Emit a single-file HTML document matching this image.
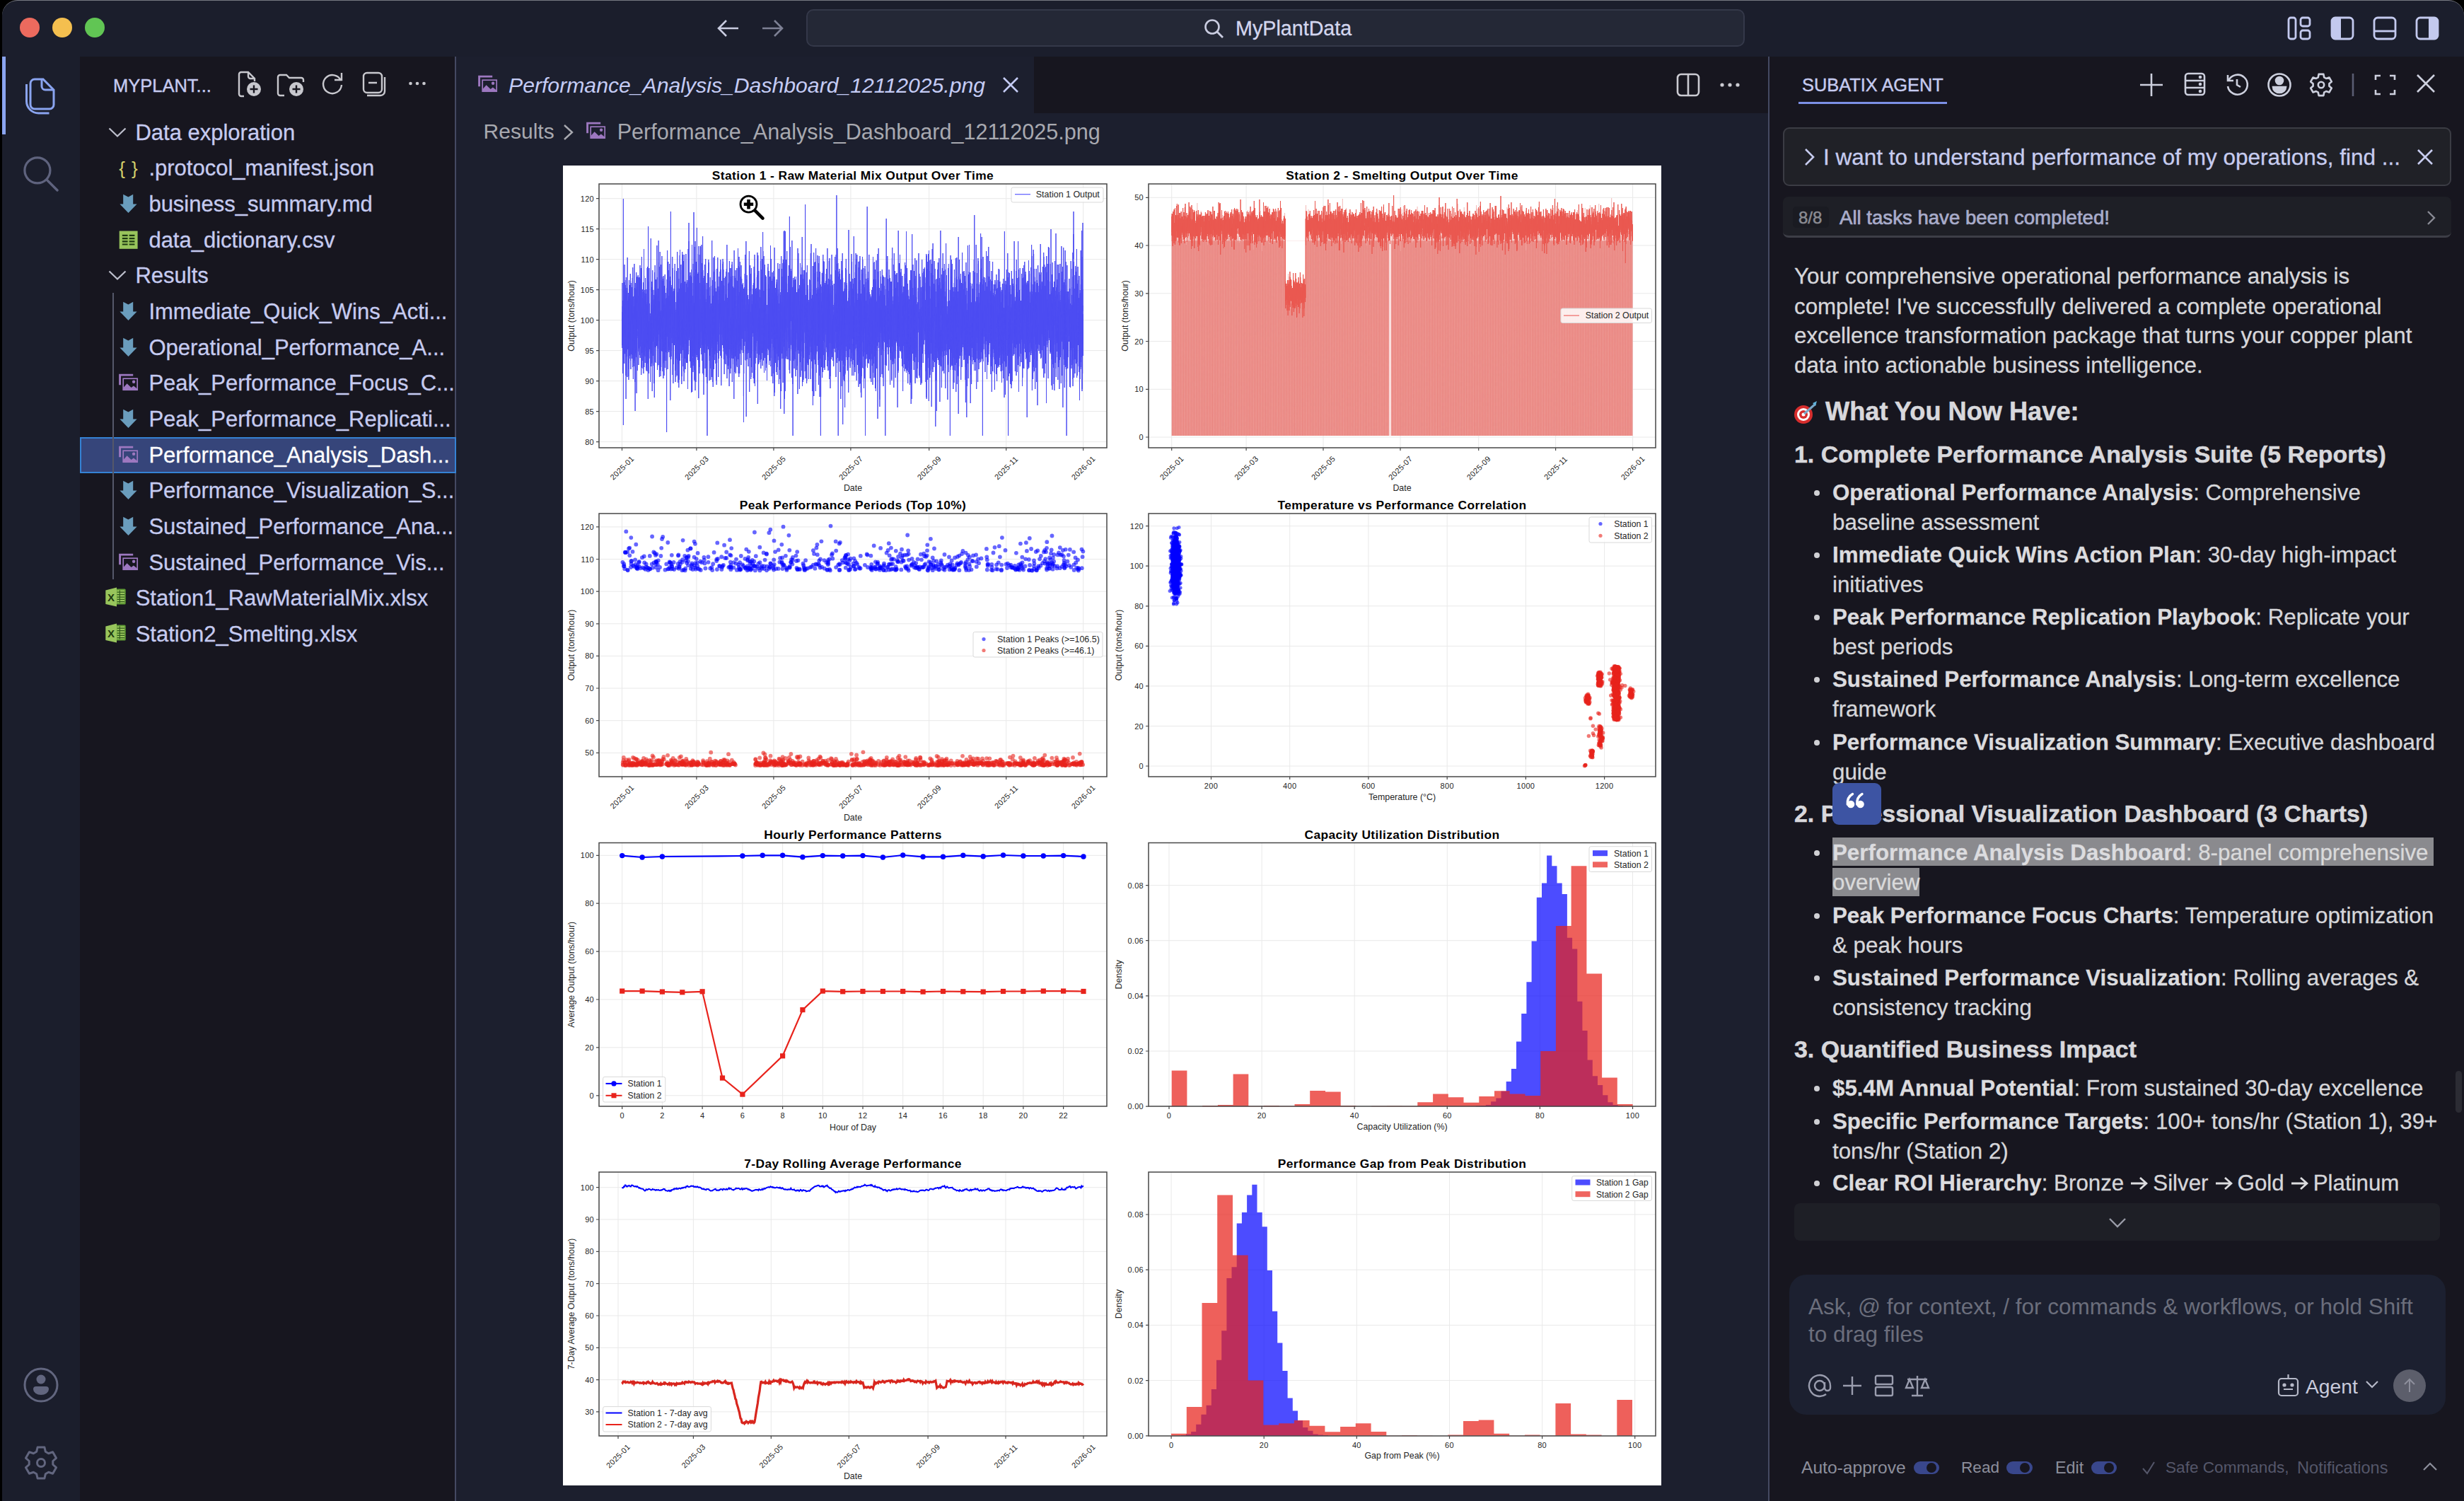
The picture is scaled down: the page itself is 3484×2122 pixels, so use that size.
<!DOCTYPE html>
<html><head><meta charset="utf-8"><style>
*{margin:0;padding:0;box-sizing:border-box}
html,body{width:3484px;height:2122px;overflow:hidden;background:#000;font-family:"Liberation Sans",sans-serif}
.abs{position:absolute}
.t31{position:absolute;font-size:31px;line-height:50px;white-space:nowrap;-webkit-text-stroke:0.3px currentColor}
.a31{position:absolute;font-size:31.3px;line-height:42px;white-space:nowrap;color:#d6d6da;-webkit-text-stroke:0.3px #d6d6da}
.a31 b{color:#dcdcdf}
.h34{position:absolute;font-size:33.9px;line-height:42px;white-space:nowrap;color:#d8d8dc;font-weight:bold;-webkit-text-stroke:0.5px #d8d8dc}
.h36{position:absolute;font-size:36.2px;line-height:42px;white-space:nowrap;color:#d8d8dc;font-weight:bold;-webkit-text-stroke:0.5px #d8d8dc}
.hl{color:#dadada}
</style></head><body>
<div class="abs" id="win" style="left:3px;top:0;width:3481px;height:2122px;background:#1b1e2c;border-radius:22px 22px 0 0;overflow:hidden;border-top:1.5px solid #777a82">
</div>
<!-- title bar -->
<div class="abs" style="left:28px;top:25px;width:28px;height:28px;border-radius:50%;background:#ec6a5e"></div>
<div class="abs" style="left:74px;top:25px;width:28px;height:28px;border-radius:50%;background:#f4bf4f"></div>
<div class="abs" style="left:120px;top:25px;width:28px;height:28px;border-radius:50%;background:#61c554"></div>
<svg class="abs" style="left:1012px;top:24px" width="36" height="32" viewBox="0 0 36 32"><path d="M32 16H5M15 5L4 16l11 11" fill="none" stroke="#c9cce0" stroke-width="2.6"/></svg>
<svg class="abs" style="left:1074px;top:24px" width="36" height="32" viewBox="0 0 36 32"><path d="M4 16h27M21 5l11 11-11 11" fill="none" stroke="#7d8094" stroke-width="2.6"/></svg>
<div class="abs" style="left:1140px;top:13px;width:1327px;height:53px;border-radius:10px;background:#242836;border:2px solid #343849"></div>
<svg class="abs" style="left:1701px;top:25px" width="32" height="32" viewBox="0 0 32 32"><circle cx="13" cy="13" r="9.5" fill="none" stroke="#c9cce0" stroke-width="2.6"/><path d="M20 20l8 8" stroke="#c9cce0" stroke-width="2.8"/></svg>
<div class="abs" style="left:1747px;top:20px;font-size:28.7px;line-height:40px;color:#d3d6ee;-webkit-text-stroke:0.3px #d3d6ee">MyPlantData</div>
<svg class="abs" style="left:3234px;top:22px" width="240" height="36" viewBox="0 0 240 36">
 <g fill="none" stroke="#c3c9ee" stroke-width="2.8">
  <rect x="2" y="3" width="10" height="30" rx="3"/><rect x="19" y="3" width="13" height="12" rx="3"/><rect x="19" y="21" width="13" height="12" rx="3"/>
  <rect x="63" y="3" width="30" height="30" rx="5"/>
  <rect x="123" y="3" width="30" height="30" rx="5"/><path d="M123 22h30"/>
  <rect x="183" y="3" width="30" height="30" rx="5"/>
 </g>
 <path d="M63 8a5 5 0 0 1 5-5h8v30h-8a5 5 0 0 1-5-5z" fill="#c3c9ee"/>
 <path d="M200 3h8a5 5 0 0 1 5 5v20a5 5 0 0 1-5 5h-8z" fill="#c3c9ee"/>
</svg>

<!-- activity bar -->
<div class="abs" style="left:3px;top:80px;width:5px;height:110px;background:#8aa4f0"></div>
<svg class="abs" style="left:0;top:80px" width="113" height="220" viewBox="0 0 113 220">
 <path d="M49 32h12l15 15v21a6 6 0 0 1-6 6H49a6 6 0 0 1-6-6V38a6 6 0 0 1 6-6z" fill="none" stroke="#8aa4f0" stroke-width="3"/>
 <path d="M59 32v10a5 5 0 0 0 5 5h12" fill="none" stroke="#8aa4f0" stroke-width="3"/>
 <path d="M37.5 39v24a17 17 0 0 0 17 17h15" fill="none" stroke="#8aa4f0" stroke-width="3"/>
 <circle cx="52.9" cy="160.8" r="18" fill="none" stroke="#5f637e" stroke-width="3.2"/>
 <path d="M66 174l15 15" stroke="#5f637e" stroke-width="3.4" stroke-linecap="round"/>
</svg>
<svg class="abs" style="left:32px;top:1932px" width="52" height="52" viewBox="0 0 52 52"><circle cx="26" cy="26" r="23" fill="none" stroke="#62667f" stroke-width="3"/><circle cx="26" cy="18" r="6.5" fill="#62667f"/><path d="M15 32a4 4 0 0 1 4-4h14a4 4 0 0 1 4 4a11 8 0 0 1-22 0z" fill="#62667f"/></svg>
<svg class="abs" style="left:32px;top:2042px" width="52" height="52" viewBox="0 0 52 52"><path d="M19.7 10.2L21.1 4.0L30.9 4.0L32.3 10.2L36.6 12.7L42.6 10.8L47.5 19.3L42.8 23.5L42.8 28.5L47.5 32.7L42.6 41.2L36.6 39.3L32.3 41.8L30.9 48.0L21.1 48.0L19.7 41.8L15.4 39.3L9.4 41.2L4.5 32.7L9.2 28.5L9.2 23.5L4.5 19.3L9.4 10.8L15.4 12.7Z" fill="none" stroke="#62667f" stroke-width="3" stroke-linejoin="round"/><circle cx="26" cy="26" r="5.5" fill="none" stroke="#62667f" stroke-width="3"/></svg>

<!-- sidebar -->
<div class="abs" style="left:113px;top:80px;width:530px;height:2042px;background:#17161f"></div>
<div class="abs" style="left:643px;top:80px;width:2px;height:2042px;background:#444962"></div>
<div class="abs" style="left:160px;top:101px;font-size:25.5px;line-height:40px;color:#c6cbf0;-webkit-text-stroke:0.4px #c6cbf0">MYPLANT...</div>
<svg class="abs" style="left:330px;top:97px" width="290" height="44" viewBox="0 0 290 44" fill="none" stroke="#c8c8ce" stroke-width="2.4">
 <path d="M15 39h-4a3 3 0 0 1-3-3V8a3 3 0 0 1 3-3h10l9 9v4M21 5v6a3 3 0 0 0 3 3h6"/>
 <circle cx="29" cy="29" r="10" fill="#c8c8ce" stroke="none"/><path d="M29 23.5v11M23.5 29h11" stroke="#17161f" stroke-width="2.4"/>
 <path d="M72 38h-6a3 3 0 0 1-3-3V12a3 3 0 0 1 3-3h9l4 4h17a3 3 0 0 1 3 3v3"/>
 <circle cx="89" cy="29" r="10" fill="#c8c8ce" stroke="none"/><path d="M89 23.5v11M83.5 29h11" stroke="#17161f" stroke-width="2.4"/>
 <path d="M152 17a13 13 0 1 0 1 6M153 6v10h-10"/>
 <rect x="184" y="6" width="26" height="28" rx="5"/><path d="M191 20h12M189 38h19a6 6 0 0 0 6-6V12"/>
 <circle cx="250.5" cy="21" r="2.3" fill="#c8c8ce" stroke="none"/><circle cx="260" cy="21" r="2.3" fill="#c8c8ce" stroke="none"/><circle cx="269.5" cy="21" r="2.3" fill="#c8c8ce" stroke="none"/>
</svg>
<div style="position:absolute;left:152px;top:174.5px;width:28px;height:24px"><svg width="28" height="24" viewBox="0 0 28 24"><path d="M2.5 6.5L14 17.5L25.5 6.5" fill="none" stroke="#bdbfcc" stroke-width="2.3"/></svg></div>
<div class="t31" style="left:191.4px;top:162.5px;color:#c6cbf0">Data exploration</div>
<div style="position:absolute;left:167px;top:224.2px;width:30px;height:28px;display:flex;align-items:center;justify-content:center"><svg width="30" height="30" viewBox="0 0 30 30"><text x="15" y="24" text-anchor="middle" font-family="Liberation Sans" font-size="26" fill="#d4cf6a" letter-spacing="1">{ }</text></svg></div>
<div class="t31" style="left:210.4px;top:213.2px;color:#c6cbf0">.protocol_manifest.json</div>
<div style="position:absolute;left:167px;top:274.9px;width:30px;height:28px;display:flex;align-items:center;justify-content:center"><svg width="30" height="30" viewBox="0 0 30 30"><path d="M7.2 0.8L14.4 4.6L21.2 0.8V14.6H26.6L14.5 27L2.4 14.6H7.2Z" fill="#6a9dbd"/></svg></div>
<div class="t31" style="left:210.4px;top:263.9px;color:#c6cbf0">business_summary.md</div>
<div style="position:absolute;left:167px;top:325.5px;width:30px;height:28px;display:flex;align-items:center;justify-content:center"><svg width="30" height="28" viewBox="0 0 30 28"><rect x="1.7" y="0.5" width="25.9" height="25.3" fill="#98c55c"/><path d="M5.9 6.9h7.7M15.7 6.9h7.7M5.9 11.1h7.7M15.7 11.1h7.7M5.9 15.3h7.7M15.7 15.3h7.7M5.9 19.5h7.7M15.7 19.5h7.7" stroke="#1e3a12" stroke-width="2.2"/></svg></div>
<div class="t31" style="left:210.4px;top:314.5px;color:#c6cbf0">data_dictionary.csv</div>
<div style="position:absolute;left:152px;top:377.2px;width:28px;height:24px"><svg width="28" height="24" viewBox="0 0 28 24"><path d="M2.5 6.5L14 17.5L25.5 6.5" fill="none" stroke="#bdbfcc" stroke-width="2.3"/></svg></div>
<div class="t31" style="left:191.4px;top:365.2px;color:#c6cbf0">Results</div>
<div style="position:absolute;left:167px;top:426.9px;width:30px;height:28px;display:flex;align-items:center;justify-content:center"><svg width="30" height="30" viewBox="0 0 30 30"><path d="M7.2 0.8L14.4 4.6L21.2 0.8V14.6H26.6L14.5 27L2.4 14.6H7.2Z" fill="#6a9dbd"/></svg></div>
<div class="t31" style="left:210.4px;top:415.9px;color:#c6cbf0">Immediate_Quick_Wins_Acti...</div>
<div style="position:absolute;left:167px;top:477.6px;width:30px;height:28px;display:flex;align-items:center;justify-content:center"><svg width="30" height="30" viewBox="0 0 30 30"><path d="M7.2 0.8L14.4 4.6L21.2 0.8V14.6H26.6L14.5 27L2.4 14.6H7.2Z" fill="#6a9dbd"/></svg></div>
<div class="t31" style="left:210.4px;top:466.6px;color:#c6cbf0">Operational_Performance_A...</div>
<div style="position:absolute;left:167px;top:528.3px;width:30px;height:28px;display:flex;align-items:center;justify-content:center"><svg width="30" height="28" viewBox="0 0 30 28"><path d="M2.6 16.3V2.1H21.2" fill="none" stroke="#9d78c0" stroke-width="2.9"/><rect x="7.2" y="7.2" width="20" height="16" fill="none" stroke="#9d78c0" stroke-width="1.7"/><path d="M7 20.5L12.6 14.3L18.6 20L21.9 17.4L27.5 22V23.9H7Z" fill="#9d78c0"/><circle cx="22.1" cy="11.8" r="2.2" fill="#9d78c0"/></svg></div>
<div class="t31" style="left:210.4px;top:517.3px;color:#c6cbf0">Peak_Performance_Focus_C...</div>
<div style="position:absolute;left:167px;top:578.9px;width:30px;height:28px;display:flex;align-items:center;justify-content:center"><svg width="30" height="30" viewBox="0 0 30 30"><path d="M7.2 0.8L14.4 4.6L21.2 0.8V14.6H26.6L14.5 27L2.4 14.6H7.2Z" fill="#6a9dbd"/></svg></div>
<div class="t31" style="left:210.4px;top:567.9px;color:#c6cbf0">Peak_Performance_Replicati...</div>
<div style="position:absolute;left:113px;top:617.5px;width:528px;height:47px;background:#36457a;border:2px solid #3582d4;box-sizing:content-box"></div>
<div style="position:absolute;left:167px;top:629.6px;width:30px;height:28px;display:flex;align-items:center;justify-content:center"><svg width="30" height="28" viewBox="0 0 30 28"><path d="M2.6 16.3V2.1H21.2" fill="none" stroke="#9d78c0" stroke-width="2.9"/><rect x="7.2" y="7.2" width="20" height="16" fill="none" stroke="#9d78c0" stroke-width="1.7"/><path d="M7 20.5L12.6 14.3L18.6 20L21.9 17.4L27.5 22V23.9H7Z" fill="#9d78c0"/><circle cx="22.1" cy="11.8" r="2.2" fill="#9d78c0"/></svg></div>
<div class="t31" style="left:210.4px;top:618.6px;color:#ffffff">Performance_Analysis_Dash...</div>
<div style="position:absolute;left:167px;top:680.3px;width:30px;height:28px;display:flex;align-items:center;justify-content:center"><svg width="30" height="30" viewBox="0 0 30 30"><path d="M7.2 0.8L14.4 4.6L21.2 0.8V14.6H26.6L14.5 27L2.4 14.6H7.2Z" fill="#6a9dbd"/></svg></div>
<div class="t31" style="left:210.4px;top:669.3px;color:#c6cbf0">Performance_Visualization_S...</div>
<div style="position:absolute;left:167px;top:731.0px;width:30px;height:28px;display:flex;align-items:center;justify-content:center"><svg width="30" height="30" viewBox="0 0 30 30"><path d="M7.2 0.8L14.4 4.6L21.2 0.8V14.6H26.6L14.5 27L2.4 14.6H7.2Z" fill="#6a9dbd"/></svg></div>
<div class="t31" style="left:210.4px;top:720.0px;color:#c6cbf0">Sustained_Performance_Ana...</div>
<div style="position:absolute;left:167px;top:781.7px;width:30px;height:28px;display:flex;align-items:center;justify-content:center"><svg width="30" height="28" viewBox="0 0 30 28"><path d="M2.6 16.3V2.1H21.2" fill="none" stroke="#9d78c0" stroke-width="2.9"/><rect x="7.2" y="7.2" width="20" height="16" fill="none" stroke="#9d78c0" stroke-width="1.7"/><path d="M7 20.5L12.6 14.3L18.6 20L21.9 17.4L27.5 22V23.9H7Z" fill="#9d78c0"/><circle cx="22.1" cy="11.8" r="2.2" fill="#9d78c0"/></svg></div>
<div class="t31" style="left:210.4px;top:770.7px;color:#c6cbf0">Sustained_Performance_Vis...</div>
<div style="position:absolute;left:147px;top:830.3px;width:32px;height:32px"><svg width="32" height="32" viewBox="0 0 32 32"><rect x="17" y="2.4" width="13.7" height="22" rx="1.5" fill="#5e9a34"/><rect x="18.5" y="4.5" width="10.5" height="18" fill="#98c55c"/><path d="M18.5 7.1h10.5M18.5 10.7h10.5M18.5 14.1h10.5M18.5 17.4h10.5M18.5 20.7h10.5M22.3 4.5v18" stroke="#2f5a1a" stroke-width="1.2"/><path d="M2.3 4.4L18 0.4V27.4L2.3 24.1Z" fill="#98c55c"/><text x="10" y="19.6" text-anchor="middle" font-family="Liberation Sans" font-size="15" font-weight="bold" fill="#1d3a10">X</text></svg></div>
<div class="t31" style="left:191.7px;top:821.3px;color:#c6cbf0">Station1_RawMaterialMix.xlsx</div>
<div style="position:absolute;left:147px;top:881.0px;width:32px;height:32px"><svg width="32" height="32" viewBox="0 0 32 32"><rect x="17" y="2.4" width="13.7" height="22" rx="1.5" fill="#5e9a34"/><rect x="18.5" y="4.5" width="10.5" height="18" fill="#98c55c"/><path d="M18.5 7.1h10.5M18.5 10.7h10.5M18.5 14.1h10.5M18.5 17.4h10.5M18.5 20.7h10.5M22.3 4.5v18" stroke="#2f5a1a" stroke-width="1.2"/><path d="M2.3 4.4L18 0.4V27.4L2.3 24.1Z" fill="#98c55c"/><text x="10" y="19.6" text-anchor="middle" font-family="Liberation Sans" font-size="15" font-weight="bold" fill="#1d3a10">X</text></svg></div>
<div class="t31" style="left:191.7px;top:872.0px;color:#c6cbf0">Station2_Smelting.xlsx</div>
<div style="position:absolute;left:159px;top:414px;width:2px;height:405px;background:#55586a"></div>

<!-- editor -->
<div class="abs" style="left:645px;top:80px;width:1855px;height:2042px;background:#1c1f2e"></div>
<div class="abs" style="left:1462px;top:80px;width:1038px;height:80px;background:#17161f"></div>
<div class="abs" style="left:675px;top:106px"><svg width="30" height="28" viewBox="0 0 30 28"><path d="M2.6 16.3V2.1H21.2" fill="none" stroke="#9d78c0" stroke-width="2.9"/><rect x="7.2" y="7.2" width="20" height="16" fill="none" stroke="#9d78c0" stroke-width="1.7"/><path d="M7 20.5L12.6 14.3L18.6 20L21.9 17.4L27.5 22V23.9H7Z" fill="#9d78c0"/><circle cx="22.1" cy="11.8" r="2.2" fill="#9d78c0"/></svg></div>
<div class="abs" style="left:719px;top:101px;font-size:30.2px;line-height:40px;font-style:italic;color:#c5ccf5;white-space:nowrap">Performance_Analysis_Dashboard_12112025.png</div>
<svg class="abs" style="left:1416px;top:107px" width="26" height="26" viewBox="0 0 26 26"><path d="M3 3l20 20M23 3L3 23" stroke="#c5ccf5" stroke-width="2.5"/></svg>
<svg class="abs" style="left:2370px;top:103px" width="34" height="34" viewBox="0 0 34 34" fill="none" stroke="#cbcbd2" stroke-width="2.6"><rect x="2" y="2" width="30" height="30" rx="5"/><path d="M17 2v30"/></svg>
<svg class="abs" style="left:2430px;top:113px" width="32" height="14" viewBox="0 0 32 14" fill="#cbcbd2"><circle cx="5" cy="7" r="2.6"/><circle cx="16" cy="7" r="2.6"/><circle cx="27" cy="7" r="2.6"/></svg>
<div class="abs" style="left:683.6px;top:166px;font-size:30px;line-height:40px;color:#a8a9b0">Results</div>
<svg class="abs" style="left:795px;top:175px" width="18" height="24" viewBox="0 0 18 24"><path d="M3 2l11 10L3 22" fill="none" stroke="#a8a9b0" stroke-width="2.4"/></svg>
<div class="abs" style="left:828px;top:172px"><svg width="30" height="28" viewBox="0 0 30 28"><path d="M2.6 16.3V2.1H21.2" fill="none" stroke="#9d78c0" stroke-width="2.9"/><rect x="7.2" y="7.2" width="20" height="16" fill="none" stroke="#9d78c0" stroke-width="1.7"/><path d="M7 20.5L12.6 14.3L18.6 20L21.9 17.4L27.5 22V23.9H7Z" fill="#9d78c0"/><circle cx="22.1" cy="11.8" r="2.2" fill="#9d78c0"/></svg></div>
<div class="abs" style="left:872.7px;top:166px;font-size:30.6px;line-height:40px;color:#a8a9b0;white-space:nowrap">Performance_Analysis_Dashboard_12112025.png</div>
<div class="abs" style="left:796px;top:234px;width:1553px;height:1866px"><svg width="1553" height="1866" viewBox="0 0 1553 1866" style="display:block"><style>text{font-family:'Liberation Sans',sans-serif} .tk{font-size:11px;letter-spacing:0.3px;fill:#262626} .ti{font-size:17.4px;letter-spacing:0.4px;font-weight:bold;fill:#000} .al{font-size:12.4px;fill:#262626} .lg{font-size:12.4px;fill:#262626}</style><rect width="1553" height="1866" fill="#fff"/><path d="M83.5 26V399M188.9 26V399M297.9 26V399M406.9 26V399M517.7 26V399M626.7 26V399M735.7 26V399M51 390.6H769M51 347.6H769M51 304.6H769M51 261.6H769M51 218.6H769M51 175.7H769M51 132.7H769M51 89.7H769M51 46.7H769" stroke="#e9e9e9" stroke-width="1" fill="none"/><polyline points="83.5,219 83.6,207 83.6,229 83.7,254 83.8,237 83.9,258 83.9,216 84.0,166 84.1,238 84.2,243 84.2,199 84.3,205 84.4,214 84.5,255 84.5,220 84.6,191 84.7,272 84.8,237 84.8,294 84.9,270 85.0,291 85.1,228 85.1,269 85.2,208 85.3,212 85.4,47 85.4,367 85.5,301 85.6,221 85.7,214 85.7,279 85.8,238 85.9,257 86.0,251 86.0,177 86.1,251 86.2,220 86.3,184 86.3,242 86.4,223 86.5,246 86.6,216 86.6,267 86.7,216 86.8,165 86.8,280 86.9,185 87.0,214 87.1,244 87.1,140 87.2,189 87.3,266 87.4,216 87.4,196 87.5,226 87.6,192 87.7,221 87.7,192 87.8,162 87.9,245 88.0,211 88.0,237 88.1,214 88.2,266 88.3,242 88.3,226 88.4,183 88.5,173 88.6,271 88.6,250 88.7,193 88.8,297 88.9,237 88.9,222 89.0,169 89.1,330 89.2,232 89.2,233 89.3,229 89.4,158 89.5,236 89.5,231 89.6,205 89.7,223 89.8,226 89.8,263 89.9,219 90.0,236 90.1,173 90.1,193 90.2,220 90.3,192 90.3,232 90.4,177 90.5,219 90.6,196 90.6,270 90.7,205 90.8,285 90.9,299 90.9,231 91.0,254 91.1,212 91.2,130 91.2,252 91.3,243 91.4,211 91.5,199 91.5,226 91.6,227 91.7,191 91.8,198 91.8,260 91.9,222 92.0,217 92.1,260 92.1,208 92.2,253 92.3,180 92.4,211 92.4,215 92.5,242 92.6,223 92.7,298 92.7,263 92.8,204 92.9,303 93.0,185 93.0,288 93.1,189 93.2,252 93.3,188 93.3,213 93.4,279 93.5,169 93.5,162 93.6,221 93.7,229 93.8,225 93.8,257 93.9,175 94.0,240 94.1,221 94.1,250 94.2,243 94.3,269 94.4,169 94.4,225 94.5,180 94.6,218 94.7,246 94.7,232 94.8,241 94.9,218 95.0,233 95.0,231 95.1,273 95.2,251 95.3,153 95.3,245 95.4,260 95.5,205 95.6,163 95.6,276 95.7,227 95.8,192 95.9,288 95.9,190 96.0,220 96.1,216 96.2,248 96.2,201 96.3,240 96.4,253 96.5,262 96.5,267 96.6,166 96.7,239 96.7,207 96.8,220 96.9,236 97.0,239 97.0,194 97.1,231 97.2,225 97.3,218 97.3,172 97.4,192 97.5,204 97.6,241 97.6,273 97.7,181 97.8,180 97.9,224 97.9,197 98.0,188 98.1,186 98.2,182 98.2,237 98.3,159 98.4,268 98.5,185 98.5,199 98.6,184 98.7,144 98.8,160 98.8,264 98.9,285 99.0,186 99.1,259 99.1,219 99.2,185 99.3,284 99.4,302 99.4,208 99.5,217 99.6,228 99.7,217 99.7,253 99.8,279 99.9,225 100.0,257 100.0,284 100.1,199 100.2,216 100.2,203 100.3,258 100.4,245 100.5,258 100.5,254 100.6,211 100.7,205 100.8,205 100.8,205 100.9,139 101.0,274 101.1,184 101.1,222 101.2,219 101.3,276 101.4,237 101.4,189 101.5,222 101.6,215 101.7,230 101.7,173 101.8,219 101.9,306 102.0,246 102.0,297 102.1,347 102.2,240 102.3,166 102.3,217 102.4,265 102.5,256 102.6,174 102.6,212 102.7,217 102.8,221 102.9,217 102.9,187 103.0,197 103.1,210 103.2,260 103.2,198 103.3,246 103.4,175 103.4,269 103.5,224 103.6,219 103.7,271 103.7,151 103.8,161 103.9,237 104.0,188 104.0,204 104.1,322 104.2,209 104.3,221 104.3,215 104.4,261 104.5,229 104.6,226 104.6,172 104.7,216 104.8,219 104.9,158 104.9,241 105.0,234 105.1,290 105.2,157 105.2,181 105.3,182 105.4,214 105.5,214 105.5,210 105.6,229 105.7,231 105.8,217 105.8,159 105.9,197 106.0,221 106.1,242 106.1,244 106.2,155 106.3,199 106.4,216 106.4,232 106.5,263 106.6,221 106.7,184 106.7,234 106.8,228 106.9,227 106.9,214 107.0,282 107.1,228 107.2,252 107.2,184 107.3,249 107.4,191 107.5,158 107.5,231 107.6,242 107.7,211 107.8,219 107.8,258 107.9,200 108.0,164 108.1,229 108.1,227 108.2,260 108.3,206 108.4,268 108.4,262 108.5,168 108.6,254 108.7,176 108.7,158 108.8,208 108.9,197 109.0,141 109.0,226 109.1,242 109.2,272 109.3,217 109.3,160 109.4,181 109.5,256 109.6,252 109.6,239 109.7,207 109.8,227 109.9,210 109.9,207 110.0,230 110.1,220 110.1,210 110.2,222 110.3,199 110.4,145 110.4,195 110.5,216 110.6,285 110.7,203 110.7,296 110.8,274 110.9,185 111.0,191 111.0,225 111.1,286 111.2,233 111.3,245 111.3,193 111.4,129 111.5,210 111.6,249 111.6,265 111.7,221 111.8,226 111.9,238 111.9,214 112.0,264 112.1,175 112.2,177 112.2,176 112.3,237 112.4,198 112.5,224 112.5,234 112.6,232 112.7,270 112.8,276 112.8,187 112.9,226 113.0,210 113.1,179 113.1,287 113.2,250 113.3,212 113.3,203 113.4,234 113.5,178 113.6,210 113.6,267 113.7,255 113.8,187 113.9,200 113.9,294 114.0,165 114.1,195 114.2,166 114.2,234 114.3,230 114.4,263 114.5,118 114.5,226 114.6,156 114.7,244 114.8,212 114.8,285 114.9,252 115.0,180 115.1,268 115.1,176 115.2,205 115.3,260 115.4,238 115.4,237 115.5,221 115.6,240 115.7,251 115.7,231 115.8,259 115.9,270 116.0,221 116.0,184 116.1,279 116.2,219 116.3,244 116.3,257 116.4,185 116.5,239 116.6,159 116.6,249 116.7,248 116.8,228 116.8,248 116.9,195 117.0,225 117.1,195 117.1,221 117.2,262 117.3,223 117.4,199 117.4,181 117.5,254 117.6,246 117.7,287 117.7,193 117.8,261 117.9,290 118.0,221 118.0,175 118.1,279 118.2,262 118.3,248 118.3,263 118.4,204 118.5,251 118.6,247 118.6,196 118.7,249 118.8,202 118.9,247 118.9,267 119.0,291 119.1,145 119.2,231 119.2,209 119.3,220 119.4,212 119.5,217 119.5,143 119.6,260 119.7,280 119.8,259 119.8,271 119.9,189 120.0,186 120.0,257 120.1,274 120.2,233 120.3,326 120.3,330 120.4,198 120.5,261 120.6,86 120.6,261 120.7,230 120.8,278 120.9,257 120.9,164 121.0,186 121.1,235 121.2,253 121.2,294 121.3,234 121.4,220 121.5,222 121.5,222 121.6,263 121.7,221 121.8,220 121.8,168 121.9,145 122.0,224 122.1,249 122.1,221 122.2,243 122.3,248 122.4,221 122.4,260 122.5,195 122.6,223 122.7,209 122.7,226 122.8,247 122.9,256 123.0,228 123.0,240 123.1,209 123.2,219 123.2,273 123.3,216 123.4,272 123.5,243 123.5,306 123.6,301 123.7,215 123.8,213 123.8,225 123.9,235 124.0,233 124.1,257 124.1,229 124.2,241 124.3,103 124.4,266 124.4,209 124.5,213 124.6,224 124.7,236 124.7,197 124.8,284 124.9,200 125.0,209 125.0,207 125.1,203 125.2,245 125.3,229 125.3,193 125.4,202 125.5,210 125.6,279 125.6,197 125.7,172 125.8,179 125.9,164 125.9,280 126.0,181 126.1,224 126.2,319 126.2,204 126.3,278 126.4,270 126.5,244 126.5,168 126.6,233 126.7,148 126.7,150 126.8,156 126.9,223 127.0,228 127.0,269 127.1,246 127.2,202 127.3,203 127.3,214 127.4,202 127.5,249 127.6,221 127.6,190 127.7,196 127.8,176 127.9,185 127.9,231 128.0,204 128.1,258 128.2,283 128.2,196 128.3,221 128.4,206 128.5,286 128.5,233 128.6,242 128.7,253 128.8,308 128.8,232 128.9,183 129.0,204 129.1,242 129.1,219 129.2,189 129.3,328 129.4,224 129.4,197 129.5,192 129.6,151 129.7,174 129.7,206 129.8,207 129.9,188 129.9,240 130.0,220 130.1,183 130.2,141 130.2,199 130.3,221 130.4,178 130.5,166 130.5,220 130.6,161 130.7,257 130.8,226 130.8,226 130.9,188 131.0,177 131.1,278 131.1,255 131.2,205 131.3,245 131.4,279 131.4,178 131.5,161 131.6,199 131.7,237 131.7,178 131.8,228 131.9,175 132.0,255 132.0,252 132.1,211 132.2,246 132.3,192 132.3,208 132.4,255 132.5,216 132.6,233 132.6,182 132.7,244 132.8,236 132.9,113 132.9,130 133.0,140 133.1,216 133.2,210 133.2,158 133.3,224 133.4,257 133.4,214 133.5,289 133.6,251 133.7,284 133.7,275 133.8,192 133.9,249 134.0,224 134.0,210 134.1,194 134.2,185 134.3,199 134.3,254 134.4,233 134.5,259 134.6,174 134.6,220 134.7,248 134.8,233 134.9,227 134.9,191 135.0,282 135.1,260 135.2,106 135.2,119 135.3,181 135.4,223 135.5,190 135.5,137 135.6,228 135.7,233 135.8,171 135.8,199 135.9,192 136.0,239 136.1,143 136.1,151 136.2,196 136.3,192 136.4,299 136.4,193 136.5,226 136.6,201 136.6,192 136.7,232 136.8,286 136.9,204 136.9,248 137.0,232 137.1,243 137.2,232 137.2,122 137.3,171 137.4,209 137.5,175 137.5,140 137.6,218 137.7,290 137.8,254 137.8,266 137.9,238 138.0,216 138.1,298 138.1,205 138.2,278 138.3,207 138.4,223 138.4,231 138.5,222 138.6,240 138.7,243 138.7,285 138.8,220 138.9,146 139.0,140 139.0,166 139.1,191 139.2,245 139.3,162 139.3,221 139.4,221 139.5,230 139.6,215 139.6,236 139.7,222 139.8,262 139.8,233 139.9,128 140.0,221 140.1,228 140.1,198 140.2,191 140.3,263 140.4,227 140.4,182 140.5,208 140.6,214 140.7,157 140.7,245 140.8,215 140.9,239 141.0,160 141.0,291 141.1,245 141.2,240 141.3,192 141.3,195 141.4,163 141.5,281 141.6,197 141.6,230 141.7,245 141.8,197 141.9,255 141.9,301 142.0,233 142.1,278 142.2,244 142.2,204 142.3,206 142.4,156 142.5,227 142.5,279 142.6,249 142.7,255 142.8,267 142.8,201 142.9,244 143.0,297 143.1,191 143.1,223 143.2,205 143.3,214 143.3,194 143.4,217 143.5,170 143.6,202 143.6,203 143.7,202 143.8,276 143.9,225 143.9,229 144.0,210 144.1,272 144.2,154 144.2,215 144.3,267 144.4,286 144.5,230 144.5,222 144.6,247 144.7,215 144.8,244 144.8,197 144.9,247 145.0,220 145.1,180 145.1,200 145.2,259 145.3,237 145.4,252 145.4,188 145.5,264 145.6,238 145.7,220 145.7,257 145.8,257 145.9,237 146.0,202 146.0,276 146.1,235 146.2,213 146.3,226 146.3,289 146.4,237 146.5,187 146.5,197 146.6,377 146.7,254 146.8,194 146.8,242 146.9,265 147.0,250 147.1,161 147.1,210 147.2,173 147.3,238 147.4,182 147.4,242 147.5,225 147.6,120 147.7,188 147.7,238 147.8,222 147.9,206 148.0,171 148.0,238 148.1,288 148.2,230 148.3,218 148.3,214 148.4,167 148.5,206 148.6,187 148.6,262 148.7,184 148.8,136 148.9,188 148.9,209 149.0,213 149.1,148 149.2,255 149.2,223 149.3,200 149.4,189 149.5,236 149.5,206 149.6,230 149.7,214 149.7,224 149.8,264 149.9,219 150.0,184 150.0,257 150.1,228 150.2,192 150.3,261 150.3,211 150.4,261 150.5,174 150.6,158 150.6,139 150.7,227 150.8,189 150.9,214 150.9,215 151.0,157 151.1,271 151.2,177 151.2,221 151.3,163 151.4,211 151.5,245 151.5,208 151.6,190 151.7,217 151.8,199 151.8,332 151.9,303 152.0,183 152.1,191 152.1,213 152.2,216 152.3,178 152.4,237 152.4,65 152.5,226 152.6,172 152.7,274 152.7,172 152.8,173 152.9,262 153.0,169 153.0,222 153.1,270 153.2,233 153.2,182 153.3,172 153.4,236 153.5,203 153.5,190 153.6,244 153.7,205 153.8,220 153.8,240 153.9,238 154.0,216 154.1,217 154.1,241 154.2,235 154.3,175 154.4,210 154.4,184 154.5,171 154.6,195 154.7,129 154.7,251 154.8,187 154.9,231 155.0,145 155.0,151 155.1,296 155.2,225 155.3,192 155.3,187 155.4,190 155.5,221 155.6,201 155.6,193 155.7,222 155.8,178 155.9,308 155.9,194 156.0,260 156.1,181 156.2,228 156.2,254 156.3,204 156.4,255 156.4,255 156.5,281 156.6,220 156.7,199 156.7,178 156.8,224 156.9,177 157.0,218 157.0,222 157.1,174 157.2,177 157.3,232 157.3,228 157.4,225 157.5,215 157.6,254 157.6,178 157.7,234 157.8,200 157.9,251 157.9,204 158.0,203 158.1,235 158.2,139 158.2,204 158.3,148 158.4,181 158.5,245 158.5,234 158.6,201 158.7,208 158.8,217 158.8,230 158.9,290 159.0,228 159.1,306 159.1,204 159.2,247 159.3,247 159.4,227 159.4,208 159.5,275 159.6,288 159.7,261 159.7,299 159.8,257 159.9,256 159.9,260 160.0,193 160.1,273 160.2,207 160.2,231 160.3,221 160.4,196 160.5,149 160.5,225 160.6,214 160.7,257 160.8,196 160.8,228 160.9,186 161.0,220 161.1,150 161.1,297 161.2,230 161.3,184 161.4,233 161.4,194 161.5,275 161.6,273 161.7,214 161.7,122 161.8,173 161.9,263 162.0,253 162.0,235 162.1,179 162.2,251 162.3,246 162.3,184 162.4,184 162.5,233 162.6,263 162.6,280 162.7,246 162.8,307 162.9,189 162.9,244 163.0,200 163.1,145 163.1,172 163.2,264 163.3,184 163.4,173 163.4,248 163.5,256 163.6,223 163.7,282 163.7,160 163.8,314 163.9,262 164.0,229 164.0,228 164.1,212 164.2,208 164.3,227 164.3,174 164.4,303 164.5,219 164.6,247 164.6,213 164.7,210 164.8,255 164.9,244 164.9,187 165.0,205 165.1,246 165.2,138 165.2,127 165.3,276 165.4,207 165.5,119 165.5,188 165.6,210 165.7,227 165.8,240 165.8,227 165.9,240 166.0,189 166.1,234 166.1,236 166.2,266 166.3,221 166.3,254 166.4,226 166.5,168 166.6,204 166.6,199 166.7,205 166.8,216 166.9,224 166.9,140 167.0,189 167.1,262 167.2,166 167.2,217 167.3,248 167.4,238 167.5,245 167.5,212 167.6,247 167.7,173 167.8,250 167.8,309 167.9,248 168.0,298 168.1,220 168.1,177 168.2,193 168.3,272 168.4,249 168.4,148 168.5,206 168.6,218 168.7,177 168.7,122 168.8,167 168.9,213 169.0,142 169.0,194 169.1,243 169.2,261 169.3,217 169.3,256 169.4,221 169.5,215 169.6,126 169.6,252 169.7,223 169.8,225 169.8,201 169.9,177 170.0,238 170.1,251 170.1,284 170.2,255 170.3,197 170.4,217 170.4,259 170.5,233 170.6,135 170.7,199 170.7,242 170.8,229 170.9,291 171.0,264 171.0,155 171.1,305 171.2,232 171.3,210 171.3,126 171.4,251 171.5,221 171.6,168 171.6,222 171.7,293 171.8,224 171.9,252 171.9,240 172.0,210 172.1,193 172.2,183 172.2,238 172.3,182 172.4,172 172.5,174 172.5,164 172.6,224 172.7,226 172.8,186 172.8,273 172.9,210 173.0,240 173.0,233 173.1,288 173.2,254 173.3,219 173.3,184 173.4,179 173.5,222 173.6,226 173.6,252 173.7,203 173.8,228 173.9,125 173.9,149 174.0,220 174.1,278 174.2,253 174.2,276 174.3,266 174.4,167 174.5,213 174.5,279 174.6,193 174.7,169 174.8,233 174.8,245 174.9,232 175.0,207 175.1,193 175.1,172 175.2,189 175.3,172 175.4,165 175.4,192 175.5,279 175.6,224 175.7,206 175.7,234 175.8,183 175.9,233 176.0,255 176.0,162 176.1,192 176.2,210 176.2,182 176.3,177 176.4,205 176.5,316 176.5,245 176.6,237 176.7,258 176.8,211 176.8,172 176.9,238 177.0,264 177.1,138 177.1,118 177.2,267 177.3,209 177.4,202 177.4,247 177.5,187 177.6,238 177.7,255 177.7,212 177.8,188 177.9,244 178.0,81 178.0,222 178.1,107 178.2,247 178.3,164 178.3,221 178.4,224 178.5,190 178.6,183 178.6,169 178.7,206 178.8,242 178.9,240 178.9,198 179.0,196 179.1,163 179.2,202 179.2,177 179.3,159 179.4,212 179.5,277 179.5,265 179.6,242 179.7,156 179.7,252 179.8,170 179.9,195 180.0,151 180.0,179 180.1,223 180.2,227 180.3,215 180.3,212 180.4,240 180.5,220 180.6,155 180.6,286 180.7,208 180.8,255 180.9,211 180.9,185 181.0,221 181.1,188 181.2,282 181.2,175 181.3,243 181.4,194 181.5,211 181.5,321 181.6,249 181.7,210 181.8,157 181.8,207 181.9,208 182.0,275 182.1,162 182.1,147 182.2,218 182.3,227 182.4,283 182.4,184 182.5,112 182.6,190 182.7,320 182.7,197 182.8,258 182.9,166 182.9,267 183.0,227 183.1,208 183.2,184 183.2,202 183.3,203 183.4,249 183.5,270 183.5,216 183.6,247 183.7,270 183.8,269 183.8,238 183.9,292 184.0,272 184.1,283 184.1,211 184.2,203 184.3,139 184.4,278 184.4,246 184.5,183 184.6,227 184.7,232 184.7,151 184.8,232 184.9,264 185.0,271 185.0,66 185.1,207 185.2,273 185.3,258 185.3,198 185.4,196 185.5,244 185.6,194 185.6,196 185.7,289 185.8,231 185.9,202 185.9,241 186.0,303 186.1,230 186.2,189 186.2,156 186.3,305 186.4,115 186.4,263 186.5,181 186.6,170 186.7,180 186.7,213 186.8,265 186.9,194 187.0,247 187.0,318 187.1,107 187.2,191 187.3,147 187.3,255 187.4,161 187.5,156 187.6,157 187.6,219 187.7,266 187.8,226 187.9,306 187.9,286 188.0,215 188.1,258 188.2,225 188.2,136 188.3,142 188.4,167 188.5,220 188.5,171 188.6,249 188.7,232 188.8,183 188.8,268 188.9,230 189.0,271 189.1,214 189.1,154 189.2,248 189.3,210 189.4,254 189.4,88 189.5,268 189.6,161 189.6,125 189.7,200 189.8,247 189.9,191 189.9,232 190.0,187 190.1,207 190.2,208 190.2,195 190.3,242 190.4,235 190.5,153 190.5,236 190.6,275 190.7,224 190.8,257 190.8,215 190.9,201 191.0,275 191.1,251 191.1,200 191.2,262 191.3,151 191.4,185 191.4,232 191.5,161 191.6,279 191.7,159 191.7,245 191.8,329 191.9,114 192.0,156 192.0,259 192.1,212 192.2,227 192.3,215 192.3,277 192.4,246 192.5,200 192.6,210 192.6,171 192.7,215 192.8,126 192.8,285 192.9,208 193.0,294 193.1,268 193.1,166 193.2,256 193.3,198 193.4,221 193.4,260 193.5,232 193.6,239 193.7,238 193.7,189 193.8,193 193.9,241 194.0,255 194.0,207 194.1,223 194.2,178 194.3,114 194.3,185 194.4,220 194.5,225 194.6,253 194.6,255 194.7,258 194.8,234 194.9,236 194.9,189 195.0,234 195.1,226 195.2,115 195.2,154 195.3,199 195.4,148 195.5,187 195.5,160 195.6,228 195.7,190 195.8,112 195.8,267 195.9,172 196.0,151 196.1,202 196.1,188 196.2,168 196.3,245 196.3,202 196.4,254 196.5,246 196.6,244 196.6,224 196.7,213 196.8,200 196.9,276 196.9,138 197.0,172 197.1,189 197.2,233 197.2,222 197.3,196 197.4,202 197.5,287 197.5,189 197.6,100 197.7,294 197.8,148 197.8,204 197.9,223 198.0,163 198.1,267 198.1,212 198.2,159 198.3,227 198.4,236 198.4,214 198.5,237 198.6,195 198.7,256 198.7,183 198.8,296 198.9,191 199.0,223 199.0,324 199.1,219 199.2,262 199.3,237 199.3,254 199.4,264 199.5,262 199.5,261 199.6,214 199.7,156 199.8,205 199.8,255 199.9,221 200.0,169 200.1,180 200.1,219 200.2,217 200.3,223 200.4,242 200.4,140 200.5,218 200.6,265 200.7,238 200.7,189 200.8,193 200.9,224 201.0,246 201.0,218 201.1,287 201.2,272 201.3,186 201.3,238 201.4,203 201.5,169 201.6,192 201.6,218 201.7,132 201.8,192 201.9,233 201.9,189 202.0,202 202.1,253 202.2,216 202.2,225 202.3,299 202.4,226 202.5,230 202.5,236 202.6,286 202.7,233 202.7,220 202.8,215 202.9,265 203.0,193 203.0,268 203.1,228 203.2,166 203.3,239 203.3,239 203.4,175 203.5,234 203.6,231 203.6,210 203.7,176 203.8,308 203.9,252 203.9,260 204.0,382 204.1,253 204.2,253 204.2,206 204.3,255 204.4,214 204.5,202 204.5,248 204.6,213 204.7,152 204.8,206 204.8,244 204.9,221 205.0,256 205.1,208 205.1,184 205.2,252 205.3,227 205.4,174 205.4,239 205.5,211 205.6,260 205.7,252 205.7,239 205.8,133 205.9,235 206.0,240 206.0,241 206.1,225 206.2,193 206.2,211 206.3,137 206.4,210 206.5,161 206.5,208 206.6,195 206.7,276 206.8,224 206.8,221 206.9,201 207.0,304 207.1,184 207.1,234 207.2,236 207.3,229 207.4,228 207.4,203 207.5,269 207.6,255 207.7,207 207.7,213 207.8,234 207.9,241 208.0,252 208.0,221 208.1,172 208.2,260 208.3,158 208.3,185 208.4,237 208.5,188 208.6,277 208.6,287 208.7,270 208.8,235 208.9,232 208.9,239 209.0,215 209.1,303 209.2,199 209.2,275 209.3,245 209.4,235 209.4,264 209.5,273 209.6,258 209.7,219 209.7,195 209.8,196 209.9,258 210.0,250 210.0,255 210.1,201 210.2,299 210.3,170 210.3,238 210.4,250 210.5,205 210.6,178 210.6,205 210.7,106 210.8,213 210.9,170 210.9,169 211.0,223 211.1,162 211.2,212 211.2,215 211.3,255 211.4,230 211.5,188 211.5,271 211.6,193 211.7,205 211.8,208 211.8,306 211.9,223 212.0,256 212.1,249 212.1,215 212.2,313 212.3,192 212.4,245 212.4,184 212.5,292 212.6,191 212.7,215 212.7,187 212.8,255 212.9,243 212.9,130 213.0,251 213.1,247 213.2,198 213.2,259 213.3,172 213.4,150 213.5,288 213.5,287 213.6,172 213.7,175 213.8,186 213.8,173 213.9,253 214.0,225 214.1,273 214.1,275 214.2,180 214.3,245 214.4,128 214.4,216 214.5,244 214.6,187 214.7,147 214.7,199 214.8,267 214.9,204 215.0,164 215.0,238 215.1,249 215.2,178 215.3,213 215.3,262 215.4,234 215.5,249 215.6,207 215.6,214 215.7,173 215.8,191 215.9,280 215.9,203 216.0,183 216.1,187 216.1,178 216.2,240 216.3,256 216.4,182 216.4,261 216.5,304 216.6,178 216.7,275 216.7,231 216.8,274 216.9,271 217.0,264 217.0,233 217.1,204 217.2,310 217.3,189 217.3,265 217.4,248 217.5,192 217.6,222 217.6,279 217.7,146 217.8,253 217.9,209 217.9,211 218.0,163 218.1,237 218.2,179 218.2,248 218.3,174 218.4,249 218.5,233 218.5,144 218.6,206 218.7,214 218.8,130 218.8,204 218.9,199 219.0,190 219.1,265 219.1,174 219.2,171 219.3,241 219.3,243 219.4,212 219.5,218 219.6,257 219.6,196 219.7,299 219.8,236 219.9,235 219.9,229 220.0,206 220.1,267 220.2,195 220.2,226 220.3,244 220.4,273 220.5,265 220.5,204 220.6,257 220.7,216 220.8,177 220.8,178 220.9,157 221.0,230 221.1,262 221.1,178 221.2,206 221.3,174 221.4,218 221.4,171 221.5,185 221.6,190 221.7,199 221.7,203 221.8,209 221.9,210 222.0,179 222.0,239 222.1,150 222.2,223 222.3,180 222.3,222 222.4,228 222.5,138 222.6,231 222.6,269 222.7,247 222.8,231 222.8,133 222.9,210 223.0,182 223.1,258 223.1,205 223.2,192 223.3,147 223.4,246 223.4,195 223.5,207 223.6,259 223.7,219 223.7,229 223.8,311 223.9,195 224.0,197 224.0,236 224.1,272 224.2,221 224.3,208 224.3,178 224.4,163 224.5,239 224.6,187 224.6,228 224.7,221 224.8,222 224.9,219 224.9,175 225.0,214 225.1,225 225.2,230 225.2,205 225.3,254 225.4,239 225.5,221 225.5,241 225.6,223 225.7,243 225.8,139 225.8,166 225.9,201 226.0,221 226.0,132 226.1,206 226.2,222 226.3,207 226.3,207 226.4,163 226.5,219 226.6,136 226.6,254 226.7,191 226.8,258 226.9,147 226.9,232 227.0,221 227.1,182 227.2,169 227.2,263 227.3,232 227.4,274 227.5,213 227.5,223 227.6,232 227.7,246 227.8,234 227.8,248 227.9,198 228.0,159 228.1,295 228.1,223 228.2,235 228.3,199 228.4,256 228.4,224 228.5,260 228.6,191 228.7,215 228.7,225 228.8,204 228.9,228 229.0,280 229.0,195 229.1,207 229.2,225 229.2,180 229.3,170 229.4,262 229.5,250 229.5,157 229.6,163 229.7,248 229.8,265 229.8,244 229.9,238 230.0,281 230.1,217 230.1,210 230.2,267 230.3,182 230.4,246 230.4,221 230.5,194 230.6,186 230.7,232 230.7,217 230.8,251 230.9,150 231.0,193 231.0,262 231.1,218 231.2,190 231.3,200 231.3,146 231.4,164 231.5,240 231.6,222 231.6,269 231.7,209 231.8,213 231.9,112 231.9,215 232.0,301 232.1,245 232.2,214 232.2,268 232.3,253 232.4,233 232.5,205 232.5,225 232.6,254 232.7,187 232.7,240 232.8,238 232.9,273 233.0,250 233.0,193 233.1,283 233.2,221 233.3,190 233.3,234 233.4,209 233.5,263 233.6,167 233.6,175 233.7,209 233.8,288 233.9,260 233.9,180 234.0,151 234.1,207 234.2,283 234.2,243 234.3,226 234.4,219 234.5,202 234.5,279 234.6,181 234.7,166 234.8,264 234.8,272 234.9,205 235.0,165 235.1,312 235.1,187 235.2,212 235.3,238 235.4,135 235.4,213 235.5,248 235.6,215 235.7,260 235.7,249 235.8,203 235.9,241 235.9,236 236.0,153 236.1,185 236.2,187 236.2,198 236.3,200 236.4,161 236.5,219 236.5,145 236.6,256 236.7,294 236.8,273 236.8,232 236.9,198 237.0,161 237.1,245 237.1,218 237.2,233 237.3,248 237.4,266 237.4,216 237.5,287 237.6,214 237.7,218 237.7,245 237.8,259 237.9,273 238.0,145 238.0,272 238.1,157 238.2,195 238.3,233 238.3,264 238.4,177 238.5,157 238.6,256 238.6,230 238.7,177 238.8,205 238.9,140 238.9,241 239.0,197 239.1,268 239.2,136 239.2,248 239.3,306 239.4,251 239.4,224 239.5,143 239.6,232 239.7,219 239.7,195 239.8,156 239.9,221 240.0,178 240.0,198 240.1,230 240.2,216 240.3,218 240.3,255 240.4,171 240.5,273 240.6,172 240.6,181 240.7,222 240.8,249 240.9,228 240.9,200 241.0,189 241.1,207 241.2,179 241.2,241 241.3,209 241.4,281 241.5,188 241.5,302 241.6,235 241.7,173 241.8,191 241.8,330 241.9,217 242.0,276 242.1,223 242.1,120 242.2,239 242.3,216 242.4,229 242.4,205 242.5,193 242.6,168 242.6,258 242.7,156 242.8,292 242.9,208 242.9,173 243.0,190 243.1,256 243.2,246 243.2,237 243.3,221 243.4,173 243.5,270 243.5,200 243.6,195 243.7,197 243.8,200 243.8,159 243.9,199 244.0,185 244.1,196 244.1,148 244.2,294 244.3,255 244.4,229 244.4,230 244.5,257 244.6,293 244.7,234 244.7,246 244.8,199 244.9,277 245.0,162 245.0,208 245.1,228 245.2,247 245.3,250 245.3,263 245.4,240 245.5,218 245.6,226 245.6,275 245.7,229 245.8,254 245.8,212 245.9,145 246.0,194 246.1,231 246.1,283 246.2,275 246.3,285 246.4,190 246.4,249 246.5,216 246.6,243 246.7,215 246.7,163 246.8,246 246.9,232 247.0,251 247.0,184 247.1,259 247.2,263 247.3,274 247.3,274 247.4,200 247.5,117 247.6,258 247.6,181 247.7,209 247.8,262 247.9,230 247.9,228 248.0,246 248.1,142 248.2,294 248.2,204 248.3,206 248.4,242 248.5,213 248.5,184 248.6,213 248.7,202 248.8,191 248.8,299 248.9,160 249.0,129 249.1,180 249.1,179 249.2,274 249.3,223 249.3,251 249.4,242 249.5,180 249.6,250 249.6,228 249.7,294 249.8,225 249.9,215 249.9,247 250.0,247 250.1,144 250.2,266 250.2,260 250.3,251 250.4,171 250.5,136 250.5,206 250.6,247 250.7,236 250.8,177 250.8,255 250.9,161 251.0,163 251.1,161 251.1,193 251.2,189 251.3,157 251.4,260 251.4,172 251.5,233 251.6,249 251.7,215 251.7,227 251.8,258 251.9,282 252.0,256 252.0,161 252.1,141 252.2,193 252.3,172 252.3,239 252.4,222 252.5,207 252.5,261 252.6,258 252.7,160 252.8,231 252.8,261 252.9,203 253.0,229 253.1,178 253.1,219 253.2,231 253.3,214 253.4,225 253.4,245 253.5,235 253.6,189 253.7,193 253.7,168 253.8,183 253.9,234 254.0,235 254.0,212 254.1,237 254.2,239 254.3,188 254.3,212 254.4,265 254.5,166 254.6,179 254.6,241 254.7,186 254.8,237 254.9,174 254.9,227 255.0,250 255.1,233 255.2,249 255.2,211 255.3,212 255.4,326 255.5,241 255.5,363 255.6,215 255.7,294 255.7,209 255.8,174 255.9,208 256.0,234 256.0,226 256.1,224 256.2,240 256.3,242 256.3,255 256.4,172 256.5,219 256.6,181 256.6,229 256.7,216 256.8,225 256.9,200 256.9,186 257.0,209 257.1,245 257.2,249 257.2,153 257.3,230 257.4,230 257.5,161 257.5,176 257.6,198 257.7,234 257.8,126 257.8,203 257.9,197 258.0,225 258.1,275 258.1,271 258.2,203 258.3,203 258.4,228 258.4,265 258.5,276 258.6,232 258.7,276 258.7,183 258.8,173 258.9,107 259.0,184 259.0,242 259.1,253 259.2,355 259.2,242 259.3,226 259.4,180 259.5,194 259.5,195 259.6,210 259.7,193 259.8,161 259.8,261 259.9,237 260.0,274 260.1,155 260.1,167 260.2,189 260.3,266 260.4,212 260.4,228 260.5,215 260.6,226 260.7,198 260.7,234 260.8,185 260.9,209 261.0,230 261.0,223 261.1,236 261.2,186 261.3,229 261.3,207 261.4,234 261.5,233 261.6,183 261.6,260 261.7,192 261.8,202 261.9,284 261.9,256 262.0,239 262.1,251 262.2,265 262.2,189 262.3,228 262.4,203 262.4,236 262.5,207 262.6,248 262.7,220 262.7,196 262.8,217 262.9,237 263.0,262 263.0,212 263.1,205 263.2,240 263.3,249 263.3,197 263.4,121 263.5,231 263.6,205 263.6,204 263.7,320 263.8,214 263.9,247 263.9,164 264.0,229 264.1,249 264.2,227 264.2,212 264.3,241 264.4,221 264.5,272 264.5,228 264.6,188 264.7,141 264.8,191 264.8,208 264.9,172 265.0,178 265.1,153 265.1,176 265.2,223 265.3,208 265.4,212 265.4,207 265.5,211 265.6,250 265.7,302 265.7,245 265.8,299 265.9,216 265.9,218 266.0,285 266.1,191 266.2,184 266.2,215 266.3,153 266.4,145 266.5,266 266.5,178 266.6,201 266.7,202 266.8,182 266.8,247 266.9,242 267.0,251 267.1,249 267.1,223 267.2,276 267.3,260 267.4,196 267.4,221 267.5,204 267.6,293 267.7,250 267.7,241 267.8,217 267.9,242 268.0,182 268.0,226 268.1,218 268.2,218 268.3,191 268.3,237 268.4,174 268.5,200 268.6,213 268.6,217 268.7,198 268.8,178 268.9,181 268.9,204 269.0,184 269.1,214 269.1,169 269.2,220 269.3,301 269.4,166 269.4,214 269.5,265 269.6,226 269.7,254 269.7,255 269.8,199 269.9,281 270.0,197 270.0,234 270.1,143 270.2,260 270.3,308 270.3,216 270.4,232 270.5,235 270.6,303 270.6,254 270.7,152 270.8,294 270.9,160 270.9,241 271.0,126 271.1,201 271.2,226 271.2,175 271.3,198 271.4,242 271.5,312 271.5,239 271.6,289 271.7,216 271.8,232 271.8,243 271.9,205 272.0,280 272.1,272 272.1,238 272.2,239 272.3,216 272.3,174 272.4,237 272.5,199 272.6,195 272.6,262 272.7,210 272.8,256 272.9,177 272.9,201 273.0,218 273.1,272 273.2,214 273.2,249 273.3,191 273.4,223 273.5,251 273.5,182 273.6,190 273.7,242 273.8,173 273.8,230 273.9,231 274.0,214 274.1,248 274.1,236 274.2,225 274.3,158 274.4,159 274.4,229 274.5,155 274.6,220 274.7,204 274.7,184 274.8,207 274.9,123 275.0,209 275.0,266 275.1,167 275.2,235 275.3,231 275.3,337 275.4,179 275.5,186 275.6,187 275.6,180 275.7,152 275.8,220 275.8,127 275.9,248 276.0,233 276.1,177 276.1,203 276.2,271 276.3,204 276.4,226 276.4,251 276.5,201 276.6,235 276.7,281 276.7,263 276.8,149 276.9,279 277.0,210 277.0,195 277.1,193 277.2,267 277.3,231 277.3,213 277.4,187 277.5,244 277.6,265 277.6,179 277.7,175 277.8,204 277.9,243 277.9,203 278.0,214 278.1,186 278.2,268 278.2,214 278.3,225 278.4,263 278.5,210 278.5,217 278.6,235 278.7,203 278.8,275 278.8,221 278.9,202 279.0,272 279.0,176 279.1,266 279.2,278 279.3,209 279.3,201 279.4,135 279.5,194 279.6,253 279.6,187 279.7,252 279.8,287 279.9,115 279.9,206 280.0,190 280.1,196 280.2,147 280.2,207 280.3,233 280.4,259 280.5,274 280.5,162 280.6,160 280.7,198 280.8,242 280.8,212 280.9,246 281.0,158 281.1,193 281.1,199 281.2,204 281.3,177 281.4,199 281.4,189 281.5,265 281.6,198 281.7,132 281.7,239 281.8,224 281.9,183 282.0,198 282.0,194 282.1,283 282.2,199 282.2,265 282.3,251 282.4,197 282.5,230 282.5,187 282.6,94 282.7,188 282.8,121 282.8,254 282.9,244 283.0,261 283.1,240 283.1,262 283.2,245 283.3,227 283.4,258 283.4,275 283.5,272 283.6,201 283.7,216 283.7,178 283.8,177 283.9,232 284.0,192 284.0,276 284.1,128 284.2,171 284.3,227 284.3,265 284.4,204 284.5,293 284.6,249 284.6,226 284.7,216 284.8,238 284.9,177 284.9,260 285.0,207 285.1,238 285.2,252 285.2,200 285.3,258 285.4,143 285.5,242 285.5,140 285.6,262 285.7,195 285.7,266 285.8,272 285.9,212 286.0,192 286.0,269 286.1,172 286.2,250 286.3,213 286.3,204 286.4,195 286.5,290 286.6,155 286.6,196 286.7,235 286.8,259 286.9,286 286.9,272 287.0,197 287.1,232 287.2,263 287.2,259 287.3,157 287.4,232 287.5,242 287.5,165 287.6,200 287.7,217 287.8,243 287.8,280 287.9,265 288.0,238 288.1,227 288.1,205 288.2,197 288.3,210 288.4,210 288.4,258 288.5,304 288.6,239 288.7,256 288.7,244 288.8,230 288.9,268 288.9,263 289.0,223 289.1,252 289.2,245 289.2,199 289.3,227 289.4,259 289.5,217 289.5,144 289.6,245 289.7,173 289.8,164 289.8,159 289.9,251 290.0,139 290.1,214 290.1,229 290.2,228 290.3,195 290.4,217 290.4,226 290.5,168 290.6,247 290.7,260 290.7,187 290.8,191 290.9,175 291.0,261 291.0,176 291.1,200 291.2,149 291.3,268 291.3,210 291.4,230 291.5,282 291.6,247 291.6,174 291.7,237 291.8,247 291.9,184 291.9,180 292.0,180 292.1,250 292.1,221 292.2,178 292.3,245 292.4,248 292.4,186 292.5,157 292.6,264 292.7,196 292.7,276 292.8,265 292.9,224 293.0,194 293.0,224 293.1,246 293.2,213 293.3,257 293.3,221 293.4,244 293.5,113 293.6,186 293.6,252 293.7,258 293.8,236 293.9,284 293.9,248 294.0,248 294.1,184 294.2,236 294.2,250 294.3,272 294.4,265 294.5,132 294.5,227 294.6,174 294.7,244 294.8,177 294.8,208 294.9,219 295.0,298 295.1,270 295.1,189 295.2,163 295.3,210 295.4,188 295.4,235 295.5,233 295.6,245 295.6,180 295.7,205 295.8,228 295.9,232 295.9,197 296.0,206 296.1,252 296.2,151 296.2,208 296.3,218 296.4,160 296.5,178 296.5,222 296.6,197 296.7,261 296.8,244 296.8,308 296.9,170 297.0,294 297.1,192 297.1,252 297.2,257 297.3,226 297.4,208 297.4,194 297.5,149 297.6,204 297.7,184 297.7,242 297.8,190 297.9,213 298.0,237 298.0,246 298.1,221 298.2,211 298.3,203 298.3,239 298.4,248 298.5,189 298.6,286 298.6,243 298.7,157 298.8,326 298.8,246 298.9,191 299.0,284 299.1,116 299.1,321 299.2,162 299.3,157 299.4,182 299.4,227 299.5,205 299.6,229 299.7,187 299.7,263 299.8,229 299.9,179 300.0,263 300.0,233 300.1,212 300.2,272 300.3,173 300.3,205 300.4,279 300.5,221 300.6,249 300.6,245 300.7,216 300.8,247 300.9,181 300.9,247 301.0,180 301.1,220 301.2,185 301.2,240 301.3,239 301.4,264 301.5,196 301.5,182 301.6,292 301.7,168 301.8,209 301.8,227 301.9,203 302.0,220 302.1,161 302.1,181 302.2,252 302.3,246 302.3,165 302.4,206 302.5,228 302.6,172 302.6,234 302.7,230 302.8,237 302.9,296 302.9,184 303.0,266 303.1,241 303.2,248 303.2,190 303.3,221 303.4,218 303.5,285 303.5,222 303.6,277 303.7,207 303.8,204 303.8,219 303.9,138 304.0,198 304.1,195 304.1,248 304.2,226 304.3,180 304.4,175 304.4,270 304.5,177 304.6,198 304.7,181 304.7,200 304.8,268 304.9,265 305.0,146 305.0,209 305.1,275 305.2,205 305.3,233 305.3,292 305.4,309 305.5,282 305.5,208 305.6,221 305.7,229 305.8,207 305.8,195 305.9,302 306.0,231 306.1,251 306.1,267 306.2,240 306.3,224 306.4,229 306.4,276 306.5,289 306.6,139 306.7,252 306.7,285 306.8,208 306.9,195 307.0,200 307.0,263 307.1,179 307.2,250 307.3,264 307.3,243 307.4,223 307.5,190 307.6,194 307.6,220 307.7,344 307.8,215 307.9,183 307.9,274 308.0,281 308.1,188 308.2,274 308.2,231 308.3,223 308.4,238 308.5,237 308.5,164 308.6,319 308.7,184 308.7,128 308.8,218 308.9,219 309.0,190 309.0,146 309.1,266 309.2,215 309.3,226 309.3,197 309.4,212 309.5,193 309.6,235 309.6,217 309.7,245 309.8,245 309.9,224 309.9,224 310.0,265 310.1,157 310.2,224 310.2,273 310.3,175 310.4,248 310.5,199 310.5,219 310.6,209 310.7,212 310.8,241 310.8,217 310.9,138 311.0,307 311.1,216 311.1,201 311.2,218 311.3,273 311.4,133 311.4,233 311.5,136 311.6,197 311.7,216 311.7,200 311.8,194 311.9,172 312.0,201 312.0,213 312.1,212 312.2,165 312.2,186 312.3,93 312.4,244 312.5,206 312.5,243 312.6,234 312.7,256 312.8,229 312.8,351 312.9,179 313.0,218 313.1,137 313.1,222 313.2,92 313.3,179 313.4,199 313.4,238 313.5,330 313.6,225 313.7,212 313.7,143 313.8,273 313.9,143 314.0,229 314.0,190 314.1,319 314.2,213 314.3,232 314.3,192 314.4,215 314.5,93 314.6,181 314.6,191 314.7,195 314.8,179 314.9,175 314.9,220 315.0,272 315.1,273 315.2,165 315.2,191 315.3,215 315.4,236 315.4,217 315.5,218 315.6,232 315.7,246 315.7,133 315.8,210 315.9,243 316.0,270 316.0,247 316.1,190 316.2,189 316.3,227 316.3,217 316.4,226 316.5,262 316.6,167 316.6,204 316.7,121 316.8,249 316.9,224 316.9,184 317.0,228 317.1,274 317.2,256 317.2,215 317.3,205 317.4,222 317.5,179 317.5,179 317.6,206 317.7,218 317.8,229 317.8,197 317.9,182 318.0,216 318.1,201 318.1,231 318.2,274 318.3,258 318.4,188 318.4,201 318.5,156 318.6,216 318.6,184 318.7,166 318.8,179 318.9,243 318.9,226 319.0,214 319.1,258 319.2,200 319.2,178 319.3,238 319.4,141 319.5,230 319.5,154 319.6,228 319.7,247 319.8,202 319.8,218 319.9,153 320.0,195 320.1,289 320.1,227 320.2,275 320.3,222 320.4,252 320.4,72 320.5,220 320.6,153 320.7,190 320.7,294 320.8,210 320.9,210 321.0,193 321.0,182 321.1,247 321.2,199 321.3,115 321.3,222 321.4,229 321.5,246 321.6,276 321.6,172 321.7,216 321.8,207 321.9,146 321.9,223 322.0,254 322.1,177 322.1,194 322.2,203 322.3,200 322.4,220 322.4,156 322.5,194 322.6,205 322.7,169 322.7,183 322.8,200 322.9,206 323.0,149 323.0,198 323.1,222 323.2,252 323.3,232 323.3,260 323.4,214 323.5,208 323.6,300 323.6,218 323.7,193 323.8,212 323.9,106 323.9,168 324.0,246 324.1,267 324.2,261 324.2,219 324.3,180 324.4,172 324.5,210 324.5,266 324.6,245 324.7,254 324.8,226 324.8,289 324.9,309 325.0,193 325.1,382 325.1,200 325.2,256 325.3,276 325.3,244 325.4,173 325.5,178 325.6,237 325.6,171 325.7,231 325.8,159 325.9,200 325.9,236 326.0,187 326.1,249 326.2,223 326.2,276 326.3,208 326.4,273 326.5,222 326.5,235 326.6,162 326.7,235 326.8,247 326.8,169 326.9,162 327.0,205 327.1,287 327.1,242 327.2,194 327.3,218 327.4,157 327.4,273 327.5,192 327.6,243 327.7,166 327.7,222 327.8,178 327.9,244 328.0,274 328.0,263 328.1,243 328.2,259 328.3,171 328.3,166 328.4,208 328.5,260 328.6,223 328.6,246 328.7,161 328.8,206 328.8,199 328.9,234 329.0,298 329.1,249 329.1,263 329.2,204 329.3,215 329.4,250 329.4,234 329.5,157 329.6,257 329.7,255 329.7,228 329.8,246 329.9,236 330.0,198 330.0,287 330.1,289 330.2,219 330.3,217 330.3,222 330.4,226 330.5,232 330.6,179 330.6,237 330.7,224 330.8,219 330.9,214 330.9,225 331.0,179 331.1,219 331.2,212 331.2,221 331.3,258 331.4,283 331.5,260 331.5,211 331.6,247 331.7,261 331.8,209 331.8,198 331.9,323 332.0,117 332.0,130 332.1,223 332.2,176 332.3,216 332.3,243 332.4,132 332.5,261 332.6,223 332.6,185 332.7,261 332.8,223 332.9,203 332.9,124 333.0,254 333.1,221 333.2,193 333.2,215 333.3,266 333.4,203 333.5,214 333.5,201 333.6,174 333.7,179 333.8,203 333.8,206 333.9,262 334.0,224 334.1,210 334.1,235 334.2,215 334.3,251 334.4,316 334.4,225 334.5,234 334.6,203 334.7,228 334.7,169 334.8,251 334.9,216 335.0,227 335.0,214 335.1,258 335.2,192 335.2,247 335.3,197 335.4,214 335.5,175 335.5,138 335.6,178 335.7,278 335.8,195 335.8,228 335.9,211 336.0,216 336.1,182 336.1,299 336.2,206 336.3,278 336.4,171 336.4,297 336.5,258 336.6,285 336.7,154 336.7,270 336.8,214 336.9,240 337.0,290 337.0,232 337.1,192 337.2,226 337.3,181 337.3,233 337.4,218 337.5,234 337.6,205 337.6,144 337.7,204 337.8,211 337.9,243 337.9,249 338.0,161 338.1,263 338.2,101 338.2,223 338.3,217 338.4,141 338.5,312 338.5,204 338.6,190 338.7,263 338.7,244 338.8,202 338.9,154 339.0,255 339.0,281 339.1,180 339.2,274 339.3,232 339.3,306 339.4,161 339.5,227 339.6,174 339.6,220 339.7,234 339.8,237 339.9,160 339.9,162 340.0,303 340.1,256 340.2,148 340.2,233 340.3,272 340.4,218 340.5,223 340.5,222 340.6,224 340.7,231 340.8,237 340.8,205 340.9,251 341.0,230 341.1,224 341.1,167 341.2,204 341.3,223 341.4,197 341.4,203 341.5,176 341.6,199 341.7,148 341.7,165 341.8,220 341.9,235 341.9,184 342.0,198 342.1,222 342.2,277 342.2,291 342.3,205 342.4,188 342.5,187 342.5,260 342.6,55 342.7,240 342.8,203 342.8,202 342.9,250 343.0,242 343.1,301 343.1,255 343.2,290 343.3,201 343.4,216 343.4,183 343.5,205 343.6,244 343.7,205 343.7,234 343.8,195 343.9,206 344.0,258 344.0,219 344.1,216 344.2,231 344.3,207 344.3,151 344.4,233 344.5,233 344.6,308 344.6,224 344.7,236 344.8,304 344.9,207 344.9,195 345.0,248 345.1,233 345.1,257 345.2,188 345.3,279 345.4,231 345.4,141 345.5,217 345.6,200 345.7,224 345.7,265 345.8,220 345.9,203 346.0,259 346.0,205 346.1,169 346.2,176 346.3,281 346.3,252 346.4,282 346.5,176 346.6,195 346.6,191 346.7,253 346.8,265 346.9,216 346.9,215 347.0,252 347.1,213 347.2,193 347.2,210 347.3,260 347.4,302 347.5,229 347.5,212 347.6,229 347.7,236 347.8,246 347.8,190 347.9,221 348.0,214 348.1,257 348.1,243 348.2,212 348.3,258 348.4,268 348.4,232 348.5,171 348.6,211 348.6,161 348.7,224 348.8,231 348.9,274 348.9,241 349.0,162 349.1,206 349.2,190 349.2,191 349.3,219 349.4,227 349.5,214 349.5,192 349.6,201 349.7,199 349.8,211 349.8,249 349.9,229 350.0,256 350.1,179 350.1,302 350.2,227 350.3,124 350.4,232 350.4,264 350.5,219 350.6,168 350.7,225 350.7,194 350.8,215 350.9,233 351.0,111 351.0,216 351.1,240 351.2,238 351.3,204 351.3,202 351.4,188 351.5,213 351.6,275 351.6,198 351.7,231 351.8,230 351.8,277 351.9,241 352.0,247 352.1,220 352.1,276 352.2,217 352.3,214 352.4,263 352.4,287 352.5,253 352.6,183 352.7,319 352.7,232 352.8,284 352.9,236 353.0,185 353.0,244 353.1,213 353.2,252 353.3,142 353.3,183 353.4,339 353.5,271 353.6,262 353.6,176 353.7,226 353.8,229 353.9,205 353.9,268 354.0,188 354.1,218 354.2,200 354.2,245 354.3,198 354.4,247 354.5,181 354.5,174 354.6,183 354.7,123 354.8,194 354.8,326 354.9,186 355.0,229 355.1,215 355.1,174 355.2,274 355.3,240 355.3,193 355.4,163 355.5,243 355.6,254 355.6,161 355.7,254 355.8,137 355.9,217 355.9,254 356.0,180 356.1,152 356.2,275 356.2,157 356.3,230 356.4,160 356.5,234 356.5,281 356.6,199 356.7,182 356.8,136 356.8,250 356.9,191 357.0,228 357.1,239 357.1,230 357.2,252 357.3,230 357.4,319 357.4,212 357.5,220 357.6,117 357.7,189 357.7,238 357.8,196 357.9,267 358.0,242 358.0,293 358.1,224 358.2,195 358.3,265 358.3,221 358.4,181 358.5,199 358.5,204 358.6,253 358.7,244 358.8,215 358.8,182 358.9,251 359.0,263 359.1,173 359.1,255 359.2,176 359.3,209 359.4,184 359.4,150 359.5,191 359.6,188 359.7,255 359.7,246 359.8,193 359.9,158 360.0,164 360.0,127 360.1,206 360.2,211 360.3,179 360.3,218 360.4,221 360.5,260 360.6,179 360.6,261 360.7,198 360.8,275 360.9,175 360.9,259 361.0,185 361.1,282 361.2,236 361.2,172 361.3,251 361.4,216 361.5,238 361.5,310 361.6,206 361.7,202 361.7,138 361.8,196 361.9,250 362.0,258 362.0,218 362.1,246 362.2,128 362.3,280 362.3,189 362.4,180 362.5,297 362.6,287 362.6,196 362.7,238 362.8,203 362.9,174 362.9,233 363.0,261 363.1,327 363.2,211 363.2,255 363.3,206 363.4,209 363.5,273 363.5,150 363.6,176 363.7,185 363.8,265 363.8,235 363.9,240 364.0,235 364.1,263 364.1,201 364.2,210 364.3,204 364.4,382 364.4,168 364.5,211 364.6,327 364.7,244 364.7,221 364.8,180 364.9,231 365.0,229 365.0,245 365.1,192 365.2,236 365.2,243 365.3,248 365.4,197 365.5,240 365.5,285 365.6,194 365.7,246 365.8,205 365.8,204 365.9,171 366.0,177 366.1,241 366.1,225 366.2,270 366.3,152 366.4,201 366.4,164 366.5,231 366.6,300 366.7,158 366.7,215 366.8,213 366.9,216 367.0,193 367.0,198 367.1,282 367.2,176 367.3,240 367.3,237 367.4,150 367.5,182 367.6,232 367.6,292 367.7,212 367.8,126 367.9,222 367.9,268 368.0,250 368.1,268 368.2,210 368.2,186 368.3,178 368.4,248 368.4,209 368.5,197 368.6,239 368.7,225 368.7,135 368.8,211 368.9,184 369.0,236 369.0,217 369.1,286 369.2,220 369.3,231 369.3,136 369.4,171 369.5,191 369.6,217 369.6,169 369.7,225 369.8,194 369.9,250 369.9,182 370.0,258 370.1,289 370.2,259 370.2,285 370.3,273 370.4,174 370.5,227 370.5,210 370.6,173 370.7,169 370.8,239 370.8,166 370.9,203 371.0,219 371.1,201 371.1,275 371.2,250 371.3,223 371.4,195 371.4,233 371.5,224 371.6,180 371.6,163 371.7,188 371.8,168 371.9,235 371.9,231 372.0,206 372.1,231 372.2,239 372.2,153 372.3,227 372.4,257 372.5,199 372.5,146 372.6,215 372.7,170 372.8,236 372.8,238 372.9,246 373.0,224 373.1,146 373.1,264 373.2,154 373.3,259 373.4,228 373.4,186 373.5,194 373.6,207 373.7,284 373.7,204 373.8,259 373.9,117 374.0,227 374.0,211 374.1,264 374.2,238 374.3,270 374.3,180 374.4,229 374.5,196 374.6,246 374.6,238 374.7,168 374.8,257 374.9,290 374.9,203 375.0,264 375.1,236 375.1,183 375.2,251 375.3,184 375.4,246 375.4,160 375.5,166 375.6,237 375.7,227 375.7,252 375.8,211 375.9,173 376.0,276 376.0,182 376.1,271 376.2,253 376.3,289 376.3,135 376.4,216 376.5,209 376.6,245 376.6,176 376.7,302 376.8,218 376.9,131 376.9,234 377.0,218 377.1,192 377.2,251 377.2,218 377.3,181 377.4,211 377.5,204 377.5,232 377.6,206 377.7,216 377.8,161 377.8,190 377.9,228 378.0,315 378.1,190 378.1,189 378.2,255 378.3,298 378.3,264 378.4,182 378.5,261 378.6,237 378.6,210 378.7,170 378.8,219 378.9,223 378.9,240 379.0,154 379.1,176 379.2,222 379.2,274 379.3,250 379.4,196 379.5,247 379.5,183 379.6,204 379.7,207 379.8,193 379.8,199 379.9,252 380.0,232 380.1,126 380.1,266 380.2,237 380.3,177 380.4,225 380.4,251 380.5,271 380.6,197 380.7,178 380.7,163 380.8,217 380.9,177 381.0,260 381.0,212 381.1,245 381.2,212 381.3,189 381.3,176 381.4,258 381.5,169 381.6,237 381.6,259 381.7,225 381.8,276 381.8,218 381.9,207 382.0,227 382.1,197 382.1,231 382.2,218 382.3,276 382.4,217 382.4,252 382.5,236 382.6,222 382.7,211 382.7,284 382.8,280 382.9,231 383.0,200 383.0,204 383.1,183 383.2,167 383.3,199 383.3,219 383.4,259 383.5,256 383.6,237 383.6,208 383.7,210 383.8,218 383.9,225 383.9,194 384.0,210 384.1,207 384.2,206 384.2,240 384.3,259 384.4,199 384.5,202 384.5,227 384.6,235 384.7,129 384.8,249 384.8,227 384.9,208 385.0,264 385.0,214 385.1,148 385.2,182 385.3,194 385.3,195 385.4,214 385.5,181 385.6,225 385.6,235 385.7,215 385.8,183 385.9,206 385.9,222 386.0,299 386.1,171 386.2,126 386.2,166 386.3,231 386.4,252 386.5,208 386.5,258 386.6,190 386.7,239 386.8,181 386.8,165 386.9,42 387.0,207 387.1,246 387.1,274 387.2,243 387.3,227 387.4,178 387.4,279 387.5,177 387.6,139 387.7,195 387.7,197 387.8,219 387.9,263 388.0,197 388.0,203 388.1,190 388.2,117 388.2,190 388.3,202 388.4,157 388.5,272 388.5,264 388.6,233 388.7,245 388.8,138 388.8,231 388.9,150 389.0,159 389.1,188 389.1,234 389.2,382 389.3,187 389.4,261 389.4,205 389.5,191 389.6,210 389.7,157 389.7,171 389.8,251 389.9,214 390.0,252 390.0,196 390.1,253 390.2,182 390.3,203 390.3,180 390.4,224 390.5,276 390.6,149 390.6,225 390.7,164 390.8,202 390.9,192 390.9,146 391.0,205 391.1,163 391.2,277 391.2,184 391.3,228 391.4,224 391.5,218 391.5,205 391.6,153 391.7,292 391.7,215 391.8,247 391.9,173 392.0,235 392.0,201 392.1,234 392.2,192 392.3,179 392.3,234 392.4,217 392.5,275 392.6,207 392.6,161 392.7,241 392.8,330 392.9,301 392.9,292 393.0,274 393.1,238 393.2,218 393.2,222 393.3,221 393.4,190 393.5,237 393.5,269 393.6,268 393.7,135 393.8,312 393.8,226 393.9,161 394.0,200 394.1,251 394.1,219 394.2,184 394.3,171 394.4,254 394.4,189 394.5,209 394.6,175 394.7,164 394.7,232 394.8,276 394.9,203 394.9,148 395.0,192 395.1,210 395.2,124 395.2,260 395.3,183 395.4,241 395.5,217 395.5,215 395.6,159 395.7,366 395.8,240 395.8,282 395.9,199 396.0,237 396.1,202 396.1,261 396.2,233 396.3,178 396.4,226 396.4,194 396.5,198 396.6,233 396.7,280 396.7,180 396.8,212 396.9,180 397.0,298 397.0,284 397.1,303 397.2,253 397.3,177 397.3,196 397.4,220 397.5,213 397.6,189 397.6,231 397.7,203 397.8,213 397.9,305 397.9,234 398.0,165 398.1,234 398.1,224 398.2,243 398.3,238 398.4,174 398.4,229 398.5,259 398.6,342 398.7,241 398.7,296 398.8,291 398.9,187 399.0,191 399.0,294 399.1,185 399.2,200 399.3,250 399.3,190 399.4,283 399.5,266 399.6,211 399.6,145 399.7,184 399.8,271 399.9,264 399.9,256 400.0,211 400.1,232 400.2,185 400.2,247 400.3,132 400.4,239 400.5,217 400.5,256 400.6,208 400.7,147 400.8,242 400.8,217 400.9,166 401.0,245 401.1,253 401.1,262 401.2,203 401.3,199 401.4,225 401.4,218 401.5,169 401.6,185 401.6,275 401.7,220 401.8,215 401.9,191 401.9,228 402.0,245 402.1,238 402.2,290 402.2,221 402.3,268 402.4,201 402.5,260 402.5,237 402.6,259 402.7,262 402.8,192 402.8,238 402.9,202 403.0,264 403.1,216 403.1,287 403.2,239 403.3,240 403.4,197 403.4,193 403.5,227 403.6,187 403.7,213 403.7,321 403.8,190 403.9,223 404.0,232 404.0,91 404.1,237 404.2,205 404.3,177 404.3,187 404.4,235 404.5,271 404.6,223 404.6,225 404.7,177 404.8,236 404.8,229 404.9,191 405.0,239 405.1,227 405.1,153 405.2,162 405.3,196 405.4,210 405.4,259 405.5,198 405.6,218 405.7,212 405.7,241 405.8,221 405.9,260 406.0,208 406.0,164 406.1,206 406.2,286 406.3,259 406.3,283 406.4,252 406.5,198 406.6,205 406.6,244 406.7,210 406.8,250 406.9,277 406.9,276 407.0,254 407.1,164 407.2,273 407.2,171 407.3,168 407.4,228 407.5,223 407.5,245 407.6,222 407.7,195 407.8,220 407.8,181 407.9,174 408.0,125 408.1,208 408.1,223 408.2,207 408.3,265 408.3,205 408.4,213 408.5,255 408.6,136 408.6,259 408.7,255 408.8,210 408.9,297 408.9,252 409.0,281 409.1,259 409.2,238 409.2,208 409.3,177 409.4,189 409.5,174 409.5,242 409.6,239 409.7,177 409.8,240 409.8,245 409.9,160 410.0,190 410.1,212 410.1,191 410.2,186 410.3,275 410.4,225 410.4,267 410.5,216 410.6,247 410.7,167 410.7,200 410.8,253 410.9,222 411.0,269 411.0,219 411.1,199 411.2,210 411.3,297 411.3,100 411.4,282 411.5,209 411.5,175 411.6,272 411.7,200 411.8,247 411.8,213 411.9,205 412.0,194 412.1,244 412.1,214 412.2,267 412.3,277 412.4,199 412.4,223 412.5,285 412.6,255 412.7,220 412.7,159 412.8,180 412.9,189 413.0,292 413.0,225 413.1,202 413.2,205 413.3,205 413.3,230 413.4,151 413.5,163 413.6,225 413.6,260 413.7,140 413.8,243 413.9,174 413.9,145 414.0,258 414.1,124 414.2,235 414.2,201 414.3,208 414.4,144 414.5,198 414.5,221 414.6,176 414.7,232 414.7,235 414.8,132 414.9,253 415.0,240 415.0,219 415.1,263 415.2,304 415.3,179 415.3,252 415.4,242 415.5,236 415.6,244 415.6,263 415.7,215 415.8,126 415.9,192 415.9,191 416.0,281 416.1,222 416.2,268 416.2,190 416.3,230 416.4,219 416.5,224 416.5,244 416.6,281 416.7,282 416.8,276 416.8,268 416.9,233 417.0,249 417.1,211 417.1,181 417.2,211 417.3,213 417.4,220 417.4,187 417.5,294 417.6,279 417.7,258 417.7,270 417.8,221 417.9,236 418.0,136 418.0,177 418.1,313 418.2,224 418.2,144 418.3,224 418.4,164 418.5,217 418.5,278 418.6,265 418.7,193 418.8,183 418.8,250 418.9,232 419.0,211 419.1,290 419.1,235 419.2,157 419.3,135 419.4,225 419.4,149 419.5,242 419.6,253 419.7,309 419.7,183 419.8,236 419.9,128 420.0,208 420.0,214 420.1,292 420.2,162 420.3,235 420.3,227 420.4,308 420.5,184 420.6,182 420.6,245 420.7,217 420.8,205 420.9,183 420.9,217 421.0,244 421.1,230 421.2,245 421.2,239 421.3,321 421.4,253 421.4,181 421.5,210 421.6,253 421.7,207 421.7,301 421.8,232 421.9,328 422.0,193 422.0,251 422.1,185 422.2,147 422.3,238 422.3,191 422.4,282 422.5,298 422.6,197 422.6,219 422.7,213 422.8,244 422.9,232 422.9,189 423.0,153 423.1,229 423.2,286 423.2,170 423.3,197 423.4,194 423.5,213 423.5,129 423.6,218 423.7,200 423.8,133 423.8,244 423.9,248 424.0,222 424.1,207 424.1,250 424.2,152 424.3,263 424.4,239 424.4,211 424.5,270 424.6,198 424.6,196 424.7,232 424.8,145 424.9,217 424.9,210 425.0,259 425.1,287 425.2,246 425.2,233 425.3,239 425.4,190 425.5,315 425.5,266 425.6,293 425.7,168 425.8,243 425.8,241 425.9,264 426.0,185 426.1,237 426.1,212 426.2,301 426.3,174 426.4,205 426.4,199 426.5,172 426.6,228 426.7,227 426.7,192 426.8,204 426.9,230 427.0,219 427.0,142 427.1,195 427.2,184 427.3,220 427.3,146 427.4,162 427.5,382 427.6,153 427.6,237 427.7,284 427.8,165 427.9,199 427.9,268 428.0,257 428.1,261 428.1,274 428.2,227 428.3,240 428.4,264 428.4,235 428.5,260 428.6,218 428.7,221 428.7,191 428.8,239 428.9,273 429.0,273 429.0,230 429.1,160 429.2,187 429.3,246 429.3,207 429.4,267 429.5,180 429.6,236 429.6,190 429.7,196 429.8,232 429.9,208 429.9,263 430.0,223 430.1,178 430.2,58 430.2,193 430.3,217 430.4,261 430.5,178 430.5,286 430.6,252 430.7,206 430.8,268 430.8,159 430.9,177 431.0,243 431.1,243 431.1,273 431.2,276 431.3,203 431.3,196 431.4,207 431.5,210 431.6,243 431.6,206 431.7,279 431.8,220 431.9,162 431.9,168 432.0,239 432.1,234 432.2,166 432.2,150 432.3,280 432.4,237 432.5,211 432.5,211 432.6,254 432.7,195 432.8,232 432.8,126 432.9,203 433.0,226 433.1,234 433.1,179 433.2,193 433.3,260 433.4,212 433.4,274 433.5,250 433.6,272 433.7,273 433.7,248 433.8,259 433.9,201 434.0,189 434.0,230 434.1,265 434.2,188 434.3,301 434.3,297 434.4,192 434.5,194 434.6,182 434.6,229 434.7,272 434.8,241 434.8,198 434.9,251 435.0,248 435.1,276 435.1,267 435.2,187 435.3,202 435.4,267 435.4,263 435.5,243 435.6,199 435.7,267 435.7,227 435.8,306 435.9,270 436.0,204 436.0,185 436.1,266 436.2,251 436.3,189 436.3,236 436.4,242 436.5,200 436.6,213 436.6,176 436.7,189 436.8,243 436.9,225 436.9,223 437.0,274 437.1,259 437.2,182 437.2,283 437.3,181 437.4,209 437.5,226 437.5,266 437.6,201 437.7,172 437.8,236 437.8,229 437.9,230 438.0,310 438.0,183 438.1,257 438.2,234 438.3,248 438.3,220 438.4,212 438.5,129 438.6,293 438.6,179 438.7,203 438.8,248 438.9,209 438.9,240 439.0,218 439.1,180 439.2,280 439.2,168 439.3,235 439.4,161 439.5,204 439.5,171 439.6,198 439.7,177 439.8,218 439.8,253 439.9,193 440.0,192 440.1,137 440.1,300 440.2,271 440.3,178 440.4,270 440.4,229 440.5,136 440.6,164 440.7,255 440.7,163 440.8,173 440.9,189 441.0,205 441.0,210 441.1,254 441.2,240 441.2,191 441.3,214 441.4,147 441.5,233 441.5,315 441.6,233 441.7,209 441.8,205 441.8,217 441.9,252 442.0,161 442.1,246 442.1,192 442.2,231 442.3,267 442.4,164 442.4,319 442.5,253 442.6,203 442.7,234 442.7,190 442.8,224 442.9,238 443.0,134 443.0,228 443.1,226 443.2,262 443.3,249 443.3,194 443.4,197 443.5,219 443.6,247 443.6,192 443.7,287 443.8,233 443.9,229 443.9,253 444.0,213 444.1,246 444.2,251 444.2,255 444.3,190 444.4,172 444.5,217 444.5,181 444.6,188 444.7,171 444.7,125 444.8,228 444.9,209 445.0,221 445.0,358 445.1,274 445.2,218 445.3,194 445.3,242 445.4,174 445.5,168 445.6,235 445.6,163 445.7,150 445.8,200 445.9,258 445.9,161 446.0,225 446.1,234 446.2,117 446.2,240 446.3,176 446.4,188 446.5,170 446.5,196 446.6,250 446.7,225 446.8,184 446.8,235 446.9,222 447.0,228 447.1,242 447.1,173 447.2,189 447.3,220 447.4,228 447.4,202 447.5,221 447.6,188 447.7,331 447.7,202 447.8,185 447.9,188 447.9,341 448.0,254 448.1,249 448.2,228 448.2,212 448.3,182 448.4,194 448.5,257 448.5,218 448.6,149 448.7,243 448.8,207 448.8,157 448.9,205 449.0,299 449.1,204 449.1,234 449.2,223 449.3,177 449.4,200 449.4,229 449.5,183 449.6,201 449.7,214 449.7,207 449.8,209 449.9,232 450.0,237 450.0,218 450.1,256 450.2,268 450.3,167 450.3,228 450.4,220 450.5,224 450.6,218 450.6,218 450.7,216 450.8,250 450.9,182 450.9,246 451.0,178 451.1,295 451.1,261 451.2,179 451.3,147 451.4,245 451.4,204 451.5,260 451.6,216 451.7,178 451.7,237 451.8,244 451.9,197 452.0,184 452.0,252 452.1,155 452.2,242 452.3,300 452.3,215 452.4,158 452.5,222 452.6,244 452.6,248 452.7,262 452.8,165 452.9,222 452.9,232 453.0,214 453.1,312 453.2,185 453.2,233 453.3,228 453.4,157 453.5,229 453.5,173 453.6,219 453.7,248 453.8,199 453.8,242 453.9,170 454.0,190 454.1,216 454.1,195 454.2,196 454.3,230 454.4,183 454.4,228 454.5,194 454.6,242 454.6,215 454.7,202 454.8,250 454.9,235 454.9,240 455.0,190 455.1,247 455.2,201 455.2,158 455.3,204 455.4,282 455.5,213 455.5,177 455.6,230 455.7,175 455.8,382 455.8,202 455.9,229 456.0,239 456.1,228 456.1,216 456.2,198 456.3,202 456.4,230 456.4,216 456.5,203 456.6,282 456.7,249 456.7,250 456.8,226 456.9,229 457.0,228 457.0,253 457.1,192 457.2,75 457.3,283 457.3,218 457.4,263 457.5,151 457.6,236 457.6,234 457.7,215 457.8,226 457.8,220 457.9,157 458.0,209 458.1,185 458.1,173 458.2,257 458.3,151 458.4,191 458.4,136 458.5,252 458.6,186 458.7,202 458.7,239 458.8,128 458.9,196 459.0,227 459.0,210 459.1,182 459.2,173 459.3,195 459.3,170 459.4,160 459.5,267 459.6,237 459.6,255 459.7,214 459.8,161 459.9,192 459.9,259 460.0,229 460.1,177 460.2,239 460.2,222 460.3,206 460.4,290 460.5,187 460.5,204 460.6,195 460.7,257 460.8,248 460.8,241 460.9,208 461.0,215 461.1,213 461.1,147 461.2,166 461.3,246 461.3,244 461.4,230 461.5,230 461.6,163 461.6,155 461.7,239 461.8,229 461.9,215 461.9,252 462.0,257 462.1,234 462.2,184 462.2,236 462.3,226 462.4,236 462.5,272 462.5,159 462.6,310 462.7,244 462.8,196 462.8,273 462.9,194 463.0,168 463.1,252 463.1,210 463.2,262 463.3,198 463.4,214 463.4,209 463.5,164 463.6,199 463.7,165 463.7,193 463.8,265 463.9,208 464.0,199 464.0,275 464.1,165 464.2,215 464.3,203 464.3,253 464.4,215 464.5,206 464.5,231 464.6,215 464.7,302 464.8,164 464.8,262 464.9,304 465.0,256 465.1,251 465.1,196 465.2,254 465.3,207 465.4,256 465.4,131 465.5,196 465.6,141 465.7,116 465.7,192 465.8,256 465.9,195 466.0,191 466.0,281 466.1,263 466.2,264 466.3,277 466.3,247 466.4,256 466.5,275 466.6,214 466.6,196 466.7,270 466.8,240 466.9,218 466.9,227 467.0,246 467.1,186 467.2,185 467.2,191 467.3,226 467.4,140 467.5,149 467.5,234 467.6,223 467.7,171 467.7,250 467.8,314 467.9,216 468.0,246 468.0,227 468.1,280 468.2,240 468.3,124 468.3,128 468.4,159 468.5,170 468.6,206 468.6,179 468.7,168 468.8,178 468.9,182 468.9,254 469.0,201 469.1,240 469.2,205 469.2,264 469.3,201 469.4,177 469.5,273 469.5,149 469.6,160 469.7,234 469.8,237 469.8,221 469.9,154 470.0,234 470.1,262 470.1,205 470.2,300 470.3,213 470.4,173 470.4,207 470.5,188 470.6,199 470.7,190 470.7,213 470.8,251 470.9,228 471.0,222 471.0,169 471.1,154 471.2,202 471.2,248 471.3,248 471.4,226 471.5,164 471.5,205 471.6,221 471.7,249 471.8,184 471.8,207 471.9,221 472.0,215 472.1,152 472.1,225 472.2,152 472.3,170 472.4,244 472.4,184 472.5,224 472.6,251 472.7,229 472.7,255 472.8,198 472.9,218 473.0,196 473.0,186 473.1,342 473.2,206 473.3,290 473.3,212 473.4,253 473.5,215 473.6,165 473.6,286 473.7,211 473.8,222 473.9,293 473.9,193 474.0,217 474.1,239 474.2,247 474.2,92 474.3,234 474.4,290 474.4,208 474.5,233 474.6,234 474.7,222 474.7,260 474.8,197 474.9,238 475.0,272 475.0,251 475.1,234 475.2,185 475.3,199 475.3,232 475.4,218 475.5,210 475.6,138 475.6,243 475.7,176 475.8,190 475.9,256 475.9,211 476.0,212 476.1,142 476.2,196 476.2,178 476.3,174 476.4,226 476.5,211 476.5,126 476.6,262 476.7,210 476.8,183 476.8,213 476.9,193 477.0,212 477.1,189 477.1,168 477.2,227 477.3,211 477.4,221 477.4,235 477.5,219 477.6,263 477.6,189 477.7,151 477.8,151 477.9,168 477.9,257 478.0,159 478.1,247 478.2,221 478.2,146 478.3,261 478.4,185 478.5,208 478.5,225 478.6,253 478.7,202 478.8,237 478.8,177 478.9,170 479.0,273 479.1,239 479.1,231 479.2,265 479.3,263 479.4,215 479.4,227 479.5,284 479.6,181 479.7,198 479.7,266 479.8,255 479.9,156 480.0,167 480.0,283 480.1,272 480.2,204 480.3,266 480.3,229 480.4,236 480.5,196 480.6,319 480.6,306 480.7,267 480.8,179 480.9,225 480.9,286 481.0,199 481.1,191 481.1,228 481.2,232 481.3,201 481.4,171 481.4,213 481.5,198 481.6,221 481.7,234 481.7,255 481.8,209 481.9,231 482.0,228 482.0,182 482.1,199 482.2,184 482.3,281 482.3,197 482.4,242 482.5,251 482.6,252 482.6,171 482.7,186 482.8,247 482.9,264 482.9,218 483.0,237 483.1,153 483.2,276 483.2,291 483.3,229 483.4,218 483.5,213 483.5,189 483.6,137 483.7,232 483.8,240 483.8,288 483.9,209 484.0,185 484.1,229 484.1,172 484.2,217 484.3,159 484.3,205 484.4,260 484.5,244 484.6,279 484.6,287 484.7,208 484.8,184 484.9,141 484.9,221 485.0,228 485.1,263 485.2,180 485.2,262 485.3,242 485.4,191 485.5,93 485.5,293 485.6,189 485.7,213 485.8,234 485.8,235 485.9,150 486.0,158 486.1,203 486.1,264 486.2,245 486.3,183 486.4,266 486.4,247 486.5,290 486.6,145 486.7,177 486.7,201 486.8,210 486.9,235 487.0,234 487.0,194 487.1,247 487.2,170 487.3,238 487.3,253 487.4,167 487.5,224 487.6,197 487.6,235 487.7,308 487.8,197 487.8,272 487.9,176 488.0,280 488.1,292 488.1,206 488.2,202 488.3,214 488.4,267 488.4,184 488.5,277 488.6,235 488.7,250 488.7,234 488.8,185 488.9,244 489.0,196 489.0,191 489.1,286 489.2,265 489.3,234 489.3,242 489.4,206 489.5,295 489.6,190 489.6,189 489.7,225 489.8,273 489.9,218 489.9,240 490.0,196 490.1,222 490.2,190 490.2,236 490.3,162 490.4,310 490.5,259 490.5,199 490.6,278 490.7,190 490.8,267 490.8,215 490.9,255 491.0,236 491.0,212 491.1,223 491.2,234 491.3,242 491.3,307 491.4,257 491.5,182 491.6,186 491.6,170 491.7,148 491.8,256 491.9,177 491.9,174 492.0,219 492.1,209 492.2,337 492.2,241 492.3,148 492.4,289 492.5,240 492.5,207 492.6,196 492.7,154 492.8,288 492.8,217 492.9,273 493.0,271 493.1,220 493.1,330 493.2,167 493.3,197 493.4,204 493.4,224 493.5,203 493.6,231 493.7,221 493.7,97 493.8,227 493.9,257 494.0,209 494.0,231 494.1,231 494.2,222 494.2,188 494.3,209 494.4,266 494.5,224 494.5,200 494.6,237 494.7,173 494.8,188 494.8,258 494.9,206 495.0,140 495.1,157 495.1,221 495.2,183 495.3,245 495.4,276 495.4,197 495.5,209 495.6,198 495.7,220 495.7,206 495.8,239 495.9,200 496.0,186 496.0,221 496.1,186 496.2,289 496.3,250 496.3,162 496.4,149 496.5,209 496.6,223 496.6,269 496.7,204 496.8,188 496.9,277 496.9,197 497.0,199 497.1,201 497.2,263 497.2,197 497.3,278 497.4,160 497.5,213 497.5,265 497.6,165 497.7,173 497.7,244 497.8,131 497.9,258 498.0,206 498.0,172 498.1,308 498.2,179 498.3,221 498.3,219 498.4,261 498.5,206 498.6,263 498.6,257 498.7,236 498.8,267 498.9,156 498.9,271 499.0,249 499.1,231 499.2,219 499.2,187 499.3,186 499.4,231 499.5,234 499.5,217 499.6,186 499.7,191 499.8,239 499.8,300 499.9,134 500.0,181 500.1,208 500.1,205 500.2,239 500.3,258 500.4,232 500.4,227 500.5,243 500.6,276 500.7,231 500.7,196 500.8,238 500.9,218 500.9,301 501.0,227 501.1,223 501.2,267 501.2,287 501.3,202 501.4,225 501.5,199 501.5,235 501.6,194 501.7,232 501.8,278 501.8,222 501.9,232 502.0,193 502.1,236 502.1,234 502.2,185 502.3,173 502.4,189 502.4,178 502.5,201 502.6,188 502.7,184 502.7,203 502.8,216 502.9,213 503.0,124 503.0,218 503.1,228 503.2,233 503.3,220 503.3,209 503.4,263 503.5,297 503.6,207 503.6,282 503.7,208 503.8,213 503.9,173 503.9,153 504.0,204 504.1,241 504.1,265 504.2,250 504.3,217 504.4,300 504.4,216 504.5,219 504.6,203 504.7,232 504.7,215 504.8,248 504.9,237 505.0,289 505.0,214 505.1,157 505.2,212 505.3,204 505.3,257 505.4,162 505.5,249 505.6,187 505.6,214 505.7,257 505.8,178 505.9,218 505.9,310 506.0,201 506.1,220 506.2,234 506.2,200 506.3,235 506.4,216 506.5,245 506.5,278 506.6,245 506.7,238 506.8,218 506.8,172 506.9,285 507.0,214 507.1,306 507.1,260 507.2,250 507.3,308 507.4,292 507.4,213 507.5,216 507.6,223 507.6,250 507.7,133 507.8,225 507.9,253 507.9,152 508.0,194 508.1,233 508.2,171 508.2,212 508.3,193 508.4,266 508.5,259 508.5,180 508.6,212 508.7,259 508.8,249 508.8,181 508.9,233 509.0,217 509.1,193 509.1,214 509.2,279 509.3,193 509.4,182 509.4,184 509.5,155 509.6,204 509.7,188 509.7,156 509.8,230 509.9,150 510.0,150 510.0,188 510.1,146 510.2,185 510.3,253 510.3,174 510.4,206 510.5,202 510.6,213 510.6,165 510.7,197 510.8,246 510.8,199 510.9,190 511.0,247 511.1,236 511.1,234 511.2,146 511.3,205 511.4,178 511.4,144 511.5,171 511.6,178 511.7,173 511.7,166 511.8,234 511.9,191 512.0,206 512.0,224 512.1,237 512.2,239 512.3,229 512.3,267 512.4,198 512.5,220 512.6,214 512.6,205 512.7,190 512.8,242 512.9,223 512.9,282 513.0,306 513.1,295 513.2,158 513.2,291 513.3,200 513.4,160 513.5,237 513.5,154 513.6,146 513.7,181 513.8,125 513.8,194 513.9,247 514.0,328 514.0,236 514.1,270 514.2,330 514.3,127 514.3,240 514.4,219 514.5,245 514.6,213 514.6,228 514.7,235 514.8,266 514.9,274 514.9,248 515.0,207 515.1,136 515.2,176 515.2,146 515.3,199 515.4,222 515.5,270 515.5,218 515.6,303 515.7,230 515.8,154 515.8,205 515.9,173 516.0,233 516.1,272 516.1,237 516.2,234 516.3,170 516.4,140 516.4,247 516.5,125 516.6,224 516.7,232 516.7,267 516.8,214 516.9,192 517.0,202 517.0,265 517.1,222 517.2,286 517.3,182 517.3,333 517.4,228 517.5,120 517.5,241 517.6,259 517.7,287 517.8,149 517.8,207 517.9,207 518.0,134 518.1,221 518.1,196 518.2,217 518.3,170 518.4,198 518.4,205 518.5,228 518.6,206 518.7,171 518.7,300 518.8,223 518.9,234 519.0,229 519.0,296 519.1,188 519.2,251 519.3,226 519.3,237 519.4,283 519.5,235 519.6,290 519.6,255 519.7,230 519.8,218 519.9,215 519.9,223 520.0,133 520.1,200 520.2,266 520.2,242 520.3,243 520.4,224 520.5,241 520.5,251 520.6,152 520.7,216 520.7,231 520.8,227 520.9,226 521.0,162 521.0,198 521.1,173 521.2,341 521.3,204 521.3,175 521.4,139 521.5,216 521.6,285 521.6,194 521.7,241 521.8,288 521.9,242 521.9,175 522.0,170 522.1,189 522.2,259 522.2,118 522.3,263 522.4,220 522.5,274 522.5,165 522.6,200 522.7,182 522.8,214 522.8,220 522.9,210 523.0,292 523.1,178 523.1,110 523.2,233 523.3,218 523.4,205 523.4,155 523.5,200 523.6,215 523.7,237 523.7,276 523.8,241 523.9,214 524.0,227 524.0,214 524.1,187 524.2,200 524.2,206 524.3,191 524.4,210 524.5,218 524.5,198 524.6,285 524.7,167 524.8,268 524.8,184 524.9,216 525.0,173 525.1,215 525.1,135 525.2,174 525.3,209 525.4,212 525.4,213 525.5,177 525.6,184 525.7,208 525.7,278 525.8,233 525.9,212 526.0,146 526.0,201 526.1,220 526.2,169 526.3,221 526.3,218 526.4,210 526.5,276 526.6,179 526.6,200 526.7,228 526.8,369 526.9,208 526.9,161 527.0,242 527.1,258 527.2,200 527.2,280 527.3,304 527.4,234 527.4,244 527.5,227 527.6,238 527.7,203 527.7,225 527.8,240 527.9,234 528.0,191 528.0,178 528.1,181 528.2,189 528.3,347 528.3,256 528.4,229 528.5,208 528.6,280 528.6,160 528.7,204 528.8,241 528.9,210 528.9,230 529.0,246 529.1,196 529.2,234 529.2,272 529.3,241 529.4,221 529.5,259 529.5,166 529.6,259 529.7,147 529.8,181 529.8,253 529.9,211 530.0,169 530.1,224 530.1,263 530.2,212 530.3,137 530.4,275 530.4,194 530.5,216 530.6,221 530.6,231 530.7,229 530.8,175 530.9,192 530.9,255 531.0,210 531.1,267 531.2,190 531.2,209 531.3,169 531.4,202 531.5,174 531.5,217 531.6,177 531.7,282 531.8,131 531.8,243 531.9,169 532.0,197 532.1,209 532.1,238 532.2,198 532.3,274 532.4,270 532.4,188 532.5,277 532.6,159 532.7,227 532.7,238 532.8,213 532.9,334 533.0,227 533.0,230 533.1,221 533.2,174 533.3,171 533.3,165 533.4,201 533.5,224 533.6,282 533.6,190 533.7,182 533.8,232 533.9,184 533.9,92 534.0,212 534.1,174 534.1,203 534.2,284 534.3,234 534.4,232 534.4,269 534.5,250 534.6,233 534.7,254 534.7,217 534.8,213 534.9,177 535.0,184 535.0,209 535.1,199 535.2,211 535.3,211 535.3,154 535.4,314 535.5,223 535.6,160 535.6,171 535.7,259 535.8,202 535.9,182 535.9,233 536.0,291 536.1,230 536.2,263 536.2,190 536.3,249 536.4,145 536.5,210 536.5,247 536.6,174 536.7,259 536.8,200 536.8,157 536.9,224 537.0,179 537.1,253 537.1,203 537.2,124 537.3,271 537.3,167 537.4,169 537.5,290 537.6,272 537.6,254 537.7,177 537.8,233 537.9,222 537.9,188 538.0,211 538.1,207 538.2,228 538.2,171 538.3,246 538.4,149 538.5,229 538.5,247 538.6,190 538.7,198 538.8,294 538.8,207 538.9,269 539.0,248 539.1,185 539.1,250 539.2,202 539.3,231 539.4,139 539.4,189 539.5,262 539.6,259 539.7,252 539.7,211 539.8,216 539.9,178 540.0,209 540.0,211 540.1,203 540.2,221 540.3,204 540.3,185 540.4,185 540.5,238 540.5,286 540.6,248 540.7,205 540.8,315 540.8,235 540.9,198 541.0,238 541.1,260 541.1,147 541.2,161 541.3,226 541.4,164 541.4,165 541.5,261 541.6,110 541.7,253 541.7,247 541.8,260 541.9,213 542.0,268 542.0,217 542.1,174 542.2,208 542.3,227 542.3,155 542.4,252 542.5,178 542.6,228 542.6,208 542.7,215 542.8,212 542.9,219 542.9,248 543.0,239 543.1,199 543.2,221 543.2,263 543.3,245 543.4,244 543.5,219 543.5,210 543.6,213 543.7,243 543.8,216 543.8,271 543.9,331 544.0,219 544.0,282 544.1,255 544.2,265 544.3,192 544.3,265 544.4,206 544.5,237 544.6,266 544.6,280 544.7,199 544.8,202 544.9,187 544.9,145 545.0,207 545.1,207 545.2,223 545.2,214 545.3,232 545.4,253 545.5,139 545.5,292 545.6,208 545.7,200 545.8,212 545.8,256 545.9,226 546.0,236 546.1,203 546.1,220 546.2,234 546.3,240 546.4,191 546.4,260 546.5,201 546.6,243 546.7,202 546.7,216 546.8,209 546.9,257 547.0,249 547.0,253 547.1,212 547.2,235 547.2,176 547.3,239 547.4,382 547.5,283 547.5,306 547.6,253 547.7,245 547.8,280 547.8,289 547.9,198 548.0,251 548.1,285 548.1,127 548.2,212 548.3,232 548.4,192 548.4,249 548.5,157 548.6,280 548.7,271 548.7,225 548.8,250 548.9,164 549.0,283 549.0,248 549.1,146 549.2,197 549.3,180 549.3,206 549.4,133 549.5,238 549.6,213 549.6,186 549.7,232 549.8,231 549.9,265 549.9,245 550.0,265 550.1,242 550.2,281 550.2,205 550.3,283 550.4,139 550.5,153 550.5,177 550.6,229 550.7,243 550.7,172 550.8,213 550.9,198 551.0,249 551.0,178 551.1,252 551.2,216 551.3,289 551.3,257 551.4,201 551.5,238 551.6,238 551.6,189 551.7,223 551.8,172 551.9,316 551.9,198 552.0,201 552.1,249 552.2,272 552.2,186 552.3,263 552.4,246 552.5,197 552.5,234 552.6,202 552.7,255 552.8,209 552.8,178 552.9,208 553.0,307 553.1,195 553.1,218 553.2,256 553.3,166 553.4,289 553.4,147 553.5,246 553.6,159 553.7,223 553.7,273 553.8,217 553.9,208 553.9,199 554.0,179 554.1,256 554.2,201 554.2,192 554.3,231 554.4,258 554.5,258 554.5,191 554.6,189 554.7,253 554.8,274 554.8,172 554.9,282 555.0,215 555.1,253 555.1,290 555.2,216 555.3,228 555.4,164 555.4,131 555.5,228 555.6,180 555.7,180 555.7,241 555.8,320 555.9,157 556.0,235 556.0,222 556.1,232 556.2,226 556.3,245 556.3,191 556.4,171 556.5,236 556.6,275 556.6,219 556.7,279 556.8,246 556.9,172 556.9,130 557.0,206 557.1,263 557.1,190 557.2,309 557.3,307 557.4,161 557.4,192 557.5,275 557.6,286 557.7,187 557.7,223 557.8,244 557.9,205 558.0,243 558.0,296 558.1,189 558.2,246 558.3,260 558.3,273 558.4,211 558.5,253 558.6,196 558.6,231 558.7,178 558.8,236 558.9,247 558.9,298 559.0,264 559.1,193 559.2,101 559.2,351 559.3,262 559.4,208 559.5,202 559.5,247 559.6,218 559.7,284 559.8,233 559.8,185 559.9,157 560.0,227 560.1,231 560.1,203 560.2,177 560.3,202 560.4,250 560.4,207 560.5,183 560.6,133 560.6,273 560.7,201 560.8,206 560.9,183 560.9,217 561.0,246 561.1,238 561.2,261 561.2,258 561.3,243 561.4,240 561.5,177 561.5,269 561.6,223 561.7,244 561.8,162 561.8,210 561.9,235 562.0,189 562.1,213 562.1,239 562.2,160 562.3,193 562.4,153 562.4,175 562.5,190 562.6,215 562.7,263 562.7,303 562.8,218 562.9,194 563.0,221 563.0,248 563.1,260 563.2,193 563.3,170 563.3,232 563.4,203 563.5,166 563.6,253 563.6,234 563.7,264 563.8,174 563.8,210 563.9,238 564.0,285 564.1,227 564.1,181 564.2,232 564.3,237 564.4,195 564.4,269 564.5,218 564.6,123 564.7,251 564.7,253 564.8,210 564.9,224 565.0,229 565.0,212 565.1,211 565.2,257 565.3,246 565.3,203 565.4,176 565.5,167 565.6,253 565.6,177 565.7,190 565.8,221 565.9,201 565.9,188 566.0,150 566.1,242 566.2,196 566.2,225 566.3,228 566.4,175 566.5,188 566.5,260 566.6,231 566.7,211 566.8,275 566.8,186 566.9,223 567.0,214 567.0,207 567.1,149 567.2,218 567.3,234 567.3,152 567.4,240 567.5,240 567.6,274 567.6,178 567.7,209 567.8,201 567.9,213 567.9,225 568.0,251 568.1,250 568.2,203 568.2,215 568.3,156 568.4,250 568.5,239 568.5,260 568.6,166 568.7,268 568.8,190 568.8,164 568.9,225 569.0,191 569.1,303 569.1,235 569.2,285 569.3,213 569.4,335 569.4,250 569.5,183 569.6,206 569.7,240 569.7,240 569.8,277 569.9,227 570.0,137 570.0,247 570.1,203 570.2,241 570.3,188 570.3,202 570.4,229 570.5,289 570.5,240 570.6,173 570.7,229 570.8,195 570.8,356 570.9,293 571.0,206 571.1,207 571.1,242 571.2,234 571.3,208 571.4,243 571.4,206 571.5,228 571.6,312 571.7,225 571.7,243 571.8,252 571.9,204 572.0,239 572.0,198 572.1,177 572.2,214 572.3,280 572.3,248 572.4,113 572.5,230 572.6,251 572.6,223 572.7,200 572.8,209 572.9,194 572.9,252 573.0,230 573.1,229 573.2,220 573.2,301 573.3,229 573.4,272 573.5,165 573.5,159 573.6,154 573.7,188 573.7,238 573.8,182 573.9,227 574.0,196 574.0,255 574.1,242 574.2,247 574.3,150 574.3,220 574.4,131 574.5,112 574.6,269 574.6,220 574.7,257 574.8,225 574.9,240 574.9,222 575.0,182 575.1,183 575.2,209 575.2,219 575.3,265 575.4,214 575.5,197 575.5,219 575.6,200 575.7,270 575.8,188 575.8,151 575.9,212 576.0,275 576.1,166 576.1,232 576.2,336 576.3,228 576.4,196 576.4,204 576.5,171 576.6,195 576.7,214 576.7,296 576.8,263 576.9,212 577.0,193 577.0,259 577.1,243 577.2,201 577.2,294 577.3,295 577.4,228 577.5,209 577.5,238 577.6,309 577.7,218 577.8,271 577.8,194 577.9,223 578.0,209 578.1,194 578.1,240 578.2,187 578.3,170 578.4,204 578.4,167 578.5,244 578.6,183 578.7,209 578.7,258 578.8,222 578.9,240 579.0,241 579.0,239 579.1,178 579.2,232 579.3,214 579.3,277 579.4,215 579.5,174 579.6,187 579.6,281 579.7,240 579.8,257 579.9,223 579.9,271 580.0,267 580.1,182 580.2,255 580.2,149 580.3,275 580.4,259 580.4,265 580.5,212 580.6,260 580.7,218 580.7,225 580.8,237 580.9,199 581.0,160 581.0,242 581.1,184 581.2,216 581.3,220 581.3,133 581.4,201 581.5,246 581.6,290 581.6,231 581.7,228 581.8,70 581.9,206 581.9,272 582.0,168 582.1,236 582.2,200 582.2,154 582.3,212 582.4,151 582.5,199 582.5,278 582.6,251 582.7,206 582.8,198 582.8,255 582.9,232 583.0,224 583.1,225 583.1,192 583.2,215 583.3,213 583.4,275 583.4,260 583.5,290 583.6,282 583.6,209 583.7,245 583.8,251 583.9,194 583.9,246 584.0,253 584.1,246 584.2,217 584.2,112 584.3,167 584.4,220 584.5,229 584.5,182 584.6,234 584.7,316 584.8,167 584.8,262 584.9,222 585.0,273 585.1,262 585.1,239 585.2,186 585.3,186 585.4,243 585.4,200 585.5,234 585.6,215 585.7,214 585.7,195 585.8,244 585.9,225 586.0,211 586.0,216 586.1,251 586.2,152 586.3,238 586.3,190 586.4,212 586.5,172 586.6,306 586.6,139 586.7,228 586.8,268 586.9,215 586.9,131 587.0,200 587.1,268 587.1,238 587.2,167 587.3,275 587.4,227 587.4,231 587.5,135 587.6,231 587.7,168 587.7,246 587.8,251 587.9,180 588.0,195 588.0,288 588.1,194 588.2,195 588.3,244 588.3,211 588.4,209 588.5,239 588.6,243 588.6,246 588.7,231 588.8,247 588.9,222 588.9,279 589.0,217 589.1,223 589.2,261 589.2,186 589.3,241 589.4,168 589.5,274 589.5,170 589.6,211 589.7,222 589.8,243 589.8,220 589.9,165 590.0,199 590.1,236 590.1,243 590.2,236 590.3,197 590.3,147 590.4,262 590.5,220 590.6,96 590.6,250 590.7,278 590.8,198 590.9,276 590.9,132 591.0,173 591.1,208 591.2,145 591.2,240 591.3,235 591.4,202 591.5,239 591.5,264 591.6,220 591.7,185 591.8,260 591.8,179 591.9,192 592.0,244 592.1,220 592.1,222 592.2,101 592.3,194 592.4,271 592.4,273 592.5,180 592.6,216 592.7,204 592.7,207 592.8,160 592.9,267 593.0,177 593.0,252 593.1,192 593.2,168 593.3,274 593.3,204 593.4,382 593.5,231 593.5,218 593.6,261 593.7,258 593.8,194 593.8,187 593.9,242 594.0,277 594.1,129 594.1,177 594.2,201 594.3,260 594.4,243 594.4,211 594.5,258 594.6,157 594.7,215 594.7,205 594.8,260 594.9,255 595.0,251 595.0,209 595.1,230 595.2,210 595.3,208 595.3,211 595.4,162 595.5,228 595.6,218 595.6,220 595.7,163 595.8,242 595.9,218 595.9,234 596.0,158 596.1,210 596.2,252 596.2,229 596.3,183 596.4,177 596.5,184 596.5,186 596.6,233 596.7,234 596.8,184 596.8,266 596.9,222 597.0,292 597.0,235 597.1,247 597.2,267 597.3,197 597.3,249 597.4,234 597.5,230 597.6,249 597.6,165 597.7,239 597.8,212 597.9,271 597.9,238 598.0,233 598.1,232 598.2,243 598.2,214 598.3,159 598.4,248 598.5,225 598.5,235 598.6,121 598.7,157 598.8,198 598.8,193 598.9,247 599.0,226 599.1,212 599.1,215 599.2,253 599.3,250 599.4,200 599.4,233 599.5,302 599.6,216 599.7,171 599.7,245 599.8,211 599.9,276 600.0,188 600.0,263 600.1,268 600.2,232 600.2,128 600.3,244 600.4,269 600.5,202 600.5,211 600.6,156 600.7,269 600.8,282 600.8,232 600.9,205 601.0,206 601.1,178 601.1,278 601.2,252 601.3,225 601.4,187 601.4,201 601.5,236 601.6,259 601.7,186 601.7,183 601.8,115 601.9,227 602.0,157 602.0,267 602.1,241 602.2,246 602.3,238 602.3,254 602.4,241 602.5,222 602.6,237 602.6,194 602.7,223 602.8,220 602.9,163 602.9,208 603.0,214 603.1,221 603.2,217 603.2,198 603.3,251 603.4,175 603.5,159 603.5,135 603.6,239 603.7,228 603.7,237 603.8,214 603.9,188 604.0,227 604.0,232 604.1,161 604.2,246 604.3,179 604.3,185 604.4,271 604.5,209 604.6,241 604.6,257 604.7,291 604.8,295 604.9,177 604.9,235 605.0,209 605.1,261 605.2,225 605.2,230 605.3,280 605.4,284 605.5,203 605.5,214 605.6,260 605.7,224 605.8,194 605.8,149 605.9,254 606.0,196 606.1,179 606.1,217 606.2,163 606.3,320 606.4,164 606.4,220 606.5,293 606.6,190 606.7,179 606.7,173 606.8,173 606.9,221 606.9,249 607.0,238 607.1,221 607.2,204 607.2,238 607.3,218 607.4,186 607.5,207 607.5,276 607.6,136 607.7,291 607.8,242 607.8,271 607.9,265 608.0,199 608.1,258 608.1,260 608.2,230 608.3,189 608.4,234 608.4,234 608.5,184 608.6,201 608.7,238 608.7,183 608.8,259 608.9,211 609.0,244 609.0,180 609.1,188 609.2,260 609.3,168 609.3,265 609.4,174 609.5,212 609.6,254 609.6,263 609.7,232 609.8,221 609.9,247 609.9,198 610.0,274 610.1,220 610.1,220 610.2,293 610.3,208 610.4,269 610.4,317 610.5,244 610.6,229 610.7,185 610.7,239 610.8,162 610.9,164 611.0,177 611.0,168 611.1,206 611.2,242 611.3,195 611.3,182 611.4,211 611.5,229 611.6,281 611.6,193 611.7,206 611.8,271 611.9,216 611.9,192 612.0,224 612.1,189 612.2,190 612.2,277 612.3,232 612.4,201 612.5,184 612.5,165 612.6,295 612.7,222 612.8,192 612.8,233 612.9,154 613.0,256 613.1,234 613.1,261 613.2,188 613.3,272 613.4,174 613.4,183 613.5,201 613.6,305 613.6,246 613.7,191 613.8,275 613.9,229 613.9,224 614.0,185 614.1,209 614.2,209 614.2,237 614.3,220 614.4,225 614.5,191 614.5,227 614.6,179 614.7,286 614.8,173 614.8,227 614.9,176 615.0,217 615.1,186 615.1,162 615.2,242 615.3,217 615.4,227 615.4,212 615.5,283 615.6,227 615.7,230 615.7,251 615.8,228 615.9,280 616.0,165 616.0,202 616.1,146 616.2,254 616.3,266 616.3,209 616.4,285 616.5,211 616.6,247 616.6,233 616.7,210 616.8,218 616.8,147 616.9,195 617.0,270 617.1,182 617.1,272 617.2,217 617.3,269 617.4,252 617.4,169 617.5,242 617.6,245 617.7,242 617.7,232 617.8,164 617.9,266 618.0,268 618.0,197 618.1,282 618.2,234 618.3,176 618.3,220 618.4,239 618.5,248 618.6,256 618.6,243 618.7,215 618.8,172 618.9,183 618.9,242 619.0,215 619.1,193 619.2,291 619.2,238 619.3,233 619.4,264 619.5,259 619.5,207 619.6,285 619.7,256 619.8,246 619.8,217 619.9,274 620.0,178 620.0,233 620.1,231 620.2,235 620.3,247 620.3,259 620.4,176 620.5,307 620.6,225 620.6,182 620.7,249 620.8,197 620.9,220 620.9,256 621.0,192 621.1,280 621.2,196 621.2,256 621.3,205 621.4,167 621.5,199 621.5,245 621.6,223 621.7,236 621.8,267 621.8,265 621.9,220 622.0,201 622.1,290 622.1,224 622.2,202 622.3,217 622.4,261 622.4,181 622.5,269 622.6,197 622.7,160 622.7,301 622.8,212 622.9,210 623.0,213 623.0,252 623.1,234 623.2,276 623.3,217 623.3,201 623.4,248 623.5,258 623.5,241 623.6,223 623.7,220 623.8,226 623.8,220 623.9,273 624.0,328 624.1,198 624.1,167 624.2,277 624.3,248 624.4,93 624.4,185 624.5,197 624.6,173 624.7,225 624.7,206 624.8,206 624.9,239 625.0,176 625.0,198 625.1,185 625.2,238 625.3,183 625.3,263 625.4,207 625.5,324 625.6,262 625.6,194 625.7,240 625.8,216 625.9,285 625.9,163 626.0,199 626.1,224 626.2,206 626.2,210 626.3,168 626.4,214 626.5,280 626.5,170 626.6,173 626.7,201 626.7,239 626.8,199 626.9,218 627.0,199 627.0,284 627.1,257 627.2,197 627.3,231 627.3,209 627.4,147 627.5,209 627.6,213 627.6,244 627.7,247 627.8,225 627.9,279 627.9,304 628.0,170 628.1,227 628.2,179 628.2,218 628.3,202 628.4,197 628.5,195 628.5,269 628.6,176 628.7,260 628.8,215 628.8,124 628.9,219 629.0,158 629.1,236 629.1,199 629.2,221 629.3,206 629.4,256 629.4,258 629.5,210 629.6,382 629.7,255 629.7,198 629.8,246 629.9,257 630.0,265 630.0,217 630.1,237 630.2,217 630.2,230 630.3,151 630.4,239 630.5,298 630.5,218 630.6,222 630.7,216 630.8,284 630.8,179 630.9,224 631.0,224 631.1,284 631.1,204 631.2,225 631.3,152 631.4,239 631.4,294 631.5,218 631.6,258 631.7,207 631.7,264 631.8,227 631.9,231 632.0,224 632.0,182 632.1,254 632.2,225 632.3,245 632.3,217 632.4,233 632.5,309 632.6,225 632.6,169 632.7,211 632.8,200 632.9,205 632.9,241 633.0,274 633.1,191 633.2,182 633.2,201 633.3,206 633.4,207 633.4,224 633.5,212 633.6,222 633.7,306 633.7,259 633.8,247 633.9,201 634.0,235 634.0,315 634.1,218 634.2,310 634.3,149 634.3,195 634.4,197 634.5,248 634.6,265 634.6,231 634.7,222 634.8,252 634.9,216 634.9,196 635.0,200 635.1,262 635.2,305 635.2,222 635.3,247 635.4,205 635.5,160 635.5,160 635.6,211 635.7,180 635.8,160 635.8,220 635.9,212 636.0,190 636.1,224 636.1,241 636.2,251 636.3,222 636.4,246 636.4,192 636.5,235 636.6,167 636.6,176 636.7,269 636.8,181 636.9,237 636.9,170 637.0,202 637.1,224 637.2,196 637.2,243 637.3,209 637.4,207 637.5,227 637.5,207 637.6,259 637.7,201 637.8,267 637.8,198 637.9,204 638.0,195 638.1,242 638.1,107 638.2,230 638.3,216 638.4,147 638.4,167 638.5,239 638.6,184 638.7,257 638.7,209 638.8,235 638.9,186 639.0,232 639.0,253 639.1,204 639.2,266 639.3,257 639.3,192 639.4,291 639.5,192 639.6,236 639.6,255 639.7,212 639.8,197 639.9,243 639.9,227 640.0,191 640.1,192 640.1,222 640.2,249 640.3,256 640.4,243 640.4,195 640.5,258 640.6,209 640.7,168 640.7,231 640.8,234 640.9,235 641.0,149 641.0,297 641.1,209 641.2,203 641.3,218 641.3,133 641.4,176 641.5,191 641.6,253 641.6,201 641.7,234 641.8,218 641.9,212 641.9,238 642.0,196 642.1,159 642.2,181 642.2,212 642.3,292 642.4,179 642.5,235 642.5,227 642.6,237 642.7,195 642.8,250 642.8,190 642.9,260 643.0,254 643.1,219 643.1,273 643.2,219 643.3,199 643.3,268 643.4,185 643.5,240 643.6,199 643.6,107 643.7,236 643.8,239 643.9,282 643.9,147 644.0,248 644.1,158 644.2,181 644.2,270 644.3,189 644.4,211 644.5,320 644.5,202 644.6,190 644.7,240 644.8,229 644.8,213 644.9,270 645.0,212 645.1,222 645.1,244 645.2,250 645.3,208 645.4,186 645.4,207 645.5,251 645.6,191 645.7,213 645.7,197 645.8,176 645.9,252 646.0,224 646.0,241 646.1,251 646.2,145 646.3,184 646.3,284 646.4,203 646.5,239 646.5,176 646.6,216 646.7,225 646.8,213 646.8,205 646.9,218 647.0,227 647.1,224 647.1,200 647.2,260 647.3,219 647.4,223 647.4,205 647.5,191 647.6,266 647.7,232 647.7,250 647.8,199 647.9,236 648.0,217 648.0,204 648.1,278 648.2,202 648.3,246 648.3,228 648.4,236 648.5,189 648.6,191 648.6,153 648.7,212 648.8,236 648.9,237 648.9,195 649.0,159 649.1,206 649.2,160 649.2,209 649.3,209 649.4,217 649.5,246 649.5,312 649.6,238 649.7,180 649.8,211 649.8,300 649.9,218 650.0,287 650.0,145 650.1,212 650.2,263 650.3,189 650.3,248 650.4,198 650.5,218 650.6,262 650.6,194 650.7,268 650.8,169 650.9,216 650.9,257 651.0,286 651.1,159 651.2,165 651.2,265 651.3,158 651.4,212 651.5,227 651.5,222 651.6,229 651.7,166 651.8,213 651.8,287 651.9,141 652.0,186 652.1,259 652.1,232 652.2,252 652.3,217 652.4,204 652.4,210 652.5,241 652.6,248 652.7,187 652.7,222 652.8,136 652.9,248 653.0,190 653.0,217 653.1,247 653.2,168 653.2,214 653.3,252 653.4,230 653.5,181 653.5,264 653.6,168 653.7,193 653.8,229 653.8,169 653.9,154 654.0,197 654.1,212 654.1,150 654.2,163 654.3,253 654.4,226 654.4,227 654.5,234 654.6,274 654.7,185 654.7,216 654.8,215 654.9,166 655.0,269 655.0,221 655.1,208 655.2,235 655.3,223 655.3,190 655.4,219 655.5,169 655.6,247 655.6,211 655.7,272 655.8,223 655.9,245 655.9,168 656.0,191 656.1,200 656.2,356 656.2,165 656.3,192 656.4,244 656.5,272 656.5,220 656.6,232 656.7,243 656.7,229 656.8,280 656.9,163 657.0,261 657.0,244 657.1,197 657.2,279 657.3,184 657.3,184 657.4,230 657.5,259 657.6,236 657.6,288 657.7,167 657.8,217 657.9,246 657.9,253 658.0,197 658.1,163 658.2,266 658.2,240 658.3,284 658.4,193 658.5,213 658.5,134 658.6,223 658.7,235 658.8,245 658.8,286 658.9,280 659.0,191 659.1,209 659.1,238 659.2,252 659.3,179 659.4,149 659.4,235 659.5,199 659.6,153 659.7,242 659.7,228 659.8,264 659.9,224 659.9,222 660.0,234 660.1,246 660.2,278 660.2,269 660.3,233 660.4,195 660.5,238 660.5,251 660.6,194 660.7,198 660.8,247 660.8,242 660.9,194 661.0,179 661.1,250 661.1,210 661.2,220 661.3,177 661.4,251 661.4,185 661.5,202 661.6,257 661.7,179 661.7,184 661.8,268 661.9,144 662.0,262 662.0,253 662.1,165 662.2,190 662.3,197 662.3,222 662.4,167 662.5,203 662.6,166 662.6,112 662.7,211 662.8,128 662.9,236 662.9,259 663.0,215 663.1,215 663.1,265 663.2,262 663.3,229 663.4,226 663.4,318 663.5,182 663.6,202 663.7,219 663.7,207 663.8,258 663.9,221 664.0,179 664.0,178 664.1,201 664.2,229 664.3,250 664.3,168 664.4,199 664.5,235 664.6,302 664.6,252 664.7,293 664.8,171 664.9,211 664.9,247 665.0,229 665.1,119 665.2,172 665.2,234 665.3,224 665.4,266 665.5,285 665.5,212 665.6,125 665.7,158 665.8,217 665.8,233 665.9,211 666.0,179 666.1,275 666.1,291 666.2,146 666.3,208 666.4,156 666.4,209 666.5,161 666.6,242 666.6,199 666.7,158 666.8,179 666.9,237 666.9,184 667.0,245 667.1,274 667.2,198 667.2,164 667.3,185 667.4,268 667.5,185 667.5,192 667.6,237 667.7,316 667.8,179 667.8,184 667.9,199 668.0,286 668.1,277 668.1,179 668.2,187 668.3,199 668.4,228 668.4,203 668.5,240 668.6,231 668.7,253 668.7,209 668.8,235 668.9,181 669.0,190 669.0,251 669.1,146 669.2,263 669.3,201 669.3,176 669.4,168 669.5,306 669.6,179 669.6,171 669.7,162 669.8,306 669.8,245 669.9,223 670.0,236 670.1,166 670.1,245 670.2,170 670.3,166 670.4,276 670.4,258 670.5,237 670.6,215 670.7,179 670.7,226 670.8,183 670.9,281 671.0,339 671.0,232 671.1,201 671.2,233 671.3,259 671.3,202 671.4,142 671.5,223 671.6,247 671.6,226 671.7,141 671.8,220 671.9,194 671.9,170 672.0,176 672.1,253 672.2,181 672.2,185 672.3,199 672.4,179 672.5,241 672.5,222 672.6,239 672.7,189 672.8,244 672.8,203 672.9,262 673.0,223 673.0,233 673.1,223 673.2,213 673.3,226 673.3,227 673.4,253 673.5,175 673.6,243 673.6,151 673.7,251 673.8,179 673.9,254 673.9,199 674.0,172 674.1,154 674.2,172 674.2,194 674.3,266 674.4,168 674.5,172 674.5,185 674.6,187 674.7,216 674.8,239 674.8,176 674.9,168 675.0,259 675.1,182 675.1,209 675.2,111 675.3,208 675.4,174 675.4,178 675.5,183 675.6,273 675.7,186 675.7,216 675.8,263 675.9,190 676.0,272 676.0,183 676.1,151 676.2,238 676.3,182 676.3,200 676.4,192 676.5,271 676.5,194 676.6,213 676.7,189 676.8,217 676.8,175 676.9,207 677.0,191 677.1,164 677.1,211 677.2,179 677.3,209 677.4,197 677.4,238 677.5,187 677.6,170 677.7,221 677.7,186 677.8,201 677.9,261 678.0,204 678.0,166 678.1,236 678.2,287 678.3,209 678.3,242 678.4,143 678.5,219 678.6,218 678.6,242 678.7,208 678.8,239 678.9,252 678.9,220 679.0,249 679.1,166 679.2,263 679.2,220 679.3,244 679.4,271 679.5,153 679.5,299 679.6,161 679.7,123 679.7,214 679.8,129 679.9,300 680.0,271 680.0,166 680.1,211 680.2,238 680.3,218 680.3,255 680.4,213 680.5,159 680.6,232 680.6,212 680.7,171 680.8,140 680.9,240 680.9,206 681.0,239 681.1,242 681.2,233 681.2,242 681.3,284 681.4,294 681.5,246 681.5,212 681.6,170 681.7,238 681.8,224 681.8,192 681.9,189 682.0,222 682.1,219 682.1,145 682.2,230 682.3,236 682.4,280 682.4,200 682.5,227 682.6,143 682.7,230 682.7,186 682.8,181 682.9,153 683.0,268 683.0,157 683.1,217 683.2,221 683.2,229 683.3,233 683.4,231 683.5,336 683.5,198 683.6,215 683.7,254 683.8,220 683.8,128 683.9,203 684.0,232 684.1,151 684.1,248 684.2,223 684.3,239 684.4,226 684.4,189 684.5,195 684.6,246 684.7,222 684.7,214 684.8,233 684.9,219 685.0,245 685.0,246 685.1,139 685.2,257 685.3,201 685.3,225 685.4,253 685.5,241 685.6,236 685.6,224 685.7,213 685.8,225 685.9,251 685.9,162 686.0,301 686.1,213 686.2,181 686.2,205 686.3,227 686.4,214 686.4,115 686.5,179 686.6,177 686.7,233 686.7,194 686.8,131 686.9,201 687.0,176 687.0,169 687.1,193 687.2,157 687.3,209 687.3,244 687.4,242 687.5,116 687.6,206 687.6,213 687.7,164 687.8,236 687.9,218 687.9,247 688.0,217 688.1,232 688.2,197 688.2,222 688.3,240 688.4,229 688.5,222 688.5,237 688.6,182 688.7,192 688.8,212 688.8,263 688.9,198 689.0,266 689.1,210 689.1,216 689.2,240 689.3,249 689.4,244 689.4,139 689.5,228 689.6,225 689.6,181 689.7,202 689.8,177 689.9,264 689.9,259 690.0,90 690.1,219 690.2,229 690.2,211 690.3,180 690.4,263 690.5,207 690.5,219 690.6,192 690.7,211 690.8,238 690.8,251 690.9,311 691.0,180 691.1,274 691.1,233 691.2,154 691.3,234 691.4,194 691.4,226 691.5,191 691.6,216 691.7,237 691.7,166 691.8,176 691.9,269 692.0,317 692.0,197 692.1,260 692.2,188 692.3,188 692.3,137 692.4,242 692.5,192 692.6,281 692.6,234 692.7,214 692.8,202 692.9,220 692.9,221 693.0,241 693.1,235 693.1,206 693.2,196 693.3,193 693.4,180 693.4,172 693.5,286 693.6,237 693.7,224 693.7,242 693.8,178 693.9,189 694.0,222 694.0,213 694.1,309 694.2,231 694.3,230 694.3,183 694.4,200 694.5,164 694.6,204 694.6,189 694.7,238 694.8,253 694.9,218 694.9,318 695.0,202 695.1,181 695.2,215 695.2,226 695.3,176 695.4,219 695.5,180 695.5,135 695.6,190 695.7,182 695.8,199 695.8,208 695.9,207 696.0,215 696.1,177 696.1,279 696.2,228 696.3,193 696.3,250 696.4,222 696.5,244 696.6,201 696.6,185 696.7,274 696.8,199 696.9,245 696.9,208 697.0,96 697.1,164 697.2,299 697.2,204 697.3,287 697.4,191 697.5,201 697.5,199 697.6,184 697.7,203 697.8,242 697.8,204 697.9,172 698.0,222 698.1,217 698.1,263 698.2,174 698.3,237 698.4,246 698.4,234 698.5,250 698.6,227 698.7,169 698.7,188 698.8,164 698.9,161 699.0,251 699.0,199 699.1,161 699.2,140 699.3,271 699.3,271 699.4,200 699.5,230 699.5,255 699.6,203 699.7,247 699.8,303 699.8,219 699.9,213 700.0,285 700.1,182 700.1,211 700.2,227 700.3,243 700.4,280 700.4,234 700.5,180 700.6,193 700.7,140 700.7,223 700.8,285 700.9,187 701.0,179 701.0,262 701.1,279 701.2,212 701.3,191 701.3,260 701.4,231 701.5,247 701.6,262 701.6,268 701.7,213 701.8,232 701.9,243 701.9,316 702.0,152 702.1,254 702.2,209 702.2,261 702.3,204 702.4,275 702.5,214 702.5,225 702.6,183 702.7,259 702.8,243 702.8,227 702.9,139 703.0,209 703.0,207 703.1,243 703.2,196 703.3,193 703.3,213 703.4,208 703.5,208 703.6,240 703.6,226 703.7,271 703.8,232 703.9,247 703.9,228 704.0,190 704.1,204 704.2,200 704.2,177 704.3,308 704.4,202 704.5,219 704.5,222 704.6,268 704.7,198 704.8,175 704.8,180 704.9,114 705.0,194 705.1,184 705.1,150 705.2,172 705.3,213 705.4,215 705.4,212 705.5,210 705.6,237 705.7,247 705.7,159 705.8,249 705.9,205 706.0,240 706.0,228 706.1,297 706.2,188 706.2,219 706.3,223 706.4,201 706.5,211 706.5,245 706.6,143 706.7,236 706.8,182 706.8,149 706.9,342 707.0,215 707.1,249 707.1,190 707.2,231 707.3,260 707.4,169 707.4,184 707.5,252 707.6,174 707.7,211 707.7,116 707.8,209 707.9,239 708.0,229 708.0,252 708.1,214 708.2,217 708.3,191 708.3,215 708.4,274 708.5,249 708.6,165 708.6,175 708.7,225 708.8,224 708.9,225 708.9,218 709.0,282 709.1,185 709.2,243 709.2,213 709.3,314 709.4,210 709.4,168 709.5,303 709.6,161 709.7,201 709.7,246 709.8,279 709.9,175 710.0,209 710.0,196 710.1,120 710.2,249 710.3,186 710.3,255 710.4,185 710.5,282 710.6,254 710.6,273 710.7,169 710.8,285 710.9,262 710.9,194 711.0,210 711.1,136 711.2,149 711.2,195 711.3,193 711.4,288 711.5,252 711.5,231 711.6,225 711.7,271 711.8,254 711.8,251 711.9,178 712.0,203 712.1,231 712.1,382 712.2,208 712.3,245 712.4,229 712.4,284 712.5,193 712.6,182 712.7,205 712.7,201 712.8,205 712.9,141 712.9,211 713.0,269 713.1,258 713.2,192 713.2,178 713.3,190 713.4,187 713.5,212 713.5,275 713.6,246 713.7,287 713.8,233 713.8,270 713.9,215 714.0,225 714.1,179 714.1,191 714.2,190 714.3,271 714.4,213 714.4,192 714.5,230 714.6,186 714.7,212 714.7,178 714.8,212 714.9,225 715.0,200 715.0,189 715.1,209 715.2,236 715.3,249 715.3,233 715.4,241 715.5,211 715.6,213 715.6,222 715.7,219 715.8,213 715.9,160 715.9,173 716.0,241 716.1,203 716.1,232 716.2,223 716.3,228 716.4,243 716.4,271 716.5,313 716.6,212 716.7,174 716.7,254 716.8,200 716.9,234 717.0,209 717.0,250 717.1,228 717.2,224 717.3,310 717.3,211 717.4,225 717.5,314 717.6,195 717.6,221 717.7,212 717.8,206 717.9,235 717.9,261 718.0,236 718.1,160 718.2,135 718.2,149 718.3,238 718.4,235 718.5,207 718.5,198 718.6,246 718.7,258 718.8,146 718.8,179 718.9,279 719.0,287 719.1,251 719.1,211 719.2,199 719.3,233 719.4,282 719.4,238 719.5,197 719.6,220 719.6,239 719.7,198 719.8,222 719.9,263 719.9,216 720.0,269 720.1,183 720.2,202 720.2,258 720.3,212 720.4,172 720.5,302 720.5,225 720.6,157 720.7,280 720.8,226 720.8,275 720.9,123 721.0,312 721.1,282 721.1,241 721.2,215 721.3,205 721.4,203 721.4,176 721.5,193 721.6,191 721.7,258 721.7,226 721.8,97 721.9,132 722.0,65 722.0,191 722.1,182 722.2,235 722.3,144 722.3,234 722.4,223 722.5,136 722.6,300 722.6,206 722.7,287 722.8,245 722.8,223 722.9,234 723.0,213 723.1,250 723.1,224 723.2,266 723.3,235 723.4,274 723.4,194 723.5,270 723.6,193 723.7,236 723.7,232 723.8,174 723.9,216 724.0,294 724.0,200 724.1,155 724.2,209 724.3,235 724.3,274 724.4,217 724.5,232 724.6,142 724.6,237 724.7,144 724.8,166 724.9,244 724.9,252 725.0,168 725.1,225 725.2,214 725.2,230 725.3,267 725.4,234 725.5,160 725.5,280 725.6,231 725.7,150 725.8,156 725.8,222 725.9,215 726.0,200 726.0,166 726.1,207 726.2,239 726.3,235 726.3,175 726.4,118 726.5,244 726.6,300 726.6,188 726.7,223 726.8,214 726.9,171 726.9,217 727.0,272 727.1,297 727.2,222 727.2,265 727.3,208 727.4,270 727.5,234 727.5,278 727.6,234 727.7,237 727.8,196 727.8,167 727.9,227 728.0,254 728.1,143 728.1,205 728.2,196 728.3,196 728.4,162 728.4,180 728.5,193 728.6,189 728.7,254 728.7,244 728.8,224 728.9,216 729.0,219 729.0,208 729.1,219 729.2,237 729.3,284 729.3,187 729.4,196 729.5,254 729.5,200 729.6,204 729.7,217 729.8,292 729.8,267 729.9,243 730.0,156 730.1,254 730.1,233 730.2,263 730.3,239 730.4,206 730.4,302 730.5,332 730.6,194 730.7,218 730.7,244 730.8,181 730.9,181 731.0,302 731.0,226 731.1,176 731.2,246 731.3,232 731.3,182 731.4,230 731.5,267 731.6,247 731.6,272 731.7,198 731.8,288 731.9,180 731.9,285 732.0,218 732.1,278 732.2,232 732.2,120 732.3,175 732.4,168 732.5,223 732.5,215 732.6,211 732.7,195 732.7,235 732.8,176 732.9,207 733.0,174 733.0,201 733.1,193 733.2,249 733.3,236 733.3,271 733.4,231 733.5,187 733.6,187 733.6,269 733.7,92 733.8,225 733.9,129 733.9,179 734.0,319 734.1,230 734.2,161 734.2,316 734.3,189 734.4,256 734.5,238 734.5,211 734.6,294 734.7,212 734.8,175 734.8,249 734.9,192 735.0,81 735.1,206 735.1,198 735.2,222 735.3,248 735.4,210 735.4,269 735.5,212" fill="none" stroke="#4d4df2" stroke-width="1"/><rect x="51" y="26" width="718" height="373" fill="none" stroke="#474747" stroke-width="1.5"/><path d="M83.5 399v4M188.9 399v4M297.9 399v4M406.9 399v4M517.7 399v4M626.7 399v4M735.7 399v4M51 390.6h-4M51 347.6h-4M51 304.6h-4M51 261.6h-4M51 218.6h-4M51 175.7h-4M51 132.7h-4M51 89.7h-4M51 46.7h-4" stroke="#474747" stroke-width="1.2" fill="none"/><text x="44" y="394.6" text-anchor="end" class="tk">80</text><text x="44" y="351.6" text-anchor="end" class="tk">85</text><text x="44" y="308.6" text-anchor="end" class="tk">90</text><text x="44" y="265.6" text-anchor="end" class="tk">95</text><text x="44" y="222.6" text-anchor="end" class="tk">100</text><text x="44" y="179.7" text-anchor="end" class="tk">105</text><text x="44" y="136.7" text-anchor="end" class="tk">110</text><text x="44" y="93.7" text-anchor="end" class="tk">115</text><text x="44" y="50.7" text-anchor="end" class="tk">120</text><text transform="translate(83.5,427.5) rotate(-45)" text-anchor="middle" dominant-baseline="central" class="tk">2025-01</text><text transform="translate(188.9,427.5) rotate(-45)" text-anchor="middle" dominant-baseline="central" class="tk">2025-03</text><text transform="translate(297.9,427.5) rotate(-45)" text-anchor="middle" dominant-baseline="central" class="tk">2025-05</text><text transform="translate(406.9,427.5) rotate(-45)" text-anchor="middle" dominant-baseline="central" class="tk">2025-07</text><text transform="translate(517.7,427.5) rotate(-45)" text-anchor="middle" dominant-baseline="central" class="tk">2025-09</text><text transform="translate(626.7,427.5) rotate(-45)" text-anchor="middle" dominant-baseline="central" class="tk">2025-11</text><text transform="translate(735.7,427.5) rotate(-45)" text-anchor="middle" dominant-baseline="central" class="tk">2026-01</text><text x="410" y="20.3" text-anchor="middle" class="ti">Station 1 - Raw Material Mix Output Over Time</text><text transform="translate(12,212.5) rotate(-90)" text-anchor="middle" dominant-baseline="central" class="al">Output (tons/hour)</text><text x="410" y="460" text-anchor="middle" class="al">Date</text><rect x="634" y="31" width="130" height="21" rx="2.5" fill="#ffffff" fill-opacity="0.85" stroke="#d9d9d9" stroke-width="1"/><path d="M639 40.7h22" stroke="#0000ff" stroke-width="1.3" stroke-opacity="0.6"/><text x="668.8" y="45" class="lg" textLength="90" lengthAdjust="spacingAndGlyphs">Station 1 Output</text><path d="M860.7 26V399M966.1 26V399M1075 26V399M1184 26V399M1294.7 26V399M1403.6 26V399M1512.6 26V399M828 384H1545M828 316.3H1545M828 248.5H1545M828 180.8H1545M828 113H1545M828 45.3H1545" stroke="#e9e9e9" stroke-width="1" fill="none"/><rect x="860.7" y="106.3" width="651.9" height="275.7" fill="#f2aaa6"/><rect x="1021.4" y="106.3" width="28.6" height="67.7" fill="#ffffff"/><rect x="1168.4" y="106.3" width="2.3" height="275.7" fill="#fbeaea"/><path d="M861.1 70L861.4 382L861.6 82M862.9 78L863.2 382L863.4 68M864.7 109L865.0 382L865.2 88M866.5 101L866.8 382L867.0 90M868.3 93L868.5 382L868.8 74M870.1 89L870.3 382L870.6 88M871.9 81L872.1 382L872.4 104M873.6 77L873.9 382L874.1 94M875.4 82L875.7 382L875.9 104M877.2 86L877.5 382L877.7 106M879.0 99L879.3 382L879.5 85M880.8 107L881.0 382L881.3 112M882.6 101L882.8 382L883.1 101M884.4 68L884.6 382L884.9 80M886.2 74L886.4 382L886.7 87M887.9 66L888.2 382L888.4 99M889.7 82L890.0 382L890.2 87M891.5 100L891.8 382L892.0 82M893.3 77L893.5 382L893.8 86M895.1 91L895.3 382L895.6 88M896.9 53L897.1 382L897.4 90M898.7 115L898.9 382L899.2 99M900.4 74L900.7 382L900.9 83M902.2 64L902.5 382L902.7 74M904.0 83L904.3 382L904.5 76M905.8 81L906.0 382L906.3 74M907.6 104L907.8 382L908.1 83M909.4 90L909.6 382L909.9 76M911.2 93L911.4 382L911.7 112M912.9 79L913.2 382L913.4 110M914.7 96L915.0 382L915.2 96M916.5 104L916.8 382L917.0 81M918.3 65L918.5 382L918.8 68M920.1 92L920.3 382L920.6 99M921.9 103L922.1 382L922.4 93M923.7 95L923.9 382L924.2 94M925.4 82L925.7 382L925.9 93M927.2 86L927.5 382L927.7 66M929.0 66L929.3 382L929.5 75M930.8 74L931.1 382L931.3 93M932.6 70L932.8 382L933.1 91M934.4 84L934.6 382L934.9 86M936.2 65L936.4 382L936.7 80M937.9 76L938.2 382L938.4 76M939.7 84L940.0 382L940.2 84M941.5 99L941.8 382L942.0 100M943.3 76L943.6 382L943.8 76M945.1 87L945.3 382L945.6 111M946.9 82L947.1 382L947.4 81M948.7 82L948.9 382L949.2 69M950.4 85L950.7 382L950.9 79M952.2 65L952.5 382L952.7 84M954.0 99L954.3 382L954.5 90M955.8 97L956.1 382L956.3 109M957.6 88L957.8 382L958.1 71M959.4 84L959.6 382L959.9 82M961.2 65L961.4 382L961.7 96M962.9 87L963.2 382L963.4 106M964.7 101L965.0 382L965.2 104M966.5 78L966.8 382L967.0 87M968.3 63L968.6 382L968.8 91M970.1 82L970.3 382L970.6 64M971.9 95L972.1 382L972.4 80M973.7 96L973.9 382L974.2 83M975.5 77L975.7 382L976.0 119M977.2 101L977.5 382L977.7 104M979.0 87L979.3 382L979.5 71M980.8 90L981.1 382L981.3 100M982.6 75L982.8 382L983.1 91M984.4 105L984.6 382L984.9 75M986.2 64L986.4 382L986.7 83M988.0 88L988.2 382L988.5 121M989.7 87L990.0 382L990.2 102M991.5 91L991.8 382L992.0 85M993.3 93L993.6 382L993.8 97M995.1 84L995.3 382L995.6 72M996.9 91L997.1 382L997.4 83M998.7 111L998.9 382L999.2 92M1000.5 81L1000.7 382L1001.0 87M1002.2 82L1002.5 382L1002.7 71M1004.0 85L1004.3 382L1004.5 65M1005.8 109L1006.1 382L1006.3 95M1007.6 91L1007.8 382L1008.1 86M1009.4 63L1009.6 382L1009.9 87M1011.2 97L1011.4 382L1011.7 94M1013.0 80L1013.2 382L1013.5 93M1014.7 103L1015.0 382L1015.2 93M1016.5 76L1016.8 382L1017.0 80M1018.3 90L1018.6 382L1018.8 90M1020.1 91L1020.4 382L1020.6 67M1021.9 164L1022.1 382L1022.4 174M1023.7 175L1023.9 382L1024.2 199M1025.5 153L1025.7 382L1026.0 165M1027.2 200L1027.5 382L1027.7 172M1029.0 203L1029.3 382L1029.5 195M1030.8 185L1031.1 382L1031.3 190M1032.6 183L1032.9 382L1033.1 176M1034.4 163L1034.6 382L1034.9 181M1036.2 187L1036.4 382L1036.7 169M1038.0 198L1038.2 382L1038.5 175M1039.7 163L1040.0 382L1040.2 169M1041.5 173L1041.8 382L1042.0 174M1043.3 163L1043.6 382L1043.8 188M1045.1 192L1045.4 382L1045.6 190M1046.9 186L1047.1 382L1047.4 184M1048.7 181L1048.9 382L1049.2 174M1050.5 56L1050.7 382L1051.0 97M1052.2 88L1052.5 382L1052.7 79M1054.0 62L1054.3 382L1054.5 106M1055.8 83L1056.1 382L1056.3 100M1057.6 78L1057.9 382L1058.1 78M1059.4 97L1059.6 382L1059.9 90M1061.2 93L1061.4 382L1061.7 95M1063.0 103L1063.2 382L1063.5 85M1064.8 80L1065.0 382L1065.3 81M1066.5 79L1066.8 382L1067.0 72M1068.3 91L1068.6 382L1068.8 96M1070.1 81L1070.4 382L1070.6 75M1071.9 95L1072.1 382L1072.4 91M1073.7 84L1073.9 382L1074.2 67M1075.5 89L1075.7 382L1076.0 99M1077.3 89L1077.5 382L1077.8 75M1079.0 118L1079.3 382L1079.5 104M1080.8 77L1081.1 382L1081.3 82M1082.6 68L1082.9 382L1083.1 96M1084.4 78L1084.6 382L1084.9 94M1086.2 82L1086.4 382L1086.7 80M1088.0 107L1088.2 382L1088.5 103M1089.8 77L1090.0 382L1090.3 72M1091.5 78L1091.8 382L1092.0 84M1093.3 90L1093.6 382L1093.8 108M1095.1 68L1095.4 382L1095.6 61M1096.9 72L1097.1 382L1097.4 103M1098.7 103L1098.9 382L1099.2 78M1100.5 111L1100.7 382L1101.0 84M1102.3 47L1102.5 382L1102.8 89M1104.0 98L1104.3 382L1104.5 85M1105.8 102L1106.1 382L1106.3 94M1107.6 60L1107.9 382L1108.1 88M1109.4 98L1109.7 382L1109.9 74M1111.2 74L1111.4 382L1111.7 87M1113.0 99L1113.2 382L1113.5 84M1114.8 65L1115.0 382L1115.3 77M1116.5 77L1116.8 382L1117.0 91M1118.3 81L1118.6 382L1118.8 89M1120.1 68L1120.4 382L1120.6 98M1121.9 88L1122.2 382L1122.4 75M1123.7 112L1123.9 382L1124.2 87M1125.5 72L1125.7 382L1126.0 95M1127.3 81L1127.5 382L1127.8 71M1129.0 82L1129.3 382L1129.5 98M1130.8 73L1131.1 382L1131.3 90M1132.6 72L1132.9 382L1133.1 93M1134.4 99L1134.7 382L1134.9 80M1136.2 107L1136.4 382L1136.7 113M1138.0 86L1138.2 382L1138.5 90M1139.8 85L1140.0 382L1140.3 69M1141.5 77L1141.8 382L1142.0 73M1143.3 69L1143.6 382L1143.8 76M1145.1 89L1145.4 382L1145.6 97M1146.9 101L1147.2 382L1147.4 71M1148.7 88L1148.9 382L1149.2 98M1150.5 94L1150.7 382L1151.0 79M1152.3 76L1152.5 382L1152.8 63M1154.1 82L1154.3 382L1154.6 76M1155.8 87L1156.1 382L1156.3 103M1157.6 90L1157.9 382L1158.1 85M1159.4 82L1159.7 382L1159.9 71M1161.2 88L1161.4 382L1161.7 94M1163.0 89L1163.2 382L1163.5 97M1164.8 79L1165.0 382L1165.3 78M1166.6 104L1166.8 382L1167.1 100M1171.9 89L1172.2 382L1172.4 76M1173.7 93L1173.9 382L1174.2 60M1175.5 78L1175.7 382L1176.0 92M1177.3 92L1177.5 382L1177.8 70M1179.1 92L1179.3 382L1179.6 89M1180.8 78L1181.1 382L1181.3 82M1182.6 104L1182.9 382L1183.1 98M1184.4 121L1184.7 382L1184.9 103M1186.2 62L1186.4 382L1186.7 67M1188.0 90L1188.2 382L1188.5 57M1189.8 98L1190.0 382L1190.3 72M1191.6 95L1191.8 382L1192.1 81M1193.3 93L1193.6 382L1193.8 97M1195.1 75L1195.4 382L1195.6 108M1196.9 86L1197.2 382L1197.4 74M1198.7 85L1199.0 382L1199.2 96M1200.5 89L1200.7 382L1201.0 109M1202.3 95L1202.5 382L1202.8 73M1204.1 83L1204.3 382L1204.6 87M1205.8 94L1206.1 382L1206.3 95M1207.6 69L1207.9 382L1208.1 58M1209.4 83L1209.7 382L1209.9 103M1211.2 102L1211.5 382L1211.7 72M1213.0 76L1213.2 382L1213.5 71M1214.8 89L1215.0 382L1215.3 79M1216.6 97L1216.8 382L1217.1 86M1218.3 83L1218.6 382L1218.8 69M1220.1 76L1220.4 382L1220.6 86M1221.9 109L1222.2 382L1222.4 93M1223.7 90L1224.0 382L1224.2 83M1225.5 94L1225.7 382L1226.0 67M1227.3 103L1227.5 382L1227.8 87M1229.1 97L1229.3 382L1229.6 96M1230.8 74L1231.1 382L1231.3 84M1232.6 87L1232.9 382L1233.1 71M1234.4 80L1234.7 382L1234.9 98M1236.2 71L1236.5 382L1236.7 82M1238.0 95L1238.2 382L1238.5 90M1239.8 110L1240.0 382L1240.3 90M1241.6 99L1241.8 382L1242.1 101M1243.4 99L1243.6 382L1243.9 74M1245.1 79L1245.4 382L1245.6 77M1246.9 84L1247.2 382L1247.4 72M1248.7 69L1249.0 382L1249.2 89M1250.5 79L1250.7 382L1251.0 72M1252.3 81L1252.5 382L1252.8 92M1254.1 90L1254.3 382L1254.6 93M1255.9 76L1256.1 382L1256.4 75M1257.6 84L1257.9 382L1258.1 79M1259.4 91L1259.7 382L1259.9 113M1261.2 80L1261.5 382L1261.7 106M1263.0 105L1263.2 382L1263.5 83M1264.8 82L1265.0 382L1265.3 54M1266.6 72L1266.8 382L1267.1 91M1268.4 73L1268.6 382L1268.9 95M1270.1 89L1270.4 382L1270.6 85M1271.9 84L1272.2 382L1272.4 80M1273.7 94L1274.0 382L1274.2 59M1275.5 103L1275.7 382L1276.0 93M1277.3 87L1277.5 382L1277.8 77M1279.1 68L1279.3 382L1279.6 76M1280.9 85L1281.1 382L1281.4 84M1282.6 114L1282.9 382L1283.1 96M1284.4 104L1284.7 382L1284.9 90M1286.2 83L1286.5 382L1286.7 94M1288.0 87L1288.3 382L1288.5 94M1289.8 91L1290.0 382L1290.3 82M1291.6 56L1291.8 382L1292.1 61M1293.4 122L1293.6 382L1293.9 61M1295.1 89L1295.4 382L1295.6 61M1296.9 97L1297.2 382L1297.4 73M1298.7 84L1299.0 382L1299.2 92M1300.5 83L1300.8 382L1301.0 72M1302.3 89L1302.5 382L1302.8 84M1304.1 76L1304.3 382L1304.6 84M1305.9 84L1306.1 382L1306.4 101M1307.6 90L1307.9 382L1308.1 67M1309.4 92L1309.7 382L1309.9 76M1311.2 75L1311.5 382L1311.7 70M1313.0 92L1313.3 382L1313.5 78M1314.8 95L1315.0 382L1315.3 70M1316.6 77L1316.8 382L1317.1 103M1318.4 73L1318.6 382L1318.9 74M1320.1 97L1320.4 382L1320.6 102M1321.9 105L1322.2 382L1322.4 101M1323.7 86L1324.0 382L1324.2 105M1325.5 99L1325.8 382L1326.0 89M1327.3 83L1327.5 382L1327.8 90M1329.1 80L1329.3 382L1329.6 88M1330.9 97L1331.1 382L1331.4 111M1332.7 95L1332.9 382L1333.2 79M1334.4 89L1334.7 382L1334.9 59M1336.2 103L1336.5 382L1336.7 89M1338.0 83L1338.3 382L1338.5 78M1339.8 84L1340.0 382L1340.3 90M1341.6 82L1341.8 382L1342.1 88M1343.4 106L1343.6 382L1343.9 63M1345.2 87L1345.4 382L1345.7 102M1346.9 103L1347.2 382L1347.4 70M1348.7 59L1349.0 382L1349.2 88M1350.5 102L1350.8 382L1351.0 88M1352.3 78L1352.5 382L1352.8 85M1354.1 94L1354.3 382L1354.6 71M1355.9 85L1356.1 382L1356.4 90M1357.7 74L1357.9 382L1358.2 94M1359.4 81L1359.7 382L1359.9 83M1361.2 64L1361.5 382L1361.7 120M1363.0 99L1363.3 382L1363.5 100M1364.8 90L1365.0 382L1365.3 82M1366.6 74L1366.8 382L1367.1 77M1368.4 94L1368.6 382L1368.9 107M1370.2 81L1370.4 382L1370.7 100M1371.9 100L1372.2 382L1372.4 77M1373.7 86L1374.0 382L1374.2 87M1375.5 106L1375.8 382L1376.0 100M1377.3 73L1377.6 382L1377.8 76M1379.1 98L1379.3 382L1379.6 89M1380.9 90L1381.1 382L1381.4 87M1382.7 79L1382.9 382L1383.2 72M1384.4 75L1384.7 382L1384.9 92M1386.2 92L1386.5 382L1386.7 94M1388.0 72L1388.3 382L1388.5 97M1389.8 82L1390.1 382L1390.3 94M1391.6 89L1391.8 382L1392.1 82M1393.4 88L1393.6 382L1393.9 80M1395.2 83L1395.4 382L1395.7 81M1396.9 102L1397.2 382L1397.4 89M1398.7 99L1399.0 382L1399.2 89M1400.5 76L1400.8 382L1401.0 106M1402.3 105L1402.6 382L1402.8 96M1404.1 91L1404.3 382L1404.6 57M1405.9 79L1406.1 382L1406.4 84M1407.7 85L1407.9 382L1408.2 93M1409.4 62L1409.7 382L1409.9 77M1411.2 87L1411.5 382L1411.7 96M1413.0 85L1413.3 382L1413.5 85M1414.8 77L1415.1 382L1415.3 97M1416.6 71L1416.8 382L1417.1 82M1418.4 109L1418.6 382L1418.9 92M1420.2 85L1420.4 382L1420.7 81M1422.0 70L1422.2 382L1422.5 92M1423.7 104L1424.0 382L1424.2 96M1425.5 72L1425.8 382L1426.0 90M1427.3 110L1427.6 382L1427.8 88M1429.1 78L1429.3 382L1429.6 101M1430.9 68L1431.1 382L1431.4 107M1432.7 74L1432.9 382L1433.2 96M1434.5 63L1434.7 382L1435.0 85M1436.2 70L1436.5 382L1436.7 92M1438.0 72L1438.3 382L1438.5 100M1439.8 85L1440.1 382L1440.3 84M1441.6 75L1441.8 382L1442.1 93M1443.4 75L1443.6 382L1443.9 74M1445.2 60L1445.4 382L1445.7 86M1447.0 108L1447.2 382L1447.5 96M1448.7 108L1449.0 382L1449.2 94M1450.5 94L1450.8 382L1451.0 100M1452.3 56L1452.6 382L1452.8 100M1454.1 59L1454.3 382L1454.6 89M1455.9 81L1456.1 382L1456.4 94M1457.7 102L1457.9 382L1458.2 83M1459.5 69L1459.7 382L1460.0 94M1461.2 91L1461.5 382L1461.7 94M1463.0 66L1463.3 382L1463.5 98M1464.8 54L1465.1 382L1465.3 75M1466.6 87L1466.9 382L1467.1 86M1468.4 74L1468.6 382L1468.9 86M1470.2 107L1470.4 382L1470.7 69M1472.0 65L1472.2 382L1472.5 64M1473.7 62L1474.0 382L1474.2 81M1475.5 92L1475.8 382L1476.0 95M1477.3 82L1477.6 382L1477.8 100M1479.1 95L1479.4 382L1479.6 86M1480.9 93L1481.1 382L1481.4 69M1482.7 46L1482.9 382L1483.2 112M1484.5 101L1484.7 382L1485.0 76M1486.2 73L1486.5 382L1486.7 100M1488.0 91L1488.3 382L1488.5 82M1489.8 80L1490.1 382L1490.3 73M1491.6 97L1491.9 382L1492.1 95M1493.4 85L1493.6 382L1493.9 86M1495.2 99L1495.4 382L1495.7 91M1497.0 62L1497.2 382L1497.5 92M1498.7 106L1499.0 382L1499.2 79M1500.5 93L1500.8 382L1501.0 107M1502.3 94L1502.6 382L1502.8 91M1504.1 88L1504.4 382L1504.6 79M1505.9 96L1506.1 382L1506.4 92M1507.7 86L1507.9 382L1508.2 71M1509.5 92L1509.7 382L1510.0 87M1511.3 87L1511.5 382L1511.8 78" fill="none" stroke="#e4716a" stroke-width="0.5"/><polyline points="860.7,99 860.8,72 860.9,79 861.0,94 861.1,86 861.2,68 861.3,107 861.3,97 861.4,77 861.5,76 861.6,100 861.7,98 861.8,84 861.9,69 862.0,86 862.1,114 862.2,73 862.3,86 862.4,92 862.4,100 862.5,81 862.6,82 862.7,81 862.8,76 862.9,65 862.9,99 863.0,87 863.1,92 863.2,65 863.3,90 863.4,106 863.5,86 863.6,95 863.7,95 863.8,91 863.9,102 864.0,110 864.1,62 864.1,88 864.2,97 864.3,107 864.4,91 864.5,83 864.5,96 864.6,81 864.7,101 864.8,94 864.9,87 865.0,81 865.1,86 865.2,94 865.3,91 865.4,112 865.5,60 865.6,91 865.7,90 865.7,83 865.8,79 865.9,82 866.0,94 866.1,96 866.2,93 866.2,86 866.3,83 866.4,70 866.5,88 866.6,107 866.7,79 866.8,75 866.9,106 867.0,79 867.1,84 867.2,93 867.3,84 867.3,81 867.4,79 867.5,72 867.6,86 867.7,86 867.8,57 867.8,90 867.9,77 868.0,73 868.1,102 868.2,71 868.3,101 868.4,54 868.5,94 868.6,73 868.7,89 868.8,77 868.9,95 868.9,84 869.0,86 869.1,85 869.2,76 869.3,91 869.4,90 869.5,102 869.6,88 869.6,78 869.7,95 869.8,81 869.9,70 870.0,89 870.1,100 870.2,56 870.3,79 870.4,77 870.5,55 870.6,96 870.6,82 870.7,109 870.8,80 870.9,81 871.0,96 871.1,96 871.2,88 871.3,89 871.4,67 871.4,88 871.5,106 871.6,92 871.7,103 871.8,84 871.9,113 872.0,100 872.1,83 872.2,112 872.2,105 872.3,74 872.4,102 872.5,86 872.6,82 872.7,99 872.8,107 872.9,67 873.0,93 873.1,80 873.2,95 873.2,103 873.3,99 873.4,94 873.5,94 873.6,90 873.7,81 873.8,93 873.8,75 873.9,94 874.0,78 874.1,70 874.2,65 874.3,110 874.4,65 874.5,108 874.6,69 874.7,86 874.8,82 874.9,98 875.0,75 875.0,94 875.1,76 875.2,73 875.3,77 875.4,91 875.4,86 875.5,75 875.6,76 875.7,72 875.8,84 875.9,95 876.0,82 876.1,80 876.2,93 876.3,81 876.4,96 876.5,83 876.6,93 876.6,60 876.7,71 876.8,101 876.9,77 877.0,88 877.1,82 877.1,105 877.2,104 877.3,85 877.4,89 877.5,102 877.6,96 877.7,76 877.8,91 877.9,79 878.0,66 878.1,82 878.2,84 878.2,93 878.3,71 878.4,104 878.5,99 878.6,74 878.7,94 878.7,80 878.8,90 878.9,89 879.0,86 879.1,110 879.2,99 879.3,92 879.4,59 879.5,76 879.6,77 879.7,99 879.8,75 879.8,71 879.9,77 880.0,54 880.1,102 880.2,99 880.3,89 880.3,80 880.4,86 880.5,85 880.6,81 880.7,77 880.8,94 880.9,94 881.0,72 881.1,90 881.2,96 881.3,83 881.4,90 881.5,85 881.5,87 881.6,78 881.7,75 881.8,96 881.9,101 882.0,67 882.1,94 882.1,87 882.2,94 882.3,108 882.4,98 882.5,99 882.6,74 882.7,83 882.8,86 882.9,102 883.0,88 883.1,78 883.1,84 883.2,73 883.3,85 883.4,78 883.5,81 883.6,93 883.7,70 883.8,82 883.9,76 883.9,88 884.0,96 884.1,79 884.2,81 884.3,71 884.4,79 884.5,100 884.6,75 884.7,94 884.7,95 884.8,85 884.9,86 885.0,73 885.1,52 885.2,81 885.3,68 885.4,89 885.5,82 885.6,92 885.7,91 885.7,81 885.8,96 885.9,65 886.0,88 886.1,94 886.2,86 886.3,78 886.3,77 886.4,68 886.5,99 886.6,91 886.7,67 886.8,58 886.9,94 887.0,87 887.1,105 887.2,96 887.3,97 887.4,87 887.5,101 887.5,89 887.6,75 887.7,89 887.8,101 887.9,86 888.0,60 888.0,85 888.1,80 888.2,88 888.3,89 888.4,80 888.5,118 888.6,101 888.7,93 888.8,89 888.9,68 889.0,56 889.1,78 889.1,81 889.2,78 889.3,92 889.4,84 889.5,82 889.6,109 889.6,81 889.7,105 889.8,77 889.9,76 890.0,114 890.1,80 890.2,84 890.3,94 890.4,75 890.5,62 890.6,80 890.7,99 890.7,104 890.8,100 890.9,98 891.0,72 891.1,76 891.2,86 891.2,86 891.3,96 891.4,94 891.5,86 891.6,100 891.7,66 891.8,85 891.9,93 892.0,74 892.1,99 892.2,73 892.3,85 892.4,63 892.4,93 892.5,91 892.6,96 892.7,101 892.8,83 892.8,94 892.9,73 893.0,117 893.1,81 893.2,86 893.3,86 893.4,94 893.5,65 893.6,91 893.7,81 893.8,89 893.9,91 894.0,85 894.0,78 894.1,100 894.2,92 894.3,103 894.4,81 894.5,97 894.6,95 894.6,81 894.7,88 894.8,81 894.9,85 895.0,100 895.1,84 895.2,90 895.3,89 895.4,83 895.5,93 895.6,99 895.6,72 895.7,64 895.8,90 895.9,72 896.0,82 896.1,94 896.2,96 896.3,90 896.4,91 896.4,100 896.5,76 896.6,100 896.7,99 896.8,75 896.9,77 897.0,69 897.1,85 897.2,94 897.2,72 897.3,87 897.4,88 897.5,97 897.6,81 897.7,115 897.8,80 897.9,111 898.0,76 898.1,105 898.2,78 898.2,100 898.3,63 898.4,92 898.5,100 898.6,71 898.7,121 898.8,104 898.9,102 898.9,95 899.0,111 899.1,76 899.2,74 899.3,87 899.4,91 899.5,105 899.6,80 899.7,95 899.8,79 899.9,74 900.0,86 900.0,70 900.1,83 900.2,69 900.3,113 900.4,88 900.5,88 900.5,106 900.6,94 900.7,74 900.8,80 900.9,93 901.0,82 901.1,72 901.2,99 901.3,83 901.4,73 901.5,95 901.6,70 901.6,87 901.7,73 901.8,90 901.9,94 902.0,84 902.1,84 902.1,69 902.2,87 902.3,82 902.4,66 902.5,82 902.6,81 902.7,67 902.8,85 902.9,81 903.0,77 903.1,88 903.2,100 903.3,104 903.3,89 903.4,72 903.5,74 903.6,94 903.7,104 903.7,92 903.8,89 903.9,95 904.0,75 904.1,96 904.2,79 904.3,77 904.4,107 904.5,91 904.6,71 904.7,76 904.8,85 904.9,100 904.9,95 905.0,85 905.1,71 905.2,80 905.3,87 905.4,108 905.4,98 905.5,86 905.6,71 905.7,73 905.8,96 905.9,86 906.0,95 906.1,91 906.2,84 906.3,91 906.4,93 906.5,100 906.5,105 906.6,89 906.7,84 906.8,79 906.9,96 907.0,95 907.1,71 907.1,93 907.2,95 907.3,100 907.4,74 907.5,100 907.6,107 907.7,95 907.8,71 907.9,86 908.0,83 908.1,85 908.1,87 908.2,88 908.3,103 908.4,66 908.5,88 908.6,71 908.7,105 908.8,80 908.9,101 908.9,74 909.0,70 909.1,70 909.2,89 909.3,77 909.4,93 909.5,93 909.6,83 909.7,88 909.8,76 909.8,108 909.9,72 910.0,93 910.1,68 910.2,72 910.3,100 910.4,87 910.5,78 910.6,96 910.7,95 910.7,75 910.8,91 910.9,76 911.0,68 911.1,75 911.2,95 911.3,96 911.4,83 911.4,76 911.5,81 911.6,91 911.7,97 911.8,71 911.9,88 912.0,63 912.1,100 912.2,90 912.3,94 912.4,64 912.5,71 912.5,72 912.6,84 912.7,100 912.8,104 912.9,81 913.0,89 913.0,84 913.1,81 913.2,91 913.3,89 913.4,78 913.5,87 913.6,89 913.7,78 913.8,110 913.9,71 914.0,81 914.1,95 914.2,88 914.2,71 914.3,98 914.4,84 914.5,64 914.6,77 914.6,88 914.7,79 914.8,86 914.9,90 915.0,81 915.1,112 915.2,74 915.3,79 915.4,91 915.5,96 915.6,101 915.7,83 915.8,84 915.8,84 915.9,65 916.0,113 916.1,74 916.2,89 916.3,97 916.3,83 916.4,81 916.5,66 916.6,83 916.7,91 916.8,92 916.9,96 917.0,80 917.1,76 917.2,89 917.3,88 917.4,69 917.4,85 917.5,80 917.6,99 917.7,93 917.8,112 917.9,71 917.9,89 918.0,100 918.1,85 918.2,72 918.3,88 918.4,75 918.5,87 918.6,101 918.7,97 918.8,89 918.9,58 919.0,79 919.0,89 919.1,82 919.2,83 919.3,91 919.4,87 919.5,89 919.6,77 919.6,90 919.7,79 919.8,95 919.9,99 920.0,85 920.1,79 920.2,87 920.3,76 920.4,76 920.5,77 920.6,88 920.7,102 920.7,64 920.8,92 920.9,77 921.0,80 921.1,90 921.2,64 921.3,78 921.4,86 921.4,101 921.5,79 921.6,91 921.7,91 921.8,80 921.9,90 922.0,78 922.1,94 922.2,92 922.3,75 922.3,94 922.4,79 922.5,80 922.6,86 922.7,106 922.8,102 922.9,99 923.0,101 923.1,76 923.2,96 923.2,87 923.3,106 923.4,79 923.5,77 923.6,93 923.7,76 923.8,105 923.9,93 923.9,88 924.0,85 924.1,72 924.2,90 924.3,98 924.4,83 924.5,84 924.6,81 924.7,90 924.8,84 924.9,93 925.0,79 925.0,72 925.1,95 925.2,86 925.3,79 925.4,90 925.5,75 925.5,93 925.6,74 925.7,105 925.8,102 925.9,85 926.0,69 926.1,67 926.2,96 926.3,86 926.4,92 926.5,112 926.6,77 926.7,90 926.7,70 926.8,94 926.9,88 927.0,81 927.1,92 927.2,52 927.2,83 927.3,100 927.4,85 927.5,72 927.6,81 927.7,90 927.8,94 927.9,95 928.0,100 928.1,92 928.2,83 928.3,93 928.3,66 928.4,81 928.5,91 928.6,106 928.7,83 928.8,54 928.8,74 928.9,97 929.0,84 929.1,89 929.2,53 929.3,94 929.4,89 929.5,90 929.6,103 929.7,126 929.8,89 929.9,80 929.9,91 930.0,80 930.1,77 930.2,78 930.3,106 930.4,76 930.4,86 930.5,86 930.6,92 930.7,81 930.8,75 930.9,93 931.0,76 931.1,92 931.2,79 931.3,88 931.4,76 931.5,63 931.6,83 931.6,92 931.7,91 931.8,78 931.9,92 932.0,74 932.1,82 932.1,97 932.2,95 932.3,81 932.4,95 932.5,78 932.6,111 932.7,94 932.8,88 932.9,108 933.0,93 933.1,104 933.2,87 933.2,89 933.3,77 933.4,96 933.5,105 933.6,92 933.7,84 933.8,85 933.9,84 933.9,88 934.0,96 934.1,93 934.2,73 934.3,82 934.4,117 934.5,71 934.6,110 934.7,91 934.8,74 934.8,84 934.9,79 935.0,75 935.1,82 935.2,101 935.3,81 935.4,94 935.5,115 935.6,89 935.7,79 935.7,65 935.8,83 935.9,75 936.0,82 936.1,66 936.2,90 936.3,72 936.4,64 936.4,90 936.5,73 936.6,102 936.7,82 936.8,77 936.9,96 937.0,107 937.1,85 937.2,90 937.3,84 937.4,82 937.5,76 937.5,104 937.6,78 937.7,81 937.8,84 937.9,67 938.0,83 938.1,90 938.1,80 938.2,105 938.3,74 938.4,85 938.5,65 938.6,77 938.7,81 938.8,83 938.9,100 939.0,87 939.1,82 939.2,74 939.2,80 939.3,92 939.4,82 939.5,88 939.6,101 939.7,104 939.7,76 939.8,68 939.9,68 940.0,96 940.1,68 940.2,67 940.3,95 940.4,80 940.5,65 940.6,84 940.7,71 940.8,93 940.8,90 940.9,75 941.0,87 941.1,98 941.2,68 941.3,87 941.3,89 941.4,91 941.5,85 941.6,97 941.7,75 941.8,90 941.9,76 942.0,96 942.1,98 942.2,97 942.3,83 942.4,101 942.5,75 942.5,89 942.6,75 942.7,90 942.8,76 942.9,78 942.9,92 943.0,73 943.1,94 943.2,79 943.3,95 943.4,106 943.5,68 943.6,88 943.7,74 943.8,83 943.9,106 944.0,81 944.1,73 944.1,70 944.2,66 944.3,81 944.4,87 944.5,85 944.6,100 944.6,81 944.7,95 944.8,78 944.9,92 945.0,71 945.1,93 945.2,92 945.3,89 945.4,98 945.5,96 945.6,89 945.7,115 945.7,62 945.8,81 945.9,82 946.0,96 946.1,83 946.2,86 946.3,85 946.4,104 946.4,88 946.5,96 946.6,93 946.7,90 946.8,76 946.9,71 947.0,85 947.1,99 947.2,68 947.3,103 947.3,92 947.4,88 947.5,95 947.6,70 947.7,81 947.8,73 947.9,89 948.0,75 948.1,88 948.2,88 948.2,79 948.3,88 948.4,104 948.5,90 948.6,118 948.7,89 948.8,96 948.9,76 949.0,119 949.0,62 949.1,90 949.2,105 949.3,81 949.4,80 949.5,81 949.6,60 949.7,96 949.8,82 949.9,84 950.0,94 950.0,96 950.1,80 950.2,74 950.3,78 950.4,105 950.5,83 950.6,91 950.6,71 950.7,87 950.8,62 950.9,101 951.0,80 951.1,97 951.2,64 951.3,67 951.4,97 951.5,77 951.6,86 951.7,106 951.7,99 951.8,90 951.9,82 952.0,82 952.1,82 952.2,100 952.2,84 952.3,79 952.4,104 952.5,67 952.6,68 952.7,84 952.8,61 952.9,96 953.0,97 953.1,93 953.2,95 953.3,64 953.4,85 953.4,87 953.5,82 953.6,90 953.7,83 953.8,71 953.8,88 953.9,69 954.0,82 954.1,88 954.2,80 954.3,62 954.4,89 954.5,69 954.6,79 954.7,84 954.8,85 954.9,76 955.0,78 955.0,81 955.1,78 955.2,96 955.3,94 955.4,88 955.5,90 955.5,79 955.6,97 955.7,89 955.8,75 955.9,66 956.0,85 956.1,71 956.2,69 956.3,98 956.4,83 956.5,98 956.6,91 956.6,81 956.7,101 956.8,79 956.9,88 957.0,89 957.1,79 957.1,86 957.2,95 957.3,88 957.4,99 957.5,97 957.6,98 957.7,101 957.8,96 957.9,95 958.0,86 958.1,48 958.2,93 958.2,105 958.3,79 958.4,101 958.5,97 958.6,90 958.7,86 958.8,85 958.9,83 958.9,76 959.0,93 959.1,89 959.2,102 959.3,78 959.4,89 959.5,63 959.6,94 959.7,68 959.8,97 959.9,106 959.9,96 960.0,82 960.1,74 960.2,97 960.3,75 960.4,92 960.5,92 960.6,90 960.7,66 960.7,104 960.8,84 960.9,83 961.0,67 961.1,97 961.2,95 961.3,97 961.4,94 961.5,78 961.5,96 961.6,71 961.7,86 961.8,97 961.9,94 962.0,103 962.1,104 962.2,72 962.3,76 962.4,98 962.5,92 962.5,84 962.6,80 962.7,89 962.8,89 962.9,90 963.0,85 963.1,105 963.1,86 963.2,84 963.3,102 963.4,81 963.5,97 963.6,118 963.7,109 963.8,85 963.9,80 964.0,91 964.1,104 964.2,88 964.3,75 964.3,81 964.4,89 964.5,88 964.6,86 964.7,80 964.7,88 964.8,98 964.9,88 965.0,85 965.1,72 965.2,101 965.3,88 965.4,97 965.5,83 965.6,93 965.7,123 965.8,75 965.9,94 965.9,99 966.0,104 966.1,88 966.2,85 966.3,87 966.4,82 966.4,96 966.5,79 966.6,88 966.7,81 966.8,79 966.9,91 967.0,72 967.1,77 967.2,91 967.3,65 967.4,67 967.5,105 967.5,113 967.6,94 967.7,81 967.8,75 967.9,75 968.0,78 968.0,92 968.1,84 968.2,74 968.3,94 968.4,94 968.5,96 968.6,69 968.7,78 968.8,76 968.9,91 969.0,87 969.1,72 969.1,90 969.2,72 969.3,87 969.4,87 969.5,80 969.6,76 969.6,66 969.7,95 969.8,96 969.9,113 970.0,76 970.1,69 970.2,100 970.3,90 970.4,89 970.5,105 970.6,85 970.7,83 970.8,92 970.8,98 970.9,85 971.0,79 971.1,103 971.2,87 971.3,80 971.4,120 971.4,101 971.5,71 971.6,90 971.7,79 971.8,88 971.9,100 972.0,107 972.1,58 972.2,102 972.3,89 972.4,69 972.4,83 972.5,84 972.6,110 972.7,94 972.8,102 972.9,107 973.0,82 973.1,76 973.2,95 973.2,76 973.3,99 973.4,72 973.5,75 973.6,86 973.7,99 973.8,79 973.9,78 974.0,65 974.0,93 974.1,67 974.2,90 974.3,80 974.4,87 974.5,85 974.6,69 974.7,94 974.8,76 974.9,89 975.0,87 975.0,110 975.1,89 975.2,74 975.3,76 975.4,105 975.5,99 975.6,91 975.6,64 975.7,91 975.8,86 975.9,89 976.0,82 976.1,97 976.2,83 976.3,80 976.4,74 976.5,97 976.6,75 976.7,63 976.8,77 976.8,70 976.9,63 977.0,71 977.1,80 977.2,76 977.3,50 977.3,95 977.4,91 977.5,73 977.6,83 977.7,112 977.8,83 977.9,82 978.0,97 978.1,81 978.2,83 978.3,108 978.4,80 978.4,60 978.5,65 978.6,85 978.7,83 978.8,102 978.9,95 978.9,70 979.0,83 979.1,73 979.2,86 979.3,74 979.4,92 979.5,92 979.6,97 979.7,109 979.8,91 979.9,102 980.0,92 980.0,84 980.1,84 980.2,81 980.3,91 980.4,88 980.5,86 980.5,116 980.6,99 980.7,73 980.8,97 980.9,99 981.0,74 981.1,101 981.2,74 981.3,87 981.4,94 981.5,111 981.6,70 981.7,108 981.7,101 981.8,77 981.9,101 982.0,80 982.1,87 982.1,94 982.2,83 982.3,98 982.4,79 982.5,83 982.6,80 982.7,83 982.8,79 982.9,82 983.0,76 983.1,82 983.2,82 983.3,97 983.3,107 983.4,86 983.5,75 983.6,97 983.7,105 983.8,93 983.9,82 983.9,100 984.0,87 984.1,78 984.2,87 984.3,74 984.4,92 984.5,76 984.6,66 984.7,98 984.8,97 984.9,78 984.9,48 985.0,80 985.1,87 985.2,70 985.3,88 985.4,106 985.5,98 985.6,70 985.7,107 985.7,84 985.8,72 985.9,99 986.0,95 986.1,90 986.2,101 986.3,89 986.4,88 986.5,76 986.5,87 986.6,91 986.7,80 986.8,73 986.9,74 987.0,83 987.1,91 987.2,92 987.3,102 987.4,85 987.5,87 987.5,77 987.6,70 987.7,109 987.8,94 987.9,89 988.0,85 988.1,100 988.2,76 988.2,75 988.3,80 988.4,78 988.5,100 988.6,72 988.7,94 988.8,109 988.9,85 989.0,81 989.1,95 989.2,106 989.3,100 989.3,74 989.4,74 989.5,88 989.6,73 989.7,88 989.8,100 989.8,79 989.9,79 990.0,97 990.1,103 990.2,98 990.3,72 990.4,90 990.5,52 990.6,94 990.7,79 990.8,82 990.9,89 990.9,76 991.0,97 991.1,113 991.2,85 991.3,100 991.4,102 991.4,79 991.5,88 991.6,82 991.7,65 991.8,84 991.9,81 992.0,101 992.1,76 992.2,76 992.3,99 992.4,78 992.5,82 992.6,89 992.6,85 992.7,57 992.8,94 992.9,88 993.0,108 993.0,78 993.1,75 993.2,65 993.3,93 993.4,102 993.5,78 993.6,99 993.7,86 993.8,91 993.9,84 994.0,92 994.1,78 994.2,97 994.2,57 994.3,77 994.4,94 994.5,98 994.6,88 994.7,69 994.7,74 994.8,99 994.9,79 995.0,86 995.1,77 995.2,94 995.3,60 995.4,85 995.5,62 995.6,92 995.7,70 995.8,87 995.8,66 995.9,88 996.0,99 996.1,99 996.2,94 996.3,79 996.4,82 996.4,66 996.5,98 996.6,74 996.7,58 996.8,94 996.9,93 997.0,81 997.1,83 997.2,93 997.3,87 997.4,66 997.4,75 997.5,96 997.6,107 997.7,100 997.8,84 997.9,96 998.0,96 998.1,77 998.2,89 998.2,68 998.3,82 998.4,78 998.5,85 998.6,67 998.7,101 998.8,100 998.9,92 999.0,61 999.1,67 999.1,99 999.2,92 999.3,79 999.4,85 999.5,75 999.6,92 999.7,106 999.8,78 999.9,71 1000.0,105 1000.0,109 1000.1,81 1000.2,100 1000.3,77 1000.4,90 1000.5,84 1000.6,78 1000.7,88 1000.7,98 1000.8,75 1000.9,104 1001.0,69 1001.1,93 1001.2,92 1001.3,81 1001.4,81 1001.5,80 1001.6,104 1001.7,97 1001.8,82 1001.8,70 1001.9,88 1002.0,74 1002.1,73 1002.2,82 1002.3,88 1002.3,77 1002.4,80 1002.5,78 1002.6,96 1002.7,80 1002.8,66 1002.9,89 1003.0,84 1003.1,89 1003.2,75 1003.3,111 1003.4,66 1003.5,80 1003.5,89 1003.6,81 1003.7,78 1003.8,71 1003.9,84 1003.9,77 1004.0,68 1004.1,79 1004.2,93 1004.3,76 1004.4,61 1004.5,90 1004.6,80 1004.7,81 1004.8,75 1004.9,91 1005.0,86 1005.1,62 1005.1,77 1005.2,93 1005.3,76 1005.4,105 1005.5,85 1005.6,74 1005.6,101 1005.7,95 1005.8,80 1005.9,85 1006.0,89 1006.1,82 1006.2,103 1006.3,96 1006.4,65 1006.5,94 1006.6,80 1006.7,86 1006.7,75 1006.8,82 1006.9,81 1007.0,72 1007.1,82 1007.2,68 1007.2,73 1007.3,89 1007.4,105 1007.5,94 1007.6,61 1007.7,71 1007.8,71 1007.9,105 1008.0,102 1008.1,93 1008.2,102 1008.3,84 1008.3,99 1008.4,80 1008.5,88 1008.6,92 1008.7,78 1008.8,80 1008.9,84 1008.9,109 1009.0,109 1009.1,94 1009.2,84 1009.3,65 1009.4,81 1009.5,98 1009.6,92 1009.7,101 1009.8,86 1009.9,87 1010.0,86 1010.0,83 1010.1,73 1010.2,78 1010.3,100 1010.4,76 1010.5,98 1010.6,81 1010.7,85 1010.7,87 1010.8,89 1010.9,75 1011.0,82 1011.1,89 1011.2,76 1011.3,60 1011.4,66 1011.5,68 1011.6,92 1011.6,87 1011.7,84 1011.8,106 1011.9,65 1012.0,103 1012.1,81 1012.2,101 1012.3,84 1012.4,76 1012.5,79 1012.5,75 1012.6,86 1012.7,84 1012.8,74 1012.9,116 1013.0,83 1013.1,71 1013.2,64 1013.2,77 1013.3,94 1013.4,74 1013.5,63 1013.6,93 1013.7,94 1013.8,87 1013.9,91 1014.0,110 1014.1,114 1014.2,101 1014.3,93 1014.3,84 1014.4,69 1014.5,50 1014.6,75 1014.7,97 1014.8,74 1014.8,86 1014.9,82 1015.0,74 1015.1,76 1015.2,101 1015.3,99 1015.4,82 1015.5,77 1015.6,60 1015.7,78 1015.8,90 1015.9,92 1016.0,94 1016.0,101 1016.1,85 1016.2,95 1016.3,86 1016.4,89 1016.5,88 1016.5,91 1016.6,82 1016.7,86 1016.8,117 1016.9,83 1017.0,84 1017.1,93 1017.2,84 1017.3,94 1017.4,84 1017.5,96 1017.6,78 1017.6,82 1017.7,103 1017.8,94 1017.9,84 1018.0,99 1018.1,94 1018.1,84 1018.2,82 1018.3,86 1018.4,96 1018.5,89 1018.6,92 1018.7,100 1018.8,99 1018.9,95 1019.0,104 1019.1,80 1019.2,77 1019.2,75 1019.3,95 1019.4,95 1019.5,83 1019.6,91 1019.7,105 1019.7,71 1019.8,103 1019.9,105 1020.0,76 1020.1,99 1020.2,73 1020.3,82 1020.4,82 1020.5,90 1020.6,103 1020.7,100 1020.8,85 1020.9,87 1020.9,100 1021.0,99 1021.1,96 1021.2,87 1021.3,81 1021.4,75 1021.4,172 1021.5,163 1021.6,191 1021.7,174 1021.8,168 1021.9,202 1022.0,170 1022.1,176 1022.2,170 1022.3,179 1022.4,167 1022.5,186 1022.5,187 1022.6,172 1022.7,172 1022.8,197 1022.9,167 1023.0,167 1023.1,169 1023.2,189 1023.2,170 1023.3,181 1023.4,186 1023.5,189 1023.6,188 1023.7,170 1023.8,190 1023.9,188 1024.0,177 1024.1,184 1024.1,205 1024.2,189 1024.3,185 1024.4,162 1024.5,173 1024.6,193 1024.7,194 1024.8,186 1024.9,178 1025.0,190 1025.0,177 1025.1,167 1025.2,212 1025.3,181 1025.4,178 1025.5,175 1025.6,180 1025.7,182 1025.7,177 1025.8,179 1025.9,180 1026.0,162 1026.1,169 1026.2,170 1026.3,188 1026.4,187 1026.5,168 1026.6,193 1026.7,169 1026.8,197 1026.8,187 1026.9,186 1027.0,205 1027.1,181 1027.2,167 1027.3,174 1027.4,184 1027.4,157 1027.5,174 1027.6,176 1027.7,184 1027.8,174 1027.9,150 1028.0,175 1028.1,200 1028.2,178 1028.3,158 1028.4,167 1028.5,187 1028.5,177 1028.6,191 1028.7,187 1028.8,187 1028.9,189 1029.0,161 1029.0,163 1029.1,184 1029.2,180 1029.3,161 1029.4,184 1029.5,186 1029.6,191 1029.7,162 1029.8,179 1029.9,181 1030.0,186 1030.1,192 1030.1,170 1030.2,190 1030.3,187 1030.4,187 1030.5,187 1030.6,199 1030.6,188 1030.7,182 1030.8,212 1030.9,174 1031.0,184 1031.1,197 1031.2,184 1031.3,176 1031.4,181 1031.5,180 1031.6,181 1031.7,173 1031.8,197 1031.8,188 1031.9,176 1032.0,181 1032.1,193 1032.2,181 1032.2,201 1032.3,200 1032.4,198 1032.5,183 1032.6,152 1032.7,169 1032.8,167 1032.9,181 1033.0,162 1033.1,177 1033.2,180 1033.3,168 1033.4,195 1033.4,207 1033.5,195 1033.6,164 1033.7,170 1033.8,179 1033.9,184 1033.9,191 1034.0,172 1034.1,193 1034.2,165 1034.3,185 1034.4,192 1034.5,184 1034.6,192 1034.7,183 1034.8,202 1034.9,187 1035.0,180 1035.0,177 1035.1,186 1035.2,167 1035.3,201 1035.4,184 1035.5,187 1035.6,181 1035.7,184 1035.7,192 1035.8,152 1035.9,181 1036.0,183 1036.1,171 1036.2,188 1036.3,184 1036.4,171 1036.5,195 1036.6,186 1036.6,170 1036.7,160 1036.8,182 1036.9,182 1037.0,168 1037.1,199 1037.2,189 1037.3,191 1037.4,205 1037.5,215 1037.5,173 1037.6,166 1037.7,214 1037.8,183 1037.9,165 1038.0,191 1038.1,197 1038.2,177 1038.3,181 1038.3,174 1038.4,181 1038.5,166 1038.6,173 1038.7,178 1038.8,186 1038.9,173 1039.0,189 1039.1,170 1039.2,167 1039.3,170 1039.3,177 1039.4,171 1039.5,200 1039.6,188 1039.7,182 1039.8,164 1039.9,188 1039.9,170 1040.0,179 1040.1,158 1040.2,177 1040.3,200 1040.4,184 1040.5,178 1040.6,166 1040.7,173 1040.8,184 1040.9,196 1041.0,181 1041.0,182 1041.1,198 1041.2,209 1041.3,186 1041.4,178 1041.5,193 1041.5,187 1041.6,167 1041.7,172 1041.8,202 1041.9,177 1042.0,179 1042.1,183 1042.2,174 1042.3,174 1042.4,151 1042.5,178 1042.6,190 1042.7,187 1042.7,172 1042.8,158 1042.9,178 1043.0,186 1043.1,180 1043.1,195 1043.2,172 1043.3,175 1043.4,179 1043.5,191 1043.6,184 1043.7,188 1043.8,177 1043.9,184 1044.0,177 1044.1,170 1044.2,166 1044.3,193 1044.3,185 1044.4,194 1044.5,166 1044.6,191 1044.7,169 1044.8,187 1044.8,184 1044.9,179 1045.0,180 1045.1,183 1045.2,173 1045.3,167 1045.4,171 1045.5,187 1045.6,203 1045.7,179 1045.8,215 1045.9,173 1045.9,173 1046.0,195 1046.1,174 1046.2,189 1046.3,166 1046.4,190 1046.4,178 1046.5,193 1046.6,154 1046.7,185 1046.8,160 1046.9,184 1047.0,185 1047.1,189 1047.2,190 1047.3,176 1047.4,167 1047.5,180 1047.5,191 1047.6,178 1047.7,190 1047.8,213 1047.9,179 1048.0,202 1048.1,188 1048.2,180 1048.2,162 1048.3,169 1048.4,163 1048.5,178 1048.6,178 1048.7,160 1048.8,188 1048.9,177 1049.0,179 1049.1,177 1049.2,174 1049.2,179 1049.3,171 1049.4,191 1049.5,175 1049.6,193 1049.7,168 1049.8,169 1049.9,183 1050.0,187 1050.0,104 1050.1,98 1050.2,75 1050.3,89 1050.4,101 1050.5,113 1050.6,91 1050.7,107 1050.8,85 1050.8,87 1050.9,64 1051.0,101 1051.1,79 1051.2,100 1051.3,98 1051.4,89 1051.5,96 1051.6,65 1051.7,87 1051.8,95 1051.8,91 1051.9,89 1052.0,96 1052.1,79 1052.2,72 1052.3,102 1052.4,92 1052.4,91 1052.5,103 1052.6,102 1052.7,91 1052.8,97 1052.9,83 1053.0,77 1053.1,84 1053.2,83 1053.3,97 1053.4,94 1053.5,82 1053.6,80 1053.6,90 1053.7,100 1053.8,83 1053.9,92 1054.0,107 1054.0,77 1054.1,82 1054.2,78 1054.3,92 1054.4,69 1054.5,81 1054.6,75 1054.7,94 1054.8,90 1054.9,71 1055.0,87 1055.1,86 1055.2,69 1055.2,73 1055.3,84 1055.4,87 1055.5,93 1055.6,69 1055.7,68 1055.7,92 1055.8,85 1055.9,75 1056.0,80 1056.1,83 1056.2,75 1056.3,64 1056.4,85 1056.5,99 1056.6,88 1056.7,87 1056.8,91 1056.8,78 1056.9,78 1057.0,76 1057.1,81 1057.2,90 1057.3,96 1057.3,83 1057.4,88 1057.5,87 1057.6,80 1057.7,90 1057.8,74 1057.9,74 1058.0,97 1058.1,71 1058.2,90 1058.3,95 1058.4,90 1058.4,101 1058.5,82 1058.6,72 1058.7,104 1058.8,81 1058.9,80 1058.9,81 1059.0,92 1059.1,76 1059.2,83 1059.3,77 1059.4,83 1059.5,89 1059.6,87 1059.7,79 1059.8,74 1059.9,109 1060.0,101 1060.1,105 1060.1,93 1060.2,94 1060.3,84 1060.4,90 1060.5,71 1060.6,94 1060.7,95 1060.7,85 1060.8,92 1060.9,97 1061.0,102 1061.1,84 1061.2,93 1061.3,98 1061.4,90 1061.5,83 1061.6,63 1061.7,68 1061.7,97 1061.8,92 1061.9,109 1062.0,109 1062.1,108 1062.2,76 1062.3,88 1062.4,104 1062.5,94 1062.5,70 1062.6,109 1062.7,92 1062.8,84 1062.9,81 1063.0,112 1063.1,84 1063.2,101 1063.3,93 1063.3,105 1063.4,78 1063.5,50 1063.6,75 1063.7,90 1063.8,107 1063.9,76 1064.0,73 1064.1,99 1064.2,76 1064.3,107 1064.3,103 1064.4,78 1064.5,70 1064.6,86 1064.7,81 1064.8,68 1064.9,80 1064.9,71 1065.0,70 1065.1,99 1065.2,61 1065.3,73 1065.4,84 1065.5,77 1065.6,83 1065.7,84 1065.8,98 1065.9,91 1066.0,90 1066.1,74 1066.1,87 1066.2,71 1066.3,115 1066.4,97 1066.5,75 1066.6,91 1066.6,79 1066.7,68 1066.8,77 1066.9,103 1067.0,89 1067.1,99 1067.2,81 1067.3,74 1067.4,89 1067.5,80 1067.6,88 1067.7,64 1067.7,85 1067.8,83 1067.9,78 1068.0,86 1068.1,85 1068.2,80 1068.2,79 1068.3,90 1068.4,93 1068.5,89 1068.6,81 1068.7,91 1068.8,98 1068.9,90 1069.0,92 1069.1,79 1069.2,92 1069.3,91 1069.3,64 1069.4,81 1069.5,97 1069.6,72 1069.7,78 1069.8,102 1069.8,87 1069.9,79 1070.0,77 1070.1,92 1070.2,92 1070.3,87 1070.4,72 1070.5,107 1070.6,76 1070.7,82 1070.8,70 1070.9,99 1071.0,73 1071.0,96 1071.1,82 1071.2,90 1071.3,114 1071.4,87 1071.4,93 1071.5,99 1071.6,78 1071.7,90 1071.8,74 1071.9,69 1072.0,89 1072.1,88 1072.2,94 1072.3,109 1072.4,86 1072.5,77 1072.6,74 1072.6,86 1072.7,64 1072.8,92 1072.9,86 1073.0,92 1073.1,91 1073.2,89 1073.2,83 1073.3,85 1073.4,98 1073.5,80 1073.6,95 1073.7,81 1073.8,85 1073.9,108 1074.0,98 1074.1,75 1074.2,93 1074.2,93 1074.3,91 1074.4,84 1074.5,79 1074.6,89 1074.7,66 1074.8,92 1074.9,91 1075.0,88 1075.0,59 1075.1,90 1075.2,88 1075.3,78 1075.4,87 1075.5,76 1075.6,98 1075.7,76 1075.8,111 1075.8,80 1075.9,78 1076.0,57 1076.1,96 1076.2,78 1076.3,78 1076.4,97 1076.5,83 1076.6,96 1076.7,99 1076.8,103 1076.8,110 1076.9,82 1077.0,106 1077.1,78 1077.2,83 1077.3,95 1077.4,104 1077.5,96 1077.5,102 1077.6,90 1077.7,90 1077.8,57 1077.9,110 1078.0,93 1078.1,79 1078.2,74 1078.3,70 1078.4,97 1078.5,76 1078.6,120 1078.6,78 1078.7,103 1078.8,96 1078.9,111 1079.0,95 1079.1,102 1079.1,83 1079.2,95 1079.3,79 1079.4,87 1079.5,90 1079.6,65 1079.7,72 1079.8,102 1079.9,70 1080.0,77 1080.1,70 1080.2,81 1080.2,107 1080.3,90 1080.4,94 1080.5,71 1080.6,86 1080.7,83 1080.7,77 1080.8,97 1080.9,73 1081.0,83 1081.1,97 1081.2,93 1081.3,89 1081.4,79 1081.5,69 1081.6,90 1081.7,89 1081.8,65 1081.9,48 1081.9,65 1082.0,84 1082.1,90 1082.2,95 1082.3,70 1082.3,56 1082.4,96 1082.5,95 1082.6,92 1082.7,101 1082.8,76 1082.9,103 1083.0,78 1083.1,81 1083.2,77 1083.3,104 1083.4,84 1083.5,83 1083.5,75 1083.6,82 1083.7,93 1083.8,72 1083.9,69 1084.0,80 1084.0,97 1084.1,88 1084.2,77 1084.3,103 1084.4,53 1084.5,71 1084.6,95 1084.7,93 1084.8,87 1084.9,88 1085.0,101 1085.1,88 1085.1,105 1085.2,93 1085.3,65 1085.4,87 1085.5,91 1085.6,67 1085.7,82 1085.7,73 1085.8,90 1085.9,75 1086.0,78 1086.1,65 1086.2,74 1086.3,86 1086.4,99 1086.5,90 1086.6,94 1086.7,68 1086.7,91 1086.8,114 1086.9,81 1087.0,76 1087.1,97 1087.2,77 1087.3,102 1087.4,83 1087.5,88 1087.5,94 1087.6,76 1087.7,92 1087.8,85 1087.9,69 1088.0,97 1088.1,85 1088.2,67 1088.3,71 1088.4,94 1088.4,93 1088.5,79 1088.6,94 1088.7,85 1088.8,103 1088.9,78 1089.0,105 1089.1,84 1089.2,78 1089.3,94 1089.3,109 1089.4,64 1089.5,109 1089.6,102 1089.7,82 1089.8,85 1089.9,74 1090.0,70 1090.0,81 1090.1,87 1090.2,93 1090.3,88 1090.4,75 1090.5,79 1090.6,78 1090.7,106 1090.8,95 1090.9,94 1091.0,93 1091.1,99 1091.1,64 1091.2,92 1091.3,87 1091.4,85 1091.5,86 1091.6,96 1091.6,76 1091.7,111 1091.8,92 1091.9,109 1092.0,78 1092.1,103 1092.2,100 1092.3,86 1092.4,99 1092.5,83 1092.6,91 1092.7,62 1092.8,101 1092.8,96 1092.9,81 1093.0,90 1093.1,74 1093.2,82 1093.2,70 1093.3,103 1093.4,83 1093.5,89 1093.6,81 1093.7,97 1093.8,76 1093.9,102 1094.0,75 1094.1,79 1094.2,108 1094.3,81 1094.4,110 1094.4,79 1094.5,106 1094.6,87 1094.7,109 1094.8,80 1094.9,92 1094.9,73 1095.0,87 1095.1,52 1095.2,84 1095.3,64 1095.4,82 1095.5,85 1095.6,79 1095.7,95 1095.8,94 1095.9,66 1096.0,88 1096.0,100 1096.1,80 1096.2,96 1096.3,85 1096.4,72 1096.5,71 1096.5,78 1096.6,79 1096.7,82 1096.8,86 1096.9,58 1097.0,87 1097.1,65 1097.2,87 1097.3,71 1097.4,120 1097.5,84 1097.6,93 1097.6,66 1097.7,67 1097.8,93 1097.9,86 1098.0,74 1098.1,82 1098.2,84 1098.2,66 1098.3,80 1098.4,120 1098.5,96 1098.6,86 1098.7,57 1098.8,85 1098.9,103 1099.0,68 1099.1,80 1099.2,85 1099.3,72 1099.3,90 1099.4,86 1099.5,73 1099.6,79 1099.7,73 1099.8,89 1099.9,64 1100.0,102 1100.0,88 1100.1,82 1100.2,84 1100.3,86 1100.4,98 1100.5,81 1100.6,68 1100.7,95 1100.8,61 1100.9,65 1100.9,95 1101.0,75 1101.1,98 1101.2,86 1101.3,98 1101.4,91 1101.5,107 1101.6,86 1101.7,97 1101.8,95 1101.8,61 1101.9,89 1102.0,86 1102.1,98 1102.2,90 1102.3,95 1102.4,103 1102.5,95 1102.5,91 1102.6,81 1102.7,89 1102.8,81 1102.9,69 1103.0,73 1103.1,90 1103.2,106 1103.3,87 1103.4,84 1103.5,72 1103.6,83 1103.6,77 1103.7,96 1103.8,97 1103.9,88 1104.0,82 1104.1,76 1104.1,123 1104.2,71 1104.3,66 1104.4,68 1104.5,74 1104.6,86 1104.7,78 1104.8,69 1104.9,97 1105.0,77 1105.1,79 1105.2,87 1105.3,63 1105.3,93 1105.4,93 1105.5,69 1105.6,105 1105.7,101 1105.8,81 1105.8,76 1105.9,99 1106.0,69 1106.1,108 1106.2,72 1106.3,96 1106.4,91 1106.5,63 1106.6,86 1106.7,93 1106.8,82 1106.9,62 1106.9,84 1107.0,95 1107.1,83 1107.2,92 1107.3,77 1107.4,91 1107.4,79 1107.5,71 1107.6,66 1107.7,106 1107.8,86 1107.9,99 1108.0,77 1108.1,82 1108.2,85 1108.3,92 1108.4,97 1108.5,106 1108.5,74 1108.6,88 1108.7,85 1108.8,81 1108.9,76 1109.0,77 1109.0,105 1109.1,90 1109.2,94 1109.3,93 1109.4,71 1109.5,84 1109.6,85 1109.7,84 1109.8,88 1109.9,88 1110.0,93 1110.1,92 1110.2,91 1110.2,88 1110.3,108 1110.4,85 1110.5,86 1110.6,80 1110.7,99 1110.7,94 1110.8,80 1110.9,94 1111.0,100 1111.1,103 1111.2,93 1111.3,91 1111.4,100 1111.5,68 1111.6,85 1111.7,96 1111.8,67 1111.8,75 1111.9,95 1112.0,98 1112.1,88 1112.2,77 1112.3,102 1112.4,71 1112.5,90 1112.5,79 1112.6,78 1112.7,70 1112.8,94 1112.9,62 1113.0,101 1113.1,82 1113.2,77 1113.3,85 1113.4,75 1113.4,105 1113.5,86 1113.6,73 1113.7,85 1113.8,99 1113.9,83 1114.0,83 1114.1,97 1114.2,69 1114.3,92 1114.3,93 1114.4,87 1114.5,82 1114.6,90 1114.7,78 1114.8,82 1114.9,71 1115.0,97 1115.0,84 1115.1,82 1115.2,82 1115.3,110 1115.4,98 1115.5,81 1115.6,78 1115.7,85 1115.8,83 1115.9,70 1116.0,89 1116.1,94 1116.1,87 1116.2,94 1116.3,66 1116.4,88 1116.5,95 1116.6,70 1116.7,103 1116.7,87 1116.8,78 1116.9,89 1117.0,91 1117.1,80 1117.2,100 1117.3,88 1117.4,76 1117.5,98 1117.6,68 1117.7,88 1117.8,86 1117.8,91 1117.9,82 1118.0,70 1118.1,70 1118.2,103 1118.3,69 1118.3,91 1118.4,81 1118.5,84 1118.6,82 1118.7,92 1118.8,78 1118.9,73 1119.0,92 1119.1,85 1119.2,75 1119.3,72 1119.4,81 1119.4,82 1119.5,79 1119.6,89 1119.7,89 1119.8,113 1119.9,107 1119.9,81 1120.0,76 1120.1,80 1120.2,84 1120.3,89 1120.4,78 1120.5,90 1120.6,85 1120.7,67 1120.8,102 1120.9,92 1121.0,88 1121.1,108 1121.1,99 1121.2,73 1121.3,79 1121.4,87 1121.5,62 1121.5,86 1121.6,93 1121.7,72 1121.8,79 1121.9,83 1122.0,87 1122.1,107 1122.2,110 1122.3,85 1122.4,74 1122.5,95 1122.6,84 1122.7,104 1122.7,103 1122.8,86 1122.9,77 1123.0,77 1123.1,71 1123.2,95 1123.2,98 1123.3,89 1123.4,86 1123.5,86 1123.6,75 1123.7,80 1123.8,91 1123.9,113 1124.0,76 1124.1,74 1124.2,79 1124.3,81 1124.3,80 1124.4,71 1124.5,92 1124.6,86 1124.7,98 1124.8,88 1124.9,95 1125.0,95 1125.0,73 1125.1,122 1125.2,70 1125.3,86 1125.4,94 1125.5,82 1125.6,89 1125.7,87 1125.8,69 1125.9,84 1125.9,81 1126.0,89 1126.1,88 1126.2,97 1126.3,87 1126.4,95 1126.5,72 1126.6,89 1126.7,77 1126.8,70 1126.8,66 1126.9,109 1127.0,69 1127.1,116 1127.2,97 1127.3,87 1127.4,94 1127.5,111 1127.6,104 1127.6,83 1127.7,106 1127.8,78 1127.9,72 1128.0,70 1128.1,83 1128.2,86 1128.3,91 1128.4,53 1128.5,71 1128.6,78 1128.6,109 1128.7,76 1128.8,93 1128.9,114 1129.0,73 1129.1,95 1129.2,81 1129.2,95 1129.3,91 1129.4,67 1129.5,82 1129.6,81 1129.7,105 1129.8,75 1129.9,94 1130.0,80 1130.1,98 1130.2,81 1130.3,79 1130.3,103 1130.4,71 1130.5,81 1130.6,85 1130.7,49 1130.8,76 1130.8,90 1130.9,75 1131.0,82 1131.1,70 1131.2,98 1131.3,62 1131.4,92 1131.5,90 1131.6,95 1131.7,89 1131.8,63 1131.9,84 1132.0,99 1132.0,88 1132.1,83 1132.2,83 1132.3,50 1132.4,87 1132.4,84 1132.5,100 1132.6,74 1132.7,91 1132.8,64 1132.9,71 1133.0,76 1133.1,92 1133.2,90 1133.3,90 1133.4,85 1133.5,90 1133.6,92 1133.6,85 1133.7,86 1133.8,90 1133.9,75 1134.0,60 1134.1,81 1134.1,71 1134.2,63 1134.3,103 1134.4,80 1134.5,75 1134.6,71 1134.7,76 1134.8,74 1134.9,104 1135.0,97 1135.1,79 1135.2,110 1135.2,92 1135.3,88 1135.4,81 1135.5,75 1135.6,83 1135.7,96 1135.7,79 1135.8,81 1135.9,84 1136.0,84 1136.1,103 1136.2,86 1136.3,77 1136.4,99 1136.5,81 1136.6,77 1136.7,58 1136.8,86 1136.8,89 1136.9,100 1137.0,99 1137.1,105 1137.2,107 1137.3,77 1137.4,86 1137.5,82 1137.5,107 1137.6,66 1137.7,72 1137.8,102 1137.9,84 1138.0,84 1138.1,98 1138.2,93 1138.3,74 1138.4,77 1138.5,75 1138.5,82 1138.6,84 1138.7,80 1138.8,87 1138.9,65 1139.0,83 1139.1,79 1139.2,87 1139.3,94 1139.3,95 1139.4,76 1139.5,61 1139.6,82 1139.7,87 1139.8,94 1139.9,103 1140.0,78 1140.1,79 1140.1,95 1140.2,84 1140.3,96 1140.4,68 1140.5,84 1140.6,80 1140.7,65 1140.8,112 1140.9,80 1141.0,82 1141.1,89 1141.1,93 1141.2,93 1141.3,64 1141.4,73 1141.5,79 1141.6,76 1141.7,84 1141.7,89 1141.8,87 1141.9,81 1142.0,91 1142.1,104 1142.2,87 1142.3,82 1142.4,87 1142.5,77 1142.6,82 1142.7,74 1142.8,84 1142.9,87 1142.9,90 1143.0,95 1143.1,69 1143.2,91 1143.3,81 1143.3,91 1143.4,82 1143.5,68 1143.6,65 1143.7,101 1143.8,102 1143.9,125 1144.0,78 1144.1,66 1144.2,82 1144.3,89 1144.4,75 1144.5,96 1144.5,77 1144.6,69 1144.7,91 1144.8,89 1144.9,96 1145.0,63 1145.0,70 1145.1,86 1145.2,86 1145.3,82 1145.4,93 1145.5,79 1145.6,79 1145.7,80 1145.8,85 1145.9,115 1146.0,87 1146.1,102 1146.1,105 1146.2,58 1146.3,91 1146.4,88 1146.5,66 1146.6,107 1146.6,80 1146.7,92 1146.8,70 1146.9,75 1147.0,84 1147.1,103 1147.2,76 1147.3,74 1147.4,77 1147.5,89 1147.6,78 1147.7,95 1147.7,82 1147.8,81 1147.9,88 1148.0,97 1148.1,88 1148.2,96 1148.2,87 1148.3,92 1148.4,92 1148.5,80 1148.6,89 1148.7,94 1148.8,82 1148.9,84 1149.0,96 1149.1,98 1149.2,70 1149.3,89 1149.4,71 1149.4,78 1149.5,86 1149.6,88 1149.7,66 1149.8,93 1149.9,90 1150.0,95 1150.0,84 1150.1,101 1150.2,79 1150.3,81 1150.4,83 1150.5,93 1150.6,70 1150.7,61 1150.8,87 1150.9,95 1151.0,78 1151.0,88 1151.1,84 1151.2,78 1151.3,102 1151.4,77 1151.5,98 1151.6,101 1151.7,90 1151.8,68 1151.8,97 1151.9,78 1152.0,82 1152.1,72 1152.2,83 1152.3,86 1152.4,108 1152.5,82 1152.6,76 1152.6,83 1152.7,83 1152.8,79 1152.9,75 1153.0,96 1153.1,87 1153.2,80 1153.3,83 1153.4,97 1153.5,109 1153.6,82 1153.6,81 1153.7,96 1153.8,80 1153.9,87 1154.0,94 1154.1,103 1154.2,108 1154.2,94 1154.3,91 1154.4,85 1154.5,85 1154.6,83 1154.7,63 1154.8,86 1154.9,69 1155.0,95 1155.1,94 1155.2,92 1155.3,107 1155.4,66 1155.4,65 1155.5,80 1155.6,66 1155.7,114 1155.8,70 1155.9,82 1155.9,92 1156.0,73 1156.1,85 1156.2,94 1156.3,109 1156.4,64 1156.5,117 1156.6,85 1156.7,66 1156.8,78 1156.9,93 1157.0,89 1157.0,93 1157.1,83 1157.2,104 1157.3,72 1157.4,101 1157.5,99 1157.5,58 1157.6,96 1157.7,102 1157.8,98 1157.9,77 1158.0,95 1158.1,88 1158.2,114 1158.3,93 1158.4,86 1158.5,85 1158.6,68 1158.6,80 1158.7,121 1158.8,106 1158.9,97 1159.0,78 1159.1,107 1159.1,113 1159.2,77 1159.3,98 1159.4,115 1159.5,98 1159.6,92 1159.7,101 1159.8,101 1159.9,74 1160.0,100 1160.1,83 1160.2,84 1160.3,91 1160.3,58 1160.4,103 1160.5,55 1160.6,98 1160.7,90 1160.7,78 1160.8,91 1160.9,91 1161.0,72 1161.1,68 1161.2,93 1161.3,71 1161.4,79 1161.5,83 1161.6,100 1161.7,102 1161.8,81 1161.9,120 1161.9,92 1162.0,81 1162.1,106 1162.2,66 1162.3,66 1162.4,99 1162.5,87 1162.5,92 1162.6,80 1162.7,66 1162.8,85 1162.9,85 1163.0,84 1163.1,94 1163.2,78 1163.3,92 1163.4,98 1163.5,78 1163.5,109 1163.6,92 1163.7,91 1163.8,88 1163.9,105 1164.0,98 1164.1,88 1164.2,79 1164.3,87 1164.3,86 1164.4,120 1164.5,78 1164.6,74 1164.7,86 1164.8,98 1164.9,70 1165.0,94 1165.1,70 1165.1,89 1165.2,95 1165.3,89 1165.4,94 1165.5,88 1165.6,80 1165.7,89 1165.8,92 1165.9,86 1166.0,81 1166.1,86 1166.1,82 1166.2,77 1166.3,86 1166.4,72 1166.5,81 1166.6,76 1166.7,88 1166.8,103 1166.8,91 1166.9,85 1167.0,81 1167.1,86 1167.2,68 1167.3,102 1167.4,107 1167.5,88 1167.6,94 1167.7,86 1167.8,78 1167.9,53 1167.9,87 1168.0,104 1168.1,95 1168.2,70 1168.3,87 1168.4,86 1168.4,73 1168.5,106 1168.6,84 1168.7,87 1168.8,83 1168.9,98 1169.0,91 1169.1,87 1169.2,77 1169.3,95 1169.4,79 1169.5,111 1169.5,81 1169.6,77 1169.7,97 1169.8,89 1169.9,86 1170.0,82 1170.0,72 1170.1,84 1170.2,89 1170.3,88 1170.4,83 1170.5,77 1170.6,83 1170.7,92 1170.8,90 1170.9,95 1171.0,96 1171.1,92 1171.2,93 1171.2,77 1171.3,100 1171.4,85 1171.5,100 1171.6,77 1171.6,82 1171.7,71 1171.8,79 1171.9,98 1172.0,85 1172.1,93 1172.2,92 1172.3,98 1172.4,90 1172.5,85 1172.6,83 1172.7,57 1172.8,88 1172.8,85 1172.9,87 1173.0,89 1173.1,89 1173.2,85 1173.2,81 1173.3,96 1173.4,86 1173.5,82 1173.6,89 1173.7,89 1173.8,87 1173.9,79 1174.0,84 1174.1,92 1174.2,86 1174.3,71 1174.4,97 1174.4,78 1174.5,89 1174.6,42 1174.7,79 1174.8,85 1174.9,87 1175.0,104 1175.0,82 1175.1,89 1175.2,86 1175.3,85 1175.4,97 1175.5,85 1175.6,80 1175.7,103 1175.8,89 1175.9,118 1176.0,106 1176.0,76 1176.1,72 1176.2,64 1176.3,101 1176.4,87 1176.5,90 1176.6,73 1176.7,82 1176.8,85 1176.8,75 1176.9,90 1177.0,73 1177.1,84 1177.2,83 1177.3,99 1177.4,104 1177.5,104 1177.6,80 1177.7,111 1177.7,70 1177.8,90 1177.9,101 1178.0,82 1178.1,100 1178.2,85 1178.3,89 1178.4,72 1178.5,75 1178.6,75 1178.6,87 1178.7,85 1178.8,81 1178.9,83 1179.0,101 1179.1,78 1179.2,104 1179.3,80 1179.3,87 1179.4,85 1179.5,99 1179.6,74 1179.7,88 1179.8,76 1179.9,94 1180.0,94 1180.1,85 1180.2,74 1180.3,101 1180.4,93 1180.4,91 1180.5,73 1180.6,78 1180.7,86 1180.8,76 1180.9,74 1180.9,93 1181.0,94 1181.1,78 1181.2,61 1181.3,113 1181.4,93 1181.5,77 1181.6,95 1181.7,76 1181.8,83 1181.9,100 1182.0,91 1182.1,82 1182.1,96 1182.2,89 1182.3,81 1182.4,90 1182.5,83 1182.5,97 1182.6,69 1182.7,89 1182.8,72 1182.9,61 1183.0,68 1183.1,86 1183.2,84 1183.3,86 1183.4,82 1183.5,95 1183.6,107 1183.7,82 1183.7,85 1183.8,68 1183.9,65 1184.0,77 1184.1,72 1184.2,84 1184.2,85 1184.3,107 1184.4,59 1184.5,94 1184.6,79 1184.7,82 1184.8,96 1184.9,76 1185.0,69 1185.1,86 1185.2,84 1185.3,78 1185.3,74 1185.4,76 1185.5,96 1185.6,97 1185.7,92 1185.8,88 1185.8,94 1185.9,96 1186.0,76 1186.1,82 1186.2,76 1186.3,88 1186.4,91 1186.5,96 1186.6,83 1186.7,107 1186.8,96 1186.9,79 1186.9,76 1187.0,87 1187.1,99 1187.2,79 1187.3,94 1187.4,87 1187.5,97 1187.5,96 1187.6,99 1187.7,87 1187.8,79 1187.9,71 1188.0,87 1188.1,100 1188.2,82 1188.3,83 1188.4,104 1188.5,89 1188.6,89 1188.6,97 1188.7,83 1188.8,74 1188.9,74 1189.0,96 1189.1,93 1189.2,78 1189.3,90 1189.3,116 1189.4,94 1189.5,96 1189.6,87 1189.7,66 1189.8,88 1189.9,89 1190.0,84 1190.1,89 1190.2,82 1190.2,56 1190.3,94 1190.4,88 1190.5,87 1190.6,110 1190.7,79 1190.8,87 1190.9,109 1191.0,89 1191.1,84 1191.1,93 1191.2,103 1191.3,77 1191.4,88 1191.5,84 1191.6,105 1191.7,102 1191.8,98 1191.8,88 1191.9,88 1192.0,70 1192.1,68 1192.2,84 1192.3,87 1192.4,64 1192.5,85 1192.6,74 1192.7,92 1192.8,87 1192.9,89 1192.9,96 1193.0,87 1193.1,81 1193.2,61 1193.3,108 1193.4,85 1193.4,78 1193.5,90 1193.6,76 1193.7,80 1193.8,80 1193.9,91 1194.0,88 1194.1,89 1194.2,97 1194.3,84 1194.4,98 1194.5,97 1194.6,102 1194.6,73 1194.7,77 1194.8,91 1194.9,82 1195.0,88 1195.1,82 1195.1,84 1195.2,111 1195.3,69 1195.4,74 1195.5,103 1195.6,76 1195.7,89 1195.8,85 1195.9,71 1196.0,74 1196.1,75 1196.2,63 1196.2,73 1196.3,93 1196.4,101 1196.5,90 1196.6,90 1196.7,94 1196.7,70 1196.8,82 1196.9,89 1197.0,76 1197.1,91 1197.2,72 1197.3,62 1197.4,87 1197.5,88 1197.6,73 1197.7,109 1197.8,101 1197.8,98 1197.9,105 1198.0,86 1198.1,83 1198.2,86 1198.3,74 1198.3,72 1198.4,88 1198.5,86 1198.6,69 1198.7,81 1198.8,71 1198.9,91 1199.0,86 1199.1,93 1199.2,86 1199.3,81 1199.4,91 1199.5,63 1199.5,103 1199.6,76 1199.7,99 1199.8,83 1199.9,95 1200.0,85 1200.0,100 1200.1,94 1200.2,86 1200.3,77 1200.4,67 1200.5,106 1200.6,81 1200.7,91 1200.8,86 1200.9,82 1201.0,77 1201.1,81 1201.1,86 1201.2,68 1201.3,83 1201.4,86 1201.5,73 1201.6,99 1201.7,97 1201.8,69 1201.8,77 1201.9,72 1202.0,95 1202.1,101 1202.2,87 1202.3,82 1202.4,93 1202.5,97 1202.6,80 1202.7,80 1202.7,104 1202.8,99 1202.9,90 1203.0,93 1203.1,84 1203.2,80 1203.3,65 1203.4,82 1203.5,75 1203.6,104 1203.6,103 1203.7,71 1203.8,80 1203.9,85 1204.0,88 1204.1,100 1204.2,99 1204.3,92 1204.3,91 1204.4,72 1204.5,98 1204.6,93 1204.7,106 1204.8,84 1204.9,86 1205.0,74 1205.1,64 1205.2,80 1205.3,96 1205.4,84 1205.4,99 1205.5,82 1205.6,100 1205.7,87 1205.8,90 1205.9,116 1206.0,79 1206.0,62 1206.1,90 1206.2,93 1206.3,75 1206.4,101 1206.5,86 1206.6,83 1206.7,93 1206.8,87 1206.9,96 1207.0,93 1207.1,79 1207.1,96 1207.2,80 1207.3,91 1207.4,96 1207.5,82 1207.6,109 1207.6,108 1207.7,83 1207.8,65 1207.9,92 1208.0,82 1208.1,102 1208.2,85 1208.3,84 1208.4,80 1208.5,95 1208.6,64 1208.7,97 1208.7,69 1208.8,99 1208.9,77 1209.0,88 1209.1,105 1209.2,76 1209.2,94 1209.3,99 1209.4,93 1209.5,97 1209.6,77 1209.7,84 1209.8,78 1209.9,76 1210.0,91 1210.1,78 1210.2,72 1210.3,65 1210.4,84 1210.4,89 1210.5,97 1210.6,91 1210.7,86 1210.8,91 1210.8,88 1210.9,93 1211.0,93 1211.1,82 1211.2,97 1211.3,81 1211.4,98 1211.5,84 1211.6,99 1211.7,72 1211.8,78 1211.9,71 1212.0,96 1212.0,101 1212.1,101 1212.2,89 1212.3,74 1212.4,78 1212.5,78 1212.5,78 1212.6,92 1212.7,116 1212.8,95 1212.9,88 1213.0,68 1213.1,84 1213.2,87 1213.3,68 1213.4,68 1213.5,82 1213.6,79 1213.6,72 1213.7,94 1213.8,81 1213.9,91 1214.0,97 1214.1,80 1214.2,73 1214.3,64 1214.3,88 1214.4,103 1214.5,93 1214.6,81 1214.7,93 1214.8,64 1214.9,72 1215.0,88 1215.1,66 1215.2,78 1215.2,67 1215.3,88 1215.4,77 1215.5,89 1215.6,86 1215.7,73 1215.8,64 1215.9,84 1216.0,82 1216.1,96 1216.1,100 1216.2,91 1216.3,99 1216.4,84 1216.5,76 1216.6,82 1216.7,89 1216.8,98 1216.9,105 1216.9,86 1217.0,68 1217.1,89 1217.2,87 1217.3,91 1217.4,99 1217.5,73 1217.6,78 1217.7,103 1217.8,100 1217.9,70 1217.9,98 1218.0,82 1218.1,95 1218.2,93 1218.3,99 1218.4,64 1218.5,56 1218.5,83 1218.6,78 1218.7,79 1218.8,86 1218.9,87 1219.0,90 1219.1,77 1219.2,100 1219.3,96 1219.4,78 1219.5,102 1219.6,67 1219.6,89 1219.7,86 1219.8,84 1219.9,93 1220.0,80 1220.1,78 1220.1,96 1220.2,78 1220.3,74 1220.4,80 1220.5,95 1220.6,75 1220.7,70 1220.8,92 1220.9,107 1221.0,94 1221.1,86 1221.2,71 1221.3,72 1221.3,78 1221.4,93 1221.5,98 1221.6,107 1221.7,74 1221.7,105 1221.8,71 1221.9,59 1222.0,85 1222.1,96 1222.2,93 1222.3,94 1222.4,81 1222.5,74 1222.6,95 1222.7,90 1222.8,93 1222.9,72 1222.9,74 1223.0,96 1223.1,89 1223.2,84 1223.3,84 1223.4,102 1223.4,83 1223.5,85 1223.6,92 1223.7,74 1223.8,97 1223.9,81 1224.0,89 1224.1,73 1224.2,95 1224.3,79 1224.4,79 1224.5,73 1224.5,67 1224.6,104 1224.7,87 1224.8,99 1224.9,74 1225.0,70 1225.0,70 1225.1,83 1225.2,87 1225.3,105 1225.4,94 1225.5,74 1225.6,103 1225.7,82 1225.8,83 1225.9,86 1226.0,77 1226.1,95 1226.1,70 1226.2,91 1226.3,74 1226.4,93 1226.5,83 1226.6,90 1226.7,66 1226.8,98 1226.8,76 1226.9,86 1227.0,89 1227.1,101 1227.2,89 1227.3,82 1227.4,72 1227.5,75 1227.6,69 1227.7,81 1227.8,94 1227.8,90 1227.9,68 1228.0,85 1228.1,69 1228.2,104 1228.3,92 1228.4,95 1228.5,83 1228.6,95 1228.6,113 1228.7,93 1228.8,81 1228.9,99 1229.0,86 1229.1,96 1229.2,90 1229.3,83 1229.4,80 1229.4,81 1229.5,95 1229.6,68 1229.7,82 1229.8,93 1229.9,70 1230.0,91 1230.1,63 1230.2,76 1230.3,87 1230.4,91 1230.4,89 1230.5,70 1230.6,84 1230.7,87 1230.8,81 1230.9,89 1231.0,101 1231.0,103 1231.1,69 1231.2,89 1231.3,67 1231.4,63 1231.5,82 1231.6,76 1231.7,90 1231.8,87 1231.9,85 1232.0,86 1232.1,68 1232.2,87 1232.2,78 1232.3,64 1232.4,104 1232.5,72 1232.6,93 1232.6,83 1232.7,90 1232.8,91 1232.9,102 1233.0,118 1233.1,60 1233.2,75 1233.3,88 1233.4,108 1233.5,77 1233.6,67 1233.7,80 1233.8,106 1233.8,92 1233.9,82 1234.0,97 1234.1,93 1234.2,116 1234.3,72 1234.3,78 1234.4,91 1234.5,107 1234.6,75 1234.7,103 1234.8,101 1234.9,109 1235.0,103 1235.1,97 1235.2,99 1235.3,72 1235.4,77 1235.4,85 1235.5,93 1235.6,86 1235.7,102 1235.8,92 1235.9,82 1235.9,97 1236.0,103 1236.1,73 1236.2,107 1236.3,102 1236.4,100 1236.5,95 1236.6,88 1236.7,125 1236.8,92 1236.9,69 1237.0,71 1237.0,75 1237.1,87 1237.2,83 1237.3,93 1237.4,106 1237.5,82 1237.5,86 1237.6,75 1237.7,82 1237.8,72 1237.9,91 1238.0,108 1238.1,80 1238.2,75 1238.3,96 1238.4,83 1238.5,77 1238.6,120 1238.7,56 1238.7,76 1238.8,88 1238.9,100 1239.0,105 1239.1,45 1239.2,90 1239.3,77 1239.3,78 1239.4,98 1239.5,87 1239.6,88 1239.7,80 1239.8,75 1239.9,88 1240.0,69 1240.1,92 1240.2,91 1240.3,85 1240.3,89 1240.4,76 1240.5,121 1240.6,108 1240.7,113 1240.8,69 1240.9,76 1241.0,95 1241.1,81 1241.1,68 1241.2,78 1241.3,59 1241.4,92 1241.5,72 1241.6,85 1241.7,82 1241.8,83 1241.9,76 1241.9,69 1242.0,85 1242.1,81 1242.2,87 1242.3,82 1242.4,96 1242.5,73 1242.6,77 1242.7,82 1242.8,86 1242.9,94 1242.9,96 1243.0,74 1243.1,80 1243.2,103 1243.3,98 1243.4,69 1243.5,65 1243.5,75 1243.6,59 1243.7,94 1243.8,80 1243.9,94 1244.0,58 1244.1,80 1244.2,80 1244.3,81 1244.4,94 1244.5,86 1244.6,114 1244.7,91 1244.7,69 1244.8,82 1244.9,98 1245.0,99 1245.1,76 1245.2,89 1245.2,88 1245.3,99 1245.4,82 1245.5,83 1245.6,75 1245.7,97 1245.8,85 1245.9,103 1246.0,82 1246.1,85 1246.2,90 1246.3,74 1246.3,101 1246.4,66 1246.5,82 1246.6,94 1246.7,92 1246.8,73 1246.8,85 1246.9,81 1247.0,89 1247.1,74 1247.2,77 1247.3,101 1247.4,61 1247.5,72 1247.6,75 1247.7,81 1247.8,86 1247.9,74 1247.9,53 1248.0,86 1248.1,98 1248.2,85 1248.3,100 1248.4,90 1248.4,89 1248.5,73 1248.6,71 1248.7,82 1248.8,72 1248.9,84 1249.0,84 1249.1,113 1249.2,96 1249.3,99 1249.4,79 1249.5,84 1249.6,98 1249.6,85 1249.7,87 1249.8,80 1249.9,92 1250.0,94 1250.0,73 1250.1,96 1250.2,88 1250.3,89 1250.4,97 1250.5,77 1250.6,102 1250.7,83 1250.8,112 1250.9,77 1251.0,85 1251.1,72 1251.2,61 1251.2,94 1251.3,85 1251.4,101 1251.5,91 1251.6,85 1251.7,85 1251.8,76 1251.8,94 1251.9,84 1252.0,98 1252.1,88 1252.2,119 1252.3,87 1252.4,85 1252.5,91 1252.6,91 1252.7,107 1252.8,94 1252.8,93 1252.9,83 1253.0,80 1253.1,91 1253.2,87 1253.3,81 1253.4,97 1253.5,73 1253.6,61 1253.6,83 1253.7,71 1253.8,70 1253.9,102 1254.0,82 1254.1,95 1254.2,91 1254.3,82 1254.4,79 1254.4,89 1254.5,96 1254.6,88 1254.7,98 1254.8,64 1254.9,105 1255.0,78 1255.1,84 1255.2,86 1255.3,98 1255.4,92 1255.4,89 1255.5,84 1255.6,91 1255.7,80 1255.8,77 1255.9,92 1256.0,77 1256.1,85 1256.1,93 1256.2,80 1256.3,72 1256.4,90 1256.5,108 1256.6,76 1256.7,74 1256.8,99 1256.9,88 1257.0,80 1257.1,115 1257.2,76 1257.2,68 1257.3,99 1257.4,75 1257.5,58 1257.6,113 1257.7,91 1257.7,78 1257.8,95 1257.9,108 1258.0,82 1258.1,84 1258.2,95 1258.3,83 1258.4,75 1258.5,74 1258.6,81 1258.7,101 1258.8,90 1258.8,114 1258.9,99 1259.0,87 1259.1,86 1259.2,110 1259.3,102 1259.3,100 1259.4,94 1259.5,94 1259.6,60 1259.7,74 1259.8,99 1259.9,95 1260.0,93 1260.1,94 1260.2,93 1260.3,111 1260.4,72 1260.5,78 1260.5,79 1260.6,85 1260.7,81 1260.8,85 1260.9,86 1260.9,103 1261.0,114 1261.1,73 1261.2,99 1261.3,89 1261.4,95 1261.5,66 1261.6,105 1261.7,74 1261.8,118 1261.9,75 1262.0,93 1262.1,114 1262.1,86 1262.2,87 1262.3,106 1262.4,82 1262.5,87 1262.6,96 1262.6,98 1262.7,85 1262.8,93 1262.9,99 1263.0,70 1263.1,93 1263.2,73 1263.3,76 1263.4,95 1263.5,109 1263.6,84 1263.7,78 1263.7,72 1263.8,82 1263.9,81 1264.0,94 1264.1,95 1264.2,47 1264.3,73 1264.3,81 1264.4,109 1264.5,90 1264.6,80 1264.7,66 1264.8,67 1264.9,91 1265.0,90 1265.1,92 1265.2,84 1265.3,76 1265.3,99 1265.4,89 1265.5,94 1265.6,96 1265.7,93 1265.8,64 1265.9,65 1266.0,68 1266.1,107 1266.1,81 1266.2,95 1266.3,79 1266.4,90 1266.5,91 1266.6,83 1266.7,81 1266.8,89 1266.9,87 1267.0,99 1267.0,87 1267.1,78 1267.2,85 1267.3,89 1267.4,104 1267.5,73 1267.6,101 1267.7,78 1267.8,91 1267.9,77 1267.9,124 1268.0,112 1268.1,98 1268.2,98 1268.3,83 1268.4,62 1268.5,78 1268.6,88 1268.6,70 1268.7,89 1268.8,76 1268.9,82 1269.0,110 1269.1,74 1269.2,65 1269.3,91 1269.4,77 1269.5,80 1269.6,90 1269.7,91 1269.7,93 1269.8,76 1269.9,75 1270.0,67 1270.1,93 1270.2,103 1270.2,73 1270.3,105 1270.4,91 1270.5,89 1270.6,65 1270.7,86 1270.8,101 1270.9,87 1271.0,70 1271.1,108 1271.2,102 1271.3,74 1271.4,85 1271.4,99 1271.5,100 1271.6,93 1271.7,68 1271.8,82 1271.8,72 1271.9,87 1272.0,93 1272.1,82 1272.2,97 1272.3,82 1272.4,90 1272.5,90 1272.6,90 1272.7,98 1272.8,69 1272.9,105 1273.0,84 1273.0,102 1273.1,75 1273.2,89 1273.3,82 1273.4,84 1273.5,82 1273.5,82 1273.6,92 1273.7,90 1273.8,89 1273.9,95 1274.0,93 1274.1,70 1274.2,104 1274.3,66 1274.4,93 1274.5,79 1274.6,86 1274.6,88 1274.7,79 1274.8,65 1274.9,88 1275.0,87 1275.1,72 1275.1,72 1275.2,86 1275.3,109 1275.4,80 1275.5,108 1275.6,94 1275.7,74 1275.8,93 1275.9,95 1276.0,112 1276.1,77 1276.2,81 1276.2,92 1276.3,82 1276.4,106 1276.5,98 1276.6,84 1276.7,75 1276.8,87 1276.8,73 1276.9,94 1277.0,83 1277.1,81 1277.2,93 1277.3,86 1277.4,108 1277.5,93 1277.6,86 1277.7,79 1277.8,70 1277.9,92 1277.9,81 1278.0,88 1278.1,96 1278.2,96 1278.3,87 1278.4,86 1278.5,95 1278.6,53 1278.6,90 1278.7,52 1278.8,114 1278.9,91 1279.0,84 1279.1,72 1279.2,87 1279.3,98 1279.4,67 1279.5,78 1279.5,89 1279.6,89 1279.7,89 1279.8,84 1279.9,107 1280.0,85 1280.1,94 1280.2,80 1280.3,82 1280.4,99 1280.4,97 1280.5,99 1280.6,95 1280.7,82 1280.8,71 1280.9,97 1281.0,96 1281.1,80 1281.1,87 1281.2,87 1281.3,88 1281.4,90 1281.5,65 1281.6,75 1281.7,90 1281.8,71 1281.9,64 1282.0,81 1282.1,83 1282.2,92 1282.2,71 1282.3,98 1282.4,106 1282.5,93 1282.6,82 1282.7,111 1282.7,89 1282.8,96 1282.9,100 1283.0,85 1283.1,72 1283.2,103 1283.3,84 1283.4,89 1283.5,79 1283.6,86 1283.7,94 1283.8,76 1283.9,81 1283.9,99 1284.0,84 1284.1,77 1284.2,93 1284.3,91 1284.4,109 1284.4,92 1284.5,85 1284.6,94 1284.7,88 1284.8,98 1284.9,98 1285.0,83 1285.1,105 1285.2,86 1285.3,72 1285.4,94 1285.5,93 1285.5,97 1285.6,102 1285.7,94 1285.8,93 1285.9,101 1286.0,86 1286.0,75 1286.1,77 1286.2,90 1286.3,87 1286.4,100 1286.5,90 1286.6,79 1286.7,78 1286.8,71 1286.9,105 1287.0,68 1287.1,82 1287.1,68 1287.2,87 1287.3,72 1287.4,87 1287.5,100 1287.6,88 1287.6,81 1287.7,78 1287.8,79 1287.9,75 1288.0,106 1288.1,73 1288.2,97 1288.3,86 1288.4,92 1288.5,101 1288.6,76 1288.7,99 1288.8,94 1288.8,70 1288.9,114 1289.0,107 1289.1,76 1289.2,92 1289.3,78 1289.3,79 1289.4,96 1289.5,94 1289.6,84 1289.7,100 1289.8,104 1289.9,107 1290.0,76 1290.1,64 1290.2,73 1290.3,95 1290.4,93 1290.4,99 1290.5,87 1290.6,75 1290.7,88 1290.8,87 1290.9,126 1291.0,83 1291.1,102 1291.1,86 1291.2,78 1291.3,68 1291.4,115 1291.5,106 1291.6,67 1291.7,81 1291.8,96 1291.9,90 1292.0,87 1292.0,74 1292.1,91 1292.2,87 1292.3,103 1292.4,69 1292.5,81 1292.6,93 1292.7,103 1292.8,87 1292.9,76 1292.9,91 1293.0,92 1293.1,99 1293.2,81 1293.3,96 1293.4,80 1293.5,83 1293.6,81 1293.6,98 1293.7,73 1293.8,89 1293.9,101 1294.0,87 1294.1,84 1294.2,86 1294.3,75 1294.4,72 1294.5,59 1294.6,88 1294.7,72 1294.7,87 1294.8,71 1294.9,89 1295.0,80 1295.1,79 1295.2,94 1295.3,93 1295.3,122 1295.4,80 1295.5,88 1295.6,89 1295.7,71 1295.8,82 1295.9,83 1296.0,109 1296.1,84 1296.2,90 1296.3,74 1296.4,92 1296.4,101 1296.5,97 1296.6,71 1296.7,88 1296.8,111 1296.9,79 1296.9,57 1297.0,81 1297.1,99 1297.2,89 1297.3,97 1297.4,51 1297.5,79 1297.6,115 1297.7,76 1297.8,81 1297.9,99 1298.0,94 1298.0,87 1298.1,65 1298.2,93 1298.3,94 1298.4,99 1298.5,88 1298.5,76 1298.6,84 1298.7,91 1298.8,69 1298.9,69 1299.0,106 1299.1,100 1299.2,98 1299.3,89 1299.4,84 1299.5,87 1299.6,85 1299.7,81 1299.7,102 1299.8,113 1299.9,83 1300.0,71 1300.1,79 1300.1,90 1300.2,102 1300.3,91 1300.4,77 1300.5,82 1300.6,78 1300.7,92 1300.8,79 1300.9,69 1301.0,90 1301.1,92 1301.2,71 1301.3,85 1301.3,100 1301.4,91 1301.5,70 1301.6,82 1301.7,63 1301.8,78 1301.8,94 1301.9,73 1302.0,87 1302.1,89 1302.2,81 1302.3,92 1302.4,100 1302.5,97 1302.6,80 1302.7,82 1302.8,85 1302.9,77 1302.9,97 1303.0,91 1303.1,66 1303.2,98 1303.3,70 1303.4,89 1303.5,80 1303.6,83 1303.6,74 1303.7,94 1303.8,98 1303.9,75 1304.0,91 1304.1,88 1304.2,88 1304.3,91 1304.4,108 1304.5,87 1304.5,92 1304.6,102 1304.7,93 1304.8,83 1304.9,65 1305.0,93 1305.1,70 1305.2,91 1305.3,80 1305.4,89 1305.4,91 1305.5,105 1305.6,74 1305.7,104 1305.8,93 1305.9,64 1306.0,83 1306.1,85 1306.2,84 1306.2,83 1306.3,90 1306.4,82 1306.5,88 1306.6,90 1306.7,80 1306.8,78 1306.9,82 1307.0,74 1307.1,63 1307.2,65 1307.2,72 1307.3,84 1307.4,76 1307.5,90 1307.6,75 1307.7,99 1307.8,84 1307.8,102 1307.9,61 1308.0,89 1308.1,111 1308.2,70 1308.3,74 1308.4,69 1308.5,99 1308.6,81 1308.7,70 1308.8,88 1308.9,81 1308.9,88 1309.0,95 1309.1,85 1309.2,79 1309.3,85 1309.4,75 1309.4,109 1309.5,72 1309.6,100 1309.7,88 1309.8,90 1309.9,80 1310.0,88 1310.1,91 1310.2,77 1310.3,61 1310.4,93 1310.5,93 1310.6,92 1310.6,100 1310.7,100 1310.8,92 1310.9,95 1311.0,87 1311.0,95 1311.1,53 1311.2,67 1311.3,85 1311.4,106 1311.5,92 1311.6,96 1311.7,96 1311.8,112 1311.9,92 1312.0,93 1312.1,94 1312.2,101 1312.2,81 1312.3,96 1312.4,113 1312.5,98 1312.6,99 1312.7,88 1312.7,79 1312.8,75 1312.9,91 1313.0,82 1313.1,91 1313.2,107 1313.3,75 1313.4,87 1313.5,81 1313.6,88 1313.7,96 1313.8,92 1313.8,82 1313.9,101 1314.0,67 1314.1,59 1314.2,113 1314.3,75 1314.3,84 1314.4,88 1314.5,75 1314.6,85 1314.7,68 1314.8,82 1314.9,103 1315.0,88 1315.1,86 1315.2,93 1315.3,100 1315.4,62 1315.4,87 1315.5,86 1315.6,105 1315.7,79 1315.8,87 1315.9,73 1316.0,65 1316.1,93 1316.1,73 1316.2,82 1316.3,77 1316.4,89 1316.5,86 1316.6,86 1316.7,111 1316.8,77 1316.9,76 1317.0,97 1317.1,92 1317.1,82 1317.2,77 1317.3,85 1317.4,91 1317.5,81 1317.6,84 1317.7,98 1317.8,89 1317.9,90 1317.9,95 1318.0,90 1318.1,85 1318.2,57 1318.3,88 1318.4,73 1318.5,76 1318.6,70 1318.7,65 1318.7,79 1318.8,97 1318.9,90 1319.0,68 1319.1,60 1319.2,70 1319.3,57 1319.4,77 1319.5,96 1319.6,84 1319.7,82 1319.7,96 1319.8,72 1319.9,92 1320.0,82 1320.1,78 1320.2,77 1320.3,79 1320.3,92 1320.4,87 1320.5,74 1320.6,91 1320.7,100 1320.8,116 1320.9,85 1321.0,96 1321.1,86 1321.2,98 1321.3,91 1321.4,90 1321.5,74 1321.5,84 1321.6,76 1321.7,97 1321.8,80 1321.9,86 1321.9,80 1322.0,108 1322.1,85 1322.2,89 1322.3,83 1322.4,94 1322.5,87 1322.6,112 1322.7,86 1322.8,70 1322.9,84 1323.0,85 1323.1,82 1323.1,69 1323.2,94 1323.3,94 1323.4,85 1323.5,76 1323.6,95 1323.6,98 1323.7,75 1323.8,73 1323.9,95 1324.0,77 1324.1,88 1324.2,92 1324.3,87 1324.4,96 1324.5,106 1324.6,103 1324.7,95 1324.7,82 1324.8,81 1324.9,76 1325.0,96 1325.1,98 1325.2,74 1325.2,88 1325.3,63 1325.4,78 1325.5,92 1325.6,94 1325.7,111 1325.8,70 1325.9,74 1326.0,43 1326.1,61 1326.2,82 1326.3,99 1326.3,107 1326.4,91 1326.5,86 1326.6,104 1326.7,78 1326.8,74 1326.8,103 1326.9,74 1327.0,97 1327.1,100 1327.2,110 1327.3,99 1327.4,107 1327.5,73 1327.6,78 1327.7,101 1327.8,97 1327.9,87 1328.0,85 1328.0,99 1328.1,70 1328.2,78 1328.3,62 1328.4,120 1328.5,105 1328.6,77 1328.6,100 1328.7,80 1328.8,92 1328.9,70 1329.0,73 1329.1,75 1329.2,109 1329.3,82 1329.4,65 1329.5,64 1329.6,71 1329.6,72 1329.7,95 1329.8,68 1329.9,63 1330.0,81 1330.1,80 1330.2,88 1330.3,84 1330.4,90 1330.4,105 1330.5,94 1330.6,81 1330.7,83 1330.8,68 1330.9,74 1331.0,70 1331.1,87 1331.2,73 1331.2,95 1331.3,94 1331.4,75 1331.5,83 1331.6,96 1331.7,74 1331.8,68 1331.9,77 1332.0,70 1332.1,75 1332.2,75 1332.2,90 1332.3,126 1332.4,93 1332.5,100 1332.6,85 1332.7,95 1332.8,86 1332.8,97 1332.9,89 1333.0,68 1333.1,99 1333.2,107 1333.3,69 1333.4,77 1333.5,87 1333.6,91 1333.7,82 1333.8,91 1333.9,74 1334.0,90 1334.0,96 1334.1,79 1334.2,101 1334.3,93 1334.4,84 1334.5,95 1334.5,74 1334.6,87 1334.7,84 1334.8,110 1334.9,79 1335.0,85 1335.1,110 1335.2,83 1335.3,82 1335.4,95 1335.5,100 1335.6,103 1335.6,86 1335.7,86 1335.8,86 1335.9,84 1336.0,106 1336.1,82 1336.1,75 1336.2,97 1336.3,61 1336.4,93 1336.5,84 1336.6,91 1336.7,91 1336.8,121 1336.9,76 1337.0,113 1337.1,71 1337.2,100 1337.2,93 1337.3,55 1337.4,98 1337.5,89 1337.6,81 1337.7,67 1337.7,118 1337.8,87 1337.9,79 1338.0,75 1338.1,96 1338.2,85 1338.3,63 1338.4,82 1338.5,60 1338.6,101 1338.7,95 1338.8,86 1338.9,99 1338.9,78 1339.0,100 1339.1,82 1339.2,105 1339.3,97 1339.3,98 1339.4,105 1339.5,79 1339.6,98 1339.7,81 1339.8,70 1339.9,78 1340.0,105 1340.1,71 1340.2,72 1340.3,93 1340.4,91 1340.5,69 1340.5,82 1340.6,81 1340.7,73 1340.8,79 1340.9,52 1341.0,69 1341.1,84 1341.1,71 1341.2,101 1341.3,75 1341.4,93 1341.5,109 1341.6,74 1341.7,81 1341.8,82 1341.9,90 1342.0,86 1342.1,94 1342.1,69 1342.2,69 1342.3,86 1342.4,86 1342.5,82 1342.6,75 1342.7,83 1342.8,91 1342.9,89 1342.9,90 1343.0,71 1343.1,81 1343.2,74 1343.3,97 1343.4,75 1343.5,85 1343.6,89 1343.7,94 1343.7,93 1343.8,91 1343.9,84 1344.0,87 1344.1,61 1344.2,80 1344.3,83 1344.4,87 1344.5,95 1344.6,95 1344.7,81 1344.7,66 1344.8,104 1344.9,71 1345.0,72 1345.1,72 1345.2,77 1345.3,65 1345.4,95 1345.4,91 1345.5,78 1345.6,85 1345.7,103 1345.8,75 1345.9,73 1346.0,88 1346.1,81 1346.2,74 1346.3,111 1346.4,92 1346.5,96 1346.5,101 1346.6,83 1346.7,63 1346.8,101 1346.9,66 1347.0,74 1347.0,73 1347.1,69 1347.2,91 1347.3,72 1347.4,104 1347.5,95 1347.6,81 1347.7,76 1347.8,102 1347.9,109 1348.0,80 1348.1,82 1348.1,77 1348.2,86 1348.3,76 1348.4,83 1348.5,59 1348.6,82 1348.6,67 1348.7,87 1348.8,121 1348.9,100 1349.0,119 1349.1,88 1349.2,71 1349.3,106 1349.4,77 1349.5,89 1349.6,74 1349.7,81 1349.8,98 1349.8,78 1349.9,86 1350.0,74 1350.1,65 1350.2,87 1350.2,78 1350.3,83 1350.4,94 1350.5,84 1350.6,91 1350.7,78 1350.8,98 1350.9,97 1351.0,75 1351.1,79 1351.2,78 1351.3,78 1351.4,72 1351.4,79 1351.5,74 1351.6,95 1351.7,79 1351.8,94 1351.9,77 1351.9,85 1352.0,63 1352.1,77 1352.2,80 1352.3,84 1352.4,102 1352.5,85 1352.6,85 1352.7,64 1352.8,95 1352.9,87 1353.0,94 1353.0,83 1353.1,106 1353.2,82 1353.3,85 1353.4,83 1353.5,53 1353.6,86 1353.6,72 1353.7,58 1353.8,64 1353.9,81 1354.0,101 1354.1,80 1354.2,105 1354.3,96 1354.4,92 1354.5,99 1354.6,85 1354.6,90 1354.7,94 1354.8,81 1354.9,94 1355.0,69 1355.1,77 1355.2,91 1355.3,80 1355.4,94 1355.4,105 1355.5,80 1355.6,62 1355.7,113 1355.8,56 1355.9,109 1356.0,113 1356.1,111 1356.2,100 1356.3,93 1356.3,109 1356.4,88 1356.5,75 1356.6,95 1356.7,84 1356.8,78 1356.9,64 1357.0,87 1357.1,77 1357.2,79 1357.2,81 1357.3,77 1357.4,102 1357.5,90 1357.6,81 1357.7,82 1357.8,81 1357.9,65 1357.9,72 1358.0,101 1358.1,66 1358.2,94 1358.3,96 1358.4,72 1358.5,90 1358.6,107 1358.7,78 1358.8,80 1358.9,79 1359.0,103 1359.0,74 1359.1,101 1359.2,98 1359.3,110 1359.4,95 1359.5,72 1359.5,83 1359.6,93 1359.7,69 1359.8,83 1359.9,76 1360.0,81 1360.1,87 1360.2,84 1360.3,80 1360.4,72 1360.5,78 1360.6,75 1360.7,99 1360.7,109 1360.8,80 1360.9,98 1361.0,84 1361.1,99 1361.1,85 1361.2,87 1361.3,88 1361.4,82 1361.5,92 1361.6,86 1361.7,77 1361.8,67 1361.9,81 1362.0,76 1362.1,78 1362.2,65 1362.3,60 1362.3,94 1362.4,77 1362.5,82 1362.6,94 1362.7,107 1362.8,69 1362.8,82 1362.9,77 1363.0,81 1363.1,82 1363.2,81 1363.3,91 1363.4,111 1363.5,82 1363.6,86 1363.7,93 1363.8,93 1363.9,69 1363.9,95 1364.0,99 1364.1,77 1364.2,67 1364.3,102 1364.4,81 1364.4,79 1364.5,68 1364.6,86 1364.7,89 1364.8,93 1364.9,72 1365.0,93 1365.1,96 1365.2,89 1365.3,86 1365.4,81 1365.5,94 1365.5,64 1365.6,62 1365.7,100 1365.8,84 1365.9,98 1366.0,89 1366.1,101 1366.1,84 1366.2,103 1366.3,111 1366.4,109 1366.5,71 1366.6,88 1366.7,85 1366.8,68 1366.9,98 1367.0,81 1367.1,94 1367.2,83 1367.2,109 1367.3,91 1367.4,87 1367.5,84 1367.6,104 1367.7,89 1367.8,75 1367.9,87 1367.9,83 1368.0,90 1368.1,85 1368.2,97 1368.3,78 1368.4,82 1368.5,71 1368.6,58 1368.7,75 1368.8,79 1368.8,83 1368.9,75 1369.0,69 1369.1,89 1369.2,102 1369.3,103 1369.4,73 1369.5,80 1369.6,79 1369.7,107 1369.7,100 1369.8,93 1369.9,94 1370.0,66 1370.1,102 1370.2,94 1370.3,95 1370.4,85 1370.4,77 1370.5,96 1370.6,107 1370.7,91 1370.8,81 1370.9,99 1371.0,74 1371.1,99 1371.2,94 1371.3,92 1371.4,62 1371.5,76 1371.5,100 1371.6,95 1371.7,66 1371.8,70 1371.9,84 1372.0,95 1372.0,108 1372.1,92 1372.2,79 1372.3,79 1372.4,81 1372.5,95 1372.6,80 1372.7,88 1372.8,75 1372.9,83 1373.0,76 1373.1,82 1373.2,92 1373.2,71 1373.3,91 1373.4,90 1373.5,82 1373.6,92 1373.7,99 1373.7,97 1373.8,100 1373.9,86 1374.0,82 1374.1,87 1374.2,105 1374.3,84 1374.4,74 1374.5,100 1374.6,97 1374.7,74 1374.8,88 1374.8,72 1374.9,90 1375.0,104 1375.1,82 1375.2,96 1375.3,92 1375.3,61 1375.4,93 1375.5,66 1375.6,100 1375.7,83 1375.8,81 1375.9,75 1376.0,86 1376.1,94 1376.2,85 1376.3,104 1376.4,117 1376.4,105 1376.5,66 1376.6,75 1376.7,63 1376.8,80 1376.9,82 1376.9,96 1377.0,98 1377.1,99 1377.2,95 1377.3,109 1377.4,81 1377.5,95 1377.6,70 1377.7,65 1377.8,87 1377.9,73 1378.0,72 1378.1,83 1378.1,88 1378.2,70 1378.3,78 1378.4,88 1378.5,92 1378.6,86 1378.6,93 1378.7,88 1378.8,84 1378.9,91 1379.0,87 1379.1,98 1379.2,96 1379.3,82 1379.4,83 1379.5,90 1379.6,59 1379.7,88 1379.7,77 1379.8,82 1379.9,92 1380.0,77 1380.1,72 1380.2,86 1380.3,80 1380.4,51 1380.4,79 1380.5,86 1380.6,96 1380.7,92 1380.8,89 1380.9,89 1381.0,85 1381.1,66 1381.2,83 1381.3,90 1381.3,77 1381.4,78 1381.5,99 1381.6,93 1381.7,99 1381.8,82 1381.9,75 1382.0,88 1382.1,71 1382.2,93 1382.2,83 1382.3,65 1382.4,99 1382.5,79 1382.6,85 1382.7,71 1382.8,102 1382.9,100 1382.9,65 1383.0,70 1383.1,73 1383.2,87 1383.3,73 1383.4,86 1383.5,99 1383.6,87 1383.7,89 1383.8,98 1383.9,93 1384.0,94 1384.0,72 1384.1,72 1384.2,99 1384.3,79 1384.4,76 1384.5,81 1384.6,97 1384.6,121 1384.7,84 1384.8,96 1384.9,75 1385.0,104 1385.1,79 1385.2,91 1385.3,102 1385.4,91 1385.5,88 1385.6,76 1385.7,76 1385.7,71 1385.8,91 1385.9,84 1386.0,90 1386.1,106 1386.2,111 1386.2,76 1386.3,84 1386.4,62 1386.5,92 1386.6,73 1386.7,84 1386.8,80 1386.9,85 1387.0,72 1387.1,80 1387.2,92 1387.3,87 1387.3,89 1387.4,85 1387.5,83 1387.6,86 1387.7,107 1387.8,81 1387.8,81 1387.9,124 1388.0,99 1388.1,86 1388.2,113 1388.3,80 1388.4,74 1388.5,80 1388.6,74 1388.7,87 1388.8,75 1388.9,77 1389.0,87 1389.0,85 1389.1,106 1389.2,102 1389.3,74 1389.4,105 1389.4,110 1389.5,72 1389.6,82 1389.7,63 1389.8,70 1389.9,61 1390.0,76 1390.1,93 1390.2,90 1390.3,72 1390.4,103 1390.5,79 1390.6,91 1390.6,70 1390.7,93 1390.8,95 1390.9,74 1391.0,125 1391.1,73 1391.1,78 1391.2,92 1391.3,78 1391.4,85 1391.5,77 1391.6,98 1391.7,94 1391.8,63 1391.9,82 1392.0,88 1392.1,97 1392.2,92 1392.2,83 1392.3,101 1392.4,87 1392.5,89 1392.6,110 1392.7,86 1392.8,71 1392.9,91 1392.9,93 1393.0,107 1393.1,86 1393.2,91 1393.3,94 1393.4,69 1393.5,85 1393.6,95 1393.7,94 1393.8,67 1393.8,76 1393.9,108 1394.0,79 1394.1,92 1394.2,93 1394.3,72 1394.4,77 1394.5,96 1394.6,86 1394.7,78 1394.7,95 1394.8,70 1394.9,68 1395.0,94 1395.1,103 1395.2,92 1395.3,75 1395.4,83 1395.5,87 1395.5,84 1395.6,104 1395.7,87 1395.8,87 1395.9,94 1396.0,76 1396.1,94 1396.2,94 1396.3,77 1396.4,78 1396.5,85 1396.5,82 1396.6,98 1396.7,76 1396.8,61 1396.9,81 1397.0,89 1397.1,72 1397.1,78 1397.2,95 1397.3,87 1397.4,93 1397.5,73 1397.6,102 1397.7,71 1397.8,94 1397.9,82 1398.0,91 1398.1,81 1398.2,72 1398.2,78 1398.3,84 1398.4,63 1398.5,92 1398.6,91 1398.7,95 1398.7,87 1398.8,78 1398.9,98 1399.0,69 1399.1,70 1399.2,76 1399.3,78 1399.4,56 1399.5,99 1399.6,93 1399.7,60 1399.8,101 1399.9,82 1399.9,88 1400.0,97 1400.1,83 1400.2,80 1400.3,79 1400.3,85 1400.4,86 1400.5,78 1400.6,94 1400.7,102 1400.8,76 1400.9,111 1401.0,79 1401.1,70 1401.2,101 1401.3,113 1401.4,96 1401.5,82 1401.5,98 1401.6,73 1401.7,78 1401.8,98 1401.9,92 1402.0,83 1402.0,70 1402.1,76 1402.2,68 1402.3,104 1402.4,47 1402.5,97 1402.6,83 1402.7,67 1402.8,80 1402.9,71 1403.0,101 1403.1,100 1403.1,91 1403.2,93 1403.3,85 1403.4,90 1403.5,100 1403.6,83 1403.6,82 1403.7,97 1403.8,86 1403.9,78 1404.0,68 1404.1,71 1404.2,75 1404.3,80 1404.4,102 1404.5,97 1404.6,97 1404.7,93 1404.7,88 1404.8,98 1404.9,91 1405.0,72 1405.1,91 1405.2,110 1405.3,90 1405.4,88 1405.4,75 1405.5,65 1405.6,94 1405.7,77 1405.8,83 1405.9,87 1406.0,96 1406.1,83 1406.2,110 1406.3,74 1406.4,52 1406.4,68 1406.5,112 1406.6,84 1406.7,95 1406.8,94 1406.9,89 1407.0,72 1407.1,77 1407.2,97 1407.2,61 1407.3,104 1407.4,88 1407.5,98 1407.6,87 1407.7,111 1407.8,98 1407.9,88 1408.0,94 1408.0,97 1408.1,88 1408.2,93 1408.3,98 1408.4,89 1408.5,86 1408.6,82 1408.7,108 1408.8,91 1408.9,72 1409.0,104 1409.0,73 1409.1,71 1409.2,83 1409.3,92 1409.4,106 1409.5,93 1409.6,97 1409.6,86 1409.7,67 1409.8,63 1409.9,83 1410.0,85 1410.1,88 1410.2,83 1410.3,89 1410.4,65 1410.5,95 1410.6,85 1410.7,94 1410.8,75 1410.8,84 1410.9,86 1411.0,79 1411.1,92 1411.2,66 1411.2,65 1411.3,74 1411.4,76 1411.5,91 1411.6,64 1411.7,103 1411.8,95 1411.9,60 1412.0,91 1412.1,96 1412.2,106 1412.3,73 1412.4,71 1412.4,83 1412.5,106 1412.6,75 1412.7,68 1412.8,80 1412.9,81 1412.9,67 1413.0,65 1413.1,100 1413.2,80 1413.3,100 1413.4,95 1413.5,72 1413.6,99 1413.7,88 1413.8,71 1413.9,80 1414.0,105 1414.0,87 1414.1,88 1414.2,96 1414.3,61 1414.4,73 1414.5,83 1414.5,101 1414.6,85 1414.7,80 1414.8,83 1414.9,73 1415.0,75 1415.1,79 1415.2,87 1415.3,85 1415.4,62 1415.5,105 1415.6,72 1415.6,80 1415.7,94 1415.8,85 1415.9,78 1416.0,102 1416.1,83 1416.1,83 1416.2,68 1416.3,83 1416.4,95 1416.5,104 1416.6,106 1416.7,73 1416.8,87 1416.9,86 1417.0,88 1417.1,94 1417.2,64 1417.3,77 1417.3,67 1417.4,99 1417.5,78 1417.6,77 1417.7,99 1417.8,96 1417.9,95 1417.9,94 1418.0,77 1418.1,93 1418.2,84 1418.3,86 1418.4,95 1418.5,74 1418.6,84 1418.7,112 1418.8,87 1418.9,67 1418.9,112 1419.0,74 1419.1,82 1419.2,100 1419.3,85 1419.4,99 1419.5,103 1419.6,80 1419.7,82 1419.7,85 1419.8,104 1419.9,72 1420.0,94 1420.1,80 1420.2,77 1420.3,96 1420.4,81 1420.5,84 1420.5,80 1420.6,90 1420.7,73 1420.8,77 1420.9,67 1421.0,72 1421.1,101 1421.2,92 1421.3,80 1421.4,73 1421.5,93 1421.5,86 1421.6,73 1421.7,97 1421.8,79 1421.9,95 1422.0,80 1422.1,96 1422.1,88 1422.2,74 1422.3,97 1422.4,84 1422.5,77 1422.6,86 1422.7,88 1422.8,85 1422.9,96 1423.0,76 1423.1,76 1423.2,64 1423.3,82 1423.3,79 1423.4,96 1423.5,82 1423.6,89 1423.7,74 1423.8,109 1423.8,87 1423.9,89 1424.0,77 1424.1,94 1424.2,90 1424.3,70 1424.4,93 1424.5,90 1424.6,71 1424.7,110 1424.8,80 1424.9,81 1424.9,82 1425.0,106 1425.1,95 1425.2,77 1425.3,90 1425.4,68 1425.4,85 1425.5,78 1425.6,93 1425.7,92 1425.8,80 1425.9,75 1426.0,93 1426.1,70 1426.2,88 1426.3,66 1426.4,100 1426.5,89 1426.5,77 1426.6,86 1426.7,92 1426.8,77 1426.9,76 1427.0,90 1427.0,94 1427.1,70 1427.2,92 1427.3,91 1427.4,76 1427.5,97 1427.6,96 1427.7,88 1427.8,84 1427.9,74 1428.0,87 1428.1,93 1428.2,100 1428.2,89 1428.3,91 1428.4,72 1428.5,104 1428.6,106 1428.6,80 1428.7,66 1428.8,104 1428.9,83 1429.0,93 1429.1,66 1429.2,81 1429.3,67 1429.4,85 1429.5,72 1429.6,81 1429.7,93 1429.8,74 1429.8,89 1429.9,112 1430.0,86 1430.1,100 1430.2,79 1430.3,67 1430.4,82 1430.4,95 1430.5,92 1430.6,62 1430.7,90 1430.8,82 1430.9,107 1431.0,91 1431.1,84 1431.2,87 1431.3,89 1431.4,80 1431.4,79 1431.5,100 1431.6,101 1431.7,79 1431.8,76 1431.9,102 1432.0,77 1432.1,102 1432.2,87 1432.2,85 1432.3,88 1432.4,99 1432.5,76 1432.6,97 1432.7,93 1432.8,99 1432.9,80 1433.0,79 1433.0,69 1433.1,88 1433.2,95 1433.3,68 1433.4,93 1433.5,77 1433.6,66 1433.7,76 1433.8,107 1433.9,98 1434.0,95 1434.0,76 1434.1,83 1434.2,84 1434.3,86 1434.4,95 1434.5,69 1434.6,84 1434.7,68 1434.7,97 1434.8,106 1434.9,69 1435.0,100 1435.1,84 1435.2,90 1435.3,88 1435.4,90 1435.5,99 1435.6,100 1435.7,83 1435.8,94 1435.8,69 1435.9,92 1436.0,76 1436.1,93 1436.2,97 1436.3,89 1436.3,88 1436.4,55 1436.5,102 1436.6,94 1436.7,77 1436.8,88 1436.9,84 1437.0,77 1437.1,88 1437.2,95 1437.3,102 1437.4,87 1437.4,79 1437.5,84 1437.6,83 1437.7,96 1437.8,109 1437.9,79 1437.9,92 1438.0,78 1438.1,94 1438.2,105 1438.3,97 1438.4,90 1438.5,94 1438.6,90 1438.7,80 1438.8,86 1438.9,81 1439.0,88 1439.1,94 1439.1,98 1439.2,113 1439.3,79 1439.4,98 1439.5,97 1439.5,82 1439.6,85 1439.7,89 1439.8,87 1439.9,106 1440.0,88 1440.1,89 1440.2,80 1440.3,95 1440.4,93 1440.5,84 1440.6,54 1440.7,94 1440.7,62 1440.8,97 1440.9,86 1441.0,98 1441.1,70 1441.2,74 1441.2,70 1441.3,94 1441.4,83 1441.5,92 1441.6,72 1441.7,112 1441.8,60 1441.9,89 1442.0,111 1442.1,83 1442.2,96 1442.3,86 1442.3,85 1442.4,73 1442.5,108 1442.6,81 1442.7,72 1442.8,102 1442.9,77 1442.9,109 1443.0,84 1443.1,92 1443.2,67 1443.3,89 1443.4,78 1443.5,82 1443.6,84 1443.7,101 1443.8,95 1443.9,85 1443.9,87 1444.0,87 1444.1,77 1444.2,86 1444.3,77 1444.4,85 1444.5,82 1444.6,92 1444.7,104 1444.7,78 1444.8,96 1444.9,73 1445.0,85 1445.1,84 1445.2,94 1445.3,92 1445.4,94 1445.5,82 1445.6,94 1445.6,86 1445.7,93 1445.8,102 1445.9,85 1446.0,85 1446.1,85 1446.2,122 1446.3,74 1446.4,86 1446.5,98 1446.5,77 1446.6,85 1446.7,114 1446.8,72 1446.9,100 1447.0,73 1447.1,88 1447.2,96 1447.2,116 1447.3,92 1447.4,98 1447.5,86 1447.6,99 1447.7,77 1447.8,93 1447.9,92 1448.0,62 1448.1,77 1448.2,94 1448.3,82 1448.3,88 1448.4,95 1448.5,98 1448.6,78 1448.7,93 1448.8,96 1448.8,93 1448.9,94 1449.0,77 1449.1,83 1449.2,104 1449.3,70 1449.4,73 1449.5,90 1449.6,98 1449.7,86 1449.8,93 1449.9,80 1450.0,87 1450.0,71 1450.1,83 1450.2,92 1450.3,91 1450.4,100 1450.4,63 1450.5,88 1450.6,78 1450.7,96 1450.8,92 1450.9,87 1451.0,67 1451.1,70 1451.2,61 1451.3,68 1451.4,68 1451.5,89 1451.6,95 1451.6,71 1451.7,95 1451.8,80 1451.9,85 1452.0,97 1452.1,90 1452.1,76 1452.2,89 1452.3,74 1452.4,92 1452.5,82 1452.6,98 1452.7,70 1452.8,111 1452.9,83 1453.0,80 1453.1,117 1453.2,106 1453.2,104 1453.3,87 1453.4,89 1453.5,90 1453.6,79 1453.7,82 1453.7,86 1453.8,73 1453.9,112 1454.0,106 1454.1,99 1454.2,99 1454.3,83 1454.4,92 1454.5,110 1454.6,95 1454.7,106 1454.8,95 1454.8,89 1454.9,96 1455.0,72 1455.1,59 1455.2,80 1455.3,105 1455.4,69 1455.4,82 1455.5,73 1455.6,84 1455.7,71 1455.8,80 1455.9,94 1456.0,92 1456.1,89 1456.2,95 1456.3,71 1456.4,83 1456.5,89 1456.5,77 1456.6,85 1456.7,74 1456.8,67 1456.9,84 1457.0,93 1457.1,100 1457.2,65 1457.2,88 1457.3,100 1457.4,70 1457.5,83 1457.6,91 1457.7,104 1457.8,61 1457.9,85 1458.0,113 1458.1,93 1458.1,87 1458.2,85 1458.3,99 1458.4,73 1458.5,79 1458.6,86 1458.7,94 1458.8,108 1458.9,92 1459.0,89 1459.0,77 1459.1,92 1459.2,91 1459.3,87 1459.4,67 1459.5,69 1459.6,106 1459.7,92 1459.7,56 1459.8,90 1459.9,65 1460.0,80 1460.1,71 1460.2,91 1460.3,85 1460.4,80 1460.5,87 1460.6,87 1460.7,69 1460.8,88 1460.8,90 1460.9,78 1461.0,80 1461.1,75 1461.2,86 1461.3,87 1461.3,92 1461.4,105 1461.5,91 1461.6,74 1461.7,87 1461.8,84 1461.9,71 1462.0,97 1462.1,82 1462.2,93 1462.3,73 1462.4,104 1462.5,90 1462.5,92 1462.6,64 1462.7,89 1462.8,88 1462.9,103 1463.0,102 1463.0,95 1463.1,101 1463.2,80 1463.3,93 1463.4,92 1463.5,88 1463.6,97 1463.7,101 1463.8,94 1463.9,84 1464.0,88 1464.1,96 1464.1,67 1464.2,82 1464.3,78 1464.4,75 1464.5,83 1464.6,83 1464.6,104 1464.7,96 1464.8,86 1464.9,87 1465.0,68 1465.1,91 1465.2,83 1465.3,90 1465.4,102 1465.5,90 1465.6,85 1465.7,66 1465.7,72 1465.8,93 1465.9,97 1466.0,87 1466.1,93 1466.2,87 1466.2,93 1466.3,99 1466.4,87 1466.5,117 1466.6,91 1466.7,92 1466.8,68 1466.9,107 1467.0,75 1467.1,90 1467.2,77 1467.3,95 1467.4,81 1467.4,76 1467.5,56 1467.6,96 1467.7,88 1467.8,87 1467.9,93 1467.9,90 1468.0,106 1468.1,83 1468.2,103 1468.3,87 1468.4,74 1468.5,101 1468.6,88 1468.7,84 1468.8,87 1468.9,92 1469.0,86 1469.0,78 1469.1,98 1469.2,88 1469.3,78 1469.4,93 1469.5,100 1469.6,77 1469.7,78 1469.7,94 1469.8,68 1469.9,71 1470.0,77 1470.1,92 1470.2,85 1470.3,96 1470.4,98 1470.5,85 1470.6,82 1470.6,79 1470.7,85 1470.8,62 1470.9,97 1471.0,71 1471.1,91 1471.2,75 1471.3,97 1471.4,60 1471.5,69 1471.5,84 1471.6,75 1471.7,86 1471.8,87 1471.9,102 1472.0,91 1472.1,86 1472.2,105 1472.2,97 1472.3,86 1472.4,80 1472.5,91 1472.6,69 1472.7,92 1472.8,78 1472.9,70 1473.0,95 1473.1,72 1473.2,87 1473.3,96 1473.3,89 1473.4,73 1473.5,74 1473.6,86 1473.7,60 1473.8,87 1473.9,93 1473.9,85 1474.0,87 1474.1,91 1474.2,89 1474.3,101 1474.4,78 1474.5,101 1474.6,72 1474.7,77 1474.8,90 1474.9,90 1475.0,93 1475.0,85 1475.1,90 1475.2,65 1475.3,90 1475.4,89 1475.5,60 1475.5,77 1475.6,71 1475.7,78 1475.8,79 1475.9,77 1476.0,76 1476.1,59 1476.2,99 1476.3,113 1476.4,89 1476.5,103 1476.6,83 1476.6,99 1476.7,85 1476.8,72 1476.9,76 1477.0,94 1477.1,86 1477.1,87 1477.2,100 1477.3,74 1477.4,98 1477.5,75 1477.6,81 1477.7,98 1477.8,89 1477.9,75 1478.0,89 1478.1,59 1478.2,97 1478.3,71 1478.3,105 1478.4,88 1478.5,73 1478.6,108 1478.7,101 1478.7,94 1478.8,92 1478.9,91 1479.0,93 1479.1,96 1479.2,116 1479.3,69 1479.4,60 1479.5,80 1479.6,89 1479.7,97 1479.8,82 1479.9,82 1479.9,96 1480.0,88 1480.1,77 1480.2,82 1480.3,86 1480.4,84 1480.4,85 1480.5,94 1480.6,87 1480.7,75 1480.8,73 1480.9,112 1481.0,103 1481.1,74 1481.2,80 1481.3,80 1481.4,102 1481.5,85 1481.5,79 1481.6,80 1481.7,94 1481.8,92 1481.9,82 1482.0,83 1482.1,70 1482.2,112 1482.2,99 1482.3,84 1482.4,68 1482.5,98 1482.6,82 1482.7,63 1482.8,101 1482.9,109 1483.0,73 1483.1,91 1483.1,86 1483.2,85 1483.3,71 1483.4,89 1483.5,74 1483.6,76 1483.7,86 1483.8,73 1483.9,82 1484.0,87 1484.0,99 1484.1,98 1484.2,91 1484.3,84 1484.4,88 1484.5,59 1484.6,92 1484.7,99 1484.8,85 1484.8,91 1484.9,91 1485.0,75 1485.1,82 1485.2,72 1485.3,98 1485.4,78 1485.5,86 1485.6,93 1485.7,105 1485.8,87 1485.8,80 1485.9,80 1486.0,52 1486.1,71 1486.2,110 1486.3,79 1486.4,83 1486.4,83 1486.5,92 1486.6,75 1486.7,120 1486.8,102 1486.9,78 1487.0,84 1487.1,75 1487.2,90 1487.3,92 1487.4,76 1487.5,84 1487.5,107 1487.6,75 1487.7,84 1487.8,79 1487.9,74 1488.0,98 1488.0,78 1488.1,87 1488.2,89 1488.3,86 1488.4,92 1488.5,85 1488.6,83 1488.7,93 1488.8,73 1488.9,85 1489.0,99 1489.1,80 1489.2,80 1489.2,103 1489.3,82 1489.4,88 1489.5,81 1489.6,84 1489.6,113 1489.7,85 1489.8,79 1489.9,77 1490.0,71 1490.1,82 1490.2,70 1490.3,76 1490.4,91 1490.5,94 1490.6,70 1490.7,77 1490.8,107 1490.8,98 1490.9,72 1491.0,84 1491.1,107 1491.2,78 1491.3,86 1491.3,88 1491.4,92 1491.5,92 1491.6,83 1491.7,56 1491.8,55 1491.9,88 1492.0,104 1492.1,87 1492.2,89 1492.3,89 1492.4,106 1492.4,87 1492.5,94 1492.6,85 1492.7,104 1492.8,85 1492.9,100 1492.9,92 1493.0,92 1493.1,93 1493.2,93 1493.3,94 1493.4,93 1493.5,90 1493.6,63 1493.7,75 1493.8,93 1493.9,102 1494.0,72 1494.0,86 1494.1,82 1494.2,72 1494.3,109 1494.4,93 1494.5,84 1494.6,69 1494.7,87 1494.7,86 1494.8,84 1494.9,93 1495.0,94 1495.1,90 1495.2,78 1495.3,72 1495.4,84 1495.5,89 1495.6,71 1495.7,79 1495.7,77 1495.8,87 1495.9,91 1496.0,80 1496.1,88 1496.2,72 1496.3,96 1496.4,82 1496.5,86 1496.5,98 1496.6,90 1496.7,89 1496.8,54 1496.9,98 1497.0,78 1497.1,91 1497.2,81 1497.3,90 1497.3,95 1497.4,69 1497.5,72 1497.6,107 1497.7,88 1497.8,90 1497.9,105 1498.0,84 1498.1,80 1498.2,85 1498.3,80 1498.3,71 1498.4,60 1498.5,121 1498.6,89 1498.7,69 1498.8,82 1498.9,93 1498.9,69 1499.0,75 1499.1,105 1499.2,76 1499.3,88 1499.4,83 1499.5,100 1499.6,79 1499.7,84 1499.8,97 1499.9,90 1500.0,69 1500.1,67 1500.1,89 1500.2,92 1500.3,83 1500.4,67 1500.5,79 1500.5,97 1500.6,85 1500.7,80 1500.8,72 1500.9,86 1501.0,84 1501.1,83 1501.2,78 1501.3,108 1501.4,69 1501.5,82 1501.6,85 1501.7,99 1501.7,82 1501.8,62 1501.9,80 1502.0,85 1502.1,86 1502.2,104 1502.2,80 1502.3,78 1502.4,138 1502.5,84 1502.6,76 1502.7,96 1502.8,111 1502.9,84 1503.0,60 1503.1,81 1503.2,58 1503.3,81 1503.3,88 1503.4,95 1503.5,68 1503.6,102 1503.7,82 1503.8,85 1503.8,103 1503.9,100 1504.0,65 1504.1,84 1504.2,86 1504.3,90 1504.4,82 1504.5,95 1504.6,72 1504.7,75 1504.8,86 1504.9,74 1504.9,87 1505.0,91 1505.1,74 1505.2,87 1505.3,95 1505.4,66 1505.4,67 1505.5,101 1505.6,89 1505.7,74 1505.8,89 1505.9,91 1506.0,87 1506.1,89 1506.2,89 1506.3,81 1506.4,84 1506.5,65 1506.6,82 1506.6,65 1506.7,84 1506.8,64 1506.9,87 1507.0,71 1507.1,83 1507.2,66 1507.2,81 1507.3,97 1507.4,68 1507.5,87 1507.6,79 1507.7,73 1507.8,78 1507.9,94 1508.0,101 1508.1,106 1508.2,96 1508.2,94 1508.3,95 1508.4,80 1508.5,102 1508.6,105 1508.7,83 1508.8,64 1508.9,97 1509.0,87 1509.0,75 1509.1,91 1509.2,74 1509.3,85 1509.4,76 1509.5,64 1509.6,112 1509.7,103 1509.8,102 1509.8,100 1509.9,84 1510.0,84 1510.1,65 1510.2,68 1510.3,82 1510.4,87 1510.5,77 1510.6,80 1510.7,91 1510.8,77 1510.8,87 1510.9,93 1511.0,93 1511.1,85 1511.2,87 1511.3,100 1511.4,66 1511.4,65 1511.5,66 1511.6,72 1511.7,87 1511.8,97 1511.9,98 1512.0,107 1512.1,90 1512.2,106 1512.3,84 1512.4,83 1512.5,92 1512.6,92" fill="none" stroke="#ea5850" stroke-width="1"/><rect x="828" y="26" width="717" height="373" fill="none" stroke="#474747" stroke-width="1.5"/><path d="M860.7 399v4M966.1 399v4M1075 399v4M1184 399v4M1294.7 399v4M1403.6 399v4M1512.6 399v4M828 384h-4M828 316.3h-4M828 248.5h-4M828 180.8h-4M828 113h-4M828 45.3h-4" stroke="#474747" stroke-width="1.2" fill="none"/><text x="821" y="388" text-anchor="end" class="tk">0</text><text x="821" y="320.3" text-anchor="end" class="tk">10</text><text x="821" y="252.5" text-anchor="end" class="tk">20</text><text x="821" y="184.8" text-anchor="end" class="tk">30</text><text x="821" y="117" text-anchor="end" class="tk">40</text><text x="821" y="49.3" text-anchor="end" class="tk">50</text><text transform="translate(860.7,427.5) rotate(-45)" text-anchor="middle" dominant-baseline="central" class="tk">2025-01</text><text transform="translate(966.1,427.5) rotate(-45)" text-anchor="middle" dominant-baseline="central" class="tk">2025-03</text><text transform="translate(1075,427.5) rotate(-45)" text-anchor="middle" dominant-baseline="central" class="tk">2025-05</text><text transform="translate(1184,427.5) rotate(-45)" text-anchor="middle" dominant-baseline="central" class="tk">2025-07</text><text transform="translate(1294.7,427.5) rotate(-45)" text-anchor="middle" dominant-baseline="central" class="tk">2025-09</text><text transform="translate(1403.6,427.5) rotate(-45)" text-anchor="middle" dominant-baseline="central" class="tk">2025-11</text><text transform="translate(1512.6,427.5) rotate(-45)" text-anchor="middle" dominant-baseline="central" class="tk">2026-01</text><text x="1186.5" y="20.3" text-anchor="middle" class="ti">Station 2 - Smelting Output Over Time</text><text transform="translate(795,212.5) rotate(-90)" text-anchor="middle" dominant-baseline="central" class="al">Output (tons/hour)</text><text x="1186.5" y="460" text-anchor="middle" class="al">Date</text><rect x="1411" y="202" width="128.5" height="20.5" rx="2.5" fill="#ffffff" fill-opacity="0.85" stroke="#d9d9d9" stroke-width="1"/><path d="M1415 212.1h22" stroke="#e8231c" stroke-width="1.3" stroke-opacity="0.6"/><text x="1445.7" y="216.4" class="lg" textLength="89.6" lengthAdjust="spacingAndGlyphs">Station 2 Output</text><path d="M83.5 492V864M188.9 492V864M297.9 492V864M406.9 492V864M517.7 492V864M626.7 492V864M735.7 492V864M51 830.3H769M51 784.7H769M51 739H769M51 693.4H769M51 647.8H769M51 602.2H769M51 556.5H769M51 510.9H769" stroke="#e9e9e9" stroke-width="1" fill="none"/><g fill="#0000ff" fill-opacity="0.6"><circle cx="262.2" cy="553.8" r="2.9"/><circle cx="131.0" cy="550.9" r="2.9"/><circle cx="672.7" cy="568.7" r="2.9"/><circle cx="513.2" cy="552.9" r="2.9"/><circle cx="600.7" cy="565.8" r="2.9"/><circle cx="134.7" cy="558.5" r="2.9"/><circle cx="249.8" cy="571.7" r="2.9"/><circle cx="156.6" cy="560.9" r="2.9"/><circle cx="552.6" cy="571.7" r="2.9"/><circle cx="251.2" cy="571.3" r="2.9"/><circle cx="541.7" cy="567.3" r="2.9"/><circle cx="212.2" cy="563.2" r="2.9"/><circle cx="390.8" cy="563.1" r="2.9"/><circle cx="646.9" cy="534.6" r="2.9"/><circle cx="556.8" cy="564.7" r="2.9"/><circle cx="123.2" cy="570.3" r="2.9"/><circle cx="564.1" cy="549.0" r="2.9"/><circle cx="169.6" cy="529.8" r="2.9"/><circle cx="274.6" cy="567.2" r="2.9"/><circle cx="95.9" cy="568.0" r="2.9"/><circle cx="628.0" cy="569.0" r="2.9"/><circle cx="104.1" cy="567.7" r="2.9"/><circle cx="400.8" cy="562.0" r="2.9"/><circle cx="503.3" cy="570.6" r="2.9"/><circle cx="534.8" cy="558.4" r="2.9"/><circle cx="132.4" cy="549.3" r="2.9"/><circle cx="510.3" cy="548.7" r="2.9"/><circle cx="488.2" cy="544.3" r="2.9"/><circle cx="309.5" cy="560.5" r="2.9"/><circle cx="96.3" cy="526.1" r="2.9"/><circle cx="86.0" cy="566.2" r="2.9"/><circle cx="435.4" cy="570.4" r="2.9"/><circle cx="356.4" cy="569.7" r="2.9"/><circle cx="591.4" cy="555.5" r="2.9"/><circle cx="419.3" cy="569.5" r="2.9"/><circle cx="507.5" cy="568.2" r="2.9"/><circle cx="644.2" cy="564.5" r="2.9"/><circle cx="131.5" cy="568.3" r="2.9"/><circle cx="153.8" cy="550.8" r="2.9"/><circle cx="522.8" cy="572.2" r="2.9"/><circle cx="471.8" cy="570.4" r="2.9"/><circle cx="97.2" cy="558.9" r="2.9"/><circle cx="221.1" cy="566.0" r="2.9"/><circle cx="150.6" cy="560.4" r="2.9"/><circle cx="174.7" cy="554.0" r="2.9"/><circle cx="377.0" cy="570.8" r="2.9"/><circle cx="400.2" cy="551.1" r="2.9"/><circle cx="668.8" cy="546.0" r="2.9"/><circle cx="459.5" cy="567.6" r="2.9"/><circle cx="188.7" cy="556.1" r="2.9"/><circle cx="454.0" cy="562.7" r="2.9"/><circle cx="659.8" cy="527.0" r="2.9"/><circle cx="631.2" cy="565.2" r="2.9"/><circle cx="684.7" cy="561.1" r="2.9"/><circle cx="472.8" cy="558.1" r="2.9"/><circle cx="606.3" cy="563.9" r="2.9"/><circle cx="187.2" cy="568.4" r="2.9"/><circle cx="663.7" cy="572.5" r="2.9"/><circle cx="492.9" cy="564.6" r="2.9"/><circle cx="310.4" cy="570.1" r="2.9"/><circle cx="470.8" cy="544.8" r="2.9"/><circle cx="416.2" cy="563.8" r="2.9"/><circle cx="361.3" cy="563.2" r="2.9"/><circle cx="492.3" cy="565.7" r="2.9"/><circle cx="435.2" cy="567.8" r="2.9"/><circle cx="728.7" cy="569.0" r="2.9"/><circle cx="261.1" cy="558.4" r="2.9"/><circle cx="448.8" cy="569.1" r="2.9"/><circle cx="324.4" cy="563.6" r="2.9"/><circle cx="709.3" cy="568.2" r="2.9"/><circle cx="662.1" cy="542.0" r="2.9"/><circle cx="304.7" cy="543.4" r="2.9"/><circle cx="459.6" cy="544.0" r="2.9"/><circle cx="257.5" cy="555.9" r="2.9"/><circle cx="378.5" cy="509.6" r="2.9"/><circle cx="707.8" cy="564.3" r="2.9"/><circle cx="479.0" cy="554.2" r="2.9"/><circle cx="174.8" cy="554.9" r="2.9"/><circle cx="186.0" cy="565.3" r="2.9"/><circle cx="373.4" cy="571.8" r="2.9"/><circle cx="262.3" cy="571.0" r="2.9"/><circle cx="103.3" cy="535.7" r="2.9"/><circle cx="711.4" cy="566.4" r="2.9"/><circle cx="584.8" cy="567.2" r="2.9"/><circle cx="404.4" cy="572.2" r="2.9"/><circle cx="237.3" cy="571.2" r="2.9"/><circle cx="608.5" cy="547.5" r="2.9"/><circle cx="187.6" cy="570.8" r="2.9"/><circle cx="164.5" cy="566.9" r="2.9"/><circle cx="258.3" cy="569.7" r="2.9"/><circle cx="659.1" cy="572.3" r="2.9"/><circle cx="467.9" cy="556.7" r="2.9"/><circle cx="194.4" cy="559.7" r="2.9"/><circle cx="642.8" cy="569.0" r="2.9"/><circle cx="182.4" cy="562.4" r="2.9"/><circle cx="557.6" cy="562.3" r="2.9"/><circle cx="715.8" cy="565.3" r="2.9"/><circle cx="418.5" cy="568.0" r="2.9"/><circle cx="444.8" cy="562.9" r="2.9"/><circle cx="614.6" cy="570.8" r="2.9"/><circle cx="570.2" cy="572.0" r="2.9"/><circle cx="261.5" cy="568.8" r="2.9"/><circle cx="684.0" cy="540.8" r="2.9"/><circle cx="616.8" cy="538.2" r="2.9"/><circle cx="523.6" cy="564.7" r="2.9"/><circle cx="496.0" cy="561.0" r="2.9"/><circle cx="404.2" cy="571.4" r="2.9"/><circle cx="365.4" cy="531.3" r="2.9"/><circle cx="453.9" cy="565.2" r="2.9"/><circle cx="340.2" cy="565.2" r="2.9"/><circle cx="568.9" cy="562.6" r="2.9"/><circle cx="480.6" cy="558.3" r="2.9"/><circle cx="599.3" cy="553.4" r="2.9"/><circle cx="99.2" cy="565.6" r="2.9"/><circle cx="96.6" cy="563.3" r="2.9"/><circle cx="520.3" cy="564.3" r="2.9"/><circle cx="628.9" cy="562.7" r="2.9"/><circle cx="297.5" cy="566.1" r="2.9"/><circle cx="420.8" cy="551.9" r="2.9"/><circle cx="120.6" cy="572.0" r="2.9"/><circle cx="517.8" cy="569.7" r="2.9"/><circle cx="517.2" cy="567.0" r="2.9"/><circle cx="645.6" cy="571.8" r="2.9"/><circle cx="102.8" cy="563.7" r="2.9"/><circle cx="404.1" cy="564.0" r="2.9"/><circle cx="270.9" cy="518.5" r="2.9"/><circle cx="517.5" cy="560.1" r="2.9"/><circle cx="341.4" cy="571.2" r="2.9"/><circle cx="228.1" cy="536.7" r="2.9"/><circle cx="403.1" cy="549.7" r="2.9"/><circle cx="293.3" cy="562.4" r="2.9"/><circle cx="117.7" cy="567.4" r="2.9"/><circle cx="537.7" cy="570.5" r="2.9"/><circle cx="267.1" cy="569.5" r="2.9"/><circle cx="445.1" cy="560.6" r="2.9"/><circle cx="516.1" cy="572.5" r="2.9"/><circle cx="194.8" cy="572.0" r="2.9"/><circle cx="553.5" cy="571.2" r="2.9"/><circle cx="705.7" cy="566.9" r="2.9"/><circle cx="488.7" cy="549.1" r="2.9"/><circle cx="224.4" cy="571.0" r="2.9"/><circle cx="530.6" cy="563.9" r="2.9"/><circle cx="436.8" cy="572.0" r="2.9"/><circle cx="332.5" cy="558.3" r="2.9"/><circle cx="572.4" cy="557.1" r="2.9"/><circle cx="635.7" cy="568.7" r="2.9"/><circle cx="391.3" cy="571.7" r="2.9"/><circle cx="372.6" cy="561.2" r="2.9"/><circle cx="648.0" cy="565.2" r="2.9"/><circle cx="134.6" cy="572.2" r="2.9"/><circle cx="265.4" cy="571.8" r="2.9"/><circle cx="570.3" cy="569.7" r="2.9"/><circle cx="259.3" cy="542.6" r="2.9"/><circle cx="649.5" cy="561.3" r="2.9"/><circle cx="499.2" cy="562.1" r="2.9"/><circle cx="293.3" cy="514.7" r="2.9"/><circle cx="359.8" cy="550.2" r="2.9"/><circle cx="413.2" cy="559.2" r="2.9"/><circle cx="221.8" cy="566.6" r="2.9"/><circle cx="506.9" cy="557.3" r="2.9"/><circle cx="448.3" cy="566.5" r="2.9"/><circle cx="439.7" cy="537.5" r="2.9"/><circle cx="316.4" cy="571.9" r="2.9"/><circle cx="649.3" cy="553.6" r="2.9"/><circle cx="694.1" cy="559.7" r="2.9"/><circle cx="684.1" cy="571.6" r="2.9"/><circle cx="464.1" cy="556.9" r="2.9"/><circle cx="165.8" cy="563.6" r="2.9"/><circle cx="647.0" cy="563.2" r="2.9"/><circle cx="733.5" cy="542.6" r="2.9"/><circle cx="185.6" cy="531.6" r="2.9"/><circle cx="358.9" cy="563.9" r="2.9"/><circle cx="579.5" cy="559.3" r="2.9"/><circle cx="734.6" cy="553.2" r="2.9"/><circle cx="640.9" cy="547.8" r="2.9"/><circle cx="516.4" cy="568.8" r="2.9"/><circle cx="557.9" cy="553.0" r="2.9"/><circle cx="272.8" cy="552.2" r="2.9"/><circle cx="465.6" cy="570.1" r="2.9"/><circle cx="320.7" cy="566.6" r="2.9"/><circle cx="180.7" cy="569.8" r="2.9"/><circle cx="511.1" cy="552.2" r="2.9"/><circle cx="237.4" cy="565.0" r="2.9"/><circle cx="546.6" cy="571.3" r="2.9"/><circle cx="588.0" cy="562.2" r="2.9"/><circle cx="574.5" cy="563.2" r="2.9"/><circle cx="528.2" cy="559.3" r="2.9"/><circle cx="362.4" cy="565.2" r="2.9"/><circle cx="610.5" cy="539.8" r="2.9"/><circle cx="453.5" cy="566.9" r="2.9"/><circle cx="510.1" cy="567.5" r="2.9"/><circle cx="651.1" cy="571.6" r="2.9"/><circle cx="662.5" cy="572.4" r="2.9"/><circle cx="649.6" cy="569.6" r="2.9"/><circle cx="148.3" cy="570.6" r="2.9"/><circle cx="584.1" cy="550.5" r="2.9"/><circle cx="153.5" cy="563.3" r="2.9"/><circle cx="236.0" cy="529.2" r="2.9"/><circle cx="487.2" cy="522.5" r="2.9"/><circle cx="535.2" cy="563.6" r="2.9"/><circle cx="702.7" cy="569.2" r="2.9"/><circle cx="144.5" cy="571.7" r="2.9"/><circle cx="522.4" cy="569.0" r="2.9"/><circle cx="635.1" cy="568.2" r="2.9"/><circle cx="168.6" cy="560.7" r="2.9"/><circle cx="225.6" cy="566.1" r="2.9"/><circle cx="554.1" cy="554.5" r="2.9"/><circle cx="426.9" cy="564.8" r="2.9"/><circle cx="722.7" cy="571.9" r="2.9"/><circle cx="496.8" cy="568.2" r="2.9"/><circle cx="355.1" cy="548.9" r="2.9"/><circle cx="315.5" cy="568.5" r="2.9"/><circle cx="560.4" cy="551.6" r="2.9"/><circle cx="655.9" cy="544.9" r="2.9"/><circle cx="381.3" cy="555.7" r="2.9"/><circle cx="620.0" cy="571.4" r="2.9"/><circle cx="86.3" cy="563.5" r="2.9"/><circle cx="386.2" cy="544.6" r="2.9"/><circle cx="436.7" cy="568.4" r="2.9"/><circle cx="681.2" cy="544.0" r="2.9"/><circle cx="244.6" cy="562.7" r="2.9"/><circle cx="687.4" cy="569.6" r="2.9"/><circle cx="463.9" cy="540.6" r="2.9"/><circle cx="208.3" cy="569.5" r="2.9"/><circle cx="515.5" cy="571.8" r="2.9"/><circle cx="245.9" cy="571.9" r="2.9"/><circle cx="224.2" cy="553.2" r="2.9"/><circle cx="343.9" cy="570.1" r="2.9"/><circle cx="280.1" cy="567.8" r="2.9"/><circle cx="691.5" cy="561.3" r="2.9"/><circle cx="320.5" cy="568.6" r="2.9"/><circle cx="87.8" cy="546.6" r="2.9"/><circle cx="292.3" cy="567.5" r="2.9"/><circle cx="334.9" cy="570.9" r="2.9"/><circle cx="217.2" cy="559.0" r="2.9"/><circle cx="688.1" cy="554.4" r="2.9"/><circle cx="399.3" cy="560.9" r="2.9"/><circle cx="231.2" cy="546.5" r="2.9"/><circle cx="463.9" cy="563.5" r="2.9"/><circle cx="559.4" cy="564.7" r="2.9"/><circle cx="364.0" cy="556.5" r="2.9"/><circle cx="733.8" cy="569.2" r="2.9"/><circle cx="236.1" cy="550.3" r="2.9"/><circle cx="487.8" cy="570.2" r="2.9"/><circle cx="309.3" cy="535.8" r="2.9"/><circle cx="271.8" cy="572.4" r="2.9"/><circle cx="104.2" cy="569.2" r="2.9"/><circle cx="685.1" cy="563.4" r="2.9"/><circle cx="678.1" cy="562.2" r="2.9"/><circle cx="461.1" cy="571.7" r="2.9"/><circle cx="563.1" cy="561.0" r="2.9"/><circle cx="128.3" cy="546.5" r="2.9"/><circle cx="430.5" cy="550.6" r="2.9"/><circle cx="114.9" cy="569.6" r="2.9"/><circle cx="550.6" cy="564.4" r="2.9"/><circle cx="600.5" cy="563.7" r="2.9"/><circle cx="531.5" cy="571.6" r="2.9"/><circle cx="587.1" cy="556.5" r="2.9"/><circle cx="726.2" cy="568.6" r="2.9"/><circle cx="442.0" cy="570.3" r="2.9"/><circle cx="666.0" cy="566.4" r="2.9"/><circle cx="353.9" cy="544.2" r="2.9"/><circle cx="154.3" cy="566.7" r="2.9"/><circle cx="532.0" cy="571.0" r="2.9"/><circle cx="520.3" cy="563.9" r="2.9"/><circle cx="705.5" cy="550.2" r="2.9"/><circle cx="177.2" cy="553.7" r="2.9"/><circle cx="176.4" cy="543.7" r="2.9"/><circle cx="362.2" cy="558.7" r="2.9"/><circle cx="377.8" cy="572.4" r="2.9"/><circle cx="675.4" cy="565.7" r="2.9"/><circle cx="546.0" cy="553.4" r="2.9"/><circle cx="311.9" cy="564.2" r="2.9"/><circle cx="309.4" cy="561.8" r="2.9"/><circle cx="615.7" cy="561.3" r="2.9"/><circle cx="331.6" cy="571.0" r="2.9"/><circle cx="466.2" cy="563.2" r="2.9"/><circle cx="278.4" cy="572.4" r="2.9"/><circle cx="468.7" cy="571.0" r="2.9"/><circle cx="331.2" cy="546.1" r="2.9"/><circle cx="172.2" cy="552.0" r="2.9"/><circle cx="217.3" cy="556.6" r="2.9"/><circle cx="369.4" cy="558.1" r="2.9"/><circle cx="253.8" cy="564.1" r="2.9"/><circle cx="163.3" cy="550.5" r="2.9"/><circle cx="107.9" cy="566.9" r="2.9"/><circle cx="638.8" cy="565.9" r="2.9"/><circle cx="395.7" cy="561.3" r="2.9"/><circle cx="569.9" cy="560.7" r="2.9"/><circle cx="660.1" cy="565.0" r="2.9"/><circle cx="324.7" cy="557.9" r="2.9"/><circle cx="666.0" cy="558.4" r="2.9"/><circle cx="205.5" cy="560.8" r="2.9"/><circle cx="640.1" cy="571.6" r="2.9"/><circle cx="547.5" cy="563.1" r="2.9"/><circle cx="619.9" cy="572.4" r="2.9"/><circle cx="512.5" cy="563.1" r="2.9"/><circle cx="511.3" cy="564.7" r="2.9"/><circle cx="728.0" cy="557.4" r="2.9"/><circle cx="331.5" cy="571.0" r="2.9"/><circle cx="692.8" cy="563.4" r="2.9"/><circle cx="406.2" cy="570.8" r="2.9"/><circle cx="262.8" cy="545.8" r="2.9"/><circle cx="653.4" cy="566.5" r="2.9"/><circle cx="508.9" cy="567.9" r="2.9"/><circle cx="640.2" cy="570.7" r="2.9"/><circle cx="107.3" cy="560.9" r="2.9"/><circle cx="153.7" cy="566.4" r="2.9"/><circle cx="690.0" cy="548.4" r="2.9"/><circle cx="688.1" cy="569.7" r="2.9"/><circle cx="691.5" cy="523.5" r="2.9"/><circle cx="122.8" cy="570.3" r="2.9"/><circle cx="107.8" cy="560.2" r="2.9"/><circle cx="727.9" cy="570.8" r="2.9"/><circle cx="725.3" cy="561.4" r="2.9"/><circle cx="164.7" cy="568.1" r="2.9"/><circle cx="151.6" cy="561.7" r="2.9"/><circle cx="659.3" cy="571.9" r="2.9"/><circle cx="690.7" cy="543.4" r="2.9"/><circle cx="569.1" cy="567.9" r="2.9"/><circle cx="283.7" cy="547.4" r="2.9"/><circle cx="276.3" cy="563.0" r="2.9"/><circle cx="298.7" cy="564.0" r="2.9"/><circle cx="173.8" cy="558.6" r="2.9"/><circle cx="448.6" cy="567.9" r="2.9"/><circle cx="625.5" cy="543.9" r="2.9"/><circle cx="190.6" cy="547.9" r="2.9"/><circle cx="129.8" cy="547.9" r="2.9"/><circle cx="219.0" cy="556.0" r="2.9"/><circle cx="248.7" cy="567.7" r="2.9"/><circle cx="642.9" cy="570.1" r="2.9"/><circle cx="241.4" cy="568.4" r="2.9"/><circle cx="405.3" cy="558.3" r="2.9"/><circle cx="531.6" cy="567.3" r="2.9"/><circle cx="554.2" cy="569.8" r="2.9"/><circle cx="515.0" cy="544.3" r="2.9"/><circle cx="493.9" cy="563.3" r="2.9"/><circle cx="584.5" cy="560.1" r="2.9"/><circle cx="300.1" cy="546.1" r="2.9"/><circle cx="549.7" cy="558.5" r="2.9"/><circle cx="654.9" cy="533.2" r="2.9"/><circle cx="380.0" cy="550.5" r="2.9"/><circle cx="351.4" cy="567.2" r="2.9"/><circle cx="114.8" cy="552.4" r="2.9"/><circle cx="205.4" cy="553.2" r="2.9"/><circle cx="122.8" cy="551.9" r="2.9"/><circle cx="86.6" cy="566.6" r="2.9"/><circle cx="374.9" cy="560.6" r="2.9"/><circle cx="682.3" cy="556.1" r="2.9"/><circle cx="465.4" cy="556.0" r="2.9"/><circle cx="441.3" cy="568.4" r="2.9"/><circle cx="125.7" cy="563.5" r="2.9"/><circle cx="389.2" cy="564.7" r="2.9"/><circle cx="182.0" cy="566.7" r="2.9"/><circle cx="462.0" cy="563.6" r="2.9"/><circle cx="359.4" cy="536.0" r="2.9"/><circle cx="87.3" cy="570.2" r="2.9"/><circle cx="168.4" cy="572.3" r="2.9"/><circle cx="672.2" cy="566.4" r="2.9"/><circle cx="420.6" cy="569.5" r="2.9"/><circle cx="278.3" cy="539.7" r="2.9"/><circle cx="284.6" cy="566.5" r="2.9"/><circle cx="225.1" cy="567.8" r="2.9"/><circle cx="484.0" cy="566.8" r="2.9"/><circle cx="199.8" cy="557.6" r="2.9"/><circle cx="218.3" cy="533.4" r="2.9"/><circle cx="94.3" cy="551.3" r="2.9"/><circle cx="105.0" cy="569.0" r="2.9"/><circle cx="323.0" cy="557.1" r="2.9"/><circle cx="599.8" cy="557.6" r="2.9"/><circle cx="483.1" cy="550.7" r="2.9"/><circle cx="411.2" cy="566.2" r="2.9"/><circle cx="569.0" cy="566.0" r="2.9"/><circle cx="128.7" cy="561.5" r="2.9"/><circle cx="501.3" cy="568.9" r="2.9"/><circle cx="100.5" cy="566.8" r="2.9"/><circle cx="474.1" cy="552.9" r="2.9"/><circle cx="236.8" cy="560.6" r="2.9"/><circle cx="285.6" cy="557.6" r="2.9"/><circle cx="238.2" cy="541.1" r="2.9"/><circle cx="266.2" cy="566.1" r="2.9"/><circle cx="400.1" cy="551.0" r="2.9"/><circle cx="297.2" cy="569.2" r="2.9"/><circle cx="126.6" cy="568.7" r="2.9"/><circle cx="217.9" cy="571.0" r="2.9"/><circle cx="524.1" cy="567.0" r="2.9"/><circle cx="293.8" cy="563.0" r="2.9"/><circle cx="237.4" cy="567.4" r="2.9"/><circle cx="552.0" cy="570.5" r="2.9"/><circle cx="288.0" cy="549.5" r="2.9"/><circle cx="601.3" cy="563.7" r="2.9"/><circle cx="562.2" cy="562.2" r="2.9"/><circle cx="519.9" cy="527.9" r="2.9"/><circle cx="151.0" cy="567.8" r="2.9"/><circle cx="722.4" cy="564.3" r="2.9"/><circle cx="132.2" cy="560.4" r="2.9"/><circle cx="109.5" cy="569.3" r="2.9"/><circle cx="476.9" cy="548.7" r="2.9"/><circle cx="131.5" cy="559.7" r="2.9"/><circle cx="213.6" cy="546.9" r="2.9"/><circle cx="98.5" cy="545.9" r="2.9"/><circle cx="698.4" cy="569.4" r="2.9"/><circle cx="119.2" cy="568.4" r="2.9"/><circle cx="500.7" cy="567.6" r="2.9"/><circle cx="115.2" cy="561.4" r="2.9"/><circle cx="441.6" cy="567.1" r="2.9"/><circle cx="157.2" cy="571.1" r="2.9"/><circle cx="547.1" cy="566.0" r="2.9"/><circle cx="210.4" cy="568.1" r="2.9"/><circle cx="183.5" cy="571.1" r="2.9"/><circle cx="480.3" cy="551.5" r="2.9"/><circle cx="412.8" cy="571.0" r="2.9"/><circle cx="565.4" cy="544.9" r="2.9"/><circle cx="190.8" cy="569.8" r="2.9"/><circle cx="89.3" cy="517.4" r="2.9"/><circle cx="735.4" cy="545.6" r="2.9"/><circle cx="169.1" cy="557.2" r="2.9"/><circle cx="322.3" cy="561.2" r="2.9"/><circle cx="341.5" cy="569.9" r="2.9"/><circle cx="524.3" cy="558.9" r="2.9"/><circle cx="699.6" cy="550.4" r="2.9"/><circle cx="343.1" cy="558.2" r="2.9"/><circle cx="654.1" cy="556.3" r="2.9"/><circle cx="453.4" cy="572.1" r="2.9"/><circle cx="710.1" cy="564.0" r="2.9"/><circle cx="617.9" cy="553.3" r="2.9"/><circle cx="105.3" cy="565.4" r="2.9"/><circle cx="105.3" cy="570.3" r="2.9"/><circle cx="264.5" cy="562.6" r="2.9"/><circle cx="329.5" cy="551.6" r="2.9"/><circle cx="506.0" cy="549.7" r="2.9"/><circle cx="489.1" cy="557.6" r="2.9"/><circle cx="411.2" cy="566.3" r="2.9"/><circle cx="113.1" cy="568.5" r="2.9"/><circle cx="320.3" cy="543.8" r="2.9"/><circle cx="281.4" cy="566.0" r="2.9"/><circle cx="683.0" cy="546.2" r="2.9"/><circle cx="177.1" cy="565.2" r="2.9"/><circle cx="718.3" cy="567.9" r="2.9"/><circle cx="182.1" cy="564.6" r="2.9"/><circle cx="448.1" cy="568.9" r="2.9"/><circle cx="258.2" cy="568.3" r="2.9"/><circle cx="160.9" cy="568.4" r="2.9"/><circle cx="522.7" cy="554.4" r="2.9"/><circle cx="702.8" cy="540.1" r="2.9"/><circle cx="172.6" cy="572.4" r="2.9"/><circle cx="493.5" cy="555.9" r="2.9"/><circle cx="190.2" cy="566.3" r="2.9"/><circle cx="163.0" cy="551.6" r="2.9"/><circle cx="578.4" cy="558.8" r="2.9"/><circle cx="607.5" cy="572.3" r="2.9"/><circle cx="263.4" cy="569.0" r="2.9"/><circle cx="369.8" cy="569.7" r="2.9"/><circle cx="366.1" cy="567.7" r="2.9"/><circle cx="116.8" cy="570.9" r="2.9"/><circle cx="515.3" cy="536.3" r="2.9"/><circle cx="406.6" cy="555.7" r="2.9"/><circle cx="713.4" cy="559.7" r="2.9"/><circle cx="560.0" cy="563.4" r="2.9"/><circle cx="133.9" cy="564.1" r="2.9"/><circle cx="701.0" cy="547.5" r="2.9"/><circle cx="251.2" cy="570.3" r="2.9"/><circle cx="442.7" cy="570.7" r="2.9"/><circle cx="575.2" cy="566.6" r="2.9"/><circle cx="574.9" cy="553.7" r="2.9"/><circle cx="403.1" cy="556.8" r="2.9"/><circle cx="298.5" cy="530.4" r="2.9"/><circle cx="170.5" cy="571.6" r="2.9"/><circle cx="569.6" cy="547.6" r="2.9"/><circle cx="126.1" cy="524.5" r="2.9"/><circle cx="148.3" cy="533.0" r="2.9"/><circle cx="437.6" cy="569.4" r="2.9"/><circle cx="385.7" cy="531.4" r="2.9"/><circle cx="138.4" cy="552.0" r="2.9"/><circle cx="342.0" cy="572.2" r="2.9"/><circle cx="448.0" cy="571.7" r="2.9"/><circle cx="266.2" cy="560.1" r="2.9"/><circle cx="261.4" cy="557.0" r="2.9"/><circle cx="599.8" cy="571.5" r="2.9"/><circle cx="237.5" cy="551.3" r="2.9"/><circle cx="334.0" cy="570.5" r="2.9"/><circle cx="410.5" cy="562.6" r="2.9"/><circle cx="497.8" cy="565.7" r="2.9"/><circle cx="231.2" cy="555.0" r="2.9"/><circle cx="357.5" cy="563.5" r="2.9"/><circle cx="478.6" cy="560.7" r="2.9"/><circle cx="606.0" cy="571.8" r="2.9"/><circle cx="266.1" cy="570.8" r="2.9"/><circle cx="460.8" cy="563.8" r="2.9"/><circle cx="200.4" cy="562.4" r="2.9"/><circle cx="633.4" cy="567.9" r="2.9"/><circle cx="539.6" cy="567.9" r="2.9"/><circle cx="349.7" cy="568.1" r="2.9"/><circle cx="391.9" cy="532.8" r="2.9"/><circle cx="474.2" cy="560.0" r="2.9"/><circle cx="684.3" cy="532.2" r="2.9"/><circle cx="270.3" cy="559.6" r="2.9"/><circle cx="177.6" cy="551.8" r="2.9"/><circle cx="312.6" cy="565.1" r="2.9"/><circle cx="633.3" cy="564.7" r="2.9"/><circle cx="260.6" cy="572.3" r="2.9"/><circle cx="457.6" cy="547.7" r="2.9"/><circle cx="695.0" cy="565.9" r="2.9"/><circle cx="430.9" cy="568.0" r="2.9"/><circle cx="644.2" cy="568.1" r="2.9"/><circle cx="716.9" cy="542.9" r="2.9"/><circle cx="671.2" cy="544.4" r="2.9"/><circle cx="411.4" cy="555.3" r="2.9"/><circle cx="330.1" cy="559.0" r="2.9"/><circle cx="146.3" cy="563.4" r="2.9"/><circle cx="539.5" cy="550.0" r="2.9"/><circle cx="666.2" cy="570.5" r="2.9"/><circle cx="519.6" cy="560.8" r="2.9"/><circle cx="435.7" cy="569.6" r="2.9"/><circle cx="267.7" cy="557.9" r="2.9"/><circle cx="626.5" cy="563.7" r="2.9"/><circle cx="141.2" cy="524.9" r="2.9"/><circle cx="307.1" cy="554.9" r="2.9"/><circle cx="478.3" cy="571.4" r="2.9"/><circle cx="187.2" cy="562.1" r="2.9"/><circle cx="314.9" cy="551.8" r="2.9"/><circle cx="539.6" cy="571.8" r="2.9"/><circle cx="190.1" cy="561.6" r="2.9"/><circle cx="486.3" cy="566.3" r="2.9"/><circle cx="316.5" cy="570.1" r="2.9"/><circle cx="304.6" cy="569.9" r="2.9"/><circle cx="453.4" cy="571.8" r="2.9"/><circle cx="173.2" cy="569.7" r="2.9"/><circle cx="527.0" cy="565.8" r="2.9"/><circle cx="91.3" cy="571.6" r="2.9"/><circle cx="450.5" cy="568.8" r="2.9"/><circle cx="670.2" cy="569.7" r="2.9"/><circle cx="386.1" cy="568.1" r="2.9"/><circle cx="470.7" cy="567.2" r="2.9"/><circle cx="501.9" cy="567.8" r="2.9"/><circle cx="319.4" cy="522.8" r="2.9"/><circle cx="536.0" cy="565.5" r="2.9"/><circle cx="149.5" cy="570.2" r="2.9"/><circle cx="498.8" cy="569.0" r="2.9"/><circle cx="706.9" cy="544.0" r="2.9"/><circle cx="374.8" cy="564.3" r="2.9"/><circle cx="269.5" cy="565.8" r="2.9"/><circle cx="284.5" cy="570.0" r="2.9"/><circle cx="554.4" cy="568.6" r="2.9"/><circle cx="94.2" cy="540.6" r="2.9"/><circle cx="613.0" cy="564.5" r="2.9"/><circle cx="620.9" cy="526.1" r="2.9"/><circle cx="339.5" cy="562.7" r="2.9"/><circle cx="306.4" cy="560.7" r="2.9"/><circle cx="458.6" cy="567.8" r="2.9"/><circle cx="102.1" cy="557.5" r="2.9"/><circle cx="399.5" cy="555.8" r="2.9"/><circle cx="330.5" cy="568.8" r="2.9"/><circle cx="501.6" cy="556.5" r="2.9"/><circle cx="399.8" cy="568.7" r="2.9"/><circle cx="549.2" cy="570.4" r="2.9"/><circle cx="692.9" cy="554.6" r="2.9"/><circle cx="606.4" cy="567.8" r="2.9"/><circle cx="281.3" cy="569.8" r="2.9"/><circle cx="391.6" cy="564.1" r="2.9"/><circle cx="358.4" cy="540.6" r="2.9"/><circle cx="441.9" cy="560.3" r="2.9"/><circle cx="340.8" cy="568.1" r="2.9"/><circle cx="415.1" cy="561.9" r="2.9"/><circle cx="470.5" cy="572.0" r="2.9"/><circle cx="91.3" cy="546.4" r="2.9"/><circle cx="456.7" cy="572.3" r="2.9"/><circle cx="93.1" cy="541.5" r="2.9"/><circle cx="642.9" cy="571.2" r="2.9"/><circle cx="689.1" cy="562.9" r="2.9"/><circle cx="390.8" cy="572.0" r="2.9"/><circle cx="291.4" cy="519.2" r="2.9"/><circle cx="638.1" cy="569.2" r="2.9"/><circle cx="402.5" cy="563.1" r="2.9"/><circle cx="324.9" cy="553.9" r="2.9"/><circle cx="163.7" cy="569.8" r="2.9"/><circle cx="117.7" cy="563.5" r="2.9"/><circle cx="374.1" cy="571.5" r="2.9"/><circle cx="235.6" cy="567.3" r="2.9"/><circle cx="681.9" cy="562.7" r="2.9"/><circle cx="550.8" cy="571.6" r="2.9"/><circle cx="527.7" cy="570.1" r="2.9"/><circle cx="444.9" cy="562.8" r="2.9"/><circle cx="88.8" cy="547.1" r="2.9"/><circle cx="394.7" cy="558.1" r="2.9"/><circle cx="544.0" cy="564.7" r="2.9"/><circle cx="461.7" cy="551.3" r="2.9"/><circle cx="363.7" cy="568.6" r="2.9"/><circle cx="291.4" cy="569.9" r="2.9"/><circle cx="658.8" cy="557.0" r="2.9"/><circle cx="375.0" cy="557.9" r="2.9"/><circle cx="644.0" cy="570.3" r="2.9"/><circle cx="264.2" cy="559.6" r="2.9"/><circle cx="288.0" cy="572.3" r="2.9"/><circle cx="310.1" cy="554.5" r="2.9"/><circle cx="514.6" cy="551.3" r="2.9"/><circle cx="211.2" cy="572.1" r="2.9"/><circle cx="463.7" cy="571.2" r="2.9"/><circle cx="407.0" cy="567.7" r="2.9"/><circle cx="288.5" cy="566.6" r="2.9"/><circle cx="481.7" cy="559.0" r="2.9"/><circle cx="572.9" cy="551.0" r="2.9"/><circle cx="260.8" cy="566.4" r="2.9"/><circle cx="560.4" cy="572.2" r="2.9"/><circle cx="710.7" cy="542.8" r="2.9"/><circle cx="380.9" cy="548.4" r="2.9"/><circle cx="91.7" cy="572.3" r="2.9"/><circle cx="241.4" cy="561.1" r="2.9"/><circle cx="165.6" cy="559.9" r="2.9"/><circle cx="685.4" cy="566.8" r="2.9"/><circle cx="250.1" cy="561.2" r="2.9"/><circle cx="245.0" cy="556.6" r="2.9"/><circle cx="699.0" cy="566.5" r="2.9"/><circle cx="311.5" cy="510.7" r="2.9"/><circle cx="276.3" cy="569.4" r="2.9"/><circle cx="137.0" cy="568.0" r="2.9"/><circle cx="375.0" cy="562.5" r="2.9"/><circle cx="162.8" cy="563.0" r="2.9"/><circle cx="728.9" cy="572.5" r="2.9"/><circle cx="674.1" cy="556.3" r="2.9"/><circle cx="545.8" cy="566.7" r="2.9"/><circle cx="473.2" cy="560.2" r="2.9"/><circle cx="185.5" cy="553.6" r="2.9"/><circle cx="301.3" cy="570.0" r="2.9"/><circle cx="435.4" cy="551.7" r="2.9"/><circle cx="154.9" cy="570.1" r="2.9"/><circle cx="709.2" cy="569.3" r="2.9"/><circle cx="278.5" cy="561.1" r="2.9"/><circle cx="449.1" cy="540.9" r="2.9"/><circle cx="504.0" cy="570.9" r="2.9"/><circle cx="199.4" cy="553.8" r="2.9"/><circle cx="131.7" cy="560.3" r="2.9"/><circle cx="648.3" cy="566.9" r="2.9"/><circle cx="96.3" cy="559.4" r="2.9"/><circle cx="192.8" cy="570.7" r="2.9"/><circle cx="708.6" cy="558.1" r="2.9"/><circle cx="526.7" cy="567.7" r="2.9"/><circle cx="257.0" cy="568.6" r="2.9"/><circle cx="692.3" cy="565.5" r="2.9"/><circle cx="488.7" cy="572.5" r="2.9"/><circle cx="84.4" cy="560.8" r="2.9"/><circle cx="139.2" cy="540.8" r="2.9"/><circle cx="689.2" cy="557.2" r="2.9"/><circle cx="298.1" cy="571.5" r="2.9"/><circle cx="574.1" cy="572.1" r="2.9"/><circle cx="708.7" cy="561.8" r="2.9"/><circle cx="346.0" cy="569.5" r="2.9"/><circle cx="598.9" cy="541.9" r="2.9"/><circle cx="703.7" cy="550.6" r="2.9"/><circle cx="398.3" cy="555.0" r="2.9"/><circle cx="429.7" cy="549.4" r="2.9"/><circle cx="486.4" cy="550.5" r="2.9"/><circle cx="620.2" cy="564.6" r="2.9"/><circle cx="175.0" cy="561.8" r="2.9"/><circle cx="121.2" cy="569.2" r="2.9"/><circle cx="390.7" cy="534.6" r="2.9"/><circle cx="485.4" cy="569.7" r="2.9"/><circle cx="376.7" cy="556.5" r="2.9"/><circle cx="88.2" cy="547.2" r="2.9"/><circle cx="399.0" cy="553.3" r="2.9"/><circle cx="251.8" cy="552.0" r="2.9"/><circle cx="140.0" cy="528.0" r="2.9"/><circle cx="504.7" cy="567.3" r="2.9"/><circle cx="577.5" cy="571.3" r="2.9"/><circle cx="180.6" cy="541.5" r="2.9"/><circle cx="549.5" cy="569.0" r="2.9"/><circle cx="666.4" cy="562.6" r="2.9"/><circle cx="234.3" cy="568.1" r="2.9"/><circle cx="460.8" cy="534.2" r="2.9"/><circle cx="310.6" cy="565.0" r="2.9"/><circle cx="675.8" cy="551.9" r="2.9"/><circle cx="322.3" cy="560.6" r="2.9"/><circle cx="226.9" cy="564.9" r="2.9"/><circle cx="436.3" cy="564.0" r="2.9"/><circle cx="680.6" cy="559.3" r="2.9"/><circle cx="694.3" cy="549.9" r="2.9"/><circle cx="724.6" cy="554.5" r="2.9"/><circle cx="669.9" cy="572.3" r="2.9"/><circle cx="722.2" cy="546.3" r="2.9"/><circle cx="255.0" cy="566.0" r="2.9"/><circle cx="353.9" cy="564.6" r="2.9"/><circle cx="264.4" cy="569.8" r="2.9"/><circle cx="229.3" cy="554.9" r="2.9"/><circle cx="298.2" cy="557.4" r="2.9"/><circle cx="196.3" cy="561.2" r="2.9"/><circle cx="683.9" cy="569.3" r="2.9"/><circle cx="237.8" cy="568.4" r="2.9"/><circle cx="471.4" cy="570.9" r="2.9"/><circle cx="534.2" cy="561.2" r="2.9"/><circle cx="201.4" cy="569.5" r="2.9"/><circle cx="729.7" cy="570.2" r="2.9"/><circle cx="180.2" cy="541.3" r="2.9"/><circle cx="669.3" cy="572.0" r="2.9"/><circle cx="293.0" cy="567.9" r="2.9"/><circle cx="131.3" cy="563.9" r="2.9"/><circle cx="271.7" cy="566.4" r="2.9"/><circle cx="446.2" cy="569.6" r="2.9"/><circle cx="413.7" cy="570.6" r="2.9"/><circle cx="692.6" cy="570.7" r="2.9"/><circle cx="479.0" cy="542.7" r="2.9"/><circle cx="271.3" cy="566.3" r="2.9"/><circle cx="287.8" cy="548.7" r="2.9"/><circle cx="186.9" cy="534.8" r="2.9"/><circle cx="177.0" cy="559.6" r="2.9"/><circle cx="248.2" cy="564.1" r="2.9"/><circle cx="152.6" cy="570.5" r="2.9"/><circle cx="612.5" cy="570.5" r="2.9"/><circle cx="580.0" cy="551.4" r="2.9"/><circle cx="714.8" cy="550.6" r="2.9"/><circle cx="707.9" cy="552.5" r="2.9"/><circle cx="249.6" cy="570.0" r="2.9"/><circle cx="151.6" cy="560.8" r="2.9"/><circle cx="688.2" cy="566.0" r="2.9"/><circle cx="320.6" cy="568.1" r="2.9"/><circle cx="687.0" cy="562.6" r="2.9"/><circle cx="484.7" cy="568.3" r="2.9"/><circle cx="680.0" cy="546.4" r="2.9"/><circle cx="112.0" cy="554.2" r="2.9"/><circle cx="525.0" cy="541.5" r="2.9"/><circle cx="268.3" cy="562.8" r="2.9"/></g><g fill="#e8231c" fill-opacity="0.6"><circle cx="335.4" cy="846.1" r="2.9"/><circle cx="181.9" cy="846.7" r="2.9"/><circle cx="203.3" cy="847.8" r="2.9"/><circle cx="338.2" cy="847.9" r="2.9"/><circle cx="324.6" cy="841.9" r="2.9"/><circle cx="137.5" cy="847.5" r="2.9"/><circle cx="335.0" cy="845.6" r="2.9"/><circle cx="539.6" cy="841.7" r="2.9"/><circle cx="148.9" cy="848.1" r="2.9"/><circle cx="708.7" cy="844.7" r="2.9"/><circle cx="205.3" cy="844.6" r="2.9"/><circle cx="225.0" cy="845.1" r="2.9"/><circle cx="584.7" cy="845.8" r="2.9"/><circle cx="530.7" cy="836.3" r="2.9"/><circle cx="133.2" cy="846.8" r="2.9"/><circle cx="521.7" cy="842.7" r="2.9"/><circle cx="574.0" cy="842.3" r="2.9"/><circle cx="455.2" cy="847.5" r="2.9"/><circle cx="674.8" cy="844.3" r="2.9"/><circle cx="313.7" cy="845.8" r="2.9"/><circle cx="675.8" cy="843.9" r="2.9"/><circle cx="466.1" cy="839.4" r="2.9"/><circle cx="521.4" cy="844.6" r="2.9"/><circle cx="662.4" cy="845.5" r="2.9"/><circle cx="678.8" cy="842.1" r="2.9"/><circle cx="534.4" cy="846.7" r="2.9"/><circle cx="630.9" cy="847.8" r="2.9"/><circle cx="685.1" cy="848.1" r="2.9"/><circle cx="282.4" cy="847.4" r="2.9"/><circle cx="203.8" cy="842.1" r="2.9"/><circle cx="391.9" cy="847.4" r="2.9"/><circle cx="565.0" cy="847.6" r="2.9"/><circle cx="94.1" cy="847.6" r="2.9"/><circle cx="461.6" cy="843.1" r="2.9"/><circle cx="335.1" cy="847.8" r="2.9"/><circle cx="212.7" cy="847.7" r="2.9"/><circle cx="371.2" cy="841.6" r="2.9"/><circle cx="244.0" cy="847.5" r="2.9"/><circle cx="530.5" cy="847.9" r="2.9"/><circle cx="542.3" cy="847.2" r="2.9"/><circle cx="620.7" cy="842.7" r="2.9"/><circle cx="563.6" cy="847.7" r="2.9"/><circle cx="170.1" cy="845.1" r="2.9"/><circle cx="469.7" cy="842.7" r="2.9"/><circle cx="241.4" cy="843.7" r="2.9"/><circle cx="660.8" cy="845.5" r="2.9"/><circle cx="674.5" cy="840.3" r="2.9"/><circle cx="100.8" cy="847.7" r="2.9"/><circle cx="678.1" cy="847.2" r="2.9"/><circle cx="169.3" cy="845.8" r="2.9"/><circle cx="704.7" cy="843.5" r="2.9"/><circle cx="482.7" cy="843.3" r="2.9"/><circle cx="400.3" cy="848.1" r="2.9"/><circle cx="449.4" cy="845.9" r="2.9"/><circle cx="112.5" cy="842.3" r="2.9"/><circle cx="500.3" cy="847.9" r="2.9"/><circle cx="441.7" cy="847.0" r="2.9"/><circle cx="532.1" cy="843.7" r="2.9"/><circle cx="453.9" cy="847.9" r="2.9"/><circle cx="576.9" cy="839.7" r="2.9"/><circle cx="220.4" cy="843.9" r="2.9"/><circle cx="242.6" cy="845.5" r="2.9"/><circle cx="163.6" cy="847.4" r="2.9"/><circle cx="666.2" cy="845.2" r="2.9"/><circle cx="648.3" cy="847.4" r="2.9"/><circle cx="568.2" cy="847.6" r="2.9"/><circle cx="669.7" cy="846.2" r="2.9"/><circle cx="298.2" cy="843.1" r="2.9"/><circle cx="628.8" cy="846.0" r="2.9"/><circle cx="577.9" cy="846.2" r="2.9"/><circle cx="453.8" cy="841.5" r="2.9"/><circle cx="332.5" cy="836.0" r="2.9"/><circle cx="557.8" cy="847.3" r="2.9"/><circle cx="352.4" cy="845.7" r="2.9"/><circle cx="635.1" cy="847.3" r="2.9"/><circle cx="146.6" cy="845.7" r="2.9"/><circle cx="568.2" cy="846.8" r="2.9"/><circle cx="369.9" cy="846.0" r="2.9"/><circle cx="536.7" cy="842.9" r="2.9"/><circle cx="619.0" cy="839.9" r="2.9"/><circle cx="151.0" cy="847.8" r="2.9"/><circle cx="202.2" cy="846.5" r="2.9"/><circle cx="697.9" cy="847.5" r="2.9"/><circle cx="496.9" cy="846.3" r="2.9"/><circle cx="362.0" cy="846.4" r="2.9"/><circle cx="587.2" cy="838.6" r="2.9"/><circle cx="714.0" cy="838.7" r="2.9"/><circle cx="209.2" cy="829.7" r="2.9"/><circle cx="353.1" cy="843.1" r="2.9"/><circle cx="380.3" cy="843.5" r="2.9"/><circle cx="489.0" cy="846.6" r="2.9"/><circle cx="314.2" cy="847.6" r="2.9"/><circle cx="300.0" cy="846.9" r="2.9"/><circle cx="410.9" cy="847.5" r="2.9"/><circle cx="723.0" cy="847.2" r="2.9"/><circle cx="714.9" cy="843.9" r="2.9"/><circle cx="310.5" cy="846.7" r="2.9"/><circle cx="513.5" cy="845.5" r="2.9"/><circle cx="705.7" cy="847.9" r="2.9"/><circle cx="315.4" cy="847.2" r="2.9"/><circle cx="230.6" cy="844.5" r="2.9"/><circle cx="459.0" cy="842.3" r="2.9"/><circle cx="725.8" cy="846.8" r="2.9"/><circle cx="84.7" cy="846.8" r="2.9"/><circle cx="380.1" cy="839.1" r="2.9"/><circle cx="402.7" cy="845.1" r="2.9"/><circle cx="544.4" cy="846.8" r="2.9"/><circle cx="373.8" cy="847.9" r="2.9"/><circle cx="572.9" cy="846.3" r="2.9"/><circle cx="168.7" cy="846.5" r="2.9"/><circle cx="677.5" cy="839.1" r="2.9"/><circle cx="729.5" cy="845.5" r="2.9"/><circle cx="381.8" cy="846.6" r="2.9"/><circle cx="125.2" cy="840.9" r="2.9"/><circle cx="460.1" cy="845.3" r="2.9"/><circle cx="396.0" cy="846.8" r="2.9"/><circle cx="562.6" cy="846.5" r="2.9"/><circle cx="153.7" cy="841.8" r="2.9"/><circle cx="515.9" cy="847.6" r="2.9"/><circle cx="310.4" cy="848.0" r="2.9"/><circle cx="665.0" cy="847.1" r="2.9"/><circle cx="602.1" cy="844.5" r="2.9"/><circle cx="234.7" cy="843.7" r="2.9"/><circle cx="437.8" cy="842.5" r="2.9"/><circle cx="155.1" cy="846.3" r="2.9"/><circle cx="489.5" cy="847.1" r="2.9"/><circle cx="389.8" cy="847.2" r="2.9"/><circle cx="166.3" cy="844.5" r="2.9"/><circle cx="279.9" cy="846.6" r="2.9"/><circle cx="123.8" cy="845.5" r="2.9"/><circle cx="301.8" cy="847.8" r="2.9"/><circle cx="601.8" cy="844.5" r="2.9"/><circle cx="272.6" cy="845.6" r="2.9"/><circle cx="124.9" cy="847.5" r="2.9"/><circle cx="188.5" cy="845.7" r="2.9"/><circle cx="191.3" cy="843.6" r="2.9"/><circle cx="112.9" cy="845.1" r="2.9"/><circle cx="650.9" cy="844.5" r="2.9"/><circle cx="499.2" cy="838.0" r="2.9"/><circle cx="585.6" cy="844.5" r="2.9"/><circle cx="699.3" cy="845.0" r="2.9"/><circle cx="474.8" cy="846.2" r="2.9"/><circle cx="164.9" cy="844.4" r="2.9"/><circle cx="696.1" cy="845.6" r="2.9"/><circle cx="606.7" cy="844.2" r="2.9"/><circle cx="402.6" cy="846.8" r="2.9"/><circle cx="453.6" cy="842.1" r="2.9"/><circle cx="398.3" cy="847.4" r="2.9"/><circle cx="396.9" cy="846.9" r="2.9"/><circle cx="618.1" cy="840.3" r="2.9"/><circle cx="111.9" cy="841.8" r="2.9"/><circle cx="170.7" cy="844.0" r="2.9"/><circle cx="639.5" cy="842.4" r="2.9"/><circle cx="328.8" cy="847.4" r="2.9"/><circle cx="674.0" cy="847.3" r="2.9"/><circle cx="565.7" cy="845.8" r="2.9"/><circle cx="136.5" cy="846.1" r="2.9"/><circle cx="523.9" cy="844.9" r="2.9"/><circle cx="586.9" cy="844.9" r="2.9"/><circle cx="531.5" cy="847.3" r="2.9"/><circle cx="651.9" cy="846.9" r="2.9"/><circle cx="140.3" cy="846.4" r="2.9"/><circle cx="100.7" cy="846.5" r="2.9"/><circle cx="705.7" cy="846.8" r="2.9"/><circle cx="592.9" cy="845.2" r="2.9"/><circle cx="171.7" cy="845.7" r="2.9"/><circle cx="473.6" cy="837.2" r="2.9"/><circle cx="415.3" cy="838.9" r="2.9"/><circle cx="580.2" cy="838.5" r="2.9"/><circle cx="304.9" cy="845.1" r="2.9"/><circle cx="272.2" cy="845.8" r="2.9"/><circle cx="396.9" cy="845.6" r="2.9"/><circle cx="457.8" cy="836.8" r="2.9"/><circle cx="126.5" cy="847.9" r="2.9"/><circle cx="713.4" cy="841.8" r="2.9"/><circle cx="375.1" cy="840.5" r="2.9"/><circle cx="703.0" cy="844.8" r="2.9"/><circle cx="148.1" cy="833.8" r="2.9"/><circle cx="532.0" cy="841.8" r="2.9"/><circle cx="426.1" cy="847.0" r="2.9"/><circle cx="115.9" cy="844.8" r="2.9"/><circle cx="671.7" cy="841.5" r="2.9"/><circle cx="436.6" cy="845.6" r="2.9"/><circle cx="305.2" cy="848.0" r="2.9"/><circle cx="240.3" cy="846.2" r="2.9"/><circle cx="455.8" cy="847.2" r="2.9"/><circle cx="617.8" cy="848.0" r="2.9"/><circle cx="708.1" cy="842.4" r="2.9"/><circle cx="390.4" cy="846.4" r="2.9"/><circle cx="127.8" cy="846.8" r="2.9"/><circle cx="203.8" cy="847.6" r="2.9"/><circle cx="169.5" cy="842.5" r="2.9"/><circle cx="630.1" cy="845.0" r="2.9"/><circle cx="401.7" cy="846.2" r="2.9"/><circle cx="478.0" cy="843.1" r="2.9"/><circle cx="239.4" cy="845.8" r="2.9"/><circle cx="636.5" cy="834.6" r="2.9"/><circle cx="411.8" cy="842.5" r="2.9"/><circle cx="238.8" cy="840.6" r="2.9"/><circle cx="664.6" cy="848.0" r="2.9"/><circle cx="352.1" cy="847.2" r="2.9"/><circle cx="313.5" cy="847.2" r="2.9"/><circle cx="354.6" cy="842.0" r="2.9"/><circle cx="168.9" cy="846.2" r="2.9"/><circle cx="496.1" cy="845.1" r="2.9"/><circle cx="345.2" cy="848.0" r="2.9"/><circle cx="235.6" cy="847.2" r="2.9"/><circle cx="286.7" cy="837.7" r="2.9"/><circle cx="613.9" cy="842.8" r="2.9"/><circle cx="721.0" cy="836.9" r="2.9"/><circle cx="628.2" cy="845.0" r="2.9"/><circle cx="710.2" cy="847.4" r="2.9"/><circle cx="525.9" cy="847.5" r="2.9"/><circle cx="539.2" cy="845.5" r="2.9"/><circle cx="211.2" cy="846.0" r="2.9"/><circle cx="413.7" cy="847.8" r="2.9"/><circle cx="528.6" cy="834.9" r="2.9"/><circle cx="414.5" cy="845.5" r="2.9"/><circle cx="111.8" cy="847.2" r="2.9"/><circle cx="216.2" cy="847.9" r="2.9"/><circle cx="592.3" cy="845.5" r="2.9"/><circle cx="493.9" cy="843.1" r="2.9"/><circle cx="204.8" cy="847.5" r="2.9"/><circle cx="673.3" cy="843.5" r="2.9"/><circle cx="126.6" cy="834.5" r="2.9"/><circle cx="379.1" cy="838.2" r="2.9"/><circle cx="542.4" cy="838.6" r="2.9"/><circle cx="353.9" cy="847.7" r="2.9"/><circle cx="168.2" cy="847.0" r="2.9"/><circle cx="529.2" cy="842.8" r="2.9"/><circle cx="564.9" cy="845.5" r="2.9"/><circle cx="442.0" cy="848.0" r="2.9"/><circle cx="623.2" cy="848.0" r="2.9"/><circle cx="227.1" cy="840.1" r="2.9"/><circle cx="409.2" cy="846.9" r="2.9"/><circle cx="630.1" cy="846.6" r="2.9"/><circle cx="321.4" cy="840.1" r="2.9"/><circle cx="365.1" cy="844.5" r="2.9"/><circle cx="122.4" cy="840.9" r="2.9"/><circle cx="164.0" cy="847.5" r="2.9"/><circle cx="226.2" cy="843.1" r="2.9"/><circle cx="679.9" cy="847.6" r="2.9"/><circle cx="547.0" cy="844.9" r="2.9"/><circle cx="387.5" cy="842.3" r="2.9"/><circle cx="581.8" cy="845.3" r="2.9"/><circle cx="653.4" cy="847.5" r="2.9"/><circle cx="538.7" cy="847.6" r="2.9"/><circle cx="283.9" cy="844.0" r="2.9"/><circle cx="165.7" cy="844.4" r="2.9"/><circle cx="127.8" cy="847.5" r="2.9"/><circle cx="322.7" cy="847.3" r="2.9"/><circle cx="157.3" cy="847.9" r="2.9"/><circle cx="686.9" cy="845.8" r="2.9"/><circle cx="105.8" cy="844.0" r="2.9"/><circle cx="519.3" cy="838.3" r="2.9"/><circle cx="677.4" cy="847.8" r="2.9"/><circle cx="312.5" cy="847.9" r="2.9"/><circle cx="426.0" cy="842.1" r="2.9"/><circle cx="561.9" cy="842.3" r="2.9"/><circle cx="322.2" cy="844.7" r="2.9"/><circle cx="319.0" cy="841.8" r="2.9"/><circle cx="279.3" cy="848.0" r="2.9"/><circle cx="382.4" cy="848.0" r="2.9"/><circle cx="110.8" cy="843.0" r="2.9"/><circle cx="533.7" cy="845.3" r="2.9"/><circle cx="356.0" cy="846.1" r="2.9"/><circle cx="133.4" cy="846.1" r="2.9"/><circle cx="458.0" cy="844.4" r="2.9"/><circle cx="393.7" cy="843.8" r="2.9"/><circle cx="121.9" cy="847.9" r="2.9"/><circle cx="372.8" cy="844.6" r="2.9"/><circle cx="660.1" cy="841.2" r="2.9"/><circle cx="617.8" cy="844.3" r="2.9"/><circle cx="505.6" cy="847.9" r="2.9"/><circle cx="279.2" cy="846.6" r="2.9"/><circle cx="190.5" cy="847.6" r="2.9"/><circle cx="133.4" cy="846.6" r="2.9"/><circle cx="380.7" cy="843.3" r="2.9"/><circle cx="310.0" cy="847.9" r="2.9"/><circle cx="206.8" cy="846.4" r="2.9"/><circle cx="586.3" cy="847.7" r="2.9"/><circle cx="733.3" cy="843.2" r="2.9"/><circle cx="145.9" cy="846.4" r="2.9"/><circle cx="544.9" cy="844.1" r="2.9"/><circle cx="557.1" cy="845.8" r="2.9"/><circle cx="409.3" cy="847.4" r="2.9"/><circle cx="446.1" cy="841.9" r="2.9"/><circle cx="598.4" cy="847.6" r="2.9"/><circle cx="205.9" cy="846.3" r="2.9"/><circle cx="579.1" cy="843.0" r="2.9"/><circle cx="134.3" cy="841.8" r="2.9"/><circle cx="521.8" cy="847.6" r="2.9"/><circle cx="723.5" cy="845.6" r="2.9"/><circle cx="508.3" cy="844.0" r="2.9"/><circle cx="126.3" cy="847.1" r="2.9"/><circle cx="466.9" cy="843.8" r="2.9"/><circle cx="679.1" cy="846.7" r="2.9"/><circle cx="309.5" cy="846.3" r="2.9"/><circle cx="93.1" cy="845.8" r="2.9"/><circle cx="169.2" cy="845.4" r="2.9"/><circle cx="486.3" cy="847.1" r="2.9"/><circle cx="706.6" cy="847.5" r="2.9"/><circle cx="290.7" cy="846.4" r="2.9"/><circle cx="612.1" cy="841.8" r="2.9"/><circle cx="695.0" cy="846.6" r="2.9"/><circle cx="500.8" cy="845.5" r="2.9"/><circle cx="104.0" cy="845.0" r="2.9"/><circle cx="473.9" cy="847.9" r="2.9"/><circle cx="544.5" cy="847.6" r="2.9"/><circle cx="93.4" cy="839.9" r="2.9"/><circle cx="712.3" cy="845.8" r="2.9"/><circle cx="395.9" cy="847.8" r="2.9"/><circle cx="632.5" cy="846.5" r="2.9"/><circle cx="529.6" cy="844.5" r="2.9"/><circle cx="418.9" cy="844.8" r="2.9"/><circle cx="396.2" cy="847.0" r="2.9"/><circle cx="598.6" cy="844.4" r="2.9"/><circle cx="475.5" cy="834.6" r="2.9"/><circle cx="446.0" cy="847.0" r="2.9"/><circle cx="315.2" cy="847.3" r="2.9"/><circle cx="351.4" cy="845.6" r="2.9"/><circle cx="599.1" cy="838.1" r="2.9"/><circle cx="570.5" cy="840.0" r="2.9"/><circle cx="696.9" cy="842.7" r="2.9"/><circle cx="682.0" cy="846.6" r="2.9"/><circle cx="415.1" cy="833.4" r="2.9"/><circle cx="698.6" cy="847.5" r="2.9"/><circle cx="461.5" cy="847.2" r="2.9"/><circle cx="104.6" cy="846.0" r="2.9"/><circle cx="158.6" cy="841.8" r="2.9"/><circle cx="135.5" cy="841.1" r="2.9"/><circle cx="666.2" cy="844.3" r="2.9"/><circle cx="275.1" cy="846.2" r="2.9"/><circle cx="188.8" cy="846.6" r="2.9"/><circle cx="500.6" cy="846.4" r="2.9"/><circle cx="471.3" cy="847.7" r="2.9"/><circle cx="510.5" cy="843.3" r="2.9"/><circle cx="700.6" cy="846.6" r="2.9"/><circle cx="382.5" cy="847.8" r="2.9"/><circle cx="559.0" cy="847.2" r="2.9"/><circle cx="115.3" cy="844.8" r="2.9"/><circle cx="369.9" cy="843.9" r="2.9"/><circle cx="273.1" cy="846.2" r="2.9"/><circle cx="651.0" cy="842.0" r="2.9"/><circle cx="183.4" cy="841.1" r="2.9"/><circle cx="310.6" cy="836.2" r="2.9"/><circle cx="216.7" cy="842.5" r="2.9"/><circle cx="565.0" cy="834.8" r="2.9"/><circle cx="651.0" cy="844.5" r="2.9"/><circle cx="636.9" cy="846.0" r="2.9"/><circle cx="601.0" cy="844.4" r="2.9"/><circle cx="431.3" cy="847.2" r="2.9"/><circle cx="353.6" cy="847.7" r="2.9"/><circle cx="168.3" cy="842.1" r="2.9"/><circle cx="517.0" cy="847.9" r="2.9"/><circle cx="180.6" cy="843.9" r="2.9"/><circle cx="156.1" cy="844.4" r="2.9"/><circle cx="321.9" cy="844.1" r="2.9"/><circle cx="375.1" cy="847.5" r="2.9"/><circle cx="414.7" cy="843.8" r="2.9"/><circle cx="566.5" cy="846.1" r="2.9"/><circle cx="439.0" cy="847.9" r="2.9"/><circle cx="109.5" cy="844.6" r="2.9"/><circle cx="604.6" cy="844.9" r="2.9"/><circle cx="283.7" cy="843.6" r="2.9"/><circle cx="528.5" cy="848.0" r="2.9"/><circle cx="510.5" cy="847.3" r="2.9"/><circle cx="426.9" cy="843.1" r="2.9"/><circle cx="328.6" cy="844.4" r="2.9"/><circle cx="325.2" cy="845.0" r="2.9"/><circle cx="148.9" cy="847.7" r="2.9"/><circle cx="456.5" cy="847.6" r="2.9"/><circle cx="576.3" cy="845.5" r="2.9"/><circle cx="354.8" cy="845.0" r="2.9"/><circle cx="318.7" cy="843.4" r="2.9"/><circle cx="87.5" cy="843.3" r="2.9"/><circle cx="706.7" cy="847.1" r="2.9"/><circle cx="474.7" cy="847.9" r="2.9"/><circle cx="455.3" cy="846.8" r="2.9"/><circle cx="390.2" cy="847.3" r="2.9"/><circle cx="111.4" cy="847.3" r="2.9"/><circle cx="186.6" cy="847.2" r="2.9"/><circle cx="608.6" cy="843.9" r="2.9"/><circle cx="181.8" cy="847.9" r="2.9"/><circle cx="466.3" cy="847.2" r="2.9"/><circle cx="448.5" cy="847.9" r="2.9"/><circle cx="97.9" cy="847.7" r="2.9"/><circle cx="305.5" cy="838.7" r="2.9"/><circle cx="726.0" cy="843.0" r="2.9"/><circle cx="273.8" cy="844.5" r="2.9"/><circle cx="87.3" cy="844.1" r="2.9"/><circle cx="85.1" cy="847.7" r="2.9"/><circle cx="573.5" cy="848.0" r="2.9"/><circle cx="326.5" cy="844.0" r="2.9"/><circle cx="386.6" cy="847.3" r="2.9"/><circle cx="385.6" cy="847.7" r="2.9"/><circle cx="338.6" cy="842.7" r="2.9"/><circle cx="608.2" cy="847.6" r="2.9"/><circle cx="181.0" cy="843.8" r="2.9"/><circle cx="228.1" cy="841.5" r="2.9"/><circle cx="286.5" cy="843.9" r="2.9"/><circle cx="484.1" cy="846.0" r="2.9"/><circle cx="137.8" cy="845.9" r="2.9"/><circle cx="143.0" cy="839.6" r="2.9"/><circle cx="196.1" cy="846.9" r="2.9"/><circle cx="484.1" cy="846.4" r="2.9"/><circle cx="140.2" cy="843.1" r="2.9"/><circle cx="88.0" cy="847.8" r="2.9"/><circle cx="111.8" cy="843.9" r="2.9"/><circle cx="293.4" cy="843.6" r="2.9"/><circle cx="304.6" cy="844.9" r="2.9"/><circle cx="323.6" cy="847.1" r="2.9"/><circle cx="581.4" cy="847.0" r="2.9"/><circle cx="310.9" cy="840.0" r="2.9"/><circle cx="600.9" cy="847.4" r="2.9"/><circle cx="501.1" cy="844.6" r="2.9"/><circle cx="487.7" cy="844.0" r="2.9"/><circle cx="710.8" cy="847.8" r="2.9"/><circle cx="172.5" cy="847.3" r="2.9"/><circle cx="184.2" cy="842.6" r="2.9"/><circle cx="482.0" cy="847.5" r="2.9"/><circle cx="573.3" cy="844.7" r="2.9"/><circle cx="733.7" cy="843.8" r="2.9"/><circle cx="429.6" cy="846.4" r="2.9"/><circle cx="198.3" cy="843.2" r="2.9"/><circle cx="687.9" cy="847.3" r="2.9"/><circle cx="333.6" cy="847.1" r="2.9"/><circle cx="290.1" cy="847.8" r="2.9"/><circle cx="119.4" cy="846.5" r="2.9"/><circle cx="215.1" cy="841.7" r="2.9"/><circle cx="688.6" cy="846.7" r="2.9"/><circle cx="413.8" cy="846.3" r="2.9"/><circle cx="694.6" cy="842.9" r="2.9"/><circle cx="436.4" cy="846.4" r="2.9"/><circle cx="708.3" cy="841.5" r="2.9"/><circle cx="653.9" cy="848.1" r="2.9"/><circle cx="486.1" cy="846.8" r="2.9"/><circle cx="274.7" cy="844.0" r="2.9"/><circle cx="105.2" cy="846.5" r="2.9"/><circle cx="216.3" cy="847.7" r="2.9"/><circle cx="487.3" cy="847.7" r="2.9"/><circle cx="429.0" cy="842.5" r="2.9"/><circle cx="341.0" cy="846.9" r="2.9"/><circle cx="113.2" cy="846.1" r="2.9"/><circle cx="491.6" cy="847.5" r="2.9"/><circle cx="494.6" cy="846.2" r="2.9"/><circle cx="635.8" cy="839.6" r="2.9"/><circle cx="542.9" cy="846.5" r="2.9"/><circle cx="616.0" cy="846.4" r="2.9"/><circle cx="231.0" cy="844.5" r="2.9"/><circle cx="343.3" cy="847.7" r="2.9"/><circle cx="394.8" cy="846.0" r="2.9"/><circle cx="536.2" cy="847.6" r="2.9"/><circle cx="677.4" cy="843.5" r="2.9"/><circle cx="308.9" cy="841.7" r="2.9"/><circle cx="573.6" cy="844.4" r="2.9"/><circle cx="731.5" cy="843.8" r="2.9"/><circle cx="462.9" cy="846.4" r="2.9"/><circle cx="170.1" cy="841.5" r="2.9"/><circle cx="423.5" cy="843.2" r="2.9"/><circle cx="647.3" cy="847.6" r="2.9"/><circle cx="122.6" cy="846.7" r="2.9"/><circle cx="614.1" cy="846.8" r="2.9"/><circle cx="190.3" cy="847.5" r="2.9"/><circle cx="571.6" cy="844.6" r="2.9"/><circle cx="486.3" cy="845.4" r="2.9"/><circle cx="488.9" cy="847.1" r="2.9"/><circle cx="319.9" cy="836.8" r="2.9"/><circle cx="85.5" cy="840.9" r="2.9"/><circle cx="686.3" cy="846.3" r="2.9"/><circle cx="731.4" cy="847.4" r="2.9"/><circle cx="213.6" cy="845.5" r="2.9"/><circle cx="542.9" cy="847.5" r="2.9"/><circle cx="670.9" cy="844.7" r="2.9"/><circle cx="131.3" cy="847.1" r="2.9"/><circle cx="486.7" cy="843.8" r="2.9"/><circle cx="371.8" cy="847.2" r="2.9"/><circle cx="403.0" cy="847.8" r="2.9"/><circle cx="367.7" cy="841.8" r="2.9"/><circle cx="285.5" cy="840.9" r="2.9"/><circle cx="139.8" cy="841.5" r="2.9"/><circle cx="273.8" cy="844.2" r="2.9"/><circle cx="435.5" cy="841.2" r="2.9"/><circle cx="357.3" cy="846.1" r="2.9"/><circle cx="347.3" cy="837.5" r="2.9"/><circle cx="424.3" cy="847.3" r="2.9"/><circle cx="722.5" cy="844.1" r="2.9"/><circle cx="475.7" cy="840.3" r="2.9"/><circle cx="283.4" cy="830.5" r="2.9"/><circle cx="505.4" cy="837.2" r="2.9"/><circle cx="720.4" cy="846.2" r="2.9"/><circle cx="225.7" cy="844.2" r="2.9"/><circle cx="418.2" cy="848.1" r="2.9"/><circle cx="369.2" cy="844.3" r="2.9"/><circle cx="594.2" cy="841.9" r="2.9"/><circle cx="421.1" cy="847.4" r="2.9"/><circle cx="498.9" cy="839.9" r="2.9"/><circle cx="288.4" cy="847.8" r="2.9"/><circle cx="478.9" cy="847.3" r="2.9"/><circle cx="730.7" cy="831.6" r="2.9"/><circle cx="590.9" cy="843.7" r="2.9"/><circle cx="202.5" cy="848.0" r="2.9"/><circle cx="531.9" cy="844.7" r="2.9"/><circle cx="511.5" cy="846.1" r="2.9"/><circle cx="507.9" cy="847.3" r="2.9"/><circle cx="710.2" cy="840.5" r="2.9"/><circle cx="361.6" cy="844.7" r="2.9"/><circle cx="416.3" cy="846.8" r="2.9"/><circle cx="653.5" cy="846.0" r="2.9"/><circle cx="679.9" cy="840.6" r="2.9"/><circle cx="308.3" cy="842.9" r="2.9"/><circle cx="159.7" cy="846.7" r="2.9"/><circle cx="484.3" cy="836.1" r="2.9"/><circle cx="467.7" cy="847.5" r="2.9"/><circle cx="159.0" cy="846.4" r="2.9"/><circle cx="362.4" cy="847.3" r="2.9"/><circle cx="564.3" cy="846.8" r="2.9"/><circle cx="557.5" cy="842.0" r="2.9"/><circle cx="97.3" cy="844.9" r="2.9"/><circle cx="500.3" cy="845.3" r="2.9"/><circle cx="658.3" cy="842.2" r="2.9"/><circle cx="473.6" cy="847.1" r="2.9"/><circle cx="223.1" cy="842.0" r="2.9"/><circle cx="293.9" cy="842.6" r="2.9"/><circle cx="108.6" cy="847.1" r="2.9"/><circle cx="361.5" cy="838.6" r="2.9"/><circle cx="171.4" cy="847.1" r="2.9"/><circle cx="350.1" cy="847.8" r="2.9"/><circle cx="96.2" cy="847.9" r="2.9"/><circle cx="531.5" cy="841.6" r="2.9"/><circle cx="430.5" cy="841.5" r="2.9"/><circle cx="326.4" cy="846.8" r="2.9"/><circle cx="235.9" cy="848.0" r="2.9"/><circle cx="598.7" cy="844.7" r="2.9"/><circle cx="450.3" cy="843.5" r="2.9"/><circle cx="375.2" cy="847.6" r="2.9"/><circle cx="217.2" cy="843.7" r="2.9"/><circle cx="632.2" cy="844.6" r="2.9"/><circle cx="510.5" cy="844.1" r="2.9"/><circle cx="400.8" cy="847.1" r="2.9"/><circle cx="319.3" cy="845.1" r="2.9"/><circle cx="399.8" cy="847.5" r="2.9"/><circle cx="207.0" cy="844.0" r="2.9"/><circle cx="242.8" cy="846.5" r="2.9"/><circle cx="117.0" cy="843.3" r="2.9"/><circle cx="283.5" cy="845.4" r="2.9"/><circle cx="279.3" cy="844.3" r="2.9"/><circle cx="391.3" cy="847.8" r="2.9"/><circle cx="437.0" cy="847.6" r="2.9"/><circle cx="386.0" cy="838.9" r="2.9"/><circle cx="98.5" cy="847.8" r="2.9"/><circle cx="535.9" cy="841.7" r="2.9"/><circle cx="191.3" cy="845.0" r="2.9"/><circle cx="333.4" cy="844.9" r="2.9"/><circle cx="638.9" cy="844.8" r="2.9"/><circle cx="666.9" cy="846.6" r="2.9"/><circle cx="621.4" cy="847.8" r="2.9"/><circle cx="699.7" cy="847.5" r="2.9"/><circle cx="680.6" cy="847.9" r="2.9"/><circle cx="198.6" cy="844.5" r="2.9"/><circle cx="682.4" cy="846.8" r="2.9"/><circle cx="642.2" cy="845.7" r="2.9"/><circle cx="585.1" cy="838.5" r="2.9"/><circle cx="592.1" cy="844.8" r="2.9"/><circle cx="566.0" cy="847.7" r="2.9"/><circle cx="168.2" cy="846.7" r="2.9"/><circle cx="657.9" cy="843.2" r="2.9"/><circle cx="214.8" cy="845.4" r="2.9"/><circle cx="559.3" cy="845.2" r="2.9"/><circle cx="536.9" cy="846.0" r="2.9"/><circle cx="646.8" cy="837.1" r="2.9"/><circle cx="228.8" cy="840.2" r="2.9"/><circle cx="664.7" cy="843.9" r="2.9"/><circle cx="573.1" cy="845.0" r="2.9"/><circle cx="521.8" cy="846.7" r="2.9"/><circle cx="403.7" cy="842.7" r="2.9"/><circle cx="296.5" cy="842.6" r="2.9"/><circle cx="333.2" cy="846.5" r="2.9"/><circle cx="148.7" cy="847.5" r="2.9"/><circle cx="379.5" cy="846.5" r="2.9"/><circle cx="363.3" cy="844.6" r="2.9"/><circle cx="452.7" cy="847.2" r="2.9"/><circle cx="230.7" cy="847.6" r="2.9"/><circle cx="138.6" cy="845.5" r="2.9"/><circle cx="505.0" cy="836.6" r="2.9"/><circle cx="482.1" cy="842.8" r="2.9"/><circle cx="691.3" cy="846.3" r="2.9"/><circle cx="687.8" cy="846.7" r="2.9"/><circle cx="473.0" cy="844.9" r="2.9"/><circle cx="548.8" cy="841.4" r="2.9"/><circle cx="272.2" cy="840.1" r="2.9"/><circle cx="93.6" cy="847.8" r="2.9"/><circle cx="490.2" cy="846.2" r="2.9"/><circle cx="553.6" cy="847.8" r="2.9"/><circle cx="691.4" cy="837.6" r="2.9"/><circle cx="540.3" cy="840.7" r="2.9"/><circle cx="347.5" cy="841.3" r="2.9"/><circle cx="569.1" cy="846.0" r="2.9"/><circle cx="130.5" cy="842.3" r="2.9"/><circle cx="593.8" cy="847.0" r="2.9"/><circle cx="163.3" cy="843.2" r="2.9"/><circle cx="731.3" cy="843.8" r="2.9"/><circle cx="319.0" cy="845.4" r="2.9"/><circle cx="663.3" cy="847.0" r="2.9"/><circle cx="502.4" cy="847.0" r="2.9"/><circle cx="632.2" cy="846.0" r="2.9"/><circle cx="148.3" cy="847.1" r="2.9"/><circle cx="95.2" cy="845.6" r="2.9"/><circle cx="657.1" cy="845.6" r="2.9"/><circle cx="129.0" cy="846.9" r="2.9"/><circle cx="647.9" cy="846.9" r="2.9"/><circle cx="233.2" cy="845.8" r="2.9"/><circle cx="572.8" cy="845.1" r="2.9"/><circle cx="525.9" cy="846.7" r="2.9"/><circle cx="206.1" cy="844.9" r="2.9"/><circle cx="327.3" cy="846.6" r="2.9"/><circle cx="154.1" cy="844.6" r="2.9"/><circle cx="178.3" cy="847.9" r="2.9"/><circle cx="207.0" cy="847.2" r="2.9"/><circle cx="284.7" cy="847.1" r="2.9"/><circle cx="568.0" cy="847.0" r="2.9"/><circle cx="431.8" cy="843.0" r="2.9"/><circle cx="641.4" cy="846.3" r="2.9"/><circle cx="287.1" cy="847.8" r="2.9"/><circle cx="679.5" cy="847.9" r="2.9"/><circle cx="89.2" cy="847.7" r="2.9"/><circle cx="312.8" cy="846.1" r="2.9"/><circle cx="459.8" cy="846.0" r="2.9"/><circle cx="117.7" cy="839.4" r="2.9"/><circle cx="648.0" cy="847.7" r="2.9"/><circle cx="600.6" cy="847.7" r="2.9"/><circle cx="287.5" cy="840.0" r="2.9"/><circle cx="175.1" cy="842.0" r="2.9"/><circle cx="505.6" cy="840.2" r="2.9"/><circle cx="391.1" cy="844.7" r="2.9"/><circle cx="277.6" cy="846.0" r="2.9"/><circle cx="186.4" cy="844.0" r="2.9"/><circle cx="127.9" cy="836.5" r="2.9"/><circle cx="411.8" cy="839.4" r="2.9"/><circle cx="402.3" cy="847.4" r="2.9"/><circle cx="647.9" cy="841.9" r="2.9"/><circle cx="632.0" cy="836.6" r="2.9"/><circle cx="426.2" cy="845.3" r="2.9"/><circle cx="119.2" cy="841.7" r="2.9"/><circle cx="425.2" cy="847.7" r="2.9"/><circle cx="150.0" cy="846.7" r="2.9"/><circle cx="100.8" cy="837.9" r="2.9"/><circle cx="735.2" cy="847.1" r="2.9"/><circle cx="192.4" cy="845.8" r="2.9"/><circle cx="645.1" cy="846.1" r="2.9"/><circle cx="457.1" cy="846.2" r="2.9"/><circle cx="302.0" cy="845.0" r="2.9"/><circle cx="221.3" cy="846.2" r="2.9"/><circle cx="667.0" cy="847.0" r="2.9"/><circle cx="434.9" cy="840.7" r="2.9"/><circle cx="309.4" cy="847.9" r="2.9"/><circle cx="571.6" cy="847.2" r="2.9"/><circle cx="645.9" cy="846.6" r="2.9"/><circle cx="550.4" cy="844.9" r="2.9"/><circle cx="462.1" cy="842.5" r="2.9"/><circle cx="603.8" cy="847.3" r="2.9"/><circle cx="147.3" cy="846.2" r="2.9"/><circle cx="502.8" cy="840.7" r="2.9"/><circle cx="293.1" cy="841.2" r="2.9"/><circle cx="309.9" cy="843.8" r="2.9"/><circle cx="682.8" cy="845.9" r="2.9"/><circle cx="297.4" cy="845.8" r="2.9"/><circle cx="379.2" cy="846.7" r="2.9"/><circle cx="705.5" cy="843.6" r="2.9"/><circle cx="164.8" cy="837.0" r="2.9"/><circle cx="708.4" cy="838.6" r="2.9"/><circle cx="102.4" cy="847.5" r="2.9"/><circle cx="495.5" cy="843.9" r="2.9"/><circle cx="619.9" cy="845.9" r="2.9"/><circle cx="580.2" cy="847.0" r="2.9"/><circle cx="354.5" cy="846.8" r="2.9"/><circle cx="709.9" cy="848.0" r="2.9"/><circle cx="152.9" cy="840.6" r="2.9"/><circle cx="698.9" cy="840.6" r="2.9"/><circle cx="457.6" cy="846.1" r="2.9"/><circle cx="519.1" cy="847.0" r="2.9"/><circle cx="114.0" cy="846.4" r="2.9"/><circle cx="174.3" cy="838.8" r="2.9"/><circle cx="598.4" cy="845.4" r="2.9"/><circle cx="181.5" cy="847.0" r="2.9"/><circle cx="650.9" cy="840.4" r="2.9"/><circle cx="173.9" cy="847.8" r="2.9"/><circle cx="613.4" cy="842.3" r="2.9"/><circle cx="177.3" cy="846.1" r="2.9"/><circle cx="190.2" cy="842.9" r="2.9"/><circle cx="561.4" cy="843.2" r="2.9"/><circle cx="489.5" cy="846.5" r="2.9"/><circle cx="433.9" cy="839.4" r="2.9"/><circle cx="358.8" cy="842.6" r="2.9"/><circle cx="283.2" cy="847.5" r="2.9"/><circle cx="728.6" cy="845.4" r="2.9"/><circle cx="647.7" cy="845.2" r="2.9"/><circle cx="534.2" cy="847.8" r="2.9"/><circle cx="504.2" cy="846.3" r="2.9"/><circle cx="365.5" cy="845.6" r="2.9"/><circle cx="192.1" cy="846.4" r="2.9"/><circle cx="538.6" cy="848.1" r="2.9"/><circle cx="471.5" cy="846.8" r="2.9"/><circle cx="349.5" cy="843.1" r="2.9"/><circle cx="390.5" cy="844.9" r="2.9"/><circle cx="420.7" cy="847.5" r="2.9"/><circle cx="357.4" cy="847.5" r="2.9"/><circle cx="616.8" cy="846.7" r="2.9"/><circle cx="565.8" cy="846.9" r="2.9"/><circle cx="235.7" cy="847.2" r="2.9"/><circle cx="275.7" cy="847.8" r="2.9"/><circle cx="567.8" cy="844.0" r="2.9"/><circle cx="327.4" cy="846.2" r="2.9"/><circle cx="330.8" cy="836.2" r="2.9"/><circle cx="685.0" cy="843.2" r="2.9"/><circle cx="273.8" cy="845.5" r="2.9"/><circle cx="343.0" cy="846.0" r="2.9"/><circle cx="677.9" cy="845.2" r="2.9"/><circle cx="232.2" cy="846.6" r="2.9"/><circle cx="666.1" cy="847.8" r="2.9"/><circle cx="202.0" cy="846.9" r="2.9"/><circle cx="122.5" cy="848.0" r="2.9"/><circle cx="286.7" cy="845.6" r="2.9"/><circle cx="569.6" cy="844.7" r="2.9"/><circle cx="113.4" cy="844.5" r="2.9"/><circle cx="510.3" cy="846.7" r="2.9"/><circle cx="240.4" cy="845.3" r="2.9"/><circle cx="229.8" cy="846.1" r="2.9"/><circle cx="107.7" cy="844.5" r="2.9"/><circle cx="717.1" cy="847.6" r="2.9"/><circle cx="476.6" cy="847.6" r="2.9"/><circle cx="588.8" cy="844.9" r="2.9"/><circle cx="473.2" cy="847.9" r="2.9"/><circle cx="343.8" cy="846.6" r="2.9"/><circle cx="421.9" cy="847.9" r="2.9"/><circle cx="588.3" cy="845.4" r="2.9"/><circle cx="476.2" cy="846.1" r="2.9"/><circle cx="654.8" cy="847.1" r="2.9"/><circle cx="89.9" cy="840.1" r="2.9"/><circle cx="498.3" cy="847.7" r="2.9"/><circle cx="358.9" cy="840.6" r="2.9"/><circle cx="723.0" cy="846.2" r="2.9"/><circle cx="621.3" cy="847.8" r="2.9"/><circle cx="401.3" cy="847.4" r="2.9"/><circle cx="204.6" cy="846.5" r="2.9"/><circle cx="142.4" cy="835.8" r="2.9"/><circle cx="148.5" cy="845.4" r="2.9"/><circle cx="184.6" cy="843.2" r="2.9"/><circle cx="232.2" cy="846.4" r="2.9"/><circle cx="482.9" cy="845.6" r="2.9"/><circle cx="463.4" cy="842.9" r="2.9"/><circle cx="556.2" cy="845.3" r="2.9"/><circle cx="462.4" cy="847.7" r="2.9"/><circle cx="335.9" cy="845.8" r="2.9"/><circle cx="415.9" cy="839.1" r="2.9"/><circle cx="490.0" cy="841.5" r="2.9"/><circle cx="158.9" cy="840.9" r="2.9"/><circle cx="307.1" cy="844.2" r="2.9"/><circle cx="697.9" cy="837.1" r="2.9"/><circle cx="521.9" cy="847.0" r="2.9"/><circle cx="464.9" cy="842.0" r="2.9"/><circle cx="351.5" cy="844.9" r="2.9"/><circle cx="363.5" cy="835.6" r="2.9"/><circle cx="384.9" cy="843.1" r="2.9"/><circle cx="726.9" cy="846.1" r="2.9"/><circle cx="239.3" cy="845.8" r="2.9"/><circle cx="334.3" cy="846.0" r="2.9"/><circle cx="306.2" cy="839.6" r="2.9"/><circle cx="582.4" cy="842.8" r="2.9"/><circle cx="418.7" cy="845.3" r="2.9"/><circle cx="456.3" cy="844.2" r="2.9"/><circle cx="565.9" cy="847.3" r="2.9"/><circle cx="665.7" cy="845.9" r="2.9"/><circle cx="549.4" cy="845.5" r="2.9"/><circle cx="597.0" cy="845.4" r="2.9"/><circle cx="699.7" cy="843.5" r="2.9"/><circle cx="674.3" cy="844.0" r="2.9"/><circle cx="629.6" cy="845.2" r="2.9"/><circle cx="153.4" cy="843.3" r="2.9"/><circle cx="305.9" cy="846.0" r="2.9"/><circle cx="154.1" cy="846.8" r="2.9"/><circle cx="400.5" cy="847.6" r="2.9"/><circle cx="285.9" cy="837.1" r="2.9"/><circle cx="242.8" cy="845.7" r="2.9"/><circle cx="460.2" cy="845.3" r="2.9"/><circle cx="188.3" cy="846.6" r="2.9"/><circle cx="477.1" cy="843.9" r="2.9"/><circle cx="647.3" cy="847.5" r="2.9"/><circle cx="273.5" cy="845.4" r="2.9"/><circle cx="345.6" cy="845.7" r="2.9"/><circle cx="221.9" cy="846.9" r="2.9"/><circle cx="452.7" cy="847.4" r="2.9"/><circle cx="603.3" cy="838.3" r="2.9"/><circle cx="574.9" cy="843.3" r="2.9"/><circle cx="132.7" cy="841.2" r="2.9"/><circle cx="155.7" cy="837.9" r="2.9"/><circle cx="373.3" cy="846.4" r="2.9"/><circle cx="297.5" cy="844.8" r="2.9"/><circle cx="116.9" cy="847.4" r="2.9"/><circle cx="356.0" cy="845.7" r="2.9"/><circle cx="106.9" cy="845.6" r="2.9"/><circle cx="99.7" cy="845.1" r="2.9"/><circle cx="361.4" cy="846.5" r="2.9"/><circle cx="183.0" cy="846.8" r="2.9"/><circle cx="538.4" cy="843.3" r="2.9"/><circle cx="433.0" cy="844.7" r="2.9"/><circle cx="441.7" cy="845.3" r="2.9"/><circle cx="278.2" cy="837.4" r="2.9"/><circle cx="181.7" cy="847.4" r="2.9"/><circle cx="354.4" cy="842.0" r="2.9"/><circle cx="411.8" cy="846.1" r="2.9"/><circle cx="487.5" cy="841.5" r="2.9"/><circle cx="688.2" cy="846.9" r="2.9"/><circle cx="292.1" cy="846.6" r="2.9"/><circle cx="335.2" cy="845.1" r="2.9"/><circle cx="643.3" cy="845.5" r="2.9"/><circle cx="553.6" cy="845.2" r="2.9"/><circle cx="699.0" cy="844.9" r="2.9"/><circle cx="201.4" cy="845.0" r="2.9"/><circle cx="623.1" cy="846.5" r="2.9"/><circle cx="657.8" cy="844.5" r="2.9"/><circle cx="141.1" cy="839.2" r="2.9"/><circle cx="393.1" cy="846.4" r="2.9"/><circle cx="517.8" cy="847.7" r="2.9"/><circle cx="362.6" cy="846.7" r="2.9"/><circle cx="471.2" cy="846.3" r="2.9"/><circle cx="484.3" cy="843.6" r="2.9"/><circle cx="457.4" cy="840.4" r="2.9"/><circle cx="468.0" cy="846.2" r="2.9"/><circle cx="179.2" cy="844.3" r="2.9"/><circle cx="104.5" cy="848.0" r="2.9"/><circle cx="471.2" cy="843.0" r="2.9"/><circle cx="435.6" cy="837.8" r="2.9"/><circle cx="348.1" cy="843.6" r="2.9"/><circle cx="733.5" cy="843.0" r="2.9"/><circle cx="88.3" cy="848.0" r="2.9"/><circle cx="350.2" cy="847.1" r="2.9"/><circle cx="291.4" cy="845.6" r="2.9"/><circle cx="521.3" cy="840.2" r="2.9"/><circle cx="461.0" cy="844.6" r="2.9"/><circle cx="322.4" cy="832.0" r="2.9"/><circle cx="386.6" cy="847.9" r="2.9"/><circle cx="501.2" cy="847.8" r="2.9"/><circle cx="443.1" cy="844.7" r="2.9"/><circle cx="367.4" cy="841.8" r="2.9"/><circle cx="437.9" cy="841.5" r="2.9"/><circle cx="383.8" cy="846.8" r="2.9"/><circle cx="220.3" cy="846.9" r="2.9"/><circle cx="304.6" cy="845.9" r="2.9"/><circle cx="210.3" cy="843.0" r="2.9"/><circle cx="383.6" cy="848.0" r="2.9"/><circle cx="602.4" cy="847.9" r="2.9"/><circle cx="333.0" cy="843.7" r="2.9"/><circle cx="545.5" cy="846.7" r="2.9"/><circle cx="153.5" cy="843.3" r="2.9"/><circle cx="699.1" cy="848.1" r="2.9"/><circle cx="117.5" cy="845.7" r="2.9"/><circle cx="542.5" cy="841.1" r="2.9"/><circle cx="456.4" cy="847.0" r="2.9"/><circle cx="498.5" cy="846.9" r="2.9"/><circle cx="92.9" cy="842.0" r="2.9"/><circle cx="158.9" cy="847.0" r="2.9"/><circle cx="558.1" cy="847.4" r="2.9"/><circle cx="498.6" cy="847.4" r="2.9"/><circle cx="504.8" cy="847.5" r="2.9"/><circle cx="344.4" cy="844.8" r="2.9"/><circle cx="90.8" cy="843.9" r="2.9"/><circle cx="299.0" cy="841.3" r="2.9"/><circle cx="710.6" cy="848.0" r="2.9"/><circle cx="731.6" cy="847.0" r="2.9"/><circle cx="424.4" cy="829.3" r="2.9"/><circle cx="650.0" cy="846.6" r="2.9"/><circle cx="327.6" cy="846.2" r="2.9"/><circle cx="293.1" cy="844.2" r="2.9"/><circle cx="666.9" cy="837.9" r="2.9"/><circle cx="558.1" cy="844.3" r="2.9"/><circle cx="584.1" cy="844.3" r="2.9"/><circle cx="234.0" cy="832.2" r="2.9"/><circle cx="311.1" cy="845.5" r="2.9"/><circle cx="608.4" cy="847.3" r="2.9"/><circle cx="91.8" cy="847.5" r="2.9"/><circle cx="207.8" cy="838.7" r="2.9"/><circle cx="314.7" cy="838.0" r="2.9"/><circle cx="575.7" cy="835.8" r="2.9"/><circle cx="226.2" cy="847.0" r="2.9"/><circle cx="198.2" cy="847.4" r="2.9"/><circle cx="726.8" cy="846.1" r="2.9"/><circle cx="621.6" cy="842.7" r="2.9"/><circle cx="434.4" cy="847.2" r="2.9"/><circle cx="103.9" cy="839.2" r="2.9"/><circle cx="417.8" cy="847.0" r="2.9"/><circle cx="632.0" cy="847.4" r="2.9"/><circle cx="213.2" cy="845.6" r="2.9"/><circle cx="671.1" cy="844.0" r="2.9"/><circle cx="198.1" cy="841.2" r="2.9"/><circle cx="689.5" cy="844.1" r="2.9"/><circle cx="110.8" cy="846.6" r="2.9"/><circle cx="100.9" cy="845.9" r="2.9"/><circle cx="272.3" cy="839.1" r="2.9"/><circle cx="580.0" cy="845.3" r="2.9"/><circle cx="589.0" cy="842.5" r="2.9"/><circle cx="699.7" cy="845.5" r="2.9"/><circle cx="332.6" cy="838.0" r="2.9"/><circle cx="299.8" cy="846.5" r="2.9"/><circle cx="656.9" cy="842.6" r="2.9"/><circle cx="278.9" cy="848.0" r="2.9"/><circle cx="702.7" cy="845.8" r="2.9"/><circle cx="364.3" cy="837.1" r="2.9"/><circle cx="174.9" cy="846.5" r="2.9"/><circle cx="301.2" cy="843.6" r="2.9"/><circle cx="440.8" cy="843.7" r="2.9"/><circle cx="184.0" cy="847.3" r="2.9"/><circle cx="666.7" cy="847.4" r="2.9"/><circle cx="108.5" cy="846.1" r="2.9"/><circle cx="684.6" cy="844.4" r="2.9"/><circle cx="715.6" cy="847.9" r="2.9"/><circle cx="166.9" cy="835.5" r="2.9"/><circle cx="223.0" cy="846.4" r="2.9"/><circle cx="373.5" cy="846.3" r="2.9"/><circle cx="98.1" cy="847.1" r="2.9"/><circle cx="285.2" cy="844.5" r="2.9"/><circle cx="639.5" cy="844.9" r="2.9"/><circle cx="99.2" cy="844.2" r="2.9"/><circle cx="643.2" cy="846.4" r="2.9"/><circle cx="228.3" cy="847.8" r="2.9"/><circle cx="569.6" cy="845.6" r="2.9"/><circle cx="573.0" cy="846.6" r="2.9"/><circle cx="477.1" cy="840.1" r="2.9"/><circle cx="581.4" cy="847.0" r="2.9"/><circle cx="498.5" cy="843.3" r="2.9"/><circle cx="680.0" cy="847.6" r="2.9"/><circle cx="280.9" cy="847.1" r="2.9"/><circle cx="681.3" cy="833.6" r="2.9"/><circle cx="418.5" cy="846.2" r="2.9"/><circle cx="700.0" cy="843.6" r="2.9"/><circle cx="232.5" cy="847.8" r="2.9"/><circle cx="284.6" cy="847.7" r="2.9"/><circle cx="467.7" cy="846.7" r="2.9"/><circle cx="318.5" cy="842.2" r="2.9"/><circle cx="500.8" cy="844.2" r="2.9"/><circle cx="394.4" cy="845.6" r="2.9"/><circle cx="484.9" cy="847.0" r="2.9"/><circle cx="708.3" cy="841.5" r="2.9"/><circle cx="147.6" cy="843.6" r="2.9"/><circle cx="220.6" cy="845.1" r="2.9"/><circle cx="330.0" cy="847.7" r="2.9"/><circle cx="291.6" cy="845.5" r="2.9"/><circle cx="207.0" cy="848.0" r="2.9"/><circle cx="330.0" cy="847.8" r="2.9"/><circle cx="720.3" cy="845.7" r="2.9"/><circle cx="408.6" cy="840.7" r="2.9"/><circle cx="126.3" cy="847.3" r="2.9"/><circle cx="589.6" cy="845.3" r="2.9"/><circle cx="104.7" cy="847.3" r="2.9"/><circle cx="709.6" cy="840.0" r="2.9"/><circle cx="370.4" cy="845.2" r="2.9"/><circle cx="722.2" cy="845.4" r="2.9"/><circle cx="103.3" cy="839.3" r="2.9"/><circle cx="572.4" cy="847.2" r="2.9"/><circle cx="460.9" cy="847.3" r="2.9"/><circle cx="610.1" cy="847.5" r="2.9"/><circle cx="580.6" cy="846.2" r="2.9"/><circle cx="643.7" cy="845.3" r="2.9"/><circle cx="293.5" cy="834.7" r="2.9"/><circle cx="364.9" cy="846.9" r="2.9"/><circle cx="435.9" cy="848.0" r="2.9"/><circle cx="222.9" cy="842.2" r="2.9"/><circle cx="300.4" cy="842.7" r="2.9"/><circle cx="114.6" cy="844.1" r="2.9"/><circle cx="123.3" cy="847.1" r="2.9"/><circle cx="272.1" cy="848.0" r="2.9"/><circle cx="392.2" cy="848.1" r="2.9"/><circle cx="548.7" cy="848.1" r="2.9"/><circle cx="299.4" cy="846.7" r="2.9"/><circle cx="431.0" cy="845.2" r="2.9"/><circle cx="609.6" cy="844.6" r="2.9"/><circle cx="538.8" cy="847.1" r="2.9"/><circle cx="618.8" cy="844.2" r="2.9"/><circle cx="719.9" cy="845.9" r="2.9"/><circle cx="663.2" cy="846.5" r="2.9"/><circle cx="673.8" cy="845.5" r="2.9"/><circle cx="609.7" cy="847.8" r="2.9"/><circle cx="638.7" cy="847.9" r="2.9"/><circle cx="275.8" cy="847.2" r="2.9"/><circle cx="684.7" cy="843.9" r="2.9"/><circle cx="106.0" cy="840.7" r="2.9"/><circle cx="593.0" cy="838.5" r="2.9"/><circle cx="84.7" cy="843.8" r="2.9"/><circle cx="473.6" cy="847.9" r="2.9"/><circle cx="116.3" cy="846.5" r="2.9"/><circle cx="111.8" cy="847.4" r="2.9"/><circle cx="149.3" cy="846.1" r="2.9"/><circle cx="137.9" cy="843.0" r="2.9"/><circle cx="287.0" cy="846.4" r="2.9"/><circle cx="226.5" cy="848.0" r="2.9"/><circle cx="543.9" cy="844.9" r="2.9"/><circle cx="726.4" cy="847.8" r="2.9"/><circle cx="645.7" cy="847.8" r="2.9"/><circle cx="427.1" cy="846.6" r="2.9"/><circle cx="703.7" cy="843.6" r="2.9"/><circle cx="366.6" cy="844.5" r="2.9"/><circle cx="651.1" cy="844.2" r="2.9"/><circle cx="395.5" cy="844.0" r="2.9"/><circle cx="150.3" cy="846.3" r="2.9"/><circle cx="294.7" cy="847.0" r="2.9"/><circle cx="678.7" cy="837.9" r="2.9"/><circle cx="733.6" cy="846.9" r="2.9"/><circle cx="383.4" cy="842.1" r="2.9"/><circle cx="676.8" cy="847.0" r="2.9"/><circle cx="311.3" cy="842.0" r="2.9"/><circle cx="604.7" cy="847.0" r="2.9"/><circle cx="578.7" cy="841.7" r="2.9"/><circle cx="223.5" cy="847.4" r="2.9"/><circle cx="117.9" cy="844.3" r="2.9"/><circle cx="124.2" cy="842.7" r="2.9"/><circle cx="408.8" cy="839.8" r="2.9"/><circle cx="709.9" cy="846.6" r="2.9"/><circle cx="161.4" cy="847.3" r="2.9"/><circle cx="211.2" cy="843.2" r="2.9"/><circle cx="385.4" cy="844.5" r="2.9"/><circle cx="432.9" cy="842.4" r="2.9"/><circle cx="85.8" cy="836.9" r="2.9"/><circle cx="139.4" cy="847.0" r="2.9"/><circle cx="136.5" cy="846.7" r="2.9"/><circle cx="530.7" cy="848.0" r="2.9"/><circle cx="212.1" cy="847.5" r="2.9"/><circle cx="518.8" cy="846.8" r="2.9"/><circle cx="121.2" cy="848.0" r="2.9"/><circle cx="232.5" cy="841.3" r="2.9"/><circle cx="114.1" cy="837.9" r="2.9"/><circle cx="593.8" cy="847.5" r="2.9"/><circle cx="407.8" cy="831.8" r="2.9"/><circle cx="285.5" cy="832.5" r="2.9"/><circle cx="625.1" cy="845.3" r="2.9"/><circle cx="95.1" cy="844.5" r="2.9"/><circle cx="285.7" cy="847.6" r="2.9"/><circle cx="298.7" cy="848.1" r="2.9"/><circle cx="175.5" cy="843.4" r="2.9"/><circle cx="135.7" cy="840.8" r="2.9"/><circle cx="565.0" cy="844.3" r="2.9"/><circle cx="535.9" cy="839.1" r="2.9"/><circle cx="335.4" cy="835.5" r="2.9"/><circle cx="333.1" cy="846.2" r="2.9"/><circle cx="409.6" cy="848.0" r="2.9"/><circle cx="532.2" cy="846.6" r="2.9"/><circle cx="99.0" cy="836.9" r="2.9"/><circle cx="132.5" cy="847.2" r="2.9"/><circle cx="284.1" cy="847.5" r="2.9"/></g><rect x="51" y="492" width="718" height="372" fill="none" stroke="#474747" stroke-width="1.5"/><path d="M83.5 864v4M188.9 864v4M297.9 864v4M406.9 864v4M517.7 864v4M626.7 864v4M735.7 864v4M51 830.3h-4M51 784.7h-4M51 739h-4M51 693.4h-4M51 647.8h-4M51 602.2h-4M51 556.5h-4M51 510.9h-4" stroke="#474747" stroke-width="1.2" fill="none"/><text x="44" y="834.3" text-anchor="end" class="tk">50</text><text x="44" y="788.7" text-anchor="end" class="tk">60</text><text x="44" y="743" text-anchor="end" class="tk">70</text><text x="44" y="697.4" text-anchor="end" class="tk">80</text><text x="44" y="651.8" text-anchor="end" class="tk">90</text><text x="44" y="606.2" text-anchor="end" class="tk">100</text><text x="44" y="560.5" text-anchor="end" class="tk">110</text><text x="44" y="514.9" text-anchor="end" class="tk">120</text><text transform="translate(83.5,892.5) rotate(-45)" text-anchor="middle" dominant-baseline="central" class="tk">2025-01</text><text transform="translate(188.9,892.5) rotate(-45)" text-anchor="middle" dominant-baseline="central" class="tk">2025-03</text><text transform="translate(297.9,892.5) rotate(-45)" text-anchor="middle" dominant-baseline="central" class="tk">2025-05</text><text transform="translate(406.9,892.5) rotate(-45)" text-anchor="middle" dominant-baseline="central" class="tk">2025-07</text><text transform="translate(517.7,892.5) rotate(-45)" text-anchor="middle" dominant-baseline="central" class="tk">2025-09</text><text transform="translate(626.7,892.5) rotate(-45)" text-anchor="middle" dominant-baseline="central" class="tk">2025-11</text><text transform="translate(735.7,892.5) rotate(-45)" text-anchor="middle" dominant-baseline="central" class="tk">2026-01</text><text x="410" y="486" text-anchor="middle" class="ti">Peak Performance Periods (Top 10%)</text><text transform="translate(12,678) rotate(-90)" text-anchor="middle" dominant-baseline="central" class="al">Output (tons/hour)</text><text x="410" y="925.5" text-anchor="middle" class="al">Date</text><rect x="580" y="659.4" width="183" height="35.6" rx="2.5" fill="#ffffff" fill-opacity="0.85" stroke="#d9d9d9" stroke-width="1"/><circle cx="595" cy="669.6" r="2.6" fill="#0000ff" fill-opacity="0.6"/><text x="614" y="673.9" class="lg" textLength="144.8" lengthAdjust="spacingAndGlyphs">Station 1 Peaks (&gt;=106.5)</text><circle cx="595" cy="685.5" r="2.6" fill="#e8231c" fill-opacity="0.6"/><text x="614" y="689.8" class="lg" textLength="137.5" lengthAdjust="spacingAndGlyphs">Station 2 Peaks (&gt;=46.1)</text><path d="M916.5 492V864M1027.7 492V864M1138.9 492V864M1250.2 492V864M1361.4 492V864M1472.6 492V864M828 849H1545M828 792.5H1545M828 735.9H1545M828 679.4H1545M828 622.8H1545M828 566.2H1545M828 509.7H1545" stroke="#e9e9e9" stroke-width="1" fill="none"/><g fill="#0000ff" fill-opacity="0.6"><circle cx="868.7" cy="546.2" r="2.5"/><circle cx="867.0" cy="544.9" r="2.5"/><circle cx="869.7" cy="568.0" r="2.5"/><circle cx="871.4" cy="537.8" r="2.5"/><circle cx="865.8" cy="568.0" r="2.5"/><circle cx="865.3" cy="567.9" r="2.5"/><circle cx="867.4" cy="560.8" r="2.5"/><circle cx="865.5" cy="556.9" r="2.5"/><circle cx="869.5" cy="549.3" r="2.5"/><circle cx="868.2" cy="571.9" r="2.5"/><circle cx="865.8" cy="535.5" r="2.5"/><circle cx="866.6" cy="579.6" r="2.5"/><circle cx="868.8" cy="535.8" r="2.5"/><circle cx="862.8" cy="535.8" r="2.5"/><circle cx="864.1" cy="550.1" r="2.5"/><circle cx="866.7" cy="576.9" r="2.5"/><circle cx="864.2" cy="584.3" r="2.5"/><circle cx="863.4" cy="572.6" r="2.5"/><circle cx="869.0" cy="570.5" r="2.5"/><circle cx="871.3" cy="570.3" r="2.5"/><circle cx="864.8" cy="566.0" r="2.5"/><circle cx="870.6" cy="579.2" r="2.5"/><circle cx="866.5" cy="547.6" r="2.5"/><circle cx="865.3" cy="556.6" r="2.5"/><circle cx="866.1" cy="569.6" r="2.5"/><circle cx="866.2" cy="570.5" r="2.5"/><circle cx="868.4" cy="594.5" r="2.5"/><circle cx="863.3" cy="574.6" r="2.5"/><circle cx="862.7" cy="583.4" r="2.5"/><circle cx="863.5" cy="568.5" r="2.5"/><circle cx="862.3" cy="571.7" r="2.5"/><circle cx="864.8" cy="547.9" r="2.5"/><circle cx="862.5" cy="596.5" r="2.5"/><circle cx="862.5" cy="587.2" r="2.5"/><circle cx="864.1" cy="556.2" r="2.5"/><circle cx="864.3" cy="571.0" r="2.5"/><circle cx="866.0" cy="557.3" r="2.5"/><circle cx="862.9" cy="582.2" r="2.5"/><circle cx="866.2" cy="542.9" r="2.5"/><circle cx="864.6" cy="580.9" r="2.5"/><circle cx="868.1" cy="566.0" r="2.5"/><circle cx="866.3" cy="534.6" r="2.5"/><circle cx="864.5" cy="553.8" r="2.5"/><circle cx="871.0" cy="575.4" r="2.5"/><circle cx="871.9" cy="554.0" r="2.5"/><circle cx="867.2" cy="540.6" r="2.5"/><circle cx="866.9" cy="612.0" r="2.5"/><circle cx="867.0" cy="569.8" r="2.5"/><circle cx="862.8" cy="553.9" r="2.5"/><circle cx="865.0" cy="582.6" r="2.5"/><circle cx="871.8" cy="545.8" r="2.5"/><circle cx="870.2" cy="534.4" r="2.5"/><circle cx="863.2" cy="532.8" r="2.5"/><circle cx="863.9" cy="585.2" r="2.5"/><circle cx="867.3" cy="572.6" r="2.5"/><circle cx="870.7" cy="572.8" r="2.5"/><circle cx="868.0" cy="566.6" r="2.5"/><circle cx="864.6" cy="571.1" r="2.5"/><circle cx="865.4" cy="563.3" r="2.5"/><circle cx="866.1" cy="550.9" r="2.5"/><circle cx="865.8" cy="561.1" r="2.5"/><circle cx="870.5" cy="557.4" r="2.5"/><circle cx="873.3" cy="563.9" r="2.5"/><circle cx="867.3" cy="555.1" r="2.5"/><circle cx="869.3" cy="552.0" r="2.5"/><circle cx="866.4" cy="569.5" r="2.5"/><circle cx="865.5" cy="565.9" r="2.5"/><circle cx="862.7" cy="588.1" r="2.5"/><circle cx="863.7" cy="540.3" r="2.5"/><circle cx="867.1" cy="547.5" r="2.5"/><circle cx="865.9" cy="560.1" r="2.5"/><circle cx="864.5" cy="601.1" r="2.5"/><circle cx="865.8" cy="575.2" r="2.5"/><circle cx="864.9" cy="591.2" r="2.5"/><circle cx="867.9" cy="552.1" r="2.5"/><circle cx="867.8" cy="546.7" r="2.5"/><circle cx="864.4" cy="555.5" r="2.5"/><circle cx="866.3" cy="574.9" r="2.5"/><circle cx="866.5" cy="583.3" r="2.5"/><circle cx="865.6" cy="566.6" r="2.5"/><circle cx="862.1" cy="539.2" r="2.5"/><circle cx="868.8" cy="551.9" r="2.5"/><circle cx="870.7" cy="554.2" r="2.5"/><circle cx="867.9" cy="536.6" r="2.5"/><circle cx="865.3" cy="590.2" r="2.5"/><circle cx="868.8" cy="570.5" r="2.5"/><circle cx="869.0" cy="554.3" r="2.5"/><circle cx="864.8" cy="567.3" r="2.5"/><circle cx="863.8" cy="565.3" r="2.5"/><circle cx="866.1" cy="551.6" r="2.5"/><circle cx="871.1" cy="561.2" r="2.5"/><circle cx="865.8" cy="563.9" r="2.5"/><circle cx="866.3" cy="574.2" r="2.5"/><circle cx="867.1" cy="586.2" r="2.5"/><circle cx="864.4" cy="561.6" r="2.5"/><circle cx="868.8" cy="556.7" r="2.5"/><circle cx="865.8" cy="545.9" r="2.5"/><circle cx="867.3" cy="534.9" r="2.5"/><circle cx="867.7" cy="566.2" r="2.5"/><circle cx="863.5" cy="543.1" r="2.5"/><circle cx="868.9" cy="541.3" r="2.5"/><circle cx="865.1" cy="585.4" r="2.5"/><circle cx="869.8" cy="566.0" r="2.5"/><circle cx="860.5" cy="554.3" r="2.5"/><circle cx="863.4" cy="540.7" r="2.5"/><circle cx="869.2" cy="601.5" r="2.5"/><circle cx="867.3" cy="566.3" r="2.5"/><circle cx="868.0" cy="587.9" r="2.5"/><circle cx="863.0" cy="549.9" r="2.5"/><circle cx="861.6" cy="567.9" r="2.5"/><circle cx="867.5" cy="552.8" r="2.5"/><circle cx="867.3" cy="524.8" r="2.5"/><circle cx="869.4" cy="568.9" r="2.5"/><circle cx="866.1" cy="579.3" r="2.5"/><circle cx="867.0" cy="527.9" r="2.5"/><circle cx="868.2" cy="567.8" r="2.5"/><circle cx="863.5" cy="611.1" r="2.5"/><circle cx="866.3" cy="579.9" r="2.5"/><circle cx="867.4" cy="586.3" r="2.5"/><circle cx="868.3" cy="570.3" r="2.5"/><circle cx="864.9" cy="560.6" r="2.5"/><circle cx="865.3" cy="566.9" r="2.5"/><circle cx="864.6" cy="557.8" r="2.5"/><circle cx="862.3" cy="568.1" r="2.5"/><circle cx="867.8" cy="550.5" r="2.5"/><circle cx="867.8" cy="542.7" r="2.5"/><circle cx="867.1" cy="519.6" r="2.5"/><circle cx="865.2" cy="602.8" r="2.5"/><circle cx="861.1" cy="600.5" r="2.5"/><circle cx="866.4" cy="597.3" r="2.5"/><circle cx="862.8" cy="553.9" r="2.5"/><circle cx="862.0" cy="565.3" r="2.5"/><circle cx="868.6" cy="545.2" r="2.5"/><circle cx="867.0" cy="591.8" r="2.5"/><circle cx="864.0" cy="540.5" r="2.5"/><circle cx="870.3" cy="574.2" r="2.5"/><circle cx="868.6" cy="552.8" r="2.5"/><circle cx="865.6" cy="547.5" r="2.5"/><circle cx="864.2" cy="555.8" r="2.5"/><circle cx="867.9" cy="569.2" r="2.5"/><circle cx="865.0" cy="538.3" r="2.5"/><circle cx="864.5" cy="582.6" r="2.5"/><circle cx="863.0" cy="570.5" r="2.5"/><circle cx="866.0" cy="581.2" r="2.5"/><circle cx="869.2" cy="564.1" r="2.5"/><circle cx="867.9" cy="591.5" r="2.5"/><circle cx="865.6" cy="537.8" r="2.5"/><circle cx="869.1" cy="557.7" r="2.5"/><circle cx="869.3" cy="552.7" r="2.5"/><circle cx="867.3" cy="558.5" r="2.5"/><circle cx="867.7" cy="573.1" r="2.5"/><circle cx="870.9" cy="521.6" r="2.5"/><circle cx="867.0" cy="566.0" r="2.5"/><circle cx="872.4" cy="557.1" r="2.5"/><circle cx="868.0" cy="556.6" r="2.5"/><circle cx="866.8" cy="571.3" r="2.5"/><circle cx="868.6" cy="591.7" r="2.5"/><circle cx="869.2" cy="537.5" r="2.5"/><circle cx="866.1" cy="571.8" r="2.5"/><circle cx="871.5" cy="567.9" r="2.5"/><circle cx="865.3" cy="547.7" r="2.5"/><circle cx="863.9" cy="602.7" r="2.5"/><circle cx="866.7" cy="574.3" r="2.5"/><circle cx="864.7" cy="578.3" r="2.5"/><circle cx="865.1" cy="570.3" r="2.5"/><circle cx="861.0" cy="550.6" r="2.5"/><circle cx="865.8" cy="571.8" r="2.5"/><circle cx="865.9" cy="550.0" r="2.5"/><circle cx="867.4" cy="524.5" r="2.5"/><circle cx="861.2" cy="550.0" r="2.5"/><circle cx="869.0" cy="618.1" r="2.5"/><circle cx="868.0" cy="567.3" r="2.5"/><circle cx="866.3" cy="565.4" r="2.5"/><circle cx="867.6" cy="572.3" r="2.5"/><circle cx="864.8" cy="547.6" r="2.5"/><circle cx="866.6" cy="550.0" r="2.5"/><circle cx="873.2" cy="590.2" r="2.5"/><circle cx="864.3" cy="578.5" r="2.5"/><circle cx="866.3" cy="534.7" r="2.5"/><circle cx="867.7" cy="545.4" r="2.5"/><circle cx="871.3" cy="602.0" r="2.5"/><circle cx="865.7" cy="578.0" r="2.5"/><circle cx="867.6" cy="584.5" r="2.5"/><circle cx="870.6" cy="574.8" r="2.5"/><circle cx="864.6" cy="584.8" r="2.5"/><circle cx="863.3" cy="566.5" r="2.5"/><circle cx="865.0" cy="559.9" r="2.5"/><circle cx="865.3" cy="557.3" r="2.5"/><circle cx="867.0" cy="545.7" r="2.5"/><circle cx="868.3" cy="575.6" r="2.5"/><circle cx="869.6" cy="576.2" r="2.5"/><circle cx="864.3" cy="549.6" r="2.5"/><circle cx="863.4" cy="578.4" r="2.5"/><circle cx="862.7" cy="593.4" r="2.5"/><circle cx="867.2" cy="583.0" r="2.5"/><circle cx="870.7" cy="539.4" r="2.5"/><circle cx="867.4" cy="578.3" r="2.5"/><circle cx="866.4" cy="570.8" r="2.5"/><circle cx="869.3" cy="601.0" r="2.5"/><circle cx="866.0" cy="564.7" r="2.5"/><circle cx="867.5" cy="553.4" r="2.5"/><circle cx="865.5" cy="554.9" r="2.5"/><circle cx="863.5" cy="545.6" r="2.5"/><circle cx="867.4" cy="568.5" r="2.5"/><circle cx="869.2" cy="579.3" r="2.5"/><circle cx="862.2" cy="557.1" r="2.5"/><circle cx="866.7" cy="572.5" r="2.5"/><circle cx="864.7" cy="557.8" r="2.5"/><circle cx="868.6" cy="583.0" r="2.5"/><circle cx="863.0" cy="553.8" r="2.5"/><circle cx="863.7" cy="543.0" r="2.5"/><circle cx="870.0" cy="576.8" r="2.5"/><circle cx="872.2" cy="571.0" r="2.5"/><circle cx="866.2" cy="568.1" r="2.5"/><circle cx="867.6" cy="550.9" r="2.5"/><circle cx="867.3" cy="578.9" r="2.5"/><circle cx="865.7" cy="594.5" r="2.5"/><circle cx="863.9" cy="563.0" r="2.5"/><circle cx="866.5" cy="576.6" r="2.5"/><circle cx="867.0" cy="579.9" r="2.5"/><circle cx="866.4" cy="565.2" r="2.5"/><circle cx="868.9" cy="547.5" r="2.5"/><circle cx="863.9" cy="573.4" r="2.5"/><circle cx="862.1" cy="529.8" r="2.5"/><circle cx="861.2" cy="567.7" r="2.5"/><circle cx="862.6" cy="565.5" r="2.5"/><circle cx="867.0" cy="555.3" r="2.5"/><circle cx="864.9" cy="553.5" r="2.5"/><circle cx="864.7" cy="583.7" r="2.5"/><circle cx="864.4" cy="580.6" r="2.5"/><circle cx="870.6" cy="550.2" r="2.5"/><circle cx="868.0" cy="603.4" r="2.5"/><circle cx="866.2" cy="554.8" r="2.5"/><circle cx="862.0" cy="548.7" r="2.5"/><circle cx="863.7" cy="566.8" r="2.5"/><circle cx="867.0" cy="568.6" r="2.5"/><circle cx="866.4" cy="557.9" r="2.5"/><circle cx="869.3" cy="538.5" r="2.5"/><circle cx="869.8" cy="563.9" r="2.5"/><circle cx="861.4" cy="586.8" r="2.5"/><circle cx="865.2" cy="554.8" r="2.5"/><circle cx="869.4" cy="573.4" r="2.5"/><circle cx="864.8" cy="564.7" r="2.5"/><circle cx="866.9" cy="553.7" r="2.5"/><circle cx="868.3" cy="570.2" r="2.5"/><circle cx="860.3" cy="574.1" r="2.5"/><circle cx="859.0" cy="569.5" r="2.5"/><circle cx="873.2" cy="543.7" r="2.5"/><circle cx="867.3" cy="525.5" r="2.5"/><circle cx="863.8" cy="558.9" r="2.5"/><circle cx="867.8" cy="578.9" r="2.5"/><circle cx="865.0" cy="553.5" r="2.5"/><circle cx="867.1" cy="576.7" r="2.5"/><circle cx="866.1" cy="554.0" r="2.5"/><circle cx="865.9" cy="579.7" r="2.5"/><circle cx="867.4" cy="568.6" r="2.5"/><circle cx="866.8" cy="587.8" r="2.5"/><circle cx="866.3" cy="573.0" r="2.5"/><circle cx="862.8" cy="538.0" r="2.5"/><circle cx="866.8" cy="561.6" r="2.5"/><circle cx="868.6" cy="540.6" r="2.5"/><circle cx="869.0" cy="578.6" r="2.5"/><circle cx="867.0" cy="577.1" r="2.5"/><circle cx="865.9" cy="559.0" r="2.5"/><circle cx="869.4" cy="585.7" r="2.5"/><circle cx="868.4" cy="559.0" r="2.5"/><circle cx="863.9" cy="512.7" r="2.5"/><circle cx="866.2" cy="544.0" r="2.5"/><circle cx="866.4" cy="559.1" r="2.5"/><circle cx="868.7" cy="565.0" r="2.5"/><circle cx="866.5" cy="542.9" r="2.5"/><circle cx="869.3" cy="520.5" r="2.5"/><circle cx="867.3" cy="598.5" r="2.5"/><circle cx="862.9" cy="556.1" r="2.5"/><circle cx="864.0" cy="592.3" r="2.5"/><circle cx="869.4" cy="595.8" r="2.5"/><circle cx="862.4" cy="562.7" r="2.5"/><circle cx="869.5" cy="550.9" r="2.5"/><circle cx="863.6" cy="551.9" r="2.5"/><circle cx="864.0" cy="560.3" r="2.5"/><circle cx="858.8" cy="589.4" r="2.5"/><circle cx="867.4" cy="568.9" r="2.5"/><circle cx="867.5" cy="620.0" r="2.5"/><circle cx="870.0" cy="550.0" r="2.5"/><circle cx="871.7" cy="576.3" r="2.5"/><circle cx="868.8" cy="554.7" r="2.5"/><circle cx="866.0" cy="556.4" r="2.5"/><circle cx="866.7" cy="553.2" r="2.5"/><circle cx="866.0" cy="564.3" r="2.5"/><circle cx="864.6" cy="573.6" r="2.5"/><circle cx="867.0" cy="560.0" r="2.5"/><circle cx="867.5" cy="549.3" r="2.5"/><circle cx="864.6" cy="580.0" r="2.5"/><circle cx="862.3" cy="541.9" r="2.5"/><circle cx="871.4" cy="558.8" r="2.5"/><circle cx="868.1" cy="580.0" r="2.5"/><circle cx="866.8" cy="539.4" r="2.5"/><circle cx="867.3" cy="591.9" r="2.5"/><circle cx="867.3" cy="565.6" r="2.5"/><circle cx="868.7" cy="535.0" r="2.5"/><circle cx="866.7" cy="556.2" r="2.5"/><circle cx="869.0" cy="581.5" r="2.5"/><circle cx="866.0" cy="596.2" r="2.5"/><circle cx="867.2" cy="552.0" r="2.5"/><circle cx="867.5" cy="557.0" r="2.5"/><circle cx="864.7" cy="580.8" r="2.5"/><circle cx="869.8" cy="553.0" r="2.5"/><circle cx="865.7" cy="554.1" r="2.5"/><circle cx="864.7" cy="583.6" r="2.5"/><circle cx="867.5" cy="567.0" r="2.5"/><circle cx="867.3" cy="521.4" r="2.5"/><circle cx="867.6" cy="562.1" r="2.5"/><circle cx="871.8" cy="579.9" r="2.5"/><circle cx="866.2" cy="574.1" r="2.5"/><circle cx="866.4" cy="522.9" r="2.5"/><circle cx="861.7" cy="541.7" r="2.5"/><circle cx="863.2" cy="594.8" r="2.5"/><circle cx="866.2" cy="567.0" r="2.5"/><circle cx="865.8" cy="585.9" r="2.5"/><circle cx="868.3" cy="589.2" r="2.5"/><circle cx="868.2" cy="512.8" r="2.5"/><circle cx="863.3" cy="560.3" r="2.5"/><circle cx="866.9" cy="593.7" r="2.5"/><circle cx="866.6" cy="546.9" r="2.5"/><circle cx="869.0" cy="552.3" r="2.5"/><circle cx="865.2" cy="567.2" r="2.5"/><circle cx="864.4" cy="543.2" r="2.5"/><circle cx="864.8" cy="585.0" r="2.5"/><circle cx="865.1" cy="533.3" r="2.5"/><circle cx="862.6" cy="548.4" r="2.5"/><circle cx="868.6" cy="575.0" r="2.5"/><circle cx="867.2" cy="592.6" r="2.5"/><circle cx="867.6" cy="556.2" r="2.5"/><circle cx="864.7" cy="561.5" r="2.5"/><circle cx="866.7" cy="554.1" r="2.5"/><circle cx="868.4" cy="544.7" r="2.5"/><circle cx="866.4" cy="553.7" r="2.5"/><circle cx="868.9" cy="533.6" r="2.5"/><circle cx="866.9" cy="573.3" r="2.5"/><circle cx="865.0" cy="566.5" r="2.5"/><circle cx="862.3" cy="584.5" r="2.5"/><circle cx="868.4" cy="526.9" r="2.5"/><circle cx="870.2" cy="576.0" r="2.5"/><circle cx="869.8" cy="557.9" r="2.5"/><circle cx="865.4" cy="539.6" r="2.5"/><circle cx="869.0" cy="547.6" r="2.5"/><circle cx="868.2" cy="546.0" r="2.5"/><circle cx="866.0" cy="569.8" r="2.5"/><circle cx="865.2" cy="547.5" r="2.5"/><circle cx="867.9" cy="546.0" r="2.5"/><circle cx="865.9" cy="569.3" r="2.5"/><circle cx="866.7" cy="563.8" r="2.5"/><circle cx="866.2" cy="537.6" r="2.5"/><circle cx="867.2" cy="612.8" r="2.5"/><circle cx="865.2" cy="559.4" r="2.5"/><circle cx="867.1" cy="563.0" r="2.5"/><circle cx="866.2" cy="535.7" r="2.5"/><circle cx="864.7" cy="549.8" r="2.5"/><circle cx="869.1" cy="545.8" r="2.5"/><circle cx="872.3" cy="580.2" r="2.5"/><circle cx="865.2" cy="556.6" r="2.5"/><circle cx="868.1" cy="553.1" r="2.5"/><circle cx="865.1" cy="570.7" r="2.5"/><circle cx="870.8" cy="551.1" r="2.5"/><circle cx="868.5" cy="547.9" r="2.5"/><circle cx="871.4" cy="566.2" r="2.5"/><circle cx="867.6" cy="592.9" r="2.5"/><circle cx="866.0" cy="557.7" r="2.5"/><circle cx="868.4" cy="577.0" r="2.5"/><circle cx="863.4" cy="579.2" r="2.5"/><circle cx="861.5" cy="583.5" r="2.5"/><circle cx="866.4" cy="555.1" r="2.5"/><circle cx="870.5" cy="560.8" r="2.5"/><circle cx="864.8" cy="560.1" r="2.5"/><circle cx="865.8" cy="544.5" r="2.5"/><circle cx="869.4" cy="594.8" r="2.5"/><circle cx="866.1" cy="525.7" r="2.5"/><circle cx="869.8" cy="567.9" r="2.5"/><circle cx="859.0" cy="551.4" r="2.5"/><circle cx="867.7" cy="567.0" r="2.5"/><circle cx="868.8" cy="559.0" r="2.5"/><circle cx="868.2" cy="568.9" r="2.5"/><circle cx="866.3" cy="557.2" r="2.5"/><circle cx="865.9" cy="586.6" r="2.5"/><circle cx="863.5" cy="559.5" r="2.5"/><circle cx="864.6" cy="581.0" r="2.5"/><circle cx="864.9" cy="552.2" r="2.5"/><circle cx="861.3" cy="611.0" r="2.5"/><circle cx="867.1" cy="569.1" r="2.5"/><circle cx="870.3" cy="570.9" r="2.5"/><circle cx="862.9" cy="560.3" r="2.5"/><circle cx="867.4" cy="559.0" r="2.5"/><circle cx="867.5" cy="525.3" r="2.5"/><circle cx="865.7" cy="558.2" r="2.5"/><circle cx="866.4" cy="597.5" r="2.5"/><circle cx="863.5" cy="582.7" r="2.5"/><circle cx="865.7" cy="588.4" r="2.5"/><circle cx="870.1" cy="567.8" r="2.5"/><circle cx="864.0" cy="579.6" r="2.5"/><circle cx="866.6" cy="577.8" r="2.5"/><circle cx="863.8" cy="589.1" r="2.5"/><circle cx="866.4" cy="534.1" r="2.5"/><circle cx="859.5" cy="573.6" r="2.5"/><circle cx="866.5" cy="581.8" r="2.5"/><circle cx="872.0" cy="563.5" r="2.5"/><circle cx="862.1" cy="561.9" r="2.5"/><circle cx="863.4" cy="552.1" r="2.5"/><circle cx="866.4" cy="544.9" r="2.5"/><circle cx="864.0" cy="559.8" r="2.5"/><circle cx="870.5" cy="571.5" r="2.5"/><circle cx="863.8" cy="573.5" r="2.5"/><circle cx="866.9" cy="573.7" r="2.5"/><circle cx="867.5" cy="545.8" r="2.5"/><circle cx="864.3" cy="595.6" r="2.5"/><circle cx="864.1" cy="596.7" r="2.5"/><circle cx="864.4" cy="571.9" r="2.5"/><circle cx="862.0" cy="566.6" r="2.5"/><circle cx="866.1" cy="597.1" r="2.5"/><circle cx="865.1" cy="598.3" r="2.5"/><circle cx="867.7" cy="573.7" r="2.5"/><circle cx="867.3" cy="543.0" r="2.5"/><circle cx="867.8" cy="569.0" r="2.5"/><circle cx="866.8" cy="577.6" r="2.5"/><circle cx="866.0" cy="537.0" r="2.5"/><circle cx="864.6" cy="571.1" r="2.5"/><circle cx="866.6" cy="562.6" r="2.5"/><circle cx="867.9" cy="590.3" r="2.5"/><circle cx="864.8" cy="571.0" r="2.5"/><circle cx="866.7" cy="557.9" r="2.5"/><circle cx="867.1" cy="568.1" r="2.5"/><circle cx="863.8" cy="590.3" r="2.5"/><circle cx="863.1" cy="554.3" r="2.5"/><circle cx="869.9" cy="584.8" r="2.5"/><circle cx="862.6" cy="576.2" r="2.5"/><circle cx="866.5" cy="579.5" r="2.5"/><circle cx="865.4" cy="557.5" r="2.5"/><circle cx="866.9" cy="577.9" r="2.5"/><circle cx="862.8" cy="572.4" r="2.5"/><circle cx="868.6" cy="600.3" r="2.5"/><circle cx="869.8" cy="566.5" r="2.5"/><circle cx="869.7" cy="581.6" r="2.5"/><circle cx="864.0" cy="594.0" r="2.5"/><circle cx="866.6" cy="567.3" r="2.5"/><circle cx="865.5" cy="568.0" r="2.5"/><circle cx="867.1" cy="584.0" r="2.5"/><circle cx="868.3" cy="598.2" r="2.5"/><circle cx="864.8" cy="563.4" r="2.5"/><circle cx="865.4" cy="566.6" r="2.5"/><circle cx="862.1" cy="575.3" r="2.5"/><circle cx="865.9" cy="595.4" r="2.5"/><circle cx="867.4" cy="592.3" r="2.5"/><circle cx="863.9" cy="593.4" r="2.5"/><circle cx="866.4" cy="584.0" r="2.5"/><circle cx="867.4" cy="554.8" r="2.5"/><circle cx="865.1" cy="560.2" r="2.5"/><circle cx="870.3" cy="600.1" r="2.5"/><circle cx="861.7" cy="538.0" r="2.5"/><circle cx="863.8" cy="517.9" r="2.5"/><circle cx="868.1" cy="611.5" r="2.5"/><circle cx="868.1" cy="572.1" r="2.5"/><circle cx="866.2" cy="554.3" r="2.5"/><circle cx="864.5" cy="575.3" r="2.5"/><circle cx="866.4" cy="600.6" r="2.5"/><circle cx="865.3" cy="564.7" r="2.5"/><circle cx="866.1" cy="566.8" r="2.5"/><circle cx="866.0" cy="604.8" r="2.5"/><circle cx="863.9" cy="604.6" r="2.5"/><circle cx="866.8" cy="551.7" r="2.5"/><circle cx="866.4" cy="605.9" r="2.5"/><circle cx="865.1" cy="554.6" r="2.5"/><circle cx="867.3" cy="555.1" r="2.5"/><circle cx="868.1" cy="588.3" r="2.5"/><circle cx="866.7" cy="563.2" r="2.5"/><circle cx="863.6" cy="579.3" r="2.5"/><circle cx="865.8" cy="533.4" r="2.5"/><circle cx="868.7" cy="568.1" r="2.5"/><circle cx="866.3" cy="597.4" r="2.5"/><circle cx="866.2" cy="550.2" r="2.5"/><circle cx="865.2" cy="558.6" r="2.5"/><circle cx="869.6" cy="573.8" r="2.5"/><circle cx="862.4" cy="570.1" r="2.5"/><circle cx="865.8" cy="519.2" r="2.5"/><circle cx="866.0" cy="570.3" r="2.5"/><circle cx="868.7" cy="581.7" r="2.5"/><circle cx="865.3" cy="571.1" r="2.5"/><circle cx="865.7" cy="561.5" r="2.5"/><circle cx="866.6" cy="610.8" r="2.5"/><circle cx="868.9" cy="576.6" r="2.5"/><circle cx="867.9" cy="566.7" r="2.5"/><circle cx="867.7" cy="544.2" r="2.5"/><circle cx="865.7" cy="576.3" r="2.5"/><circle cx="867.1" cy="569.9" r="2.5"/><circle cx="870.6" cy="572.1" r="2.5"/><circle cx="864.8" cy="531.9" r="2.5"/><circle cx="864.5" cy="553.7" r="2.5"/><circle cx="864.7" cy="555.8" r="2.5"/><circle cx="870.2" cy="542.5" r="2.5"/><circle cx="865.3" cy="557.3" r="2.5"/><circle cx="869.2" cy="565.1" r="2.5"/><circle cx="870.9" cy="538.8" r="2.5"/><circle cx="870.6" cy="566.7" r="2.5"/><circle cx="867.3" cy="589.1" r="2.5"/><circle cx="864.1" cy="556.5" r="2.5"/><circle cx="864.6" cy="566.2" r="2.5"/><circle cx="863.7" cy="579.8" r="2.5"/><circle cx="863.3" cy="561.4" r="2.5"/><circle cx="864.5" cy="564.4" r="2.5"/><circle cx="867.8" cy="573.5" r="2.5"/><circle cx="866.4" cy="524.9" r="2.5"/><circle cx="867.7" cy="537.8" r="2.5"/><circle cx="870.1" cy="550.8" r="2.5"/><circle cx="867.7" cy="596.4" r="2.5"/><circle cx="867.6" cy="584.9" r="2.5"/><circle cx="863.0" cy="568.0" r="2.5"/><circle cx="869.2" cy="555.9" r="2.5"/><circle cx="868.2" cy="552.4" r="2.5"/><circle cx="868.3" cy="586.0" r="2.5"/><circle cx="863.7" cy="565.1" r="2.5"/><circle cx="869.0" cy="567.4" r="2.5"/><circle cx="864.5" cy="576.6" r="2.5"/><circle cx="865.2" cy="578.7" r="2.5"/><circle cx="863.7" cy="537.4" r="2.5"/><circle cx="866.8" cy="596.9" r="2.5"/><circle cx="866.8" cy="557.1" r="2.5"/><circle cx="868.5" cy="585.5" r="2.5"/><circle cx="861.7" cy="524.7" r="2.5"/><circle cx="863.1" cy="592.7" r="2.5"/><circle cx="866.8" cy="546.4" r="2.5"/><circle cx="868.9" cy="581.9" r="2.5"/><circle cx="866.4" cy="580.4" r="2.5"/><circle cx="866.4" cy="579.3" r="2.5"/><circle cx="872.6" cy="545.0" r="2.5"/><circle cx="865.9" cy="569.4" r="2.5"/><circle cx="869.8" cy="579.6" r="2.5"/><circle cx="865.7" cy="575.4" r="2.5"/><circle cx="866.4" cy="535.6" r="2.5"/><circle cx="864.8" cy="589.8" r="2.5"/><circle cx="863.5" cy="578.4" r="2.5"/><circle cx="862.9" cy="589.8" r="2.5"/><circle cx="864.2" cy="557.8" r="2.5"/><circle cx="867.0" cy="573.5" r="2.5"/><circle cx="867.3" cy="566.2" r="2.5"/><circle cx="866.1" cy="583.3" r="2.5"/><circle cx="868.4" cy="567.6" r="2.5"/><circle cx="865.8" cy="573.7" r="2.5"/><circle cx="866.7" cy="568.7" r="2.5"/><circle cx="863.3" cy="578.1" r="2.5"/><circle cx="863.4" cy="620.0" r="2.5"/><circle cx="863.1" cy="519.8" r="2.5"/><circle cx="861.9" cy="569.1" r="2.5"/><circle cx="868.2" cy="570.3" r="2.5"/><circle cx="866.1" cy="585.9" r="2.5"/><circle cx="864.5" cy="580.3" r="2.5"/><circle cx="863.4" cy="569.9" r="2.5"/><circle cx="867.9" cy="550.4" r="2.5"/><circle cx="870.6" cy="556.0" r="2.5"/><circle cx="874.6" cy="563.5" r="2.5"/><circle cx="863.6" cy="593.4" r="2.5"/><circle cx="867.0" cy="550.9" r="2.5"/><circle cx="868.8" cy="565.8" r="2.5"/><circle cx="869.8" cy="565.3" r="2.5"/><circle cx="865.5" cy="569.2" r="2.5"/><circle cx="866.7" cy="554.8" r="2.5"/><circle cx="863.4" cy="585.8" r="2.5"/><circle cx="869.4" cy="573.0" r="2.5"/><circle cx="869.4" cy="554.2" r="2.5"/><circle cx="867.2" cy="543.8" r="2.5"/><circle cx="866.1" cy="553.9" r="2.5"/><circle cx="868.5" cy="546.6" r="2.5"/><circle cx="864.1" cy="566.5" r="2.5"/><circle cx="870.3" cy="552.7" r="2.5"/><circle cx="869.9" cy="537.3" r="2.5"/><circle cx="865.0" cy="566.2" r="2.5"/><circle cx="870.2" cy="555.8" r="2.5"/><circle cx="864.3" cy="557.4" r="2.5"/><circle cx="867.5" cy="575.5" r="2.5"/><circle cx="865.5" cy="548.7" r="2.5"/><circle cx="868.3" cy="586.1" r="2.5"/><circle cx="864.2" cy="571.6" r="2.5"/><circle cx="866.5" cy="567.3" r="2.5"/><circle cx="864.4" cy="560.0" r="2.5"/><circle cx="861.4" cy="581.8" r="2.5"/><circle cx="866.5" cy="566.2" r="2.5"/><circle cx="866.2" cy="559.5" r="2.5"/><circle cx="866.9" cy="572.0" r="2.5"/><circle cx="870.5" cy="568.0" r="2.5"/><circle cx="873.1" cy="597.1" r="2.5"/><circle cx="868.7" cy="589.6" r="2.5"/><circle cx="862.2" cy="584.4" r="2.5"/><circle cx="859.1" cy="575.9" r="2.5"/><circle cx="866.2" cy="585.2" r="2.5"/><circle cx="865.3" cy="558.0" r="2.5"/><circle cx="864.8" cy="549.0" r="2.5"/><circle cx="864.6" cy="531.8" r="2.5"/><circle cx="866.4" cy="591.2" r="2.5"/><circle cx="868.2" cy="561.9" r="2.5"/><circle cx="862.7" cy="530.1" r="2.5"/><circle cx="865.3" cy="555.7" r="2.5"/><circle cx="873.3" cy="579.0" r="2.5"/><circle cx="864.6" cy="557.6" r="2.5"/><circle cx="860.4" cy="545.9" r="2.5"/><circle cx="864.3" cy="539.5" r="2.5"/><circle cx="869.6" cy="587.0" r="2.5"/><circle cx="863.1" cy="542.7" r="2.5"/><circle cx="863.4" cy="565.6" r="2.5"/><circle cx="867.7" cy="549.8" r="2.5"/><circle cx="866.6" cy="581.0" r="2.5"/><circle cx="868.6" cy="557.2" r="2.5"/><circle cx="869.3" cy="585.4" r="2.5"/><circle cx="870.5" cy="556.1" r="2.5"/><circle cx="865.7" cy="554.4" r="2.5"/><circle cx="866.3" cy="600.5" r="2.5"/><circle cx="864.8" cy="559.6" r="2.5"/><circle cx="867.2" cy="561.8" r="2.5"/><circle cx="864.5" cy="585.5" r="2.5"/><circle cx="865.4" cy="562.7" r="2.5"/><circle cx="866.2" cy="559.9" r="2.5"/><circle cx="864.7" cy="577.2" r="2.5"/><circle cx="864.9" cy="571.7" r="2.5"/><circle cx="864.9" cy="567.5" r="2.5"/><circle cx="865.3" cy="541.4" r="2.5"/><circle cx="864.6" cy="584.0" r="2.5"/><circle cx="867.5" cy="535.5" r="2.5"/><circle cx="866.0" cy="588.9" r="2.5"/><circle cx="868.4" cy="586.0" r="2.5"/><circle cx="866.3" cy="571.5" r="2.5"/><circle cx="863.4" cy="551.3" r="2.5"/><circle cx="867.3" cy="569.3" r="2.5"/><circle cx="867.1" cy="588.4" r="2.5"/><circle cx="865.6" cy="560.4" r="2.5"/><circle cx="868.2" cy="601.0" r="2.5"/><circle cx="867.6" cy="586.3" r="2.5"/><circle cx="861.0" cy="551.5" r="2.5"/><circle cx="869.2" cy="585.9" r="2.5"/><circle cx="868.5" cy="565.4" r="2.5"/><circle cx="868.4" cy="531.2" r="2.5"/><circle cx="869.6" cy="563.3" r="2.5"/><circle cx="863.5" cy="579.8" r="2.5"/><circle cx="865.6" cy="578.0" r="2.5"/><circle cx="867.4" cy="555.1" r="2.5"/><circle cx="871.1" cy="544.7" r="2.5"/><circle cx="863.2" cy="519.9" r="2.5"/><circle cx="866.4" cy="574.1" r="2.5"/><circle cx="861.9" cy="563.7" r="2.5"/><circle cx="872.3" cy="566.3" r="2.5"/><circle cx="867.9" cy="558.1" r="2.5"/><circle cx="869.1" cy="579.7" r="2.5"/><circle cx="864.4" cy="553.8" r="2.5"/><circle cx="869.0" cy="578.4" r="2.5"/><circle cx="867.5" cy="547.1" r="2.5"/><circle cx="867.5" cy="573.8" r="2.5"/><circle cx="871.9" cy="538.3" r="2.5"/><circle cx="868.2" cy="568.6" r="2.5"/><circle cx="863.3" cy="574.2" r="2.5"/><circle cx="866.6" cy="584.0" r="2.5"/><circle cx="869.2" cy="589.3" r="2.5"/><circle cx="870.7" cy="573.4" r="2.5"/><circle cx="864.5" cy="571.2" r="2.5"/><circle cx="867.8" cy="546.2" r="2.5"/><circle cx="863.7" cy="553.6" r="2.5"/><circle cx="865.3" cy="591.3" r="2.5"/><circle cx="863.5" cy="543.4" r="2.5"/><circle cx="863.0" cy="578.0" r="2.5"/><circle cx="866.6" cy="537.8" r="2.5"/><circle cx="861.0" cy="563.5" r="2.5"/><circle cx="866.9" cy="597.7" r="2.5"/><circle cx="865.3" cy="572.6" r="2.5"/><circle cx="867.9" cy="572.5" r="2.5"/><circle cx="865.0" cy="562.6" r="2.5"/><circle cx="869.2" cy="591.3" r="2.5"/><circle cx="866.5" cy="570.8" r="2.5"/><circle cx="866.3" cy="549.1" r="2.5"/><circle cx="864.9" cy="594.8" r="2.5"/><circle cx="865.8" cy="590.9" r="2.5"/><circle cx="870.6" cy="540.4" r="2.5"/><circle cx="863.6" cy="566.7" r="2.5"/><circle cx="862.2" cy="570.1" r="2.5"/><circle cx="865.2" cy="530.7" r="2.5"/><circle cx="867.7" cy="562.2" r="2.5"/><circle cx="869.3" cy="574.1" r="2.5"/><circle cx="868.2" cy="579.5" r="2.5"/><circle cx="864.9" cy="529.8" r="2.5"/><circle cx="859.1" cy="555.0" r="2.5"/><circle cx="864.5" cy="548.8" r="2.5"/><circle cx="864.4" cy="563.4" r="2.5"/><circle cx="862.9" cy="545.7" r="2.5"/><circle cx="864.5" cy="594.0" r="2.5"/><circle cx="858.1" cy="601.4" r="2.5"/><circle cx="868.2" cy="590.9" r="2.5"/><circle cx="863.0" cy="566.5" r="2.5"/><circle cx="865.9" cy="564.5" r="2.5"/><circle cx="865.6" cy="531.9" r="2.5"/><circle cx="863.4" cy="579.9" r="2.5"/><circle cx="865.7" cy="556.5" r="2.5"/><circle cx="870.2" cy="566.2" r="2.5"/><circle cx="868.5" cy="559.0" r="2.5"/><circle cx="874.1" cy="579.3" r="2.5"/><circle cx="870.0" cy="567.2" r="2.5"/><circle cx="867.0" cy="553.5" r="2.5"/><circle cx="869.7" cy="579.4" r="2.5"/><circle cx="866.0" cy="584.6" r="2.5"/><circle cx="859.4" cy="526.2" r="2.5"/><circle cx="866.8" cy="567.8" r="2.5"/><circle cx="864.3" cy="571.3" r="2.5"/><circle cx="867.3" cy="543.4" r="2.5"/><circle cx="867.1" cy="564.1" r="2.5"/><circle cx="863.6" cy="578.6" r="2.5"/><circle cx="866.4" cy="602.6" r="2.5"/><circle cx="865.0" cy="566.1" r="2.5"/><circle cx="870.5" cy="599.8" r="2.5"/><circle cx="862.8" cy="551.7" r="2.5"/><circle cx="860.0" cy="524.2" r="2.5"/><circle cx="866.9" cy="549.5" r="2.5"/><circle cx="867.9" cy="598.9" r="2.5"/><circle cx="867.9" cy="585.0" r="2.5"/><circle cx="865.8" cy="566.6" r="2.5"/><circle cx="866.9" cy="551.7" r="2.5"/><circle cx="866.5" cy="545.2" r="2.5"/><circle cx="867.2" cy="577.2" r="2.5"/><circle cx="867.5" cy="575.0" r="2.5"/><circle cx="868.5" cy="573.9" r="2.5"/><circle cx="865.5" cy="548.1" r="2.5"/><circle cx="861.7" cy="557.9" r="2.5"/><circle cx="865.1" cy="553.4" r="2.5"/><circle cx="868.0" cy="584.7" r="2.5"/><circle cx="867.6" cy="536.0" r="2.5"/><circle cx="865.4" cy="552.2" r="2.5"/><circle cx="872.6" cy="603.0" r="2.5"/><circle cx="865.8" cy="531.5" r="2.5"/><circle cx="866.0" cy="569.4" r="2.5"/><circle cx="863.7" cy="618.8" r="2.5"/><circle cx="868.3" cy="554.5" r="2.5"/><circle cx="869.7" cy="555.8" r="2.5"/><circle cx="863.8" cy="603.3" r="2.5"/><circle cx="867.0" cy="539.1" r="2.5"/><circle cx="867.4" cy="556.6" r="2.5"/><circle cx="870.9" cy="576.4" r="2.5"/><circle cx="865.9" cy="548.7" r="2.5"/><circle cx="865.3" cy="580.9" r="2.5"/><circle cx="865.3" cy="554.2" r="2.5"/><circle cx="864.4" cy="573.4" r="2.5"/><circle cx="867.1" cy="583.4" r="2.5"/><circle cx="864.9" cy="563.1" r="2.5"/><circle cx="867.0" cy="581.7" r="2.5"/><circle cx="864.9" cy="549.6" r="2.5"/><circle cx="865.1" cy="567.5" r="2.5"/><circle cx="866.0" cy="579.5" r="2.5"/><circle cx="868.2" cy="572.4" r="2.5"/><circle cx="861.9" cy="536.1" r="2.5"/><circle cx="865.7" cy="564.4" r="2.5"/><circle cx="867.1" cy="575.3" r="2.5"/><circle cx="863.5" cy="584.9" r="2.5"/><circle cx="864.8" cy="554.4" r="2.5"/><circle cx="865.5" cy="558.2" r="2.5"/><circle cx="860.3" cy="586.2" r="2.5"/><circle cx="866.6" cy="588.6" r="2.5"/><circle cx="868.2" cy="571.4" r="2.5"/><circle cx="865.5" cy="586.4" r="2.5"/><circle cx="865.8" cy="595.5" r="2.5"/><circle cx="868.6" cy="561.6" r="2.5"/><circle cx="865.5" cy="588.0" r="2.5"/><circle cx="867.4" cy="583.5" r="2.5"/><circle cx="868.9" cy="554.7" r="2.5"/><circle cx="864.4" cy="571.4" r="2.5"/><circle cx="870.8" cy="555.7" r="2.5"/><circle cx="868.8" cy="577.4" r="2.5"/><circle cx="868.2" cy="591.9" r="2.5"/><circle cx="867.9" cy="549.5" r="2.5"/><circle cx="865.7" cy="559.1" r="2.5"/><circle cx="865.3" cy="572.7" r="2.5"/><circle cx="866.9" cy="559.2" r="2.5"/><circle cx="866.7" cy="558.7" r="2.5"/><circle cx="863.7" cy="594.9" r="2.5"/><circle cx="867.4" cy="612.5" r="2.5"/><circle cx="862.1" cy="592.7" r="2.5"/><circle cx="868.2" cy="555.2" r="2.5"/><circle cx="874.1" cy="573.1" r="2.5"/><circle cx="865.4" cy="569.8" r="2.5"/><circle cx="862.8" cy="548.8" r="2.5"/><circle cx="864.0" cy="582.4" r="2.5"/><circle cx="866.8" cy="577.1" r="2.5"/><circle cx="867.5" cy="553.8" r="2.5"/><circle cx="868.3" cy="568.0" r="2.5"/><circle cx="864.1" cy="567.8" r="2.5"/><circle cx="863.5" cy="596.0" r="2.5"/><circle cx="862.3" cy="548.9" r="2.5"/><circle cx="862.7" cy="546.1" r="2.5"/><circle cx="866.1" cy="574.2" r="2.5"/><circle cx="866.4" cy="537.6" r="2.5"/><circle cx="862.6" cy="559.2" r="2.5"/><circle cx="865.1" cy="587.4" r="2.5"/><circle cx="860.9" cy="585.8" r="2.5"/><circle cx="863.8" cy="567.3" r="2.5"/><circle cx="868.5" cy="560.0" r="2.5"/><circle cx="865.6" cy="535.5" r="2.5"/><circle cx="864.7" cy="566.7" r="2.5"/><circle cx="865.4" cy="555.0" r="2.5"/><circle cx="867.5" cy="567.7" r="2.5"/><circle cx="867.9" cy="562.0" r="2.5"/><circle cx="864.6" cy="549.5" r="2.5"/><circle cx="865.1" cy="579.0" r="2.5"/><circle cx="868.2" cy="576.2" r="2.5"/><circle cx="866.4" cy="519.0" r="2.5"/><circle cx="868.6" cy="576.7" r="2.5"/><circle cx="865.0" cy="548.5" r="2.5"/><circle cx="867.3" cy="583.9" r="2.5"/><circle cx="868.0" cy="596.7" r="2.5"/><circle cx="869.7" cy="543.1" r="2.5"/><circle cx="870.6" cy="590.9" r="2.5"/><circle cx="868.0" cy="529.7" r="2.5"/><circle cx="867.5" cy="569.8" r="2.5"/><circle cx="869.8" cy="593.0" r="2.5"/><circle cx="866.2" cy="558.4" r="2.5"/><circle cx="865.3" cy="565.3" r="2.5"/><circle cx="868.8" cy="551.1" r="2.5"/><circle cx="866.3" cy="588.8" r="2.5"/><circle cx="862.6" cy="583.5" r="2.5"/><circle cx="865.1" cy="580.7" r="2.5"/><circle cx="873.5" cy="570.3" r="2.5"/><circle cx="866.1" cy="554.7" r="2.5"/><circle cx="863.1" cy="577.4" r="2.5"/><circle cx="867.9" cy="579.8" r="2.5"/><circle cx="869.0" cy="578.4" r="2.5"/><circle cx="867.0" cy="539.5" r="2.5"/><circle cx="869.2" cy="563.9" r="2.5"/><circle cx="866.8" cy="552.9" r="2.5"/><circle cx="865.4" cy="586.6" r="2.5"/><circle cx="868.9" cy="545.3" r="2.5"/><circle cx="867.1" cy="570.6" r="2.5"/><circle cx="863.6" cy="577.9" r="2.5"/><circle cx="865.6" cy="561.5" r="2.5"/><circle cx="868.6" cy="565.3" r="2.5"/><circle cx="867.4" cy="590.1" r="2.5"/><circle cx="866.7" cy="544.8" r="2.5"/><circle cx="864.7" cy="601.2" r="2.5"/><circle cx="868.1" cy="538.9" r="2.5"/><circle cx="868.3" cy="575.4" r="2.5"/><circle cx="867.9" cy="604.8" r="2.5"/><circle cx="866.6" cy="580.1" r="2.5"/><circle cx="869.3" cy="584.7" r="2.5"/><circle cx="871.6" cy="522.0" r="2.5"/><circle cx="871.3" cy="548.1" r="2.5"/><circle cx="864.6" cy="571.7" r="2.5"/><circle cx="868.9" cy="559.3" r="2.5"/><circle cx="864.8" cy="570.6" r="2.5"/><circle cx="864.4" cy="559.1" r="2.5"/><circle cx="866.3" cy="542.7" r="2.5"/><circle cx="868.2" cy="573.0" r="2.5"/><circle cx="869.9" cy="608.7" r="2.5"/><circle cx="862.8" cy="577.4" r="2.5"/><circle cx="867.8" cy="531.5" r="2.5"/><circle cx="868.4" cy="560.9" r="2.5"/><circle cx="866.4" cy="599.1" r="2.5"/><circle cx="864.9" cy="546.5" r="2.5"/><circle cx="867.3" cy="577.3" r="2.5"/><circle cx="866.4" cy="578.5" r="2.5"/><circle cx="861.6" cy="570.6" r="2.5"/><circle cx="864.8" cy="589.3" r="2.5"/><circle cx="865.9" cy="572.4" r="2.5"/><circle cx="866.8" cy="566.2" r="2.5"/><circle cx="866.9" cy="570.9" r="2.5"/><circle cx="864.5" cy="568.6" r="2.5"/><circle cx="866.4" cy="549.0" r="2.5"/><circle cx="866.5" cy="579.4" r="2.5"/><circle cx="868.4" cy="567.3" r="2.5"/><circle cx="868.4" cy="527.1" r="2.5"/><circle cx="868.4" cy="590.1" r="2.5"/><circle cx="864.1" cy="557.3" r="2.5"/><circle cx="862.2" cy="575.4" r="2.5"/><circle cx="866.9" cy="576.0" r="2.5"/><circle cx="864.2" cy="567.8" r="2.5"/><circle cx="865.4" cy="576.5" r="2.5"/><circle cx="867.7" cy="579.0" r="2.5"/><circle cx="865.8" cy="544.0" r="2.5"/><circle cx="868.5" cy="566.4" r="2.5"/><circle cx="865.9" cy="562.0" r="2.5"/><circle cx="866.9" cy="590.5" r="2.5"/><circle cx="864.4" cy="546.5" r="2.5"/><circle cx="864.0" cy="536.5" r="2.5"/><circle cx="868.1" cy="567.2" r="2.5"/><circle cx="865.2" cy="564.4" r="2.5"/><circle cx="868.4" cy="558.0" r="2.5"/><circle cx="869.8" cy="557.7" r="2.5"/><circle cx="864.8" cy="556.0" r="2.5"/><circle cx="868.3" cy="568.1" r="2.5"/><circle cx="864.2" cy="580.5" r="2.5"/><circle cx="867.9" cy="582.5" r="2.5"/><circle cx="870.9" cy="552.4" r="2.5"/><circle cx="861.9" cy="586.1" r="2.5"/><circle cx="866.6" cy="589.4" r="2.5"/><circle cx="866.1" cy="549.8" r="2.5"/><circle cx="868.0" cy="586.3" r="2.5"/><circle cx="868.3" cy="548.0" r="2.5"/><circle cx="864.7" cy="554.7" r="2.5"/><circle cx="864.9" cy="590.7" r="2.5"/><circle cx="869.4" cy="545.3" r="2.5"/><circle cx="864.1" cy="614.7" r="2.5"/><circle cx="869.0" cy="577.6" r="2.5"/><circle cx="867.4" cy="590.7" r="2.5"/><circle cx="867.7" cy="546.5" r="2.5"/><circle cx="866.8" cy="551.6" r="2.5"/><circle cx="867.2" cy="548.6" r="2.5"/><circle cx="865.1" cy="577.0" r="2.5"/><circle cx="861.5" cy="574.7" r="2.5"/><circle cx="865.6" cy="587.7" r="2.5"/><circle cx="869.0" cy="571.6" r="2.5"/><circle cx="873.9" cy="555.6" r="2.5"/><circle cx="864.4" cy="566.7" r="2.5"/><circle cx="868.2" cy="546.7" r="2.5"/><circle cx="870.2" cy="574.9" r="2.5"/><circle cx="868.9" cy="567.4" r="2.5"/><circle cx="868.8" cy="568.7" r="2.5"/><circle cx="866.3" cy="560.2" r="2.5"/><circle cx="864.8" cy="566.5" r="2.5"/><circle cx="867.4" cy="600.0" r="2.5"/><circle cx="865.1" cy="575.2" r="2.5"/><circle cx="869.0" cy="563.8" r="2.5"/><circle cx="866.4" cy="579.9" r="2.5"/><circle cx="867.5" cy="572.0" r="2.5"/><circle cx="868.9" cy="571.5" r="2.5"/><circle cx="866.3" cy="555.4" r="2.5"/><circle cx="867.6" cy="595.0" r="2.5"/><circle cx="866.9" cy="567.4" r="2.5"/><circle cx="861.8" cy="588.9" r="2.5"/><circle cx="868.8" cy="560.1" r="2.5"/><circle cx="865.2" cy="549.2" r="2.5"/><circle cx="862.1" cy="541.1" r="2.5"/><circle cx="865.0" cy="538.9" r="2.5"/><circle cx="865.4" cy="575.8" r="2.5"/><circle cx="867.2" cy="571.1" r="2.5"/><circle cx="869.0" cy="551.6" r="2.5"/><circle cx="865.6" cy="569.8" r="2.5"/><circle cx="866.4" cy="534.6" r="2.5"/><circle cx="866.4" cy="547.3" r="2.5"/><circle cx="866.4" cy="581.7" r="2.5"/><circle cx="862.3" cy="562.1" r="2.5"/><circle cx="867.6" cy="561.8" r="2.5"/><circle cx="869.6" cy="553.0" r="2.5"/><circle cx="871.0" cy="554.8" r="2.5"/><circle cx="864.2" cy="545.5" r="2.5"/><circle cx="863.8" cy="568.9" r="2.5"/><circle cx="863.2" cy="549.4" r="2.5"/><circle cx="870.0" cy="591.6" r="2.5"/><circle cx="864.2" cy="579.6" r="2.5"/><circle cx="861.6" cy="569.1" r="2.5"/><circle cx="865.7" cy="592.7" r="2.5"/><circle cx="860.6" cy="594.8" r="2.5"/><circle cx="866.9" cy="595.8" r="2.5"/><circle cx="866.3" cy="563.4" r="2.5"/><circle cx="868.0" cy="569.1" r="2.5"/><circle cx="866.8" cy="540.5" r="2.5"/><circle cx="864.8" cy="567.3" r="2.5"/><circle cx="869.4" cy="589.2" r="2.5"/><circle cx="867.8" cy="615.6" r="2.5"/><circle cx="862.2" cy="597.1" r="2.5"/><circle cx="865.8" cy="567.9" r="2.5"/><circle cx="860.5" cy="533.4" r="2.5"/><circle cx="871.6" cy="544.0" r="2.5"/><circle cx="865.8" cy="558.4" r="2.5"/><circle cx="864.6" cy="577.5" r="2.5"/><circle cx="864.4" cy="561.5" r="2.5"/><circle cx="865.0" cy="575.6" r="2.5"/><circle cx="870.8" cy="573.1" r="2.5"/><circle cx="867.9" cy="559.6" r="2.5"/><circle cx="865.2" cy="574.6" r="2.5"/><circle cx="869.2" cy="576.4" r="2.5"/><circle cx="868.1" cy="574.6" r="2.5"/><circle cx="865.5" cy="539.3" r="2.5"/><circle cx="862.0" cy="579.8" r="2.5"/><circle cx="864.9" cy="559.1" r="2.5"/><circle cx="864.7" cy="564.8" r="2.5"/><circle cx="868.1" cy="530.7" r="2.5"/><circle cx="868.8" cy="592.6" r="2.5"/><circle cx="870.7" cy="566.9" r="2.5"/><circle cx="863.9" cy="562.7" r="2.5"/><circle cx="863.9" cy="574.2" r="2.5"/><circle cx="864.1" cy="576.0" r="2.5"/><circle cx="860.1" cy="543.6" r="2.5"/><circle cx="866.5" cy="551.8" r="2.5"/><circle cx="867.3" cy="568.9" r="2.5"/><circle cx="869.7" cy="543.1" r="2.5"/><circle cx="865.4" cy="552.2" r="2.5"/><circle cx="865.4" cy="576.3" r="2.5"/><circle cx="867.4" cy="565.8" r="2.5"/><circle cx="866.0" cy="604.7" r="2.5"/><circle cx="864.2" cy="565.5" r="2.5"/><circle cx="868.1" cy="555.2" r="2.5"/><circle cx="864.9" cy="558.6" r="2.5"/><circle cx="863.2" cy="559.2" r="2.5"/><circle cx="871.0" cy="571.6" r="2.5"/><circle cx="863.7" cy="548.0" r="2.5"/><circle cx="866.0" cy="567.2" r="2.5"/><circle cx="867.7" cy="573.4" r="2.5"/><circle cx="868.1" cy="580.4" r="2.5"/><circle cx="864.4" cy="562.0" r="2.5"/><circle cx="867.4" cy="563.2" r="2.5"/><circle cx="868.0" cy="568.3" r="2.5"/><circle cx="864.7" cy="558.7" r="2.5"/><circle cx="862.4" cy="567.3" r="2.5"/><circle cx="868.7" cy="557.0" r="2.5"/><circle cx="869.2" cy="571.7" r="2.5"/><circle cx="865.7" cy="576.0" r="2.5"/><circle cx="865.1" cy="563.3" r="2.5"/><circle cx="868.8" cy="567.8" r="2.5"/><circle cx="870.3" cy="558.4" r="2.5"/><circle cx="861.2" cy="554.9" r="2.5"/><circle cx="865.2" cy="565.2" r="2.5"/><circle cx="864.5" cy="576.7" r="2.5"/><circle cx="871.5" cy="547.7" r="2.5"/><circle cx="865.5" cy="580.6" r="2.5"/><circle cx="865.4" cy="578.2" r="2.5"/><circle cx="867.9" cy="545.7" r="2.5"/><circle cx="862.5" cy="558.3" r="2.5"/><circle cx="866.2" cy="571.5" r="2.5"/><circle cx="868.4" cy="580.4" r="2.5"/><circle cx="864.3" cy="568.2" r="2.5"/><circle cx="864.6" cy="576.1" r="2.5"/><circle cx="868.5" cy="590.2" r="2.5"/><circle cx="869.6" cy="541.3" r="2.5"/><circle cx="865.6" cy="554.1" r="2.5"/><circle cx="863.8" cy="571.0" r="2.5"/><circle cx="865.4" cy="581.1" r="2.5"/><circle cx="868.9" cy="559.0" r="2.5"/><circle cx="868.9" cy="594.2" r="2.5"/><circle cx="866.2" cy="573.5" r="2.5"/><circle cx="862.7" cy="545.7" r="2.5"/><circle cx="866.8" cy="558.6" r="2.5"/><circle cx="870.4" cy="575.1" r="2.5"/><circle cx="870.6" cy="598.9" r="2.5"/><circle cx="870.1" cy="550.3" r="2.5"/><circle cx="863.7" cy="588.5" r="2.5"/><circle cx="873.0" cy="576.0" r="2.5"/><circle cx="869.6" cy="557.4" r="2.5"/><circle cx="867.0" cy="567.6" r="2.5"/><circle cx="863.5" cy="586.3" r="2.5"/><circle cx="864.6" cy="547.9" r="2.5"/><circle cx="861.8" cy="584.8" r="2.5"/><circle cx="867.7" cy="567.2" r="2.5"/><circle cx="865.4" cy="583.6" r="2.5"/><circle cx="862.2" cy="579.8" r="2.5"/><circle cx="863.6" cy="575.2" r="2.5"/><circle cx="864.1" cy="594.1" r="2.5"/><circle cx="869.9" cy="604.5" r="2.5"/><circle cx="868.5" cy="574.1" r="2.5"/><circle cx="865.0" cy="589.0" r="2.5"/><circle cx="864.0" cy="574.7" r="2.5"/><circle cx="861.2" cy="547.9" r="2.5"/><circle cx="866.8" cy="567.3" r="2.5"/><circle cx="866.3" cy="546.5" r="2.5"/><circle cx="866.3" cy="552.8" r="2.5"/><circle cx="864.7" cy="534.7" r="2.5"/><circle cx="864.7" cy="586.4" r="2.5"/><circle cx="864.7" cy="550.0" r="2.5"/><circle cx="870.3" cy="560.1" r="2.5"/><circle cx="871.7" cy="585.8" r="2.5"/><circle cx="864.5" cy="575.8" r="2.5"/><circle cx="869.7" cy="584.2" r="2.5"/><circle cx="866.3" cy="588.7" r="2.5"/><circle cx="866.8" cy="582.8" r="2.5"/><circle cx="873.9" cy="552.4" r="2.5"/><circle cx="865.1" cy="551.4" r="2.5"/><circle cx="866.2" cy="578.5" r="2.5"/><circle cx="867.6" cy="594.4" r="2.5"/><circle cx="870.1" cy="543.8" r="2.5"/><circle cx="863.5" cy="569.6" r="2.5"/><circle cx="861.6" cy="556.7" r="2.5"/><circle cx="867.1" cy="562.7" r="2.5"/><circle cx="865.0" cy="568.1" r="2.5"/><circle cx="864.6" cy="571.3" r="2.5"/><circle cx="864.6" cy="579.1" r="2.5"/><circle cx="864.6" cy="614.5" r="2.5"/><circle cx="864.3" cy="550.9" r="2.5"/><circle cx="870.0" cy="577.8" r="2.5"/><circle cx="866.5" cy="543.2" r="2.5"/><circle cx="862.2" cy="560.0" r="2.5"/><circle cx="862.0" cy="559.8" r="2.5"/><circle cx="865.8" cy="569.3" r="2.5"/><circle cx="865.7" cy="531.3" r="2.5"/><circle cx="859.6" cy="593.8" r="2.5"/><circle cx="866.9" cy="562.6" r="2.5"/><circle cx="864.4" cy="560.8" r="2.5"/><circle cx="866.3" cy="565.2" r="2.5"/><circle cx="869.2" cy="583.5" r="2.5"/><circle cx="866.9" cy="550.0" r="2.5"/><circle cx="864.9" cy="544.0" r="2.5"/><circle cx="864.1" cy="598.3" r="2.5"/><circle cx="863.5" cy="565.6" r="2.5"/><circle cx="868.9" cy="574.4" r="2.5"/><circle cx="866.2" cy="567.9" r="2.5"/><circle cx="867.9" cy="585.9" r="2.5"/><circle cx="866.0" cy="584.7" r="2.5"/><circle cx="867.5" cy="551.7" r="2.5"/><circle cx="860.5" cy="563.4" r="2.5"/><circle cx="865.8" cy="553.9" r="2.5"/><circle cx="864.4" cy="567.0" r="2.5"/><circle cx="863.2" cy="552.7" r="2.5"/><circle cx="872.1" cy="562.7" r="2.5"/><circle cx="870.2" cy="538.3" r="2.5"/><circle cx="865.6" cy="565.6" r="2.5"/><circle cx="866.7" cy="547.6" r="2.5"/><circle cx="864.6" cy="553.4" r="2.5"/><circle cx="864.1" cy="555.0" r="2.5"/><circle cx="866.3" cy="599.2" r="2.5"/><circle cx="865.3" cy="558.1" r="2.5"/><circle cx="865.9" cy="562.6" r="2.5"/><circle cx="872.0" cy="591.4" r="2.5"/><circle cx="864.5" cy="581.6" r="2.5"/><circle cx="866.3" cy="576.2" r="2.5"/><circle cx="865.8" cy="582.7" r="2.5"/><circle cx="864.4" cy="531.4" r="2.5"/><circle cx="872.7" cy="570.3" r="2.5"/><circle cx="866.6" cy="598.5" r="2.5"/><circle cx="865.3" cy="553.1" r="2.5"/><circle cx="867.4" cy="571.1" r="2.5"/><circle cx="871.0" cy="511.6" r="2.5"/><circle cx="865.9" cy="586.5" r="2.5"/><circle cx="867.9" cy="550.7" r="2.5"/><circle cx="864.2" cy="568.1" r="2.5"/><circle cx="869.1" cy="559.5" r="2.5"/><circle cx="864.2" cy="550.2" r="2.5"/><circle cx="864.2" cy="538.1" r="2.5"/><circle cx="866.3" cy="602.3" r="2.5"/><circle cx="864.1" cy="552.0" r="2.5"/><circle cx="871.0" cy="560.0" r="2.5"/><circle cx="865.6" cy="523.7" r="2.5"/><circle cx="863.0" cy="547.4" r="2.5"/><circle cx="862.4" cy="599.8" r="2.5"/><circle cx="863.6" cy="551.5" r="2.5"/><circle cx="867.0" cy="570.6" r="2.5"/><circle cx="867.4" cy="580.3" r="2.5"/><circle cx="870.3" cy="565.0" r="2.5"/><circle cx="867.7" cy="591.4" r="2.5"/><circle cx="866.2" cy="589.7" r="2.5"/><circle cx="868.1" cy="597.5" r="2.5"/><circle cx="868.2" cy="547.2" r="2.5"/><circle cx="867.8" cy="543.0" r="2.5"/><circle cx="870.3" cy="572.4" r="2.5"/><circle cx="865.1" cy="575.7" r="2.5"/><circle cx="866.3" cy="570.9" r="2.5"/><circle cx="865.8" cy="534.6" r="2.5"/><circle cx="866.5" cy="575.1" r="2.5"/><circle cx="870.2" cy="588.1" r="2.5"/><circle cx="866.2" cy="556.6" r="2.5"/><circle cx="868.0" cy="590.7" r="2.5"/><circle cx="862.9" cy="589.8" r="2.5"/><circle cx="864.2" cy="545.1" r="2.5"/><circle cx="866.1" cy="560.7" r="2.5"/><circle cx="864.2" cy="577.1" r="2.5"/><circle cx="868.0" cy="560.6" r="2.5"/><circle cx="865.6" cy="549.0" r="2.5"/><circle cx="864.8" cy="577.5" r="2.5"/><circle cx="865.2" cy="578.4" r="2.5"/><circle cx="868.4" cy="594.8" r="2.5"/><circle cx="867.4" cy="601.9" r="2.5"/><circle cx="861.9" cy="567.4" r="2.5"/><circle cx="867.0" cy="570.0" r="2.5"/><circle cx="861.1" cy="545.4" r="2.5"/><circle cx="869.1" cy="583.1" r="2.5"/><circle cx="869.6" cy="578.6" r="2.5"/><circle cx="866.4" cy="581.8" r="2.5"/><circle cx="863.7" cy="595.7" r="2.5"/><circle cx="865.6" cy="554.9" r="2.5"/><circle cx="865.4" cy="555.8" r="2.5"/><circle cx="868.5" cy="539.3" r="2.5"/><circle cx="868.9" cy="566.4" r="2.5"/><circle cx="867.0" cy="569.5" r="2.5"/><circle cx="864.2" cy="589.4" r="2.5"/><circle cx="870.6" cy="583.6" r="2.5"/><circle cx="867.8" cy="539.6" r="2.5"/><circle cx="866.9" cy="577.2" r="2.5"/><circle cx="867.3" cy="538.0" r="2.5"/><circle cx="864.0" cy="583.4" r="2.5"/><circle cx="865.1" cy="552.5" r="2.5"/><circle cx="868.4" cy="577.4" r="2.5"/><circle cx="866.6" cy="550.2" r="2.5"/><circle cx="863.4" cy="569.3" r="2.5"/><circle cx="867.5" cy="554.0" r="2.5"/><circle cx="868.1" cy="593.0" r="2.5"/><circle cx="866.2" cy="577.5" r="2.5"/><circle cx="867.0" cy="558.8" r="2.5"/><circle cx="866.1" cy="562.4" r="2.5"/><circle cx="871.9" cy="532.6" r="2.5"/><circle cx="868.8" cy="565.7" r="2.5"/><circle cx="871.5" cy="578.5" r="2.5"/><circle cx="861.9" cy="570.3" r="2.5"/><circle cx="864.0" cy="609.8" r="2.5"/><circle cx="863.6" cy="574.4" r="2.5"/><circle cx="865.2" cy="560.2" r="2.5"/><circle cx="867.9" cy="555.7" r="2.5"/><circle cx="863.5" cy="553.5" r="2.5"/><circle cx="870.4" cy="571.5" r="2.5"/><circle cx="865.8" cy="558.3" r="2.5"/><circle cx="867.9" cy="566.6" r="2.5"/><circle cx="867.4" cy="584.5" r="2.5"/><circle cx="861.9" cy="578.2" r="2.5"/><circle cx="865.3" cy="568.7" r="2.5"/><circle cx="865.0" cy="584.7" r="2.5"/><circle cx="866.8" cy="558.3" r="2.5"/><circle cx="865.6" cy="574.5" r="2.5"/><circle cx="866.5" cy="577.5" r="2.5"/><circle cx="867.5" cy="577.3" r="2.5"/><circle cx="861.4" cy="533.8" r="2.5"/><circle cx="867.3" cy="550.6" r="2.5"/><circle cx="865.8" cy="569.9" r="2.5"/><circle cx="866.5" cy="564.6" r="2.5"/><circle cx="866.0" cy="582.7" r="2.5"/><circle cx="867.9" cy="565.9" r="2.5"/><circle cx="871.2" cy="581.7" r="2.5"/><circle cx="865.4" cy="567.9" r="2.5"/><circle cx="861.5" cy="582.8" r="2.5"/><circle cx="861.4" cy="579.0" r="2.5"/><circle cx="866.7" cy="564.6" r="2.5"/><circle cx="869.0" cy="562.8" r="2.5"/><circle cx="868.9" cy="557.1" r="2.5"/><circle cx="860.8" cy="564.1" r="2.5"/><circle cx="862.5" cy="554.9" r="2.5"/><circle cx="869.6" cy="541.7" r="2.5"/><circle cx="867.2" cy="566.4" r="2.5"/><circle cx="862.9" cy="553.1" r="2.5"/><circle cx="867.0" cy="571.8" r="2.5"/><circle cx="863.1" cy="592.0" r="2.5"/><circle cx="865.1" cy="551.7" r="2.5"/><circle cx="866.3" cy="583.0" r="2.5"/><circle cx="868.3" cy="547.1" r="2.5"/><circle cx="867.0" cy="571.2" r="2.5"/><circle cx="867.0" cy="569.3" r="2.5"/><circle cx="867.8" cy="587.0" r="2.5"/><circle cx="869.5" cy="565.9" r="2.5"/><circle cx="872.2" cy="605.4" r="2.5"/><circle cx="864.2" cy="594.6" r="2.5"/><circle cx="866.5" cy="559.5" r="2.5"/><circle cx="864.9" cy="563.5" r="2.5"/><circle cx="866.9" cy="581.5" r="2.5"/><circle cx="866.3" cy="588.3" r="2.5"/><circle cx="865.2" cy="577.7" r="2.5"/><circle cx="864.6" cy="587.0" r="2.5"/><circle cx="867.2" cy="567.8" r="2.5"/><circle cx="870.8" cy="606.1" r="2.5"/><circle cx="866.1" cy="565.7" r="2.5"/><circle cx="867.7" cy="562.6" r="2.5"/><circle cx="872.2" cy="581.0" r="2.5"/><circle cx="862.2" cy="556.8" r="2.5"/><circle cx="864.2" cy="564.4" r="2.5"/><circle cx="865.6" cy="529.0" r="2.5"/><circle cx="863.8" cy="537.7" r="2.5"/><circle cx="867.5" cy="563.6" r="2.5"/><circle cx="866.6" cy="586.0" r="2.5"/><circle cx="866.4" cy="564.5" r="2.5"/><circle cx="865.4" cy="590.0" r="2.5"/><circle cx="865.0" cy="571.5" r="2.5"/><circle cx="865.9" cy="593.4" r="2.5"/><circle cx="866.7" cy="546.1" r="2.5"/><circle cx="865.9" cy="540.5" r="2.5"/><circle cx="867.0" cy="575.3" r="2.5"/><circle cx="863.8" cy="589.5" r="2.5"/><circle cx="864.5" cy="570.5" r="2.5"/><circle cx="863.6" cy="572.1" r="2.5"/><circle cx="870.7" cy="602.9" r="2.5"/><circle cx="867.0" cy="564.3" r="2.5"/><circle cx="867.3" cy="561.1" r="2.5"/><circle cx="866.3" cy="573.4" r="2.5"/><circle cx="865.8" cy="583.5" r="2.5"/><circle cx="864.6" cy="565.3" r="2.5"/><circle cx="866.5" cy="563.8" r="2.5"/><circle cx="864.5" cy="589.1" r="2.5"/><circle cx="871.6" cy="557.7" r="2.5"/><circle cx="868.6" cy="562.4" r="2.5"/><circle cx="868.2" cy="548.2" r="2.5"/><circle cx="869.8" cy="567.7" r="2.5"/><circle cx="867.7" cy="550.9" r="2.5"/><circle cx="862.5" cy="566.4" r="2.5"/><circle cx="867.3" cy="583.2" r="2.5"/><circle cx="864.9" cy="545.7" r="2.5"/><circle cx="867.5" cy="567.6" r="2.5"/><circle cx="865.1" cy="563.3" r="2.5"/><circle cx="874.8" cy="564.0" r="2.5"/><circle cx="863.9" cy="596.7" r="2.5"/><circle cx="869.1" cy="557.2" r="2.5"/><circle cx="864.1" cy="540.7" r="2.5"/><circle cx="869.6" cy="580.3" r="2.5"/><circle cx="864.6" cy="558.8" r="2.5"/><circle cx="866.4" cy="557.2" r="2.5"/><circle cx="869.2" cy="577.2" r="2.5"/><circle cx="867.1" cy="590.3" r="2.5"/><circle cx="868.0" cy="546.7" r="2.5"/><circle cx="859.5" cy="588.6" r="2.5"/><circle cx="867.3" cy="596.1" r="2.5"/><circle cx="866.5" cy="555.8" r="2.5"/><circle cx="866.7" cy="553.7" r="2.5"/><circle cx="866.2" cy="546.7" r="2.5"/><circle cx="865.7" cy="575.4" r="2.5"/><circle cx="864.1" cy="599.3" r="2.5"/><circle cx="866.1" cy="566.1" r="2.5"/><circle cx="865.9" cy="584.7" r="2.5"/><circle cx="865.3" cy="548.7" r="2.5"/><circle cx="866.9" cy="544.4" r="2.5"/><circle cx="867.5" cy="574.6" r="2.5"/><circle cx="871.9" cy="583.4" r="2.5"/><circle cx="862.2" cy="578.2" r="2.5"/><circle cx="867.0" cy="552.2" r="2.5"/><circle cx="867.1" cy="576.9" r="2.5"/><circle cx="869.9" cy="559.6" r="2.5"/><circle cx="866.9" cy="575.2" r="2.5"/><circle cx="870.7" cy="542.9" r="2.5"/><circle cx="864.3" cy="543.9" r="2.5"/><circle cx="867.1" cy="570.8" r="2.5"/><circle cx="869.4" cy="577.6" r="2.5"/><circle cx="866.7" cy="542.9" r="2.5"/><circle cx="867.0" cy="591.1" r="2.5"/><circle cx="864.9" cy="561.5" r="2.5"/><circle cx="864.7" cy="565.5" r="2.5"/><circle cx="868.3" cy="576.2" r="2.5"/><circle cx="863.4" cy="559.6" r="2.5"/><circle cx="870.7" cy="568.2" r="2.5"/><circle cx="867.6" cy="555.6" r="2.5"/><circle cx="867.4" cy="588.3" r="2.5"/><circle cx="867.7" cy="555.3" r="2.5"/><circle cx="864.6" cy="557.7" r="2.5"/><circle cx="864.6" cy="585.3" r="2.5"/><circle cx="864.4" cy="545.3" r="2.5"/><circle cx="868.8" cy="562.6" r="2.5"/><circle cx="870.7" cy="579.2" r="2.5"/><circle cx="868.8" cy="573.9" r="2.5"/><circle cx="861.3" cy="550.5" r="2.5"/><circle cx="867.3" cy="592.0" r="2.5"/><circle cx="865.6" cy="556.8" r="2.5"/><circle cx="865.6" cy="551.5" r="2.5"/><circle cx="862.7" cy="525.7" r="2.5"/><circle cx="866.2" cy="579.5" r="2.5"/><circle cx="865.2" cy="578.3" r="2.5"/><circle cx="862.4" cy="586.8" r="2.5"/><circle cx="866.9" cy="551.2" r="2.5"/><circle cx="863.5" cy="559.0" r="2.5"/><circle cx="865.4" cy="525.2" r="2.5"/><circle cx="868.1" cy="552.0" r="2.5"/><circle cx="867.4" cy="557.1" r="2.5"/><circle cx="865.9" cy="580.4" r="2.5"/><circle cx="870.6" cy="539.9" r="2.5"/><circle cx="869.2" cy="585.2" r="2.5"/><circle cx="866.5" cy="553.0" r="2.5"/><circle cx="866.7" cy="598.5" r="2.5"/><circle cx="866.4" cy="590.7" r="2.5"/><circle cx="863.7" cy="556.1" r="2.5"/><circle cx="858.5" cy="545.1" r="2.5"/><circle cx="863.8" cy="575.2" r="2.5"/><circle cx="866.0" cy="573.7" r="2.5"/><circle cx="865.8" cy="580.4" r="2.5"/><circle cx="866.8" cy="586.3" r="2.5"/><circle cx="866.2" cy="566.2" r="2.5"/><circle cx="865.8" cy="544.2" r="2.5"/><circle cx="866.0" cy="576.6" r="2.5"/><circle cx="871.8" cy="539.6" r="2.5"/><circle cx="867.9" cy="571.3" r="2.5"/><circle cx="870.3" cy="559.9" r="2.5"/><circle cx="866.1" cy="568.6" r="2.5"/><circle cx="868.8" cy="560.5" r="2.5"/><circle cx="865.0" cy="605.6" r="2.5"/><circle cx="868.4" cy="564.8" r="2.5"/><circle cx="868.6" cy="561.7" r="2.5"/><circle cx="869.0" cy="556.5" r="2.5"/><circle cx="866.4" cy="569.3" r="2.5"/><circle cx="861.7" cy="594.4" r="2.5"/><circle cx="871.6" cy="582.2" r="2.5"/><circle cx="864.7" cy="528.4" r="2.5"/><circle cx="867.2" cy="602.9" r="2.5"/><circle cx="860.1" cy="597.9" r="2.5"/><circle cx="865.4" cy="551.1" r="2.5"/><circle cx="867.5" cy="576.3" r="2.5"/><circle cx="868.5" cy="592.7" r="2.5"/><circle cx="865.5" cy="546.0" r="2.5"/><circle cx="873.4" cy="579.1" r="2.5"/><circle cx="863.8" cy="562.4" r="2.5"/><circle cx="867.1" cy="552.1" r="2.5"/><circle cx="867.9" cy="536.0" r="2.5"/><circle cx="871.3" cy="553.3" r="2.5"/><circle cx="864.0" cy="570.7" r="2.5"/><circle cx="867.0" cy="569.8" r="2.5"/><circle cx="869.6" cy="553.1" r="2.5"/><circle cx="867.2" cy="565.0" r="2.5"/><circle cx="868.9" cy="579.6" r="2.5"/><circle cx="863.5" cy="573.9" r="2.5"/><circle cx="864.0" cy="575.4" r="2.5"/><circle cx="860.3" cy="567.2" r="2.5"/><circle cx="864.8" cy="552.2" r="2.5"/><circle cx="869.0" cy="554.9" r="2.5"/><circle cx="862.5" cy="562.2" r="2.5"/><circle cx="867.2" cy="586.3" r="2.5"/><circle cx="867.7" cy="581.3" r="2.5"/><circle cx="862.7" cy="558.1" r="2.5"/><circle cx="865.2" cy="526.9" r="2.5"/><circle cx="867.0" cy="575.6" r="2.5"/><circle cx="866.9" cy="565.7" r="2.5"/><circle cx="866.1" cy="582.7" r="2.5"/><circle cx="864.5" cy="537.3" r="2.5"/><circle cx="864.5" cy="535.6" r="2.5"/><circle cx="864.5" cy="550.9" r="2.5"/><circle cx="866.5" cy="540.2" r="2.5"/><circle cx="866.8" cy="565.0" r="2.5"/><circle cx="865.2" cy="561.4" r="2.5"/><circle cx="868.0" cy="549.3" r="2.5"/></g><g fill="#e8231c" fill-opacity="0.6"><circle cx="1488.9" cy="755.3" r="2.7"/><circle cx="1489.0" cy="765.0" r="2.7"/><circle cx="1489.8" cy="750.9" r="2.7"/><circle cx="1489.4" cy="741.8" r="2.7"/><circle cx="1488.2" cy="716.7" r="2.7"/><circle cx="1486.5" cy="745.7" r="2.7"/><circle cx="1492.8" cy="768.8" r="2.7"/><circle cx="1493.3" cy="722.1" r="2.7"/><circle cx="1490.3" cy="747.2" r="2.7"/><circle cx="1489.3" cy="739.9" r="2.7"/><circle cx="1490.7" cy="734.9" r="2.7"/><circle cx="1487.5" cy="743.1" r="2.7"/><circle cx="1493.6" cy="752.1" r="2.7"/><circle cx="1488.7" cy="729.8" r="2.7"/><circle cx="1488.6" cy="717.1" r="2.7"/><circle cx="1487.6" cy="750.9" r="2.7"/><circle cx="1488.6" cy="770.9" r="2.7"/><circle cx="1489.3" cy="747.8" r="2.7"/><circle cx="1492.6" cy="728.8" r="2.7"/><circle cx="1487.9" cy="708.7" r="2.7"/><circle cx="1489.6" cy="715.5" r="2.7"/><circle cx="1490.1" cy="733.4" r="2.7"/><circle cx="1488.2" cy="725.1" r="2.7"/><circle cx="1486.5" cy="710.1" r="2.7"/><circle cx="1488.0" cy="729.2" r="2.7"/><circle cx="1489.3" cy="758.3" r="2.7"/><circle cx="1491.4" cy="721.0" r="2.7"/><circle cx="1486.8" cy="738.4" r="2.7"/><circle cx="1486.7" cy="727.6" r="2.7"/><circle cx="1487.3" cy="715.4" r="2.7"/><circle cx="1486.1" cy="749.7" r="2.7"/><circle cx="1494.3" cy="752.5" r="2.7"/><circle cx="1489.4" cy="753.5" r="2.7"/><circle cx="1483.6" cy="729.8" r="2.7"/><circle cx="1493.3" cy="764.7" r="2.7"/><circle cx="1492.9" cy="716.5" r="2.7"/><circle cx="1491.3" cy="770.1" r="2.7"/><circle cx="1488.2" cy="765.3" r="2.7"/><circle cx="1492.3" cy="782.1" r="2.7"/><circle cx="1489.5" cy="757.9" r="2.7"/><circle cx="1493.0" cy="710.4" r="2.7"/><circle cx="1489.5" cy="772.6" r="2.7"/><circle cx="1488.4" cy="771.2" r="2.7"/><circle cx="1489.8" cy="767.7" r="2.7"/><circle cx="1489.4" cy="718.3" r="2.7"/><circle cx="1487.0" cy="757.0" r="2.7"/><circle cx="1481.7" cy="749.2" r="2.7"/><circle cx="1491.7" cy="770.8" r="2.7"/><circle cx="1487.2" cy="716.9" r="2.7"/><circle cx="1487.0" cy="739.9" r="2.7"/><circle cx="1493.3" cy="724.8" r="2.7"/><circle cx="1490.0" cy="743.9" r="2.7"/><circle cx="1486.4" cy="736.6" r="2.7"/><circle cx="1487.7" cy="725.8" r="2.7"/><circle cx="1492.0" cy="757.1" r="2.7"/><circle cx="1490.2" cy="717.4" r="2.7"/><circle cx="1493.6" cy="774.7" r="2.7"/><circle cx="1491.5" cy="727.0" r="2.7"/><circle cx="1488.3" cy="742.3" r="2.7"/><circle cx="1489.4" cy="750.3" r="2.7"/><circle cx="1491.6" cy="780.5" r="2.7"/><circle cx="1487.0" cy="743.9" r="2.7"/><circle cx="1487.2" cy="713.3" r="2.7"/><circle cx="1490.2" cy="757.2" r="2.7"/><circle cx="1489.7" cy="767.7" r="2.7"/><circle cx="1489.1" cy="727.6" r="2.7"/><circle cx="1486.1" cy="766.9" r="2.7"/><circle cx="1491.4" cy="763.7" r="2.7"/><circle cx="1486.9" cy="771.2" r="2.7"/><circle cx="1489.2" cy="716.0" r="2.7"/><circle cx="1488.6" cy="759.7" r="2.7"/><circle cx="1491.0" cy="727.8" r="2.7"/><circle cx="1493.3" cy="718.6" r="2.7"/><circle cx="1483.1" cy="756.0" r="2.7"/><circle cx="1490.5" cy="725.0" r="2.7"/><circle cx="1490.8" cy="733.3" r="2.7"/><circle cx="1493.2" cy="715.3" r="2.7"/><circle cx="1491.9" cy="715.6" r="2.7"/><circle cx="1488.9" cy="718.8" r="2.7"/><circle cx="1492.7" cy="768.9" r="2.7"/><circle cx="1491.5" cy="770.0" r="2.7"/><circle cx="1486.6" cy="770.5" r="2.7"/><circle cx="1488.9" cy="716.3" r="2.7"/><circle cx="1491.7" cy="738.5" r="2.7"/><circle cx="1486.4" cy="707.7" r="2.7"/><circle cx="1488.6" cy="747.7" r="2.7"/><circle cx="1490.2" cy="780.3" r="2.7"/><circle cx="1492.5" cy="711.5" r="2.7"/><circle cx="1492.0" cy="710.6" r="2.7"/><circle cx="1492.5" cy="757.1" r="2.7"/><circle cx="1493.2" cy="746.8" r="2.7"/><circle cx="1490.7" cy="765.5" r="2.7"/><circle cx="1490.8" cy="735.7" r="2.7"/><circle cx="1486.4" cy="769.0" r="2.7"/><circle cx="1490.8" cy="712.6" r="2.7"/><circle cx="1488.8" cy="765.6" r="2.7"/><circle cx="1488.1" cy="720.5" r="2.7"/><circle cx="1491.9" cy="772.8" r="2.7"/><circle cx="1488.0" cy="738.3" r="2.7"/><circle cx="1492.9" cy="780.1" r="2.7"/><circle cx="1488.4" cy="769.7" r="2.7"/><circle cx="1487.5" cy="735.7" r="2.7"/><circle cx="1486.1" cy="781.4" r="2.7"/><circle cx="1488.7" cy="740.6" r="2.7"/><circle cx="1488.5" cy="721.1" r="2.7"/><circle cx="1489.6" cy="717.4" r="2.7"/><circle cx="1493.4" cy="750.0" r="2.7"/><circle cx="1489.1" cy="751.7" r="2.7"/><circle cx="1488.6" cy="722.3" r="2.7"/><circle cx="1487.8" cy="731.6" r="2.7"/><circle cx="1486.8" cy="715.7" r="2.7"/><circle cx="1489.2" cy="750.1" r="2.7"/><circle cx="1492.8" cy="744.9" r="2.7"/><circle cx="1493.1" cy="753.2" r="2.7"/><circle cx="1489.8" cy="763.6" r="2.7"/><circle cx="1488.7" cy="728.4" r="2.7"/><circle cx="1486.4" cy="748.5" r="2.7"/><circle cx="1490.9" cy="777.3" r="2.7"/><circle cx="1491.2" cy="777.4" r="2.7"/><circle cx="1492.5" cy="753.3" r="2.7"/><circle cx="1487.1" cy="719.6" r="2.7"/><circle cx="1489.0" cy="764.0" r="2.7"/><circle cx="1484.7" cy="756.8" r="2.7"/><circle cx="1490.6" cy="762.6" r="2.7"/><circle cx="1487.1" cy="735.4" r="2.7"/><circle cx="1491.3" cy="774.2" r="2.7"/><circle cx="1488.6" cy="766.6" r="2.7"/><circle cx="1486.7" cy="761.0" r="2.7"/><circle cx="1489.3" cy="772.8" r="2.7"/><circle cx="1486.8" cy="745.8" r="2.7"/><circle cx="1483.3" cy="731.0" r="2.7"/><circle cx="1488.2" cy="715.4" r="2.7"/><circle cx="1492.3" cy="718.1" r="2.7"/><circle cx="1490.0" cy="726.4" r="2.7"/><circle cx="1489.9" cy="715.5" r="2.7"/><circle cx="1491.7" cy="720.7" r="2.7"/><circle cx="1491.0" cy="715.7" r="2.7"/><circle cx="1488.6" cy="774.5" r="2.7"/><circle cx="1489.9" cy="756.0" r="2.7"/><circle cx="1486.5" cy="782.7" r="2.7"/><circle cx="1488.7" cy="764.7" r="2.7"/><circle cx="1487.5" cy="764.3" r="2.7"/><circle cx="1493.0" cy="735.7" r="2.7"/><circle cx="1487.1" cy="709.0" r="2.7"/><circle cx="1487.8" cy="775.0" r="2.7"/><circle cx="1490.3" cy="728.5" r="2.7"/><circle cx="1490.1" cy="757.1" r="2.7"/><circle cx="1485.2" cy="774.9" r="2.7"/><circle cx="1489.7" cy="762.4" r="2.7"/><circle cx="1486.6" cy="725.1" r="2.7"/><circle cx="1488.1" cy="743.4" r="2.7"/><circle cx="1487.3" cy="747.3" r="2.7"/><circle cx="1487.9" cy="720.6" r="2.7"/><circle cx="1489.4" cy="773.7" r="2.7"/><circle cx="1491.0" cy="720.4" r="2.7"/><circle cx="1488.3" cy="710.1" r="2.7"/><circle cx="1493.9" cy="759.8" r="2.7"/><circle cx="1490.6" cy="770.3" r="2.7"/><circle cx="1486.9" cy="757.4" r="2.7"/><circle cx="1490.2" cy="778.0" r="2.7"/><circle cx="1485.8" cy="749.2" r="2.7"/><circle cx="1488.0" cy="730.6" r="2.7"/><circle cx="1487.2" cy="722.3" r="2.7"/><circle cx="1487.4" cy="766.2" r="2.7"/><circle cx="1489.4" cy="756.2" r="2.7"/><circle cx="1486.8" cy="757.8" r="2.7"/><circle cx="1492.2" cy="766.4" r="2.7"/><circle cx="1488.5" cy="730.6" r="2.7"/><circle cx="1488.9" cy="758.3" r="2.7"/><circle cx="1489.2" cy="749.7" r="2.7"/><circle cx="1487.6" cy="744.9" r="2.7"/><circle cx="1488.0" cy="714.3" r="2.7"/><circle cx="1489.8" cy="768.4" r="2.7"/><circle cx="1489.0" cy="735.3" r="2.7"/><circle cx="1491.9" cy="764.1" r="2.7"/><circle cx="1487.4" cy="745.6" r="2.7"/><circle cx="1493.7" cy="767.1" r="2.7"/><circle cx="1492.3" cy="720.2" r="2.7"/><circle cx="1493.6" cy="752.0" r="2.7"/><circle cx="1489.9" cy="735.7" r="2.7"/><circle cx="1490.4" cy="757.5" r="2.7"/><circle cx="1491.5" cy="712.0" r="2.7"/><circle cx="1493.0" cy="775.8" r="2.7"/><circle cx="1489.4" cy="761.4" r="2.7"/><circle cx="1487.0" cy="763.5" r="2.7"/><circle cx="1492.7" cy="783.7" r="2.7"/><circle cx="1489.5" cy="759.2" r="2.7"/><circle cx="1492.7" cy="734.5" r="2.7"/><circle cx="1487.7" cy="741.0" r="2.7"/><circle cx="1487.9" cy="725.8" r="2.7"/><circle cx="1485.5" cy="737.5" r="2.7"/><circle cx="1490.4" cy="722.2" r="2.7"/><circle cx="1490.4" cy="780.8" r="2.7"/><circle cx="1490.8" cy="713.3" r="2.7"/><circle cx="1491.6" cy="751.9" r="2.7"/><circle cx="1488.4" cy="736.6" r="2.7"/><circle cx="1486.7" cy="741.2" r="2.7"/><circle cx="1486.4" cy="748.7" r="2.7"/><circle cx="1492.0" cy="710.0" r="2.7"/><circle cx="1488.2" cy="766.1" r="2.7"/><circle cx="1487.5" cy="763.0" r="2.7"/><circle cx="1492.7" cy="773.5" r="2.7"/><circle cx="1491.3" cy="741.6" r="2.7"/><circle cx="1486.0" cy="779.1" r="2.7"/><circle cx="1492.1" cy="742.7" r="2.7"/><circle cx="1489.0" cy="730.5" r="2.7"/><circle cx="1490.5" cy="743.9" r="2.7"/><circle cx="1490.3" cy="712.2" r="2.7"/><circle cx="1487.1" cy="760.3" r="2.7"/><circle cx="1488.2" cy="733.6" r="2.7"/><circle cx="1489.6" cy="779.5" r="2.7"/><circle cx="1489.8" cy="745.2" r="2.7"/><circle cx="1492.1" cy="710.8" r="2.7"/><circle cx="1489.2" cy="726.0" r="2.7"/><circle cx="1488.6" cy="739.5" r="2.7"/><circle cx="1490.2" cy="752.0" r="2.7"/><circle cx="1485.1" cy="766.8" r="2.7"/><circle cx="1491.7" cy="758.3" r="2.7"/><circle cx="1487.2" cy="759.5" r="2.7"/><circle cx="1486.1" cy="757.9" r="2.7"/><circle cx="1489.6" cy="734.4" r="2.7"/><circle cx="1487.4" cy="750.1" r="2.7"/><circle cx="1488.2" cy="731.9" r="2.7"/><circle cx="1488.8" cy="740.4" r="2.7"/><circle cx="1490.4" cy="735.4" r="2.7"/><circle cx="1488.6" cy="767.4" r="2.7"/><circle cx="1492.1" cy="709.0" r="2.7"/><circle cx="1493.0" cy="755.6" r="2.7"/><circle cx="1490.5" cy="780.4" r="2.7"/><circle cx="1489.3" cy="740.2" r="2.7"/><circle cx="1487.2" cy="779.9" r="2.7"/><circle cx="1487.6" cy="764.8" r="2.7"/><circle cx="1489.7" cy="762.8" r="2.7"/><circle cx="1486.9" cy="776.8" r="2.7"/><circle cx="1488.4" cy="766.2" r="2.7"/><circle cx="1489.0" cy="751.2" r="2.7"/><circle cx="1493.1" cy="720.1" r="2.7"/><circle cx="1491.2" cy="750.5" r="2.7"/><circle cx="1490.5" cy="738.5" r="2.7"/><circle cx="1489.9" cy="769.3" r="2.7"/><circle cx="1489.8" cy="712.5" r="2.7"/><circle cx="1486.3" cy="730.2" r="2.7"/><circle cx="1492.6" cy="710.0" r="2.7"/><circle cx="1487.4" cy="731.3" r="2.7"/><circle cx="1491.6" cy="735.1" r="2.7"/><circle cx="1489.5" cy="747.1" r="2.7"/><circle cx="1490.5" cy="735.5" r="2.7"/><circle cx="1492.2" cy="775.7" r="2.7"/><circle cx="1487.9" cy="755.5" r="2.7"/><circle cx="1491.0" cy="727.0" r="2.7"/><circle cx="1487.4" cy="727.4" r="2.7"/><circle cx="1486.5" cy="742.5" r="2.7"/><circle cx="1490.0" cy="779.3" r="2.7"/><circle cx="1490.6" cy="746.1" r="2.7"/><circle cx="1491.0" cy="745.6" r="2.7"/><circle cx="1487.8" cy="730.8" r="2.7"/><circle cx="1486.3" cy="741.0" r="2.7"/><circle cx="1486.9" cy="716.5" r="2.7"/><circle cx="1485.9" cy="758.7" r="2.7"/><circle cx="1485.2" cy="727.6" r="2.7"/><circle cx="1490.3" cy="719.1" r="2.7"/><circle cx="1490.7" cy="727.6" r="2.7"/><circle cx="1489.8" cy="770.3" r="2.7"/><circle cx="1490.4" cy="750.1" r="2.7"/><circle cx="1494.1" cy="715.0" r="2.7"/><circle cx="1484.8" cy="726.1" r="2.7"/><circle cx="1485.5" cy="731.5" r="2.7"/><circle cx="1491.5" cy="716.1" r="2.7"/><circle cx="1488.4" cy="770.8" r="2.7"/><circle cx="1491.1" cy="765.8" r="2.7"/><circle cx="1492.6" cy="727.1" r="2.7"/><circle cx="1490.8" cy="723.8" r="2.7"/><circle cx="1488.9" cy="778.4" r="2.7"/><circle cx="1491.6" cy="746.8" r="2.7"/><circle cx="1489.3" cy="757.9" r="2.7"/><circle cx="1486.2" cy="776.4" r="2.7"/><circle cx="1486.2" cy="766.7" r="2.7"/><circle cx="1485.6" cy="770.0" r="2.7"/><circle cx="1489.0" cy="745.1" r="2.7"/><circle cx="1487.3" cy="749.9" r="2.7"/><circle cx="1486.6" cy="716.0" r="2.7"/><circle cx="1489.6" cy="726.5" r="2.7"/><circle cx="1489.1" cy="741.7" r="2.7"/><circle cx="1489.4" cy="768.6" r="2.7"/><circle cx="1487.4" cy="713.3" r="2.7"/><circle cx="1491.7" cy="728.5" r="2.7"/><circle cx="1487.5" cy="727.3" r="2.7"/><circle cx="1490.0" cy="727.7" r="2.7"/><circle cx="1488.2" cy="758.8" r="2.7"/><circle cx="1492.9" cy="782.6" r="2.7"/><circle cx="1492.7" cy="724.8" r="2.7"/><circle cx="1489.3" cy="773.5" r="2.7"/><circle cx="1488.8" cy="746.0" r="2.7"/><circle cx="1492.1" cy="762.9" r="2.7"/><circle cx="1484.6" cy="710.7" r="2.7"/><circle cx="1491.4" cy="782.0" r="2.7"/><circle cx="1488.6" cy="739.2" r="2.7"/><circle cx="1489.9" cy="741.4" r="2.7"/><circle cx="1489.7" cy="711.6" r="2.7"/><circle cx="1491.0" cy="754.5" r="2.7"/><circle cx="1488.0" cy="726.0" r="2.7"/><circle cx="1490.6" cy="783.2" r="2.7"/><circle cx="1491.8" cy="720.3" r="2.7"/><circle cx="1489.2" cy="716.0" r="2.7"/><circle cx="1490.2" cy="748.6" r="2.7"/><circle cx="1492.2" cy="725.4" r="2.7"/><circle cx="1492.4" cy="757.4" r="2.7"/><circle cx="1486.2" cy="729.0" r="2.7"/><circle cx="1490.6" cy="764.4" r="2.7"/><circle cx="1490.6" cy="732.4" r="2.7"/><circle cx="1491.5" cy="745.0" r="2.7"/><circle cx="1488.8" cy="717.3" r="2.7"/><circle cx="1491.1" cy="755.9" r="2.7"/><circle cx="1492.5" cy="708.6" r="2.7"/><circle cx="1486.3" cy="756.9" r="2.7"/><circle cx="1490.2" cy="708.7" r="2.7"/><circle cx="1489.8" cy="763.9" r="2.7"/><circle cx="1489.7" cy="765.9" r="2.7"/><circle cx="1490.5" cy="711.2" r="2.7"/><circle cx="1492.4" cy="717.4" r="2.7"/><circle cx="1489.3" cy="743.7" r="2.7"/><circle cx="1492.6" cy="770.5" r="2.7"/><circle cx="1488.8" cy="749.0" r="2.7"/><circle cx="1488.6" cy="783.0" r="2.7"/><circle cx="1485.4" cy="771.7" r="2.7"/><circle cx="1495.4" cy="768.7" r="2.7"/><circle cx="1486.3" cy="775.7" r="2.7"/><circle cx="1487.6" cy="774.6" r="2.7"/><circle cx="1493.1" cy="715.8" r="2.7"/><circle cx="1488.0" cy="749.4" r="2.7"/><circle cx="1490.6" cy="775.9" r="2.7"/><circle cx="1488.9" cy="743.8" r="2.7"/><circle cx="1487.9" cy="711.4" r="2.7"/><circle cx="1487.0" cy="740.7" r="2.7"/><circle cx="1492.9" cy="728.8" r="2.7"/><circle cx="1489.6" cy="716.6" r="2.7"/><circle cx="1489.0" cy="722.0" r="2.7"/><circle cx="1489.3" cy="778.8" r="2.7"/><circle cx="1489.0" cy="718.7" r="2.7"/><circle cx="1488.2" cy="750.6" r="2.7"/><circle cx="1485.3" cy="717.9" r="2.7"/><circle cx="1489.2" cy="762.2" r="2.7"/><circle cx="1490.3" cy="709.1" r="2.7"/><circle cx="1487.2" cy="745.1" r="2.7"/><circle cx="1491.4" cy="748.2" r="2.7"/><circle cx="1489.4" cy="711.1" r="2.7"/><circle cx="1490.7" cy="720.8" r="2.7"/><circle cx="1488.0" cy="713.9" r="2.7"/><circle cx="1488.1" cy="777.1" r="2.7"/><circle cx="1492.2" cy="762.1" r="2.7"/><circle cx="1489.7" cy="727.2" r="2.7"/><circle cx="1486.2" cy="742.8" r="2.7"/><circle cx="1488.7" cy="762.1" r="2.7"/><circle cx="1485.5" cy="737.3" r="2.7"/><circle cx="1485.9" cy="711.2" r="2.7"/><circle cx="1489.0" cy="720.0" r="2.7"/><circle cx="1491.2" cy="736.2" r="2.7"/><circle cx="1487.1" cy="778.7" r="2.7"/><circle cx="1488.6" cy="772.9" r="2.7"/><circle cx="1492.2" cy="730.7" r="2.7"/><circle cx="1490.8" cy="710.6" r="2.7"/><circle cx="1494.2" cy="710.6" r="2.7"/><circle cx="1491.0" cy="727.2" r="2.7"/><circle cx="1490.1" cy="783.4" r="2.7"/><circle cx="1488.5" cy="727.9" r="2.7"/><circle cx="1492.2" cy="737.9" r="2.7"/><circle cx="1485.1" cy="756.2" r="2.7"/><circle cx="1491.5" cy="709.7" r="2.7"/><circle cx="1491.1" cy="766.7" r="2.7"/><circle cx="1489.1" cy="733.8" r="2.7"/><circle cx="1487.3" cy="781.8" r="2.7"/><circle cx="1486.8" cy="725.4" r="2.7"/><circle cx="1492.5" cy="744.7" r="2.7"/><circle cx="1488.8" cy="721.4" r="2.7"/><circle cx="1486.4" cy="762.7" r="2.7"/><circle cx="1491.8" cy="779.4" r="2.7"/><circle cx="1487.5" cy="760.5" r="2.7"/><circle cx="1488.3" cy="751.3" r="2.7"/><circle cx="1487.0" cy="766.1" r="2.7"/><circle cx="1492.7" cy="763.4" r="2.7"/><circle cx="1488.8" cy="738.7" r="2.7"/><circle cx="1488.0" cy="707.9" r="2.7"/><circle cx="1490.3" cy="783.2" r="2.7"/><circle cx="1485.0" cy="731.2" r="2.7"/><circle cx="1490.1" cy="738.5" r="2.7"/><circle cx="1488.2" cy="776.6" r="2.7"/><circle cx="1487.8" cy="738.0" r="2.7"/><circle cx="1484.9" cy="779.1" r="2.7"/><circle cx="1488.4" cy="773.0" r="2.7"/><circle cx="1485.5" cy="739.6" r="2.7"/><circle cx="1487.8" cy="765.6" r="2.7"/><circle cx="1486.1" cy="713.0" r="2.7"/><circle cx="1491.3" cy="782.3" r="2.7"/><circle cx="1490.2" cy="739.9" r="2.7"/><circle cx="1491.0" cy="783.3" r="2.7"/><circle cx="1491.5" cy="770.2" r="2.7"/><circle cx="1487.7" cy="721.8" r="2.7"/><circle cx="1487.7" cy="731.2" r="2.7"/><circle cx="1490.3" cy="770.5" r="2.7"/><circle cx="1485.6" cy="765.9" r="2.7"/><circle cx="1487.5" cy="775.1" r="2.7"/><circle cx="1489.4" cy="744.9" r="2.7"/><circle cx="1489.0" cy="748.3" r="2.7"/><circle cx="1485.6" cy="740.9" r="2.7"/><circle cx="1489.7" cy="768.9" r="2.7"/><circle cx="1492.0" cy="755.5" r="2.7"/><circle cx="1489.5" cy="740.8" r="2.7"/><circle cx="1488.3" cy="777.4" r="2.7"/><circle cx="1491.1" cy="757.8" r="2.7"/><circle cx="1488.0" cy="746.4" r="2.7"/><circle cx="1489.8" cy="775.6" r="2.7"/><circle cx="1490.9" cy="732.8" r="2.7"/><circle cx="1488.1" cy="777.3" r="2.7"/><circle cx="1490.0" cy="722.0" r="2.7"/><circle cx="1487.9" cy="780.5" r="2.7"/><circle cx="1490.8" cy="777.6" r="2.7"/><circle cx="1489.1" cy="783.2" r="2.7"/><circle cx="1487.4" cy="747.4" r="2.7"/><circle cx="1489.8" cy="781.5" r="2.7"/><circle cx="1492.1" cy="721.8" r="2.7"/><circle cx="1487.5" cy="780.9" r="2.7"/><circle cx="1491.8" cy="715.8" r="2.7"/><circle cx="1488.1" cy="712.9" r="2.7"/><circle cx="1491.6" cy="765.1" r="2.7"/><circle cx="1488.9" cy="768.3" r="2.7"/><circle cx="1491.6" cy="710.6" r="2.7"/><circle cx="1489.0" cy="771.9" r="2.7"/><circle cx="1489.8" cy="762.5" r="2.7"/><circle cx="1487.9" cy="765.9" r="2.7"/><circle cx="1490.4" cy="782.9" r="2.7"/><circle cx="1489.3" cy="759.0" r="2.7"/><circle cx="1490.1" cy="713.3" r="2.7"/><circle cx="1490.6" cy="782.5" r="2.7"/><circle cx="1491.2" cy="741.5" r="2.7"/><circle cx="1491.6" cy="769.2" r="2.7"/><circle cx="1488.1" cy="708.9" r="2.7"/><circle cx="1488.3" cy="764.9" r="2.7"/><circle cx="1487.7" cy="713.0" r="2.7"/><circle cx="1489.7" cy="746.8" r="2.7"/><circle cx="1488.0" cy="710.8" r="2.7"/><circle cx="1487.5" cy="761.6" r="2.7"/><circle cx="1489.0" cy="737.2" r="2.7"/><circle cx="1488.0" cy="759.6" r="2.7"/><circle cx="1484.7" cy="712.4" r="2.7"/><circle cx="1488.8" cy="743.6" r="2.7"/><circle cx="1488.1" cy="721.5" r="2.7"/><circle cx="1486.0" cy="780.2" r="2.7"/><circle cx="1491.7" cy="735.7" r="2.7"/><circle cx="1486.1" cy="734.5" r="2.7"/><circle cx="1483.6" cy="731.8" r="2.7"/><circle cx="1490.4" cy="749.6" r="2.7"/><circle cx="1490.7" cy="717.0" r="2.7"/><circle cx="1489.1" cy="746.4" r="2.7"/><circle cx="1490.9" cy="725.6" r="2.7"/><circle cx="1485.4" cy="719.0" r="2.7"/><circle cx="1488.3" cy="774.4" r="2.7"/><circle cx="1490.6" cy="768.4" r="2.7"/><circle cx="1488.1" cy="708.3" r="2.7"/><circle cx="1485.8" cy="773.5" r="2.7"/><circle cx="1491.3" cy="753.2" r="2.7"/><circle cx="1489.6" cy="783.7" r="2.7"/><circle cx="1490.2" cy="780.3" r="2.7"/><circle cx="1488.8" cy="723.0" r="2.7"/><circle cx="1488.5" cy="770.5" r="2.7"/><circle cx="1487.2" cy="722.6" r="2.7"/><circle cx="1483.5" cy="762.2" r="2.7"/><circle cx="1493.0" cy="745.3" r="2.7"/><circle cx="1490.6" cy="715.6" r="2.7"/><circle cx="1495.4" cy="780.3" r="2.7"/><circle cx="1492.6" cy="724.2" r="2.7"/><circle cx="1489.4" cy="752.0" r="2.7"/><circle cx="1488.5" cy="713.3" r="2.7"/><circle cx="1489.5" cy="737.7" r="2.7"/><circle cx="1491.1" cy="764.2" r="2.7"/><circle cx="1490.8" cy="741.3" r="2.7"/><circle cx="1490.2" cy="710.3" r="2.7"/><circle cx="1491.4" cy="755.9" r="2.7"/><circle cx="1491.3" cy="739.3" r="2.7"/><circle cx="1492.4" cy="732.6" r="2.7"/><circle cx="1488.5" cy="741.8" r="2.7"/><circle cx="1492.7" cy="759.7" r="2.7"/><circle cx="1488.4" cy="751.9" r="2.7"/><circle cx="1490.6" cy="742.1" r="2.7"/><circle cx="1488.0" cy="766.6" r="2.7"/><circle cx="1486.1" cy="741.8" r="2.7"/><circle cx="1493.1" cy="772.5" r="2.7"/><circle cx="1491.7" cy="753.3" r="2.7"/><circle cx="1489.0" cy="776.3" r="2.7"/><circle cx="1489.1" cy="712.8" r="2.7"/><circle cx="1490.0" cy="733.7" r="2.7"/><circle cx="1488.2" cy="714.7" r="2.7"/><circle cx="1488.5" cy="775.3" r="2.7"/><circle cx="1488.5" cy="737.4" r="2.7"/><circle cx="1489.5" cy="773.8" r="2.7"/><circle cx="1490.4" cy="734.8" r="2.7"/><circle cx="1487.9" cy="761.8" r="2.7"/><circle cx="1489.8" cy="783.0" r="2.7"/><circle cx="1491.9" cy="730.8" r="2.7"/><circle cx="1491.2" cy="760.0" r="2.7"/><circle cx="1489.0" cy="777.1" r="2.7"/><circle cx="1488.1" cy="778.7" r="2.7"/><circle cx="1482.7" cy="734.2" r="2.7"/><circle cx="1491.7" cy="715.1" r="2.7"/><circle cx="1479.3" cy="718.0" r="2.7"/><circle cx="1492.3" cy="760.4" r="2.7"/><circle cx="1490.2" cy="711.7" r="2.7"/><circle cx="1487.7" cy="738.0" r="2.7"/><circle cx="1489.9" cy="770.4" r="2.7"/><circle cx="1489.2" cy="752.0" r="2.7"/><circle cx="1490.1" cy="721.9" r="2.7"/><circle cx="1490.2" cy="751.2" r="2.7"/><circle cx="1485.0" cy="724.6" r="2.7"/><circle cx="1487.5" cy="726.9" r="2.7"/><circle cx="1492.3" cy="769.6" r="2.7"/><circle cx="1491.3" cy="768.6" r="2.7"/><circle cx="1489.9" cy="753.1" r="2.7"/><circle cx="1490.0" cy="716.2" r="2.7"/><circle cx="1488.7" cy="745.3" r="2.7"/><circle cx="1495.4" cy="718.6" r="2.7"/><circle cx="1487.6" cy="763.4" r="2.7"/><circle cx="1486.6" cy="711.8" r="2.7"/><circle cx="1491.1" cy="724.2" r="2.7"/><circle cx="1486.8" cy="708.8" r="2.7"/><circle cx="1488.3" cy="733.7" r="2.7"/><circle cx="1488.5" cy="754.4" r="2.7"/><circle cx="1486.6" cy="772.9" r="2.7"/><circle cx="1489.1" cy="757.0" r="2.7"/><circle cx="1486.3" cy="758.0" r="2.7"/><circle cx="1491.6" cy="711.7" r="2.7"/><circle cx="1487.4" cy="771.2" r="2.7"/><circle cx="1489.0" cy="780.9" r="2.7"/><circle cx="1490.3" cy="783.7" r="2.7"/><circle cx="1485.5" cy="723.2" r="2.7"/><circle cx="1489.2" cy="740.4" r="2.7"/><circle cx="1490.1" cy="748.3" r="2.7"/><circle cx="1486.6" cy="739.5" r="2.7"/><circle cx="1487.4" cy="723.1" r="2.7"/><circle cx="1488.6" cy="709.1" r="2.7"/><circle cx="1490.5" cy="753.6" r="2.7"/><circle cx="1491.8" cy="735.8" r="2.7"/><circle cx="1490.2" cy="758.9" r="2.7"/><circle cx="1487.0" cy="746.3" r="2.7"/><circle cx="1491.2" cy="727.6" r="2.7"/><circle cx="1492.3" cy="738.5" r="2.7"/><circle cx="1489.1" cy="753.6" r="2.7"/><circle cx="1486.6" cy="745.9" r="2.7"/><circle cx="1488.0" cy="709.5" r="2.7"/><circle cx="1492.3" cy="727.9" r="2.7"/><circle cx="1489.3" cy="724.1" r="2.7"/><circle cx="1491.7" cy="781.5" r="2.7"/><circle cx="1487.2" cy="727.9" r="2.7"/><circle cx="1491.0" cy="727.4" r="2.7"/><circle cx="1491.9" cy="729.6" r="2.7"/><circle cx="1492.0" cy="710.7" r="2.7"/><circle cx="1489.6" cy="741.8" r="2.7"/><circle cx="1488.9" cy="744.0" r="2.7"/><circle cx="1490.2" cy="738.1" r="2.7"/><circle cx="1491.5" cy="759.5" r="2.7"/><circle cx="1490.1" cy="745.0" r="2.7"/><circle cx="1489.9" cy="729.4" r="2.7"/><circle cx="1488.4" cy="759.6" r="2.7"/><circle cx="1488.3" cy="720.7" r="2.7"/><circle cx="1489.0" cy="760.5" r="2.7"/><circle cx="1484.2" cy="761.0" r="2.7"/><circle cx="1487.7" cy="757.6" r="2.7"/><circle cx="1492.1" cy="746.5" r="2.7"/><circle cx="1490.6" cy="737.0" r="2.7"/><circle cx="1487.2" cy="781.3" r="2.7"/><circle cx="1490.9" cy="736.0" r="2.7"/><circle cx="1489.6" cy="741.8" r="2.7"/><circle cx="1494.7" cy="757.2" r="2.7"/><circle cx="1490.4" cy="734.3" r="2.7"/><circle cx="1494.0" cy="766.6" r="2.7"/><circle cx="1493.6" cy="711.4" r="2.7"/><circle cx="1490.2" cy="764.1" r="2.7"/><circle cx="1488.5" cy="759.9" r="2.7"/><circle cx="1490.1" cy="719.2" r="2.7"/><circle cx="1490.0" cy="757.3" r="2.7"/><circle cx="1490.5" cy="776.0" r="2.7"/><circle cx="1489.1" cy="755.9" r="2.7"/><circle cx="1492.2" cy="729.6" r="2.7"/><circle cx="1489.6" cy="748.4" r="2.7"/><circle cx="1488.1" cy="760.2" r="2.7"/><circle cx="1489.9" cy="757.7" r="2.7"/><circle cx="1490.1" cy="751.4" r="2.7"/><circle cx="1486.8" cy="746.2" r="2.7"/><circle cx="1486.5" cy="772.9" r="2.7"/><circle cx="1487.7" cy="748.8" r="2.7"/><circle cx="1488.2" cy="735.0" r="2.7"/><circle cx="1490.9" cy="720.2" r="2.7"/><circle cx="1487.4" cy="744.8" r="2.7"/><circle cx="1483.4" cy="730.8" r="2.7"/><circle cx="1489.3" cy="725.9" r="2.7"/><circle cx="1488.7" cy="758.2" r="2.7"/><circle cx="1490.0" cy="762.3" r="2.7"/><circle cx="1489.1" cy="720.7" r="2.7"/><circle cx="1488.9" cy="743.6" r="2.7"/><circle cx="1491.8" cy="772.4" r="2.7"/><circle cx="1487.4" cy="728.2" r="2.7"/><circle cx="1488.3" cy="781.4" r="2.7"/><circle cx="1486.8" cy="725.2" r="2.7"/><circle cx="1485.6" cy="716.8" r="2.7"/><circle cx="1489.4" cy="711.3" r="2.7"/><circle cx="1489.2" cy="763.5" r="2.7"/><circle cx="1491.5" cy="738.0" r="2.7"/><circle cx="1489.8" cy="740.6" r="2.7"/><circle cx="1490.4" cy="710.7" r="2.7"/><circle cx="1492.1" cy="713.0" r="2.7"/><circle cx="1487.2" cy="718.2" r="2.7"/><circle cx="1486.1" cy="743.3" r="2.7"/><circle cx="1488.5" cy="782.2" r="2.7"/><circle cx="1485.9" cy="778.4" r="2.7"/><circle cx="1489.8" cy="742.5" r="2.7"/><circle cx="1491.6" cy="764.2" r="2.7"/><circle cx="1490.0" cy="767.9" r="2.7"/><circle cx="1485.5" cy="732.5" r="2.7"/><circle cx="1488.3" cy="714.7" r="2.7"/><circle cx="1488.9" cy="736.9" r="2.7"/><circle cx="1487.5" cy="725.4" r="2.7"/><circle cx="1486.0" cy="739.5" r="2.7"/><circle cx="1483.0" cy="711.3" r="2.7"/><circle cx="1490.4" cy="772.7" r="2.7"/><circle cx="1488.5" cy="767.6" r="2.7"/><circle cx="1490.9" cy="775.5" r="2.7"/><circle cx="1488.3" cy="715.3" r="2.7"/><circle cx="1489.0" cy="742.3" r="2.7"/><circle cx="1491.6" cy="737.9" r="2.7"/><circle cx="1488.6" cy="778.3" r="2.7"/><circle cx="1485.1" cy="774.5" r="2.7"/><circle cx="1490.7" cy="754.0" r="2.7"/><circle cx="1486.6" cy="744.0" r="2.7"/><circle cx="1491.3" cy="781.0" r="2.7"/><circle cx="1484.9" cy="741.7" r="2.7"/><circle cx="1490.1" cy="766.4" r="2.7"/><circle cx="1487.2" cy="729.3" r="2.7"/><circle cx="1489.4" cy="763.6" r="2.7"/><circle cx="1491.2" cy="737.2" r="2.7"/><circle cx="1491.5" cy="719.5" r="2.7"/><circle cx="1489.4" cy="741.1" r="2.7"/><circle cx="1491.2" cy="709.2" r="2.7"/><circle cx="1489.8" cy="733.5" r="2.7"/><circle cx="1490.6" cy="720.7" r="2.7"/><circle cx="1490.8" cy="752.0" r="2.7"/><circle cx="1489.5" cy="764.3" r="2.7"/><circle cx="1486.3" cy="763.3" r="2.7"/><circle cx="1487.3" cy="708.9" r="2.7"/><circle cx="1491.5" cy="766.3" r="2.7"/><circle cx="1487.0" cy="717.6" r="2.7"/><circle cx="1491.8" cy="726.9" r="2.7"/><circle cx="1490.1" cy="733.1" r="2.7"/><circle cx="1490.4" cy="722.6" r="2.7"/><circle cx="1489.5" cy="716.2" r="2.7"/><circle cx="1485.6" cy="773.7" r="2.7"/><circle cx="1488.3" cy="734.2" r="2.7"/><circle cx="1489.0" cy="756.3" r="2.7"/><circle cx="1489.8" cy="723.1" r="2.7"/><circle cx="1484.4" cy="747.4" r="2.7"/><circle cx="1492.5" cy="746.5" r="2.7"/><circle cx="1490.9" cy="755.6" r="2.7"/><circle cx="1493.4" cy="772.0" r="2.7"/><circle cx="1487.6" cy="729.8" r="2.7"/><circle cx="1487.6" cy="738.2" r="2.7"/><circle cx="1486.8" cy="713.6" r="2.7"/><circle cx="1488.2" cy="713.0" r="2.7"/><circle cx="1490.8" cy="725.8" r="2.7"/><circle cx="1492.9" cy="766.4" r="2.7"/><circle cx="1490.5" cy="725.1" r="2.7"/><circle cx="1485.0" cy="770.2" r="2.7"/><circle cx="1487.4" cy="755.0" r="2.7"/><circle cx="1490.0" cy="756.2" r="2.7"/><circle cx="1487.7" cy="745.2" r="2.7"/><circle cx="1486.9" cy="750.9" r="2.7"/><circle cx="1486.2" cy="783.3" r="2.7"/><circle cx="1490.4" cy="715.6" r="2.7"/><circle cx="1492.3" cy="773.7" r="2.7"/><circle cx="1491.1" cy="753.6" r="2.7"/><circle cx="1489.1" cy="708.9" r="2.7"/><circle cx="1487.1" cy="751.2" r="2.7"/><circle cx="1485.6" cy="761.1" r="2.7"/><circle cx="1491.2" cy="747.4" r="2.7"/><circle cx="1491.1" cy="720.8" r="2.7"/><circle cx="1488.6" cy="713.4" r="2.7"/><circle cx="1489.4" cy="715.5" r="2.7"/><circle cx="1492.0" cy="770.1" r="2.7"/><circle cx="1487.3" cy="750.2" r="2.7"/><circle cx="1490.7" cy="732.9" r="2.7"/><circle cx="1488.8" cy="708.4" r="2.7"/><circle cx="1488.6" cy="778.5" r="2.7"/><circle cx="1489.5" cy="756.8" r="2.7"/><circle cx="1487.2" cy="760.2" r="2.7"/><circle cx="1490.5" cy="719.8" r="2.7"/><circle cx="1488.6" cy="740.8" r="2.7"/><circle cx="1487.3" cy="724.2" r="2.7"/><circle cx="1494.5" cy="727.8" r="2.7"/><circle cx="1487.1" cy="710.2" r="2.7"/><circle cx="1491.0" cy="738.9" r="2.7"/><circle cx="1490.1" cy="713.5" r="2.7"/><circle cx="1489.0" cy="763.8" r="2.7"/><circle cx="1493.2" cy="721.0" r="2.7"/><circle cx="1488.6" cy="754.0" r="2.7"/><circle cx="1466.9" cy="731.2" r="2.7"/><circle cx="1467.4" cy="721.5" r="2.7"/><circle cx="1467.9" cy="729.9" r="2.7"/><circle cx="1465.1" cy="716.4" r="2.7"/><circle cx="1465.3" cy="727.4" r="2.7"/><circle cx="1466.0" cy="729.5" r="2.7"/><circle cx="1467.6" cy="718.3" r="2.7"/><circle cx="1465.0" cy="719.4" r="2.7"/><circle cx="1467.1" cy="724.2" r="2.7"/><circle cx="1468.0" cy="730.5" r="2.7"/><circle cx="1464.8" cy="734.4" r="2.7"/><circle cx="1465.1" cy="722.7" r="2.7"/><circle cx="1464.4" cy="723.4" r="2.7"/><circle cx="1465.4" cy="725.6" r="2.7"/><circle cx="1466.9" cy="722.4" r="2.7"/><circle cx="1466.4" cy="733.0" r="2.7"/><circle cx="1466.7" cy="728.3" r="2.7"/><circle cx="1466.5" cy="731.6" r="2.7"/><circle cx="1466.1" cy="719.3" r="2.7"/><circle cx="1467.7" cy="735.6" r="2.7"/><circle cx="1466.7" cy="717.6" r="2.7"/><circle cx="1464.3" cy="721.3" r="2.7"/><circle cx="1462.6" cy="721.4" r="2.7"/><circle cx="1466.9" cy="735.9" r="2.7"/><circle cx="1467.7" cy="733.9" r="2.7"/><circle cx="1464.2" cy="726.1" r="2.7"/><circle cx="1467.1" cy="728.0" r="2.7"/><circle cx="1466.6" cy="718.3" r="2.7"/><circle cx="1465.1" cy="734.8" r="2.7"/><circle cx="1464.3" cy="721.0" r="2.7"/><circle cx="1465.5" cy="731.5" r="2.7"/><circle cx="1463.2" cy="733.2" r="2.7"/><circle cx="1465.1" cy="721.6" r="2.7"/><circle cx="1465.3" cy="719.7" r="2.7"/><circle cx="1468.8" cy="723.7" r="2.7"/><circle cx="1467.5" cy="731.4" r="2.7"/><circle cx="1464.0" cy="716.9" r="2.7"/><circle cx="1463.6" cy="723.6" r="2.7"/><circle cx="1468.5" cy="729.5" r="2.7"/><circle cx="1466.9" cy="723.1" r="2.7"/><circle cx="1465.1" cy="727.9" r="2.7"/><circle cx="1465.5" cy="727.7" r="2.7"/><circle cx="1464.2" cy="730.6" r="2.7"/><circle cx="1466.0" cy="733.2" r="2.7"/><circle cx="1464.0" cy="727.1" r="2.7"/><circle cx="1463.6" cy="731.0" r="2.7"/><circle cx="1463.8" cy="719.4" r="2.7"/><circle cx="1466.0" cy="731.2" r="2.7"/><circle cx="1467.9" cy="720.4" r="2.7"/><circle cx="1467.2" cy="726.1" r="2.7"/><circle cx="1464.8" cy="730.1" r="2.7"/><circle cx="1465.0" cy="716.9" r="2.7"/><circle cx="1465.9" cy="721.7" r="2.7"/><circle cx="1466.5" cy="722.8" r="2.7"/><circle cx="1469.8" cy="729.9" r="2.7"/><circle cx="1465.0" cy="725.7" r="2.7"/><circle cx="1463.9" cy="734.1" r="2.7"/><circle cx="1468.3" cy="733.1" r="2.7"/><circle cx="1463.9" cy="719.4" r="2.7"/><circle cx="1463.4" cy="726.2" r="2.7"/><circle cx="1465.1" cy="726.1" r="2.7"/><circle cx="1468.4" cy="723.5" r="2.7"/><circle cx="1464.2" cy="727.2" r="2.7"/><circle cx="1463.9" cy="720.6" r="2.7"/><circle cx="1465.5" cy="725.0" r="2.7"/><circle cx="1464.4" cy="732.0" r="2.7"/><circle cx="1466.5" cy="734.0" r="2.7"/><circle cx="1469.2" cy="719.0" r="2.7"/><circle cx="1463.8" cy="718.1" r="2.7"/><circle cx="1466.9" cy="733.4" r="2.7"/><circle cx="1468.1" cy="724.0" r="2.7"/><circle cx="1463.7" cy="731.3" r="2.7"/><circle cx="1465.7" cy="732.2" r="2.7"/><circle cx="1465.2" cy="729.3" r="2.7"/><circle cx="1466.4" cy="731.7" r="2.7"/><circle cx="1463.8" cy="735.2" r="2.7"/><circle cx="1463.6" cy="725.2" r="2.7"/><circle cx="1467.0" cy="716.3" r="2.7"/><circle cx="1464.5" cy="723.8" r="2.7"/><circle cx="1467.2" cy="718.8" r="2.7"/><circle cx="1466.7" cy="725.9" r="2.7"/><circle cx="1466.2" cy="726.8" r="2.7"/><circle cx="1469.5" cy="732.7" r="2.7"/><circle cx="1466.1" cy="729.4" r="2.7"/><circle cx="1467.2" cy="717.7" r="2.7"/><circle cx="1464.9" cy="734.9" r="2.7"/><circle cx="1468.5" cy="720.0" r="2.7"/><circle cx="1465.4" cy="734.9" r="2.7"/><circle cx="1463.9" cy="735.0" r="2.7"/><circle cx="1465.8" cy="732.1" r="2.7"/><circle cx="1451.0" cy="755.8" r="2.7"/><circle cx="1448.9" cy="751.9" r="2.7"/><circle cx="1450.2" cy="760.4" r="2.7"/><circle cx="1450.5" cy="752.7" r="2.7"/><circle cx="1446.5" cy="756.2" r="2.7"/><circle cx="1446.6" cy="758.2" r="2.7"/><circle cx="1445.4" cy="752.7" r="2.7"/><circle cx="1447.8" cy="750.2" r="2.7"/><circle cx="1447.6" cy="753.2" r="2.7"/><circle cx="1446.6" cy="756.0" r="2.7"/><circle cx="1446.8" cy="758.7" r="2.7"/><circle cx="1451.0" cy="760.3" r="2.7"/><circle cx="1449.2" cy="749.4" r="2.7"/><circle cx="1447.8" cy="756.6" r="2.7"/><circle cx="1446.8" cy="749.9" r="2.7"/><circle cx="1450.7" cy="761.3" r="2.7"/><circle cx="1447.9" cy="748.4" r="2.7"/><circle cx="1447.9" cy="751.0" r="2.7"/><circle cx="1450.1" cy="749.4" r="2.7"/><circle cx="1447.4" cy="751.4" r="2.7"/><circle cx="1446.6" cy="755.5" r="2.7"/><circle cx="1448.1" cy="754.8" r="2.7"/><circle cx="1450.1" cy="748.9" r="2.7"/><circle cx="1449.1" cy="749.4" r="2.7"/><circle cx="1446.2" cy="757.8" r="2.7"/><circle cx="1449.2" cy="758.1" r="2.7"/><circle cx="1449.7" cy="751.1" r="2.7"/><circle cx="1445.8" cy="755.8" r="2.7"/><circle cx="1451.9" cy="752.3" r="2.7"/><circle cx="1448.6" cy="752.5" r="2.7"/><circle cx="1449.5" cy="747.3" r="2.7"/><circle cx="1449.4" cy="754.6" r="2.7"/><circle cx="1449.7" cy="753.7" r="2.7"/><circle cx="1448.5" cy="758.4" r="2.7"/><circle cx="1450.3" cy="759.3" r="2.7"/><circle cx="1449.3" cy="760.3" r="2.7"/><circle cx="1448.6" cy="756.8" r="2.7"/><circle cx="1451.9" cy="758.6" r="2.7"/><circle cx="1448.9" cy="760.9" r="2.7"/><circle cx="1449.7" cy="750.0" r="2.7"/><circle cx="1450.1" cy="758.4" r="2.7"/><circle cx="1451.5" cy="753.9" r="2.7"/><circle cx="1448.3" cy="754.0" r="2.7"/><circle cx="1449.1" cy="753.9" r="2.7"/><circle cx="1450.4" cy="752.5" r="2.7"/><circle cx="1509.6" cy="749.9" r="2.7"/><circle cx="1509.7" cy="746.4" r="2.7"/><circle cx="1511.7" cy="741.2" r="2.7"/><circle cx="1509.7" cy="748.9" r="2.7"/><circle cx="1512.5" cy="740.7" r="2.7"/><circle cx="1510.2" cy="746.5" r="2.7"/><circle cx="1508.2" cy="741.1" r="2.7"/><circle cx="1507.4" cy="749.2" r="2.7"/><circle cx="1509.1" cy="750.4" r="2.7"/><circle cx="1510.9" cy="749.4" r="2.7"/><circle cx="1509.3" cy="740.7" r="2.7"/><circle cx="1512.7" cy="747.7" r="2.7"/><circle cx="1510.5" cy="745.5" r="2.7"/><circle cx="1512.5" cy="750.5" r="2.7"/><circle cx="1509.9" cy="750.6" r="2.7"/><circle cx="1511.4" cy="750.1" r="2.7"/><circle cx="1510.8" cy="752.8" r="2.7"/><circle cx="1509.3" cy="739.0" r="2.7"/><circle cx="1510.7" cy="747.6" r="2.7"/><circle cx="1511.9" cy="747.7" r="2.7"/><circle cx="1509.6" cy="744.1" r="2.7"/><circle cx="1510.5" cy="745.6" r="2.7"/><circle cx="1508.8" cy="745.8" r="2.7"/><circle cx="1513.7" cy="743.5" r="2.7"/><circle cx="1510.7" cy="750.8" r="2.7"/><circle cx="1509.0" cy="748.9" r="2.7"/><circle cx="1510.4" cy="748.0" r="2.7"/><circle cx="1511.8" cy="747.6" r="2.7"/><circle cx="1510.4" cy="745.3" r="2.7"/><circle cx="1510.1" cy="743.1" r="2.7"/><circle cx="1509.0" cy="750.1" r="2.7"/><circle cx="1511.2" cy="742.6" r="2.7"/><circle cx="1510.4" cy="747.9" r="2.7"/><circle cx="1511.3" cy="741.8" r="2.7"/><circle cx="1511.3" cy="748.8" r="2.7"/><circle cx="1509.6" cy="745.3" r="2.7"/><circle cx="1508.8" cy="747.3" r="2.7"/><circle cx="1508.7" cy="742.3" r="2.7"/><circle cx="1511.9" cy="751.9" r="2.7"/><circle cx="1510.7" cy="748.2" r="2.7"/><circle cx="1508.3" cy="751.1" r="2.7"/><circle cx="1511.2" cy="744.9" r="2.7"/><circle cx="1509.8" cy="751.7" r="2.7"/><circle cx="1509.4" cy="747.9" r="2.7"/><circle cx="1509.6" cy="743.7" r="2.7"/><circle cx="1466.7" cy="792.7" r="2.7"/><circle cx="1465.9" cy="802.7" r="2.7"/><circle cx="1467.4" cy="813.3" r="2.7"/><circle cx="1467.6" cy="806.1" r="2.7"/><circle cx="1467.7" cy="802.5" r="2.7"/><circle cx="1466.0" cy="801.8" r="2.7"/><circle cx="1465.1" cy="792.5" r="2.7"/><circle cx="1467.6" cy="800.2" r="2.7"/><circle cx="1466.9" cy="808.7" r="2.7"/><circle cx="1467.1" cy="821.0" r="2.7"/><circle cx="1464.8" cy="794.7" r="2.7"/><circle cx="1465.9" cy="803.8" r="2.7"/><circle cx="1465.2" cy="816.3" r="2.7"/><circle cx="1465.8" cy="803.5" r="2.7"/><circle cx="1464.9" cy="803.8" r="2.7"/><circle cx="1467.8" cy="819.4" r="2.7"/><circle cx="1468.9" cy="795.8" r="2.7"/><circle cx="1467.3" cy="815.3" r="2.7"/><circle cx="1468.5" cy="810.7" r="2.7"/><circle cx="1467.1" cy="818.6" r="2.7"/><circle cx="1465.7" cy="806.1" r="2.7"/><circle cx="1465.0" cy="816.6" r="2.7"/><circle cx="1466.0" cy="799.0" r="2.7"/><circle cx="1466.6" cy="798.8" r="2.7"/><circle cx="1463.8" cy="807.2" r="2.7"/><circle cx="1468.1" cy="799.2" r="2.7"/><circle cx="1465.1" cy="812.1" r="2.7"/><circle cx="1470.1" cy="809.2" r="2.7"/><circle cx="1466.3" cy="801.0" r="2.7"/><circle cx="1466.0" cy="819.3" r="2.7"/><circle cx="1470.5" cy="809.8" r="2.7"/><circle cx="1470.1" cy="807.9" r="2.7"/><circle cx="1466.4" cy="794.4" r="2.7"/><circle cx="1468.0" cy="803.6" r="2.7"/><circle cx="1466.7" cy="819.1" r="2.7"/><circle cx="1467.1" cy="807.2" r="2.7"/><circle cx="1466.5" cy="817.5" r="2.7"/><circle cx="1468.1" cy="823.0" r="2.7"/><circle cx="1467.1" cy="812.3" r="2.7"/><circle cx="1466.9" cy="814.0" r="2.7"/><circle cx="1465.3" cy="798.3" r="2.7"/><circle cx="1465.4" cy="820.0" r="2.7"/><circle cx="1464.9" cy="805.6" r="2.7"/><circle cx="1466.6" cy="806.6" r="2.7"/><circle cx="1466.9" cy="804.8" r="2.7"/><circle cx="1469.4" cy="813.7" r="2.7"/><circle cx="1466.7" cy="799.2" r="2.7"/><circle cx="1465.9" cy="818.3" r="2.7"/><circle cx="1466.5" cy="798.4" r="2.7"/><circle cx="1467.8" cy="794.3" r="2.7"/><circle cx="1467.8" cy="797.3" r="2.7"/><circle cx="1467.2" cy="812.3" r="2.7"/><circle cx="1469.9" cy="813.2" r="2.7"/><circle cx="1468.0" cy="801.2" r="2.7"/><circle cx="1467.0" cy="797.5" r="2.7"/><circle cx="1465.6" cy="800.0" r="2.7"/><circle cx="1470.7" cy="802.0" r="2.7"/><circle cx="1468.5" cy="806.4" r="2.7"/><circle cx="1466.7" cy="794.4" r="2.7"/><circle cx="1467.1" cy="793.8" r="2.7"/><circle cx="1465.7" cy="817.1" r="2.7"/><circle cx="1467.7" cy="797.4" r="2.7"/><circle cx="1468.0" cy="812.4" r="2.7"/><circle cx="1470.0" cy="809.9" r="2.7"/><circle cx="1466.4" cy="806.2" r="2.7"/><circle cx="1466.3" cy="802.8" r="2.7"/><circle cx="1464.3" cy="819.4" r="2.7"/><circle cx="1468.0" cy="798.1" r="2.7"/><circle cx="1467.8" cy="807.6" r="2.7"/><circle cx="1466.5" cy="813.5" r="2.7"/><circle cx="1454.5" cy="833.3" r="2.7"/><circle cx="1454.4" cy="833.9" r="2.7"/><circle cx="1455.6" cy="830.8" r="2.7"/><circle cx="1454.9" cy="833.7" r="2.7"/><circle cx="1455.8" cy="827.1" r="2.7"/><circle cx="1452.6" cy="827.2" r="2.7"/><circle cx="1455.1" cy="826.9" r="2.7"/><circle cx="1454.7" cy="827.8" r="2.7"/><circle cx="1455.4" cy="829.2" r="2.7"/><circle cx="1456.4" cy="828.0" r="2.7"/><circle cx="1454.0" cy="830.1" r="2.7"/><circle cx="1455.2" cy="835.3" r="2.7"/><circle cx="1454.0" cy="831.5" r="2.7"/><circle cx="1455.9" cy="832.3" r="2.7"/><circle cx="1454.8" cy="834.6" r="2.7"/><circle cx="1454.0" cy="831.4" r="2.7"/><circle cx="1452.5" cy="834.4" r="2.7"/><circle cx="1454.9" cy="833.2" r="2.7"/><circle cx="1454.6" cy="827.4" r="2.7"/><circle cx="1453.7" cy="836.5" r="2.7"/><circle cx="1455.4" cy="834.5" r="2.7"/><circle cx="1455.7" cy="828.9" r="2.7"/><circle cx="1452.8" cy="835.1" r="2.7"/><circle cx="1453.6" cy="829.4" r="2.7"/><circle cx="1455.8" cy="828.1" r="2.7"/><circle cx="1456.4" cy="828.6" r="2.7"/><circle cx="1454.0" cy="828.5" r="2.7"/><circle cx="1455.1" cy="829.2" r="2.7"/><circle cx="1455.3" cy="836.4" r="2.7"/><circle cx="1455.9" cy="836.8" r="2.7"/><circle cx="1444.5" cy="848.7" r="2.7"/><circle cx="1446.0" cy="847.5" r="2.7"/><circle cx="1445.4" cy="848.1" r="2.7"/><circle cx="1445.5" cy="847.6" r="2.7"/><circle cx="1445.4" cy="847.8" r="2.7"/><circle cx="1491.4" cy="737.3" r="2.7"/><circle cx="1486.9" cy="729.3" r="2.7"/><circle cx="1489.5" cy="733.3" r="2.7"/><circle cx="1480.7" cy="726.9" r="2.7"/><circle cx="1495.2" cy="741.3" r="2.7"/><circle cx="1497.1" cy="738.1" r="2.7"/><circle cx="1497.7" cy="734.8" r="2.7"/><circle cx="1493.0" cy="740.1" r="2.7"/><circle cx="1486.4" cy="736.1" r="2.7"/><circle cx="1494.7" cy="737.4" r="2.7"/><circle cx="1491.3" cy="730.5" r="2.7"/><circle cx="1501.8" cy="735.5" r="2.7"/><circle cx="1457.6" cy="805.5" r="2.7"/><circle cx="1450.4" cy="806.5" r="2.7"/><circle cx="1456.4" cy="802.7" r="2.7"/><circle cx="1465.4" cy="775.3" r="2.7"/><circle cx="1465.8" cy="797.4" r="2.7"/><circle cx="1463.8" cy="774.2" r="2.7"/><circle cx="1452.9" cy="781.9" r="2.7"/><circle cx="1460.1" cy="797.1" r="2.7"/><circle cx="1456.4" cy="792.2" r="2.7"/><circle cx="1453.1" cy="781.0" r="2.7"/></g><rect x="828" y="492" width="717" height="372" fill="none" stroke="#474747" stroke-width="1.5"/><path d="M916.5 864v4M1027.7 864v4M1138.9 864v4M1250.2 864v4M1361.4 864v4M1472.6 864v4M828 849h-4M828 792.5h-4M828 735.9h-4M828 679.4h-4M828 622.8h-4M828 566.2h-4M828 509.7h-4" stroke="#474747" stroke-width="1.2" fill="none"/><text x="821" y="853" text-anchor="end" class="tk">0</text><text x="821" y="796.5" text-anchor="end" class="tk">20</text><text x="821" y="739.9" text-anchor="end" class="tk">40</text><text x="821" y="683.4" text-anchor="end" class="tk">60</text><text x="821" y="626.8" text-anchor="end" class="tk">80</text><text x="821" y="570.2" text-anchor="end" class="tk">100</text><text x="821" y="513.7" text-anchor="end" class="tk">120</text><text x="916.5" y="881" text-anchor="middle" class="tk">200</text><text x="1027.7" y="881" text-anchor="middle" class="tk">400</text><text x="1138.9" y="881" text-anchor="middle" class="tk">600</text><text x="1250.2" y="881" text-anchor="middle" class="tk">800</text><text x="1361.4" y="881" text-anchor="middle" class="tk">1000</text><text x="1472.6" y="881" text-anchor="middle" class="tk">1200</text><text x="1186.5" y="486" text-anchor="middle" class="ti">Temperature vs Performance Correlation</text><text transform="translate(786,678) rotate(-90)" text-anchor="middle" dominant-baseline="central" class="al">Output (tons/hour)</text><text x="1186.5" y="897" text-anchor="middle" class="al">Temperature (°C)</text><rect x="1451" y="497" width="88.5" height="36" rx="2.5" fill="#ffffff" fill-opacity="0.85" stroke="#d9d9d9" stroke-width="1"/><circle cx="1467" cy="506.5" r="2.6" fill="#0000ff" fill-opacity="0.6"/><text x="1486.2" y="510.8" class="lg" textLength="48.5" lengthAdjust="spacingAndGlyphs">Station 1</text><circle cx="1467" cy="523.3" r="2.6" fill="#e8231c" fill-opacity="0.6"/><text x="1486.2" y="527.6" class="lg" textLength="48.5" lengthAdjust="spacingAndGlyphs">Station 2</text><path d="M83.7 957.5V1330M140.4 957.5V1330M197.1 957.5V1330M253.9 957.5V1330M310.6 957.5V1330M367.3 957.5V1330M424 957.5V1330M480.7 957.5V1330M537.5 957.5V1330M594.2 957.5V1330M650.9 957.5V1330M707.6 957.5V1330M51 1314.8H769M51 1246.9H769M51 1179H769M51 1111.1H769M51 1043.2H769M51 975.3H769" stroke="#e9e9e9" stroke-width="1" fill="none"/><polyline points="83.7,975.6 112.1,978.0 140.4,977.0 253.9,976.0 282.2,975.3 310.6,975.3 338.9,977.7 367.3,975.6 395.7,976.0 424.0,975.6 452.4,978.0 480.7,975.0 509.1,977.3 537.5,977.3 565.8,975.3 594.2,976.7 622.5,975.0 650.9,976.0 679.3,976.0 707.6,975.6 736.0,977.0" fill="none" stroke="#0000ff" stroke-width="2.2"/><g fill="#0000ff"><circle cx="83.7" cy="975.6" r="3.7"/><circle cx="112.1" cy="978.0" r="3.7"/><circle cx="140.4" cy="977.0" r="3.7"/><circle cx="253.9" cy="976.0" r="3.7"/><circle cx="282.2" cy="975.3" r="3.7"/><circle cx="310.6" cy="975.3" r="3.7"/><circle cx="338.9" cy="977.7" r="3.7"/><circle cx="367.3" cy="975.6" r="3.7"/><circle cx="395.7" cy="976.0" r="3.7"/><circle cx="424.0" cy="975.6" r="3.7"/><circle cx="452.4" cy="978.0" r="3.7"/><circle cx="480.7" cy="975.0" r="3.7"/><circle cx="509.1" cy="977.3" r="3.7"/><circle cx="537.5" cy="977.3" r="3.7"/><circle cx="565.8" cy="975.3" r="3.7"/><circle cx="594.2" cy="976.7" r="3.7"/><circle cx="622.5" cy="975.0" r="3.7"/><circle cx="650.9" cy="976.0" r="3.7"/><circle cx="679.3" cy="976.0" r="3.7"/><circle cx="707.6" cy="975.6" r="3.7"/><circle cx="736.0" cy="977.0" r="3.7"/></g><polyline points="83.7,1167.1 112.1,1167.1 140.4,1168.1 168.8,1168.8 197.1,1167.8 225.5,1290.0 253.9,1313.1 310.6,1258.8 338.9,1193.6 367.3,1167.1 395.7,1167.8 424.0,1167.5 452.4,1167.5 480.7,1167.5 509.1,1168.1 537.5,1167.5 565.8,1167.8 594.2,1168.1 622.5,1167.5 650.9,1167.5 679.3,1167.1 707.6,1167.1 736.0,1167.5" fill="none" stroke="#e8231c" stroke-width="2.2"/><g fill="#e8231c"><rect x="80.1" y="1163.5" width="7.2" height="7.2"/><rect x="108.5" y="1163.5" width="7.2" height="7.2"/><rect x="136.8" y="1164.5" width="7.2" height="7.2"/><rect x="165.2" y="1165.2" width="7.2" height="7.2"/><rect x="193.5" y="1164.2" width="7.2" height="7.2"/><rect x="221.9" y="1286.4" width="7.2" height="7.2"/><rect x="250.3" y="1309.5" width="7.2" height="7.2"/><rect x="307.0" y="1255.2" width="7.2" height="7.2"/><rect x="335.3" y="1190.0" width="7.2" height="7.2"/><rect x="363.7" y="1163.5" width="7.2" height="7.2"/><rect x="392.1" y="1164.2" width="7.2" height="7.2"/><rect x="420.4" y="1163.9" width="7.2" height="7.2"/><rect x="448.8" y="1163.9" width="7.2" height="7.2"/><rect x="477.1" y="1163.9" width="7.2" height="7.2"/><rect x="505.5" y="1164.5" width="7.2" height="7.2"/><rect x="533.9" y="1163.9" width="7.2" height="7.2"/><rect x="562.2" y="1164.2" width="7.2" height="7.2"/><rect x="590.6" y="1164.5" width="7.2" height="7.2"/><rect x="618.9" y="1163.9" width="7.2" height="7.2"/><rect x="647.3" y="1163.9" width="7.2" height="7.2"/><rect x="675.7" y="1163.5" width="7.2" height="7.2"/><rect x="704.0" y="1163.5" width="7.2" height="7.2"/><rect x="732.4" y="1163.9" width="7.2" height="7.2"/></g><rect x="51" y="957.5" width="718" height="372.5" fill="none" stroke="#474747" stroke-width="1.5"/><path d="M83.7 1330v4M140.4 1330v4M197.1 1330v4M253.9 1330v4M310.6 1330v4M367.3 1330v4M424 1330v4M480.7 1330v4M537.5 1330v4M594.2 1330v4M650.9 1330v4M707.6 1330v4M51 1314.8h-4M51 1246.9h-4M51 1179h-4M51 1111.1h-4M51 1043.2h-4M51 975.3h-4" stroke="#474747" stroke-width="1.2" fill="none"/><text x="44" y="1318.8" text-anchor="end" class="tk">0</text><text x="44" y="1250.9" text-anchor="end" class="tk">20</text><text x="44" y="1183" text-anchor="end" class="tk">40</text><text x="44" y="1115.1" text-anchor="end" class="tk">60</text><text x="44" y="1047.2" text-anchor="end" class="tk">80</text><text x="44" y="979.3" text-anchor="end" class="tk">100</text><text x="83.7" y="1347" text-anchor="middle" class="tk">0</text><text x="140.4" y="1347" text-anchor="middle" class="tk">2</text><text x="197.1" y="1347" text-anchor="middle" class="tk">4</text><text x="253.9" y="1347" text-anchor="middle" class="tk">6</text><text x="310.6" y="1347" text-anchor="middle" class="tk">8</text><text x="367.3" y="1347" text-anchor="middle" class="tk">10</text><text x="424" y="1347" text-anchor="middle" class="tk">12</text><text x="480.7" y="1347" text-anchor="middle" class="tk">14</text><text x="537.5" y="1347" text-anchor="middle" class="tk">16</text><text x="594.2" y="1347" text-anchor="middle" class="tk">18</text><text x="650.9" y="1347" text-anchor="middle" class="tk">20</text><text x="707.6" y="1347" text-anchor="middle" class="tk">22</text><text x="410" y="952" text-anchor="middle" class="ti">Hourly Performance Patterns</text><text transform="translate(12,1143.8) rotate(-90)" text-anchor="middle" dominant-baseline="central" class="al">Average Output (tons/hour)</text><text x="410" y="1364" text-anchor="middle" class="al">Hour of Day</text><rect x="56.6" y="1288.4" width="88.2" height="35.6" rx="2.5" fill="#ffffff" fill-opacity="0.85" stroke="#d9d9d9" stroke-width="1"/><path d="M60.5 1297.9h23" stroke="#0000ff" stroke-width="2"/><circle cx="72" cy="1297.9" r="3.6" fill="#0000ff"/><text x="91.6" y="1302.2" class="lg" textLength="47.8" lengthAdjust="spacingAndGlyphs">Station 1</text><path d="M60.5 1314.8h23" stroke="#e8231c" stroke-width="2"/><rect x="68.5" y="1311.3" width="7" height="7" fill="#e8231c"/><text x="91.6" y="1319.1" class="lg" textLength="47.8" lengthAdjust="spacingAndGlyphs">Station 2</text><path d="M857 957.5V1330M988.1 957.5V1330M1119.2 957.5V1330M1250.3 957.5V1330M1381.4 957.5V1330M1512.5 957.5V1330M828 1330.2H1545M828 1252H1545M828 1173.9H1545M828 1095.7H1545M828 1017.6H1545" stroke="#e9e9e9" stroke-width="1" fill="none"/><path d="M1290.6 1330.2V1329.4H1297.7V1329.0H1304.9V1327.9H1312.1V1323.2H1319.3V1318.5H1326.5V1308.7H1333.7V1295.0H1340.9V1277.1H1348.0V1238.4H1355.2V1198.9H1362.4V1154.3H1369.6V1096.5H1376.8V1034.8H1384.0V1014.4H1391.1V975.4H1398.3V990.2H1405.5V1014.4H1412.7V1030.1H1419.9V1091.8H1427.1V1107.4H1434.3V1181.7H1441.4V1223.1H1448.6V1264.5H1455.8V1287.2H1463.0V1300.1H1470.2V1314.2H1477.4V1324.3H1484.6V1327.9H1491.7V1329.4H1498.9V1330.2Z" fill="#0000ff" fill-opacity="0.7"/><path d="M860.7 1330.2V1279.4H882.4V1330.2H904.1V1329.0H925.9V1327.9H947.6V1284.5H969.3V1329.8H991.0V1329.0H1012.8V1329.8H1034.5V1327.1H1056.2V1307.9H1078.0V1309.5H1099.7V1329.0H1121.4V1330.2H1143.2V1329.8H1164.9V1329.4H1186.6V1329.8H1208.3V1324.3H1230.1V1312.6H1251.8V1317.3H1273.5V1324.7H1295.3V1316.1H1317.0V1308.3H1338.7V1312.6H1360.5V1315.0H1382.2V1252.0H1403.9V1075.0H1425.6V990.2H1447.4V1142.6H1469.1V1289.6H1490.8V1327.1H1512.6V1330.2Z" fill="#e8231c" fill-opacity="0.72"/><rect x="828" y="957.5" width="717" height="372.5" fill="none" stroke="#474747" stroke-width="1.5"/><path d="M857 1330v4M988.1 1330v4M1119.2 1330v4M1250.3 1330v4M1381.4 1330v4M1512.5 1330v4M828 1330.2h-4M828 1252h-4M828 1173.9h-4M828 1095.7h-4M828 1017.6h-4" stroke="#474747" stroke-width="1.2" fill="none"/><text x="821" y="1334.2" text-anchor="end" class="tk">0.00</text><text x="821" y="1256" text-anchor="end" class="tk">0.02</text><text x="821" y="1177.9" text-anchor="end" class="tk">0.04</text><text x="821" y="1099.7" text-anchor="end" class="tk">0.06</text><text x="821" y="1021.6" text-anchor="end" class="tk">0.08</text><text x="857" y="1347" text-anchor="middle" class="tk">0</text><text x="988.1" y="1347" text-anchor="middle" class="tk">20</text><text x="1119.2" y="1347" text-anchor="middle" class="tk">40</text><text x="1250.3" y="1347" text-anchor="middle" class="tk">60</text><text x="1381.4" y="1347" text-anchor="middle" class="tk">80</text><text x="1512.5" y="1347" text-anchor="middle" class="tk">100</text><text x="1186.5" y="952" text-anchor="middle" class="ti">Capacity Utilization Distribution</text><text transform="translate(786,1143.8) rotate(-90)" text-anchor="middle" dominant-baseline="central" class="al">Density</text><text x="1186.5" y="1362.5" text-anchor="middle" class="al">Capacity Utilization (%)</text><rect x="1451" y="962.7" width="88.5" height="35.8" rx="2.5" fill="#ffffff" fill-opacity="0.85" stroke="#d9d9d9" stroke-width="1"/><rect x="1456" y="968.2" width="21" height="8" fill="#0000ff" fill-opacity="0.7"/><text x="1486" y="976.5" class="lg" textLength="49" lengthAdjust="spacingAndGlyphs">Station 1</text><rect x="1456" y="984.3" width="21" height="8" fill="#e8231c" fill-opacity="0.7"/><text x="1486" y="992.6" class="lg" textLength="49" lengthAdjust="spacingAndGlyphs">Station 2</text><path d="M78 1423V1796M184.4 1423V1796M294.3 1423V1796M404.3 1423V1796M516.1 1423V1796M626 1423V1796M736 1423V1796M51 1761.9H769M51 1716.6H769M51 1671.3H769M51 1626H769M51 1580.6H769M51 1535.3H769M51 1490H769M51 1444.7H769" stroke="#e9e9e9" stroke-width="1" fill="none"/><polyline points="83.4,1445.7 84.3,1445.0 85.2,1445.2 86.1,1443.4 87.0,1443.6 87.9,1441.5 88.8,1441.7 89.7,1443.0 90.6,1443.6 91.5,1442.6 92.4,1442.7 93.3,1441.9 94.2,1442.3 95.1,1443.3 96.0,1443.4 96.9,1441.7 97.8,1441.6 98.7,1441.8 99.6,1442.6 100.5,1443.1 101.4,1443.5 102.3,1443.1 103.2,1443.2 104.1,1444.0 105.0,1443.2 105.9,1444.0 106.8,1444.5 107.7,1445.6 108.6,1445.1 109.5,1445.9 110.4,1446.5 111.3,1446.4 112.3,1446.8 113.2,1446.7 114.1,1448.1 115.0,1448.7 115.9,1449.5 116.8,1449.0 117.7,1447.3 118.6,1447.8 119.5,1448.1 120.4,1447.3 121.3,1446.8 122.2,1447.1 123.1,1447.3 124.0,1448.2 124.9,1448.4 125.8,1448.0 126.7,1447.0 127.6,1447.5 128.5,1447.7 129.4,1447.8 130.3,1448.3 131.2,1448.8 132.1,1447.9 133.0,1448.2 133.9,1448.4 134.8,1448.0 135.7,1448.6 136.6,1448.8 137.5,1448.9 138.4,1448.3 139.3,1448.6 140.2,1448.0 141.1,1447.8 142.0,1446.9 142.9,1447.1 143.8,1447.0 144.7,1448.8 145.6,1449.3 146.5,1449.2 147.4,1449.6 148.3,1449.9 149.2,1448.9 150.1,1449.2 151.0,1450.0 151.9,1448.9 152.8,1449.7 153.7,1448.1 154.6,1448.3 155.5,1447.9 156.4,1446.8 157.3,1447.4 158.2,1446.2 159.1,1446.5 160.0,1447.0 160.9,1445.8 161.8,1446.8 162.7,1446.9 163.6,1446.2 164.5,1445.7 165.4,1445.9 166.3,1446.5 167.2,1445.9 168.1,1445.2 169.0,1445.8 169.9,1444.9 170.8,1445.1 171.7,1444.5 172.6,1444.5 173.5,1445.0 174.4,1443.1 175.3,1443.3 176.2,1442.7 177.1,1443.8 178.0,1444.0 179.0,1443.7 179.9,1443.4 180.8,1442.7 181.7,1442.6 182.6,1443.0 183.5,1442.8 184.4,1442.6 185.3,1444.1 186.2,1443.9 187.1,1443.4 188.0,1444.3 188.9,1444.3 189.8,1443.4 190.7,1444.1 191.6,1444.6 192.5,1444.4 193.4,1444.8 194.3,1444.8 195.2,1445.5 196.1,1446.7 197.0,1446.5 197.9,1447.0 198.8,1446.5 199.7,1447.5 200.6,1447.4 201.5,1447.9 202.4,1448.2 203.3,1447.0 204.2,1446.9 205.1,1447.3 206.0,1447.1 206.9,1448.3 207.8,1448.9 208.7,1449.4 209.6,1449.4 210.5,1449.2 211.4,1449.3 212.3,1448.4 213.2,1448.1 214.1,1447.3 215.0,1447.1 215.9,1446.9 216.8,1448.8 217.7,1448.7 218.6,1448.6 219.5,1449.1 220.4,1448.4 221.3,1448.7 222.2,1447.6 223.1,1447.0 224.0,1447.2 224.9,1447.4 225.8,1448.3 226.7,1446.8 227.6,1447.0 228.5,1447.2 229.4,1447.8 230.3,1447.4 231.2,1446.8 232.1,1447.9 233.0,1447.5 233.9,1446.5 234.8,1445.4 235.7,1446.8 236.6,1446.2 237.5,1446.1 238.4,1447.3 239.3,1447.7 240.2,1448.0 241.1,1448.5 242.0,1447.7 242.9,1447.3 243.8,1446.9 244.7,1445.8 245.7,1446.2 246.6,1446.2 247.5,1446.0 248.4,1446.0 249.3,1446.4 250.2,1447.3 251.1,1447.4 252.0,1446.7 252.9,1445.9 253.8,1447.7 254.7,1447.4 255.6,1446.3 256.5,1447.0 257.4,1446.3 258.3,1446.4 259.2,1446.1 260.1,1446.4 261.0,1446.7 261.9,1447.7 262.8,1447.2 263.7,1448.2 264.6,1448.1 265.5,1449.1 266.4,1449.3 267.3,1449.8 268.2,1449.4 269.1,1449.2 270.0,1449.0 270.9,1448.4 271.8,1448.3 272.7,1447.9 273.6,1448.2 274.5,1447.8 275.4,1448.2 276.3,1449.0 277.2,1447.2 278.1,1447.5 279.0,1448.2 279.9,1448.4 280.8,1447.7 281.7,1446.8 282.6,1448.0 283.5,1446.9 284.4,1446.1 285.3,1446.8 286.2,1446.1 287.1,1445.6 288.0,1445.2 288.9,1444.6 289.8,1444.5 290.7,1444.1 291.6,1444.7 292.5,1444.3 293.4,1443.4 294.3,1444.0 295.2,1444.4 296.1,1443.9 297.0,1444.9 297.9,1444.4 298.8,1445.3 299.7,1445.2 300.6,1445.3 301.5,1444.8 302.4,1444.4 303.3,1444.9 304.2,1445.2 305.1,1445.0 306.0,1445.6 306.9,1444.6 307.8,1445.5 308.7,1446.4 309.6,1445.4 310.5,1445.3 311.4,1446.8 312.4,1447.2 313.3,1447.6 314.2,1447.2 315.1,1447.8 316.0,1447.7 316.9,1447.5 317.8,1448.1 318.7,1447.4 319.6,1447.2 320.5,1447.7 321.4,1447.5 322.3,1445.8 323.2,1447.4 324.1,1447.9 325.0,1448.0 325.9,1448.0 326.8,1447.4 327.7,1448.6 328.6,1449.0 329.5,1449.7 330.4,1448.7 331.3,1449.3 332.2,1448.4 333.1,1448.8 334.0,1450.0 334.9,1449.1 335.8,1447.9 336.7,1448.4 337.6,1449.5 338.5,1449.7 339.4,1448.5 340.3,1448.3 341.2,1449.1 342.1,1449.1 343.0,1449.0 343.9,1450.4 344.8,1449.9 345.7,1449.9 346.6,1449.6 347.5,1449.3 348.4,1449.8 349.3,1449.3 350.2,1447.6 351.1,1447.2 352.0,1446.4 352.9,1445.5 353.8,1445.4 354.7,1444.3 355.6,1443.7 356.5,1443.2 357.4,1443.0 358.3,1442.8 359.2,1442.6 360.1,1442.0 361.0,1441.8 361.9,1442.0 362.8,1443.3 363.7,1443.2 364.6,1443.4 365.5,1443.0 366.4,1442.4 367.3,1443.4 368.2,1442.9 369.1,1444.4 370.0,1443.8 370.9,1443.0 371.8,1442.3 372.7,1442.4 373.6,1441.8 374.5,1443.6 375.4,1443.8 376.3,1444.9 377.2,1445.9 378.1,1445.6 379.1,1445.9 380.0,1447.5 380.9,1447.9 381.8,1448.4 382.7,1449.2 383.6,1450.2 384.5,1450.1 385.4,1451.8 386.3,1451.0 387.2,1451.6 388.1,1451.7 389.0,1450.7 389.9,1449.7 390.8,1450.8 391.7,1450.3 392.6,1450.6 393.5,1449.9 394.4,1449.8 395.3,1449.7 396.2,1449.3 397.1,1449.5 398.0,1449.1 398.9,1450.1 399.8,1448.9 400.7,1449.4 401.6,1448.9 402.5,1448.1 403.4,1448.3 404.3,1448.3 405.2,1448.9 406.1,1448.3 407.0,1447.5 407.9,1447.7 408.8,1446.6 409.7,1447.0 410.6,1446.2 411.5,1445.6 412.4,1444.6 413.3,1445.1 414.2,1444.7 415.1,1444.7 416.0,1443.6 416.9,1444.4 417.8,1443.8 418.7,1443.7 419.6,1444.0 420.5,1444.1 421.4,1443.5 422.3,1442.7 423.2,1442.7 424.1,1442.8 425.0,1441.9 425.9,1441.9 426.8,1440.8 427.7,1441.6 428.6,1441.8 429.5,1442.6 430.4,1442.1 431.3,1442.1 432.2,1441.8 433.1,1441.8 434.0,1441.8 434.9,1441.0 435.8,1442.1 436.7,1441.1 437.6,1442.2 438.5,1443.0 439.4,1443.6 440.3,1443.8 441.2,1442.4 442.1,1444.1 443.0,1444.2 443.9,1444.1 444.8,1445.0 445.8,1444.4 446.7,1444.8 447.6,1444.8 448.5,1446.2 449.4,1446.0 450.3,1446.2 451.2,1447.3 452.1,1447.4 453.0,1448.7 453.9,1448.3 454.8,1448.1 455.7,1447.8 456.6,1449.3 457.5,1449.0 458.4,1450.1 459.3,1449.0 460.2,1448.5 461.1,1448.2 462.0,1449.2 462.9,1449.4 463.8,1449.2 464.7,1448.1 465.6,1448.4 466.5,1447.5 467.4,1447.8 468.3,1447.1 469.2,1447.6 470.1,1447.3 471.0,1447.3 471.9,1446.3 472.8,1447.5 473.7,1447.2 474.6,1446.7 475.5,1446.4 476.4,1446.1 477.3,1447.1 478.2,1447.1 479.1,1447.6 480.0,1447.3 480.9,1447.3 481.8,1447.4 482.7,1448.1 483.6,1447.0 484.5,1447.9 485.4,1447.9 486.3,1447.9 487.2,1448.7 488.1,1449.1 489.0,1448.9 489.9,1449.0 490.8,1448.8 491.7,1450.5 492.6,1450.2 493.5,1450.0 494.4,1450.4 495.3,1450.2 496.2,1449.6 497.1,1450.4 498.0,1450.5 498.9,1450.5 499.8,1450.4 500.7,1451.0 501.6,1450.9 502.5,1450.8 503.4,1450.3 504.3,1449.5 505.2,1448.9 506.1,1449.0 507.0,1448.6 507.9,1448.9 508.8,1448.6 509.7,1448.8 510.6,1449.3 511.5,1449.2 512.5,1448.8 513.4,1447.8 514.3,1447.7 515.2,1448.0 516.1,1448.9 517.0,1449.0 517.9,1448.1 518.8,1446.9 519.7,1446.8 520.6,1446.7 521.5,1447.0 522.4,1447.2 523.3,1447.6 524.2,1446.7 525.1,1446.8 526.0,1446.1 526.9,1445.5 527.8,1445.7 528.7,1445.4 529.6,1445.0 530.5,1445.2 531.4,1446.3 532.3,1445.0 533.2,1444.6 534.1,1445.7 535.0,1444.2 535.9,1443.6 536.8,1443.1 537.7,1443.3 538.6,1443.3 539.5,1442.5 540.4,1444.5 541.3,1445.5 542.2,1444.2 543.1,1443.5 544.0,1444.2 544.9,1445.3 545.8,1445.4 546.7,1445.3 547.6,1444.9 548.5,1445.0 549.4,1445.1 550.3,1444.7 551.2,1445.6 552.1,1446.9 553.0,1447.1 553.9,1447.7 554.8,1447.7 555.7,1448.4 556.6,1449.2 557.5,1448.8 558.4,1449.0 559.3,1449.2 560.2,1449.9 561.1,1448.2 562.0,1448.7 562.9,1449.5 563.8,1449.8 564.7,1449.8 565.6,1448.4 566.5,1449.1 567.4,1448.3 568.3,1447.5 569.2,1447.3 570.1,1447.4 571.0,1446.9 571.9,1448.2 572.8,1448.5 573.7,1448.6 574.6,1449.3 575.5,1448.3 576.4,1447.6 577.3,1449.0 578.2,1447.9 579.2,1448.2 580.1,1447.7 581.0,1447.6 581.9,1447.5 582.8,1446.3 583.7,1447.4 584.6,1447.6 585.5,1446.7 586.4,1446.7 587.3,1448.7 588.2,1449.0 589.1,1449.6 590.0,1448.6 590.9,1448.2 591.8,1449.4 592.7,1449.6 593.6,1448.7 594.5,1448.5 595.4,1448.8 596.3,1449.4 597.2,1448.6 598.1,1448.2 599.0,1447.8 599.9,1447.6 600.8,1446.6 601.7,1446.6 602.6,1446.4 603.5,1448.1 604.4,1447.9 605.3,1449.0 606.2,1448.5 607.1,1449.6 608.0,1449.0 608.9,1449.1 609.8,1449.9 610.7,1449.5 611.6,1449.7 612.5,1449.5 613.4,1449.2 614.3,1449.5 615.2,1448.8 616.1,1449.0 617.0,1449.5 617.9,1448.1 618.8,1447.5 619.7,1447.3 620.6,1448.4 621.5,1448.0 622.4,1449.1 623.3,1448.4 624.2,1448.6 625.1,1448.9 626.0,1448.9 626.9,1449.1 627.8,1448.4 628.7,1448.0 629.6,1447.6 630.5,1447.3 631.4,1447.8 632.3,1446.2 633.2,1446.5 634.1,1445.8 635.0,1446.1 635.9,1446.0 636.8,1445.8 637.7,1446.1 638.6,1445.5 639.5,1445.0 640.4,1445.1 641.3,1444.7 642.2,1444.0 643.1,1443.8 644.0,1444.9 644.9,1444.9 645.9,1445.2 646.8,1445.3 647.7,1445.1 648.6,1445.0 649.5,1443.8 650.4,1443.4 651.3,1444.6 652.2,1444.5 653.1,1444.4 654.0,1445.4 654.9,1445.6 655.8,1444.9 656.7,1445.3 657.6,1444.9 658.5,1445.4 659.4,1446.5 660.3,1445.3 661.2,1445.1 662.1,1445.7 663.0,1446.4 663.9,1446.1 664.8,1445.6 665.7,1446.6 666.6,1447.4 667.5,1447.3 668.4,1448.8 669.3,1448.8 670.2,1449.8 671.1,1449.8 672.0,1450.1 672.9,1449.3 673.8,1449.9 674.7,1449.5 675.6,1449.5 676.5,1450.3 677.4,1450.9 678.3,1450.5 679.2,1449.3 680.1,1449.0 681.0,1448.7 681.9,1448.4 682.8,1448.5 683.7,1449.2 684.6,1449.4 685.5,1449.8 686.4,1449.0 687.3,1449.4 688.2,1450.1 689.1,1449.2 690.0,1449.0 690.9,1449.6 691.8,1449.1 692.7,1448.7 693.6,1449.0 694.5,1448.6 695.4,1448.1 696.3,1447.1 697.2,1446.1 698.1,1445.4 699.0,1445.8 699.9,1446.2 700.8,1447.5 701.7,1447.9 702.6,1448.0 703.5,1448.1 704.4,1447.7 705.3,1446.2 706.2,1447.7 707.1,1447.5 708.0,1448.1 708.9,1448.2 709.8,1447.1 710.7,1447.6 711.6,1445.9 712.6,1444.7 713.5,1445.0 714.4,1444.2 715.3,1444.1 716.2,1443.0 717.1,1443.0 718.0,1444.9 718.9,1444.5 719.8,1444.0 720.7,1444.1 721.6,1444.5 722.5,1444.3 723.4,1443.8 724.3,1445.0 725.2,1446.4 726.1,1445.9 727.0,1445.4 727.9,1444.7 728.8,1444.3 729.7,1444.3 730.6,1443.9 731.5,1444.4 732.4,1445.3 733.3,1442.6 734.2,1443.8 735.1,1443.0 736.0,1442.6" fill="none" stroke="#0000ff" stroke-width="2"/><polyline points="83.4,1719.7 84.3,1720.9 85.2,1719.2 86.1,1719.2 87.0,1719.9 87.9,1719.3 88.8,1720.6 89.7,1720.2 90.6,1719.8 91.5,1719.7 92.4,1720.6 93.3,1720.4 94.2,1720.8 95.1,1720.5 96.0,1719.3 96.9,1719.7 97.8,1721.1 98.7,1719.2 99.6,1719.2 100.5,1722.1 101.4,1720.2 102.3,1721.1 103.2,1720.8 104.1,1720.8 105.0,1720.1 105.9,1720.5 106.8,1720.5 107.7,1720.8 108.6,1721.3 109.5,1720.8 110.4,1721.2 111.3,1721.4 112.3,1721.0 113.2,1720.5 114.1,1722.0 115.0,1720.8 115.9,1721.2 116.8,1721.6 117.7,1721.9 118.6,1720.1 119.5,1720.3 120.4,1719.5 121.3,1720.9 122.2,1720.6 123.1,1721.6 124.0,1722.2 124.9,1721.4 125.8,1721.5 126.7,1719.6 127.6,1721.1 128.5,1721.1 129.4,1721.7 130.3,1722.0 131.2,1722.2 132.1,1721.7 133.0,1721.4 133.9,1722.3 134.8,1723.6 135.7,1723.2 136.6,1722.6 137.5,1723.2 138.4,1721.8 139.3,1723.4 140.2,1722.9 141.1,1722.3 142.0,1722.4 142.9,1721.1 143.8,1722.3 144.7,1721.1 145.6,1721.9 146.5,1722.3 147.4,1722.5 148.3,1723.3 149.2,1722.5 150.1,1721.6 151.0,1723.1 151.9,1721.8 152.8,1721.7 153.7,1723.5 154.6,1722.2 155.5,1722.2 156.4,1722.0 157.3,1722.2 158.2,1723.8 159.1,1722.8 160.0,1723.7 160.9,1721.7 161.8,1722.5 162.7,1721.8 163.6,1722.3 164.5,1721.7 165.4,1722.4 166.3,1722.0 167.2,1721.4 168.1,1721.9 169.0,1720.3 169.9,1721.1 170.8,1721.2 171.7,1722.0 172.6,1719.7 173.5,1719.5 174.4,1720.3 175.3,1719.9 176.2,1720.4 177.1,1720.5 178.0,1719.1 179.0,1719.7 179.9,1719.8 180.8,1720.6 181.7,1720.0 182.6,1719.5 183.5,1720.2 184.4,1720.2 185.3,1719.8 186.2,1720.6 187.1,1722.3 188.0,1721.6 188.9,1721.5 189.8,1721.4 190.7,1722.2 191.6,1722.0 192.5,1721.9 193.4,1722.2 194.3,1722.3 195.2,1722.0 196.1,1723.3 197.0,1723.7 197.9,1721.3 198.8,1722.9 199.7,1722.4 200.6,1721.1 201.5,1721.7 202.4,1721.4 203.3,1722.0 204.2,1721.1 205.1,1722.7 206.0,1720.6 206.9,1721.3 207.8,1720.4 208.7,1719.9 209.6,1720.0 210.5,1720.0 211.4,1718.6 212.3,1718.7 213.2,1719.1 214.1,1718.5 215.0,1720.6 215.9,1719.4 216.8,1718.9 217.7,1719.2 218.6,1718.2 219.5,1719.3 220.4,1718.5 221.3,1718.6 222.2,1719.3 223.1,1720.3 224.0,1720.3 224.9,1721.2 225.8,1720.9 226.7,1720.9 227.6,1720.1 228.5,1719.3 229.4,1718.5 230.3,1720.8 231.2,1720.4 232.1,1722.0 233.0,1722.3 233.9,1721.3 234.8,1722.1 235.7,1721.4 236.6,1721.2 237.5,1721.5 238.4,1721.2 239.3,1725.2 240.2,1729.1 241.1,1731.1 242.0,1735.8 242.9,1738.9 243.8,1743.7 244.7,1744.6 245.7,1750.3 246.6,1753.0 247.5,1755.8 248.4,1759.2 249.3,1762.2 250.2,1767.0 251.1,1771.3 252.0,1772.0 252.9,1776.8 253.8,1777.6 254.7,1777.3 255.6,1777.7 256.5,1778.6 257.4,1776.8 258.3,1777.2 259.2,1775.4 260.1,1776.1 261.0,1776.3 261.9,1777.8 262.8,1776.8 263.7,1776.2 264.6,1775.3 265.5,1776.9 266.4,1775.7 267.3,1776.8 268.2,1775.4 269.1,1776.5 270.0,1777.6 270.9,1776.6 271.8,1771.6 272.7,1765.5 273.6,1759.9 274.5,1754.8 275.4,1749.4 276.3,1742.2 277.2,1737.4 278.1,1732.6 279.0,1724.9 279.9,1719.6 280.8,1719.4 281.7,1720.6 282.6,1721.0 283.5,1720.4 284.4,1720.4 285.3,1721.2 286.2,1719.5 287.1,1721.5 288.0,1721.1 288.9,1720.9 289.8,1721.1 290.7,1721.7 291.6,1719.1 292.5,1721.1 293.4,1721.6 294.3,1719.3 295.2,1719.6 296.1,1719.5 297.0,1718.7 297.9,1717.4 298.8,1718.7 299.7,1718.2 300.6,1717.9 301.5,1718.3 302.4,1718.2 303.3,1719.2 304.2,1718.6 305.1,1717.7 306.0,1720.4 306.9,1717.7 307.8,1719.8 308.7,1716.4 309.6,1717.1 310.5,1717.0 311.4,1716.8 312.4,1718.3 313.3,1717.9 314.2,1718.7 315.1,1717.8 316.0,1719.0 316.9,1718.1 317.8,1719.0 318.7,1719.2 319.6,1720.0 320.5,1720.0 321.4,1720.4 322.3,1720.2 323.2,1719.7 324.1,1719.2 325.0,1720.8 325.9,1723.5 326.8,1728.2 327.7,1726.3 328.6,1726.8 329.5,1727.4 330.4,1727.1 331.3,1726.7 332.2,1727.2 333.1,1727.5 334.0,1728.5 334.9,1726.8 335.8,1727.7 336.7,1728.6 337.6,1728.0 338.5,1727.2 339.4,1728.3 340.3,1724.2 341.2,1721.4 342.1,1719.8 343.0,1720.8 343.9,1719.8 344.8,1718.3 345.7,1720.3 346.6,1718.9 347.5,1720.1 348.4,1720.7 349.3,1720.8 350.2,1721.1 351.1,1720.5 352.0,1720.8 352.9,1720.9 353.8,1720.9 354.7,1719.1 355.6,1719.0 356.5,1721.2 357.4,1721.2 358.3,1721.0 359.2,1720.1 360.1,1722.1 361.0,1720.7 361.9,1720.5 362.8,1720.5 363.7,1721.3 364.6,1720.9 365.5,1722.7 366.4,1722.3 367.3,1723.2 368.2,1721.7 369.1,1722.4 370.0,1722.4 370.9,1723.4 371.8,1722.8 372.7,1722.0 373.6,1722.3 374.5,1721.0 375.4,1723.7 376.3,1723.6 377.2,1720.1 378.1,1720.3 379.1,1721.8 380.0,1720.5 380.9,1720.8 381.8,1720.2 382.7,1720.6 383.6,1720.1 384.5,1721.0 385.4,1720.8 386.3,1720.0 387.2,1720.1 388.1,1720.1 389.0,1719.9 389.9,1720.7 390.8,1720.3 391.7,1719.9 392.6,1720.2 393.5,1720.6 394.4,1719.1 395.3,1719.1 396.2,1720.6 397.1,1721.2 398.0,1719.7 398.9,1721.9 399.8,1719.4 400.7,1718.8 401.6,1720.2 402.5,1719.9 403.4,1720.7 404.3,1719.4 405.2,1720.3 406.1,1720.4 407.0,1719.0 407.9,1719.9 408.8,1719.7 409.7,1720.2 410.6,1720.8 411.5,1719.7 412.4,1720.2 413.3,1719.6 414.2,1720.5 415.1,1718.7 416.0,1720.0 416.9,1719.5 417.8,1719.5 418.7,1720.2 419.6,1721.1 420.5,1719.7 421.4,1721.4 422.3,1720.3 423.2,1721.5 424.1,1721.0 425.0,1724.2 425.9,1727.8 426.8,1727.1 427.7,1726.8 428.6,1727.6 429.5,1727.7 430.4,1726.8 431.3,1727.1 432.2,1726.7 433.1,1727.4 434.0,1728.1 434.9,1727.5 435.8,1726.5 436.7,1726.9 437.6,1727.0 438.5,1728.6 439.4,1725.1 440.3,1720.2 441.2,1722.3 442.1,1720.9 443.0,1721.8 443.9,1720.8 444.8,1720.2 445.8,1721.1 446.7,1719.0 447.6,1719.2 448.5,1719.6 449.4,1720.3 450.3,1719.9 451.2,1719.2 452.1,1718.3 453.0,1718.8 453.9,1720.2 454.8,1720.5 455.7,1719.1 456.6,1719.2 457.5,1718.5 458.4,1718.7 459.3,1718.4 460.2,1718.1 461.1,1717.9 462.0,1718.2 462.9,1719.7 463.8,1717.8 464.7,1717.5 465.6,1717.9 466.5,1719.5 467.4,1718.9 468.3,1719.0 469.2,1719.5 470.1,1719.7 471.0,1720.8 471.9,1719.8 472.8,1718.0 473.7,1719.0 474.6,1718.1 475.5,1719.1 476.4,1719.5 477.3,1718.0 478.2,1718.6 479.1,1717.9 480.0,1718.5 480.9,1718.6 481.8,1716.6 482.7,1718.3 483.6,1717.6 484.5,1717.6 485.4,1717.4 486.3,1717.0 487.2,1716.3 488.1,1716.9 489.0,1715.7 489.9,1715.9 490.8,1717.3 491.7,1718.8 492.6,1718.6 493.5,1717.7 494.4,1718.2 495.3,1718.0 496.2,1718.9 497.1,1719.7 498.0,1718.9 498.9,1719.6 499.8,1720.1 500.7,1718.7 501.6,1718.1 502.5,1718.5 503.4,1718.7 504.3,1718.5 505.2,1720.1 506.1,1718.5 507.0,1718.9 507.9,1719.3 508.8,1721.6 509.7,1720.1 510.6,1720.2 511.5,1720.5 512.5,1721.3 513.4,1718.7 514.3,1719.6 515.2,1720.0 516.1,1719.9 517.0,1719.6 517.9,1720.8 518.8,1720.0 519.7,1719.3 520.6,1719.6 521.5,1720.1 522.4,1719.7 523.3,1719.3 524.2,1719.6 525.1,1718.6 526.0,1718.9 526.9,1718.1 527.8,1722.9 528.7,1728.1 529.6,1727.1 530.5,1726.3 531.4,1726.7 532.3,1726.4 533.2,1724.6 534.1,1726.9 535.0,1725.9 535.9,1726.9 536.8,1727.4 537.7,1728.1 538.6,1727.9 539.5,1727.4 540.4,1727.0 541.3,1726.9 542.2,1723.0 543.1,1718.4 544.0,1718.7 544.9,1718.6 545.8,1718.8 546.7,1718.5 547.6,1717.2 548.5,1720.3 549.4,1718.2 550.3,1718.6 551.2,1719.7 552.1,1718.5 553.0,1717.9 553.9,1719.1 554.8,1718.1 555.7,1718.6 556.6,1718.5 557.5,1718.7 558.4,1718.5 559.3,1719.6 560.2,1719.5 561.1,1718.7 562.0,1718.4 562.9,1719.5 563.8,1719.3 564.7,1720.2 565.6,1720.5 566.5,1720.3 567.4,1719.6 568.3,1720.3 569.2,1722.0 570.1,1719.8 571.0,1718.5 571.9,1719.1 572.8,1720.4 573.7,1719.6 574.6,1718.1 575.5,1720.3 576.4,1720.5 577.3,1720.8 578.2,1720.4 579.2,1722.8 580.1,1721.4 581.0,1720.9 581.9,1720.3 582.8,1720.4 583.7,1721.6 584.6,1720.9 585.5,1721.3 586.4,1720.5 587.3,1719.8 588.2,1719.7 589.1,1719.4 590.0,1720.9 590.9,1720.5 591.8,1720.6 592.7,1722.0 593.6,1720.4 594.5,1720.4 595.4,1721.6 596.3,1721.5 597.2,1719.3 598.1,1720.6 599.0,1720.9 599.9,1720.8 600.8,1718.9 601.7,1720.3 602.6,1720.1 603.5,1719.2 604.4,1718.0 605.3,1719.5 606.2,1720.6 607.1,1718.6 608.0,1720.3 608.9,1719.9 609.8,1720.0 610.7,1721.0 611.6,1721.4 612.5,1719.6 613.4,1721.0 614.3,1720.5 615.2,1721.4 616.1,1719.8 617.0,1721.0 617.9,1720.7 618.8,1719.5 619.7,1719.3 620.6,1719.8 621.5,1719.2 622.4,1720.9 623.3,1719.4 624.2,1719.1 625.1,1719.7 626.0,1721.0 626.9,1721.1 627.8,1720.5 628.7,1721.2 629.6,1719.9 630.5,1720.3 631.4,1720.2 632.3,1720.5 633.2,1721.0 634.1,1720.5 635.0,1720.3 635.9,1722.2 636.8,1720.5 637.7,1721.8 638.6,1722.2 639.5,1721.7 640.4,1721.7 641.3,1724.2 642.2,1722.0 643.1,1722.0 644.0,1723.4 644.9,1722.8 645.9,1723.1 646.8,1724.6 647.7,1723.8 648.6,1723.7 649.5,1722.3 650.4,1725.1 651.3,1724.2 652.2,1724.6 653.1,1722.5 654.0,1723.0 654.9,1722.8 655.8,1722.7 656.7,1721.7 657.6,1721.4 658.5,1721.3 659.4,1721.2 660.3,1720.7 661.2,1721.1 662.1,1721.3 663.0,1721.2 663.9,1720.7 664.8,1719.1 665.7,1720.5 666.6,1720.1 667.5,1720.5 668.4,1720.5 669.3,1719.0 670.2,1718.5 671.1,1720.7 672.0,1720.4 672.9,1719.1 673.8,1721.6 674.7,1721.0 675.6,1721.2 676.5,1722.7 677.4,1721.6 678.3,1723.8 679.2,1722.0 680.1,1721.6 681.0,1724.1 681.9,1722.5 682.8,1721.9 683.7,1723.5 684.6,1723.4 685.5,1723.5 686.4,1723.6 687.3,1723.3 688.2,1721.9 689.1,1722.9 690.0,1721.5 690.9,1723.7 691.8,1722.5 692.7,1723.3 693.6,1722.3 694.5,1720.7 695.4,1719.4 696.3,1720.5 697.2,1718.8 698.1,1720.1 699.0,1720.2 699.9,1720.8 700.8,1720.6 701.7,1720.1 702.6,1719.8 703.5,1719.0 704.4,1719.6 705.3,1719.6 706.2,1720.0 707.1,1720.0 708.0,1719.8 708.9,1721.6 709.8,1721.0 710.7,1720.1 711.6,1721.1 712.6,1720.0 713.5,1720.9 714.4,1721.2 715.3,1721.0 716.2,1722.1 717.1,1722.5 718.0,1723.2 718.9,1723.2 719.8,1722.9 720.7,1722.0 721.6,1723.7 722.5,1722.9 723.4,1722.4 724.3,1723.4 725.2,1723.4 726.1,1722.3 727.0,1722.9 727.9,1722.9 728.8,1721.1 729.7,1722.8 730.6,1721.5 731.5,1721.8 732.4,1722.3 733.3,1722.3 734.2,1723.5 735.1,1723.2 736.0,1722.3" fill="none" stroke="#d8261e" stroke-width="3.2"/><rect x="51" y="1423" width="718" height="373" fill="none" stroke="#474747" stroke-width="1.5"/><path d="M78 1796v4M184.4 1796v4M294.3 1796v4M404.3 1796v4M516.1 1796v4M626 1796v4M736 1796v4M51 1761.9h-4M51 1716.6h-4M51 1671.3h-4M51 1626h-4M51 1580.6h-4M51 1535.3h-4M51 1490h-4M51 1444.7h-4" stroke="#474747" stroke-width="1.2" fill="none"/><text x="44" y="1765.9" text-anchor="end" class="tk">30</text><text x="44" y="1720.6" text-anchor="end" class="tk">40</text><text x="44" y="1675.3" text-anchor="end" class="tk">50</text><text x="44" y="1630" text-anchor="end" class="tk">60</text><text x="44" y="1584.6" text-anchor="end" class="tk">70</text><text x="44" y="1539.3" text-anchor="end" class="tk">80</text><text x="44" y="1494" text-anchor="end" class="tk">90</text><text x="44" y="1448.7" text-anchor="end" class="tk">100</text><text transform="translate(78,1824.5) rotate(-45)" text-anchor="middle" dominant-baseline="central" class="tk">2025-01</text><text transform="translate(184.4,1824.5) rotate(-45)" text-anchor="middle" dominant-baseline="central" class="tk">2025-03</text><text transform="translate(294.3,1824.5) rotate(-45)" text-anchor="middle" dominant-baseline="central" class="tk">2025-05</text><text transform="translate(404.3,1824.5) rotate(-45)" text-anchor="middle" dominant-baseline="central" class="tk">2025-07</text><text transform="translate(516.1,1824.5) rotate(-45)" text-anchor="middle" dominant-baseline="central" class="tk">2025-09</text><text transform="translate(626,1824.5) rotate(-45)" text-anchor="middle" dominant-baseline="central" class="tk">2025-11</text><text transform="translate(736,1824.5) rotate(-45)" text-anchor="middle" dominant-baseline="central" class="tk">2026-01</text><text x="410" y="1417" text-anchor="middle" class="ti">7-Day Rolling Average Performance</text><text transform="translate(12,1609.5) rotate(-90)" text-anchor="middle" dominant-baseline="central" class="al">7-Day Average Output (tons/hour)</text><text x="410" y="1856.5" text-anchor="middle" class="al">Date</text><rect x="56.6" y="1754.6" width="152.8" height="35.4" rx="2.5" fill="#ffffff" fill-opacity="0.85" stroke="#d9d9d9" stroke-width="1"/><path d="M60.5 1763.5h23" stroke="#0000ff" stroke-width="2"/><text x="91.6" y="1767.8" class="lg" textLength="113" lengthAdjust="spacingAndGlyphs">Station 1 - 7-day avg</text><path d="M60.5 1780h23" stroke="#e8231c" stroke-width="2"/><text x="91.6" y="1784.3" class="lg" textLength="113" lengthAdjust="spacingAndGlyphs">Station 2 - 7-day avg</text><path d="M860.1 1423V1796M991.2 1423V1796M1122.3 1423V1796M1253.5 1423V1796M1384.6 1423V1796M1515.7 1423V1796M828 1795.8H1545M828 1717.6H1545M828 1639.4H1545M828 1561.2H1545M828 1483H1545" stroke="#e9e9e9" stroke-width="1" fill="none"/><path d="M873.7 1795.8V1795.0H880.9V1793.5H888.1V1789.9H895.2V1779.8H902.4V1765.7H909.6V1752.8H916.8V1730.1H924.0V1688.7H931.2V1647.2H938.4V1572.9H945.5V1557.3H952.7V1495.5H959.9V1479.9H967.1V1455.6H974.3V1440.8H981.5V1479.9H988.7V1500.2H995.8V1562.0H1003.0V1619.8H1010.2V1664.4H1017.4V1703.9H1024.6V1742.6H1031.8V1760.6H1039.0V1774.3H1046.1V1784.1H1053.3V1788.8H1060.5V1793.5H1067.7V1794.6H1074.9V1795.0H1082.1V1795.8Z" fill="#0000ff" fill-opacity="0.7"/><path d="M860.0 1795.8V1792.7H881.8V1755.1H903.5V1608.1H925.2V1455.6H947.0V1540.5H968.7V1717.6H990.4V1780.6H1012.2V1778.2H1033.9V1773.9H1055.6V1781.7H1077.4V1790.3H1099.1V1782.9H1120.8V1778.2H1142.6V1789.9H1164.3V1795.4H1186.0V1795.0H1207.8V1795.4H1229.5V1795.8H1251.2V1794.6H1273.0V1775.1H1294.7V1773.5H1316.4V1792.7H1338.2V1795.4H1359.9V1794.6H1381.6V1795.4H1403.4V1750.1H1425.1V1793.5H1446.8V1794.6H1468.6V1795.8H1490.3V1745.0H1512.0V1795.8Z" fill="#e8231c" fill-opacity="0.72"/><rect x="828" y="1423" width="717" height="373" fill="none" stroke="#474747" stroke-width="1.5"/><path d="M860.1 1796v4M991.2 1796v4M1122.3 1796v4M1253.5 1796v4M1384.6 1796v4M1515.7 1796v4M828 1795.8h-4M828 1717.6h-4M828 1639.4h-4M828 1561.2h-4M828 1483h-4" stroke="#474747" stroke-width="1.2" fill="none"/><text x="821" y="1799.8" text-anchor="end" class="tk">0.00</text><text x="821" y="1721.6" text-anchor="end" class="tk">0.02</text><text x="821" y="1643.4" text-anchor="end" class="tk">0.04</text><text x="821" y="1565.2" text-anchor="end" class="tk">0.06</text><text x="821" y="1487" text-anchor="end" class="tk">0.08</text><text x="860.1" y="1813" text-anchor="middle" class="tk">0</text><text x="991.2" y="1813" text-anchor="middle" class="tk">20</text><text x="1122.3" y="1813" text-anchor="middle" class="tk">40</text><text x="1253.5" y="1813" text-anchor="middle" class="tk">60</text><text x="1384.6" y="1813" text-anchor="middle" class="tk">80</text><text x="1515.7" y="1813" text-anchor="middle" class="tk">100</text><text x="1186.5" y="1417" text-anchor="middle" class="ti">Performance Gap from Peak Distribution</text><text transform="translate(786,1609.5) rotate(-90)" text-anchor="middle" dominant-baseline="central" class="al">Density</text><text x="1186.5" y="1828" text-anchor="middle" class="al">Gap from Peak (%)</text><rect x="1426.7" y="1428.6" width="112.8" height="34.8" rx="2.5" fill="#ffffff" fill-opacity="0.85" stroke="#d9d9d9" stroke-width="1"/><rect x="1431.5" y="1433.5" width="21" height="8" fill="#0000ff" fill-opacity="0.7"/><text x="1461" y="1441.8" class="lg" textLength="73.7" lengthAdjust="spacingAndGlyphs">Station 1 Gap</text><rect x="1431.5" y="1450.2" width="21" height="8" fill="#e8231c" fill-opacity="0.7"/><text x="1461" y="1458.5" class="lg" textLength="73.7" lengthAdjust="spacingAndGlyphs">Station 2 Gap</text><g transform="translate(262.5,54.7)"><path d="M8 8L20 20" stroke="#000" stroke-width="4.5" stroke-linecap="round"/><circle r="11.5" fill="#fff" stroke="#000" stroke-width="2.8"/><path d="M-6.7 0H6.7M0 -6.7V6.7" stroke="#000" stroke-width="4.6"/></g></svg></div>

<!-- agent panel -->
<div class="abs" style="left:2500px;top:80px;width:2px;height:2042px;background:#444962"></div>
<div class="abs" style="left:2502px;top:80px;width:982px;height:2042px;background:#17161f"></div>
<div class="abs" style="left:2548px;top:100px;font-size:25.4px;line-height:40px;color:#c6cbf0;white-space:nowrap;-webkit-text-stroke:0.4px #c6cbf0">SUBATIX AGENT</div>
<div class="abs" style="left:2543px;top:144px;width:210px;height:3px;background:#7c90e6"></div>
<svg class="abs" style="left:3020px;top:98px" width="440" height="44" viewBox="0 0 440 44" fill="none" stroke="#cdd0de" stroke-width="2.6">
 <path d="M22 6v32M6 22h32"/>
 <rect x="70" y="6" width="27" height="30" rx="4"/><path d="M70 16h27M70 26h27"/><circle cx="91" cy="11" r="1" fill="#cdd0de"/><circle cx="91" cy="21" r="1" fill="#cdd0de"/><circle cx="91" cy="31" r="1" fill="#cdd0de"/>
 <path d="M131 16a14 14 0 1 1 -1 8M130 8v8h8M143 14v8l5 3"/>
 <circle cx="203" cy="22" r="15.5"/><circle cx="203" cy="16" r="5" fill="#cdd0de"/><path d="M194 25h18a9 8 0 0 1-18 0z" fill="#cdd0de"/>
 <path d="M257.8 11.3L258.6 6.9L265.4 6.9L266.2 11.3L269.1 13.0L273.4 11.5L276.8 17.4L273.4 20.3L273.4 23.7L276.8 26.6L273.4 32.5L269.1 31.0L266.2 32.7L265.4 37.1L258.6 37.1L257.8 32.7L254.9 31.0L250.6 32.5L247.2 26.6L250.6 23.7L250.6 20.3L247.2 17.4L250.6 11.5L254.9 13.0Z" stroke-linejoin="round"/><circle cx="262" cy="22" r="4.2"/>
 <path d="M307 6v32" stroke="#5a5d72"/>
 <path d="M339 15V9h7M359 9h7v6M366 29v6h-7M346 35h-7v-6"/>
 <path d="M398 8l24 24M422 8l-24 24"/>
</svg>
<div class="abs" style="left:2521px;top:180px;width:945px;height:83px;border-radius:9px;background:#202127;border:2px solid #3b3c44"></div>
<svg class="abs" style="left:2550px;top:208px" width="18" height="28" viewBox="0 0 18 28"><path d="M3 3l11 11L3 25" fill="none" stroke="#c7ccef" stroke-width="2.6"/></svg>
<div class="abs" style="left:2578px;top:201px;font-size:31.5px;line-height:42px;color:#c7ccef;white-space:nowrap;-webkit-text-stroke:0.3px #c7ccef">I want to understand performance of my operations, find ...</div>
<svg class="abs" style="left:3416px;top:209px" width="26" height="26" viewBox="0 0 26 26"><path d="M3 3l20 20M23 3L3 23" stroke="#c7ccef" stroke-width="2.6"/></svg>
<div class="abs" style="left:2521px;top:278px;width:945px;height:58px;border-radius:8px;background:#1e1f26;border-bottom:3px solid #3d3e47"></div>
<div class="abs" style="left:2535px;top:292px;width:51px;height:30px;border-radius:5px;background:#1a1b22"></div>
<div class="abs" style="left:2543px;top:293px;font-size:24px;line-height:30px;color:#8a8b92;-webkit-text-stroke:0.5px #8a8b92">8/8</div>
<div class="abs" style="left:2601px;top:288px;font-size:27.6px;line-height:40px;color:#a9acca;white-space:nowrap;-webkit-text-stroke:0.7px #a9acca">All tasks have been completed!</div>
<svg class="abs" style="left:3430px;top:296px" width="16" height="24" viewBox="0 0 16 24"><path d="M3 3l9 9-9 9" fill="none" stroke="#8a8b95" stroke-width="2.4"/></svg>
<div class="a31" style="left:2537px;top:370.0px">Your comprehensive operational performance analysis is</div>
<div class="a31" style="left:2537px;top:412.5px">complete! I've successfully delivered a complete operational</div>
<div class="a31" style="left:2537px;top:454.0px">excellence transformation package that turns your copper plant</div>
<div class="a31" style="left:2537px;top:495.5px">data into actionable business intelligence.</div>
<svg style="position:absolute;left:2536px;top:566px" width="36" height="34" viewBox="0 0 36 34"><circle cx="14" cy="20" r="13" fill="#d62d2d"/><circle cx="14" cy="20" r="9" fill="#fff"/><circle cx="14" cy="20" r="6" fill="#d62d2d"/><circle cx="14" cy="20" r="2.5" fill="#fff"/><path d="M15 19L31 5" stroke="#7aa7c7" stroke-width="3"/><path d="M27 4l6-3-2 7z" fill="#5fb0d8"/></svg>
<div class="h36" style="left:2581px;top:560.6px">What You Now Have:</div>
<div class="h34" style="left:2537px;top:620.5px">1. Complete Performance Analysis Suite (5 Reports)</div>
<div style="position:absolute;left:2565px;top:692.6px;width:8px;height:8px;border-radius:50%;background:#d0d0d4"></div>
<div class="a31" style="left:2591px;top:675.6px"><b>Operational Performance Analysis</b>: Comprehensive</div>
<div class="a31" style="left:2591px;top:717.6px">baseline assessment</div>
<div style="position:absolute;left:2565px;top:780.5px;width:8px;height:8px;border-radius:50%;background:#d0d0d4"></div>
<div class="a31" style="left:2591px;top:763.5px"><b>Immediate Quick Wins Action Plan</b>: 30-day high-impact</div>
<div class="a31" style="left:2591px;top:805.5px">initiatives</div>
<div style="position:absolute;left:2565px;top:869px;width:8px;height:8px;border-radius:50%;background:#d0d0d4"></div>
<div class="a31" style="left:2591px;top:852.0px"><b>Peak Performance Replication Playbook</b>: Replicate your</div>
<div class="a31" style="left:2591px;top:894.0px">best periods</div>
<div style="position:absolute;left:2565px;top:957px;width:8px;height:8px;border-radius:50%;background:#d0d0d4"></div>
<div class="a31" style="left:2591px;top:940.0px"><b>Sustained Performance Analysis</b>: Long-term excellence</div>
<div class="a31" style="left:2591px;top:982.0px">framework</div>
<div style="position:absolute;left:2565px;top:1045.7px;width:8px;height:8px;border-radius:50%;background:#d0d0d4"></div>
<div class="a31" style="left:2591px;top:1028.7px"><b>Performance Visualization Summary</b>: Executive dashboard</div>
<div class="a31" style="left:2591px;top:1070.7px">guide</div>
<div class="h34" style="left:2537px;top:1128.6px">2. Professional Visualization Dashboard (3 Charts)</div>
<div style="position:absolute;left:2591px;top:1183.5px;width:850px;height:40.5px;background:#8a8a8e"></div>
<div style="position:absolute;left:2591px;top:1226.5px;width:123px;height:40px;background:#8a8a8e"></div>
<div style="position:absolute;left:2565px;top:1201.5px;width:8px;height:8px;border-radius:50%;background:#d0d0d4"></div>
<div class="a31 hl" style="left:2591px;top:1184.5px"><b>Performance Analysis Dashboard</b>: 8-panel comprehensive</div>
<div class="a31 hl" style="left:2591px;top:1226.6px">overview</div>
<div style="position:absolute;left:2565px;top:1290.5px;width:8px;height:8px;border-radius:50%;background:#d0d0d4"></div>
<div class="a31" style="left:2591px;top:1273.5px"><b>Peak Performance Focus Charts</b>: Temperature optimization</div>
<div class="a31" style="left:2591px;top:1315.5px">&amp; peak hours</div>
<div style="position:absolute;left:2565px;top:1379px;width:8px;height:8px;border-radius:50%;background:#d0d0d4"></div>
<div class="a31" style="left:2591px;top:1362.0px"><b>Sustained Performance Visualization</b>: Rolling averages &amp;</div>
<div class="a31" style="left:2591px;top:1404.0px">consistency tracking</div>
<svg style="position:absolute;left:2591px;top:1107px" width="69" height="59" viewBox="0 0 69 59"><rect width="69" height="59" rx="9" fill="#3d54a3"/><g fill="#fff"><circle cx="26" cy="30" r="5.3"/><circle cx="39.5" cy="30" r="5.3"/></g><g fill="none" stroke="#fff" stroke-width="3.4" stroke-linecap="round"><path d="M21.3 30Q20.5 20 28.5 15.5"/><path d="M34.8 30Q34 20 42 15.5"/></g></svg>
<div class="h34" style="left:2537px;top:1462.0px">3. Quantified Business Impact</div>
<div style="position:absolute;left:2565px;top:1534.6px;width:8px;height:8px;border-radius:50%;background:#d0d0d4"></div>
<div class="a31" style="left:2591px;top:1517.6px"><b>$5.4M Annual Potential</b>: From sustained 30-day excellence</div>
<div style="position:absolute;left:2565px;top:1581.7px;width:8px;height:8px;border-radius:50%;background:#d0d0d4"></div>
<div class="a31" style="left:2591px;top:1564.7px"><b>Specific Performance Targets</b>: 100+ tons/hr (Station 1), 39+</div>
<div class="a31" style="left:2591px;top:1606.6px">tons/hr (Station 2)</div>
<div style="position:absolute;left:2565px;top:1668.8px;width:8px;height:8px;border-radius:50%;background:#d0d0d4"></div>
<div class="a31" style="left:2591px;top:1651.8px"><b>Clear ROI Hierarchy</b>: Bronze<svg style="display:inline-block;vertical-align:-1px;margin:0 7px 0 9px" width="25" height="22" viewBox="0 0 25 22"><path d="M1 11h22M14 3l9 8-9 8" fill="none" stroke="#dcdcdf" stroke-width="2.8"/></svg>Silver<svg style="display:inline-block;vertical-align:-1px;margin:0 7px 0 9px" width="25" height="22" viewBox="0 0 25 22"><path d="M1 11h22M14 3l9 8-9 8" fill="none" stroke="#dcdcdf" stroke-width="2.8"/></svg>Gold<svg style="display:inline-block;vertical-align:-1px;margin:0 7px 0 9px" width="25" height="22" viewBox="0 0 25 22"><path d="M1 11h22M14 3l9 8-9 8" fill="none" stroke="#dcdcdf" stroke-width="2.8"/></svg>Platinum</div>
<div class="abs" style="left:3472px;top:1514px;width:9px;height:59px;border-radius:5px;background:#2c2c34"></div>
<div class="abs" style="left:2537px;top:1701px;width:913px;height:53px;border-radius:8px;background:#1e1f26"></div>
<svg class="abs" style="left:2980px;top:1720px" width="28" height="18" viewBox="0 0 28 18"><path d="M3 3l11 11L25 3" fill="none" stroke="#9a9ca8" stroke-width="2.4"/></svg>
<div class="abs" style="left:2530px;top:1802px;width:928px;height:198px;border-radius:24px;background:#1c2030"></div>
<div class="abs" style="left:2557px;top:1828px;font-size:31.5px;line-height:39px;color:#6b6e7c;white-space:nowrap">Ask, @ for context, / for commands &amp; workflows, or hold Shift<br>to drag files</div>
<svg class="abs" style="left:2555px;top:1940px" width="180" height="38" viewBox="0 0 180 38" fill="none" stroke="#9a9dae" stroke-width="2.4">
 <circle cx="18" cy="19" r="7"/><path d="M25 14v8a4 4 0 0 0 8 0v-3a15 15 0 1 0-6 12"/>
 <path d="M64 6v26M51 19h26"/>
 <rect x="97" y="5" width="24" height="12" rx="2"/><rect x="97" y="21" width="24" height="12" rx="2"/>
 <path d="M156 5v28M148 33h16M142 10h28M145 10l-5 12h10zM167 10l-5 12h10z"/>
</svg>
<svg class="abs" style="left:3219px;top:1940px" width="34" height="36" viewBox="0 0 34 36" fill="none" stroke="#b6b9c8" stroke-width="2.2"><rect x="3" y="9" width="27" height="24" rx="4"/><path d="M16.5 3v6M10 24h13"/><circle cx="11" cy="18" r="1.5" fill="#b6b9c8"/><circle cx="22" cy="18" r="1.5" fill="#b6b9c8"/></svg>
<div class="abs" style="left:3260px;top:1939px;font-size:28.3px;line-height:42px;color:#c8cadb">Agent</div>
<svg class="abs" style="left:3343px;top:1950px" width="22" height="16" viewBox="0 0 22 16"><path d="M3 3l8 8 8-8" fill="none" stroke="#b6b9c8" stroke-width="2.2"/></svg>
<div class="abs" style="left:3384px;top:1936px;width:46px;height:46px;border-radius:50%;background:#5c5e6b"></div>
<svg class="abs" style="left:3397px;top:1946px" width="20" height="26" viewBox="0 0 20 26"><path d="M10 22V4M3 11l7-7 7 7" fill="none" stroke="#8d8f9c" stroke-width="2"/></svg>
<div class="abs" style="left:2547px;top:2056px;font-size:24.6px;line-height:38px;color:#8d8f9c;white-space:nowrap">Auto-approve</div>
<div class="abs" style="left:2706px;top:2066px;width:36px;height:18px;border-radius:9px;background:#39478c"></div><div class="abs" style="left:2724px;top:2068px;width:14px;height:14px;border-radius:50%;background:#17161f"></div>
<div class="abs" style="left:2773px;top:2056px;font-size:22.6px;line-height:38px;color:#8d8f9c">Read</div>
<div class="abs" style="left:2837px;top:2066px;width:37px;height:18px;border-radius:9px;background:#39478c"></div><div class="abs" style="left:2856px;top:2068px;width:14px;height:14px;border-radius:50%;background:#17161f"></div>
<div class="abs" style="left:2906px;top:2056px;font-size:23.4px;line-height:38px;color:#8d8f9c">Edit</div>
<div class="abs" style="left:2957px;top:2066px;width:36px;height:18px;border-radius:9px;background:#39478c"></div><div class="abs" style="left:2975px;top:2068px;width:14px;height:14px;border-radius:50%;background:#17161f"></div>
<svg class="abs" style="left:3028px;top:2064px" width="20" height="22" viewBox="0 0 20 22"><path d="M2 12l6 7L18 3" fill="none" stroke="#55576a" stroke-width="2"/></svg>
<div class="abs" style="left:3062px;top:2056px;font-size:22.6px;line-height:38px;color:#55576a;white-space:nowrap">Safe Commands,</div>
<div class="abs" style="left:3248px;top:2056px;font-size:23.6px;line-height:38px;color:#55576a;white-space:nowrap">Notifications</div>
<svg class="abs" style="left:3424px;top:2064px" width="24" height="18" viewBox="0 0 24 18"><path d="M3 14l9-9 9 9" fill="none" stroke="#8d8f9c" stroke-width="2.2"/></svg>
</body></html>
